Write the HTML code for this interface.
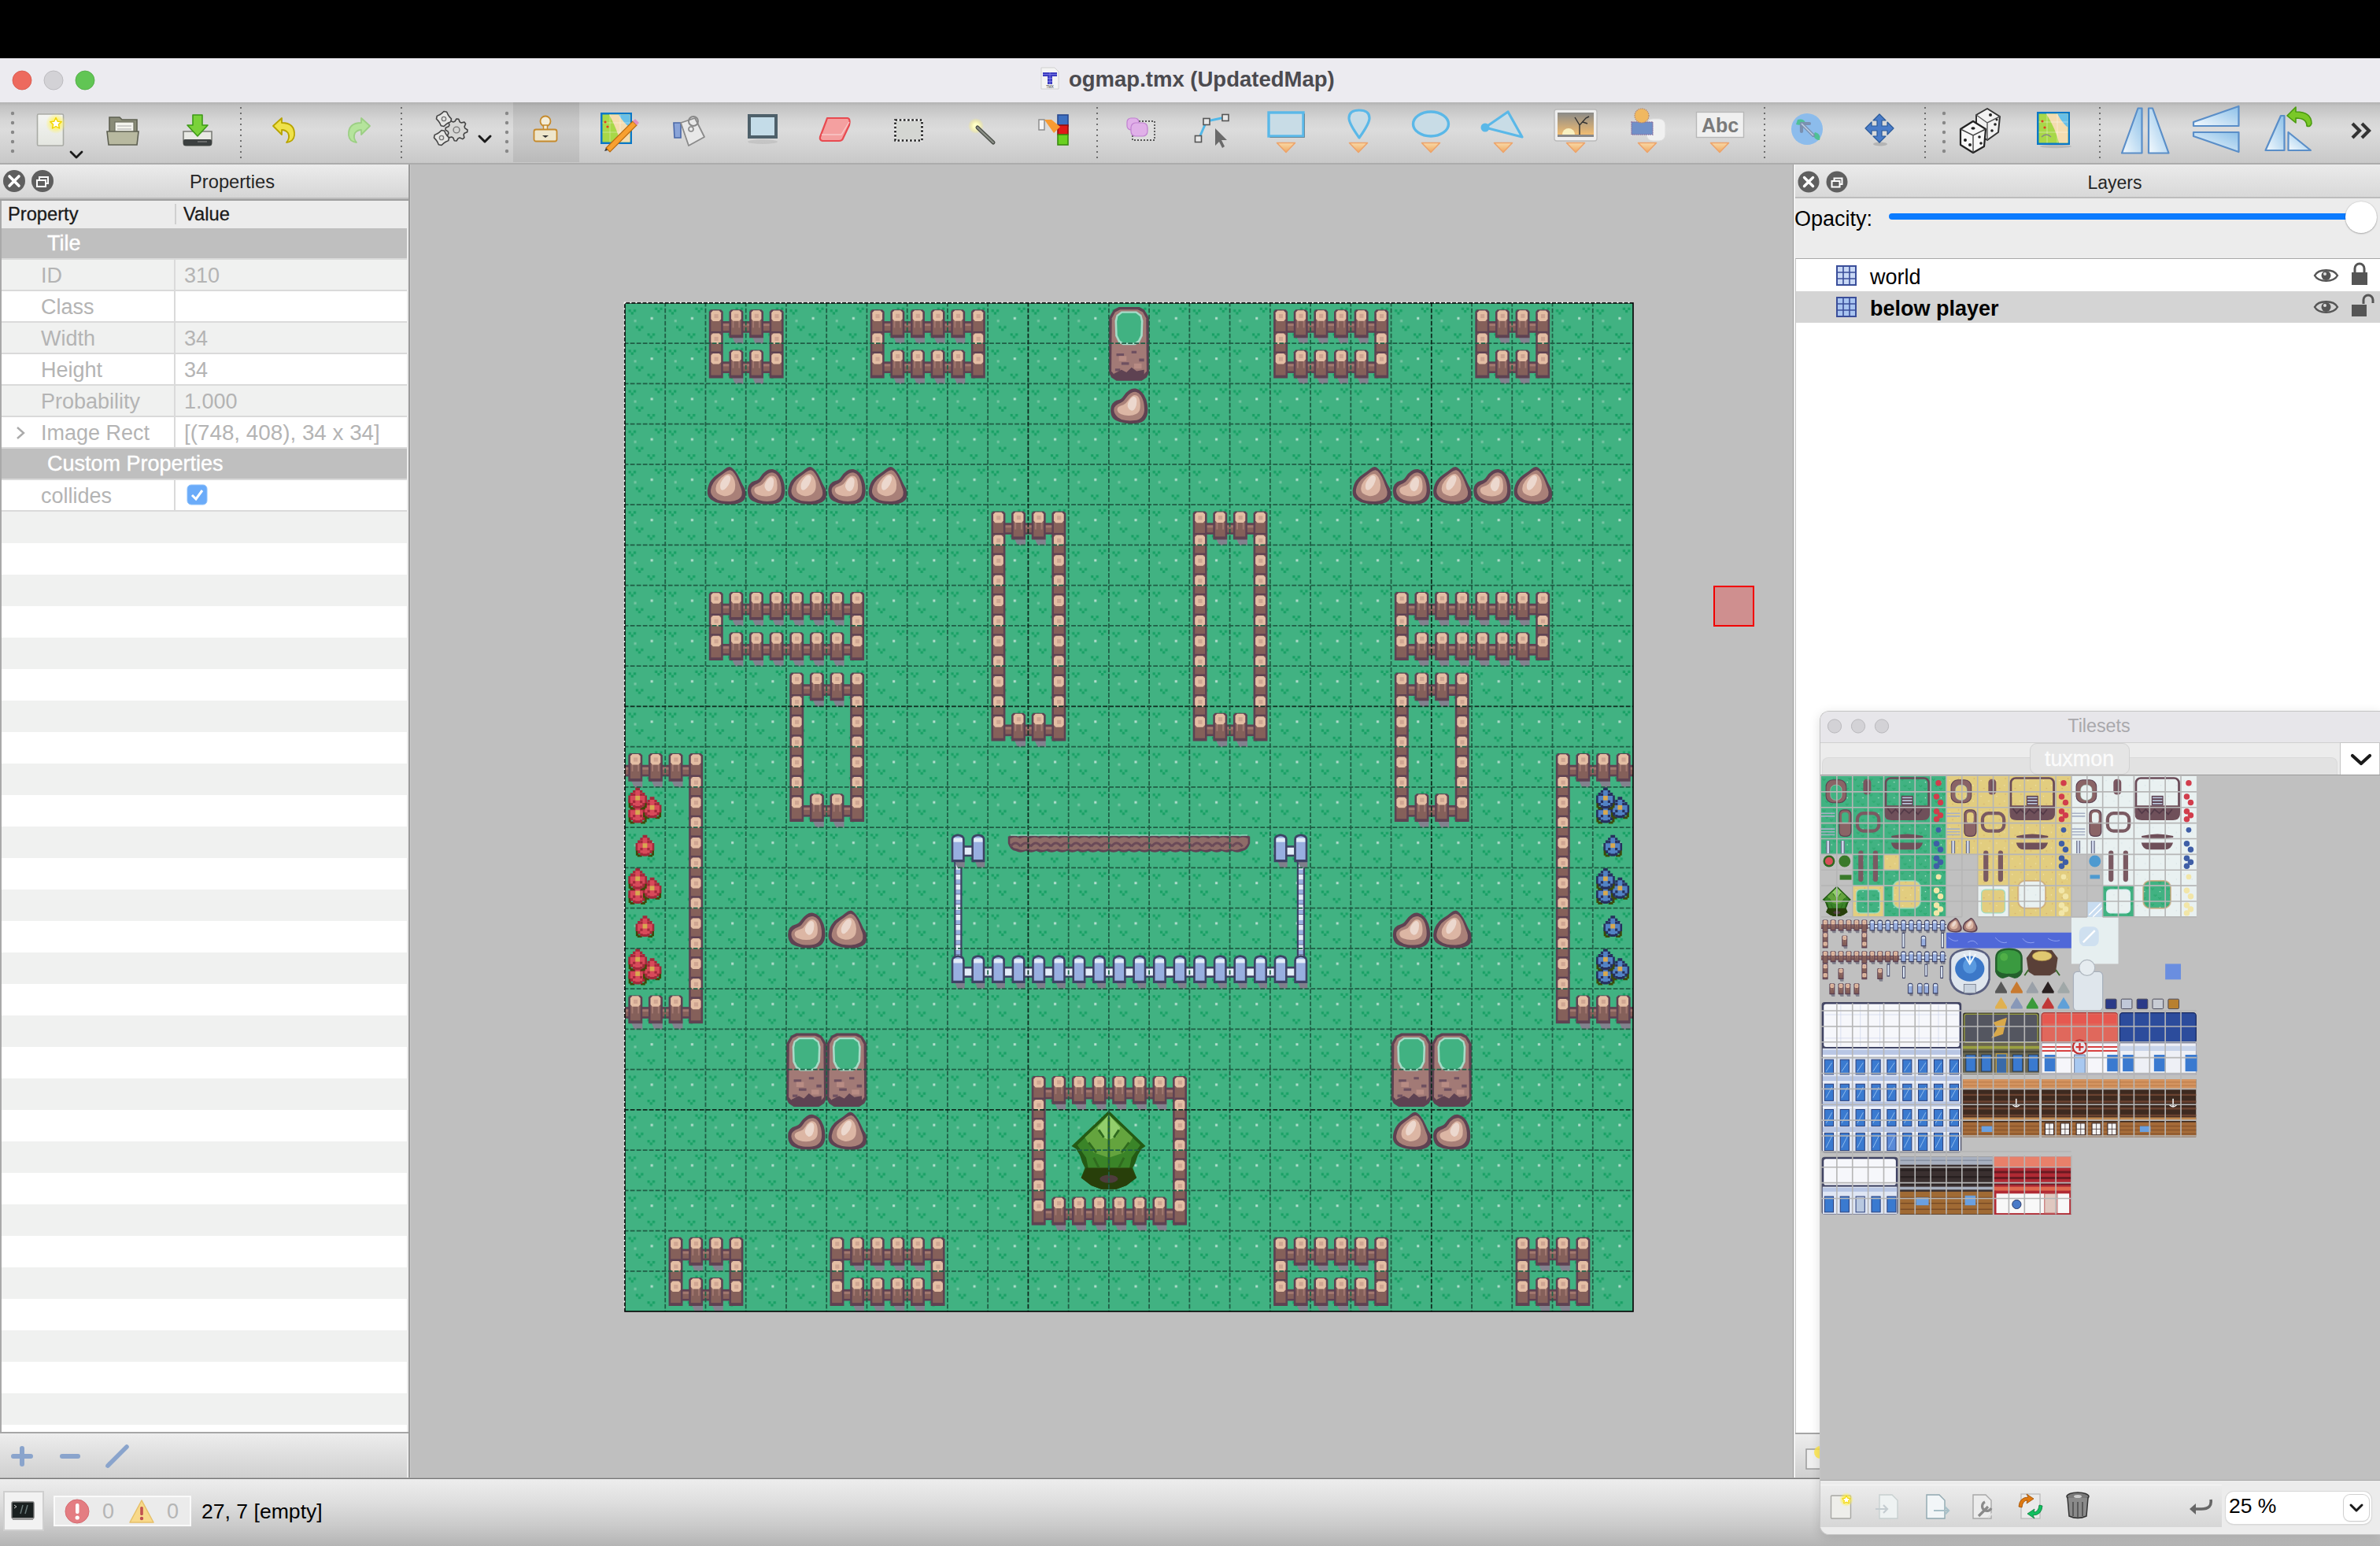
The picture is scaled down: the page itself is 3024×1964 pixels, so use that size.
<!DOCTYPE html>
<html><head><meta charset="utf-8"><title>ogmap.tmx</title>
<style>
*{margin:0;padding:0;box-sizing:border-box}
html,body{width:3024px;height:1964px;overflow:hidden;background:#000;font-family:"Liberation Sans", sans-serif}
.a{position:absolute}
svg.a{overflow:visible}
.t{position:absolute;white-space:nowrap;line-height:1}
</style></head><body>
<div class="a" style="left:0px;top:0px;width:3024px;height:74px;background:#000"></div><div class="a" style="left:0px;top:74px;width:3024px;height:56px;background:#ecebf0"></div><svg class="a" style="left:0px;top:74px;" width="140" height="56" viewBox="0 0 140 56"><circle cx="28" cy="28" r="12" fill="#ed6a5e" stroke="#d55549" stroke-width="0.8"/><circle cx="68" cy="28" r="12" fill="#d3d2d6" stroke="#bdbcc0" stroke-width="1"/><circle cx="108" cy="28" r="12" fill="#61c554" stroke="#4ea843" stroke-width="0.8"/></svg><svg class="a" style="left:1322px;top:85px;" width="24" height="29" viewBox="0 0 24 29"><path d="M1 1 H18 L23 6 V28 H1 Z" fill="#f4f4f4" stroke="#d0d0d0" stroke-width="1"/><rect x="3" y="7" width="18" height="5" fill="#3c3cc0"/><rect x="9" y="7" width="6" height="15" fill="#3c3cc0"/><path d="M3 9.5H21M12 7V22M9 14.5H15M9 18.5H15" stroke="#8a8af0" stroke-width="0.7"/><text x="12" y="26.5" font-size="4.5" text-anchor="middle" fill="#333" font-family="Liberation Sans">TMX</text></svg><div class="t" style="left:1358px;top:86.6px;font-size:27.5px;color:#4b4a4f;font-weight:bold;">ogmap.tmx (UpdatedMap)</div><div class="a" style="left:0px;top:130px;width:3024px;height:79px;background:linear-gradient(#b2b2b2 0,#c2c2c2 6%,#d6d6d6 30%,#dcdcdc 45%,#d2d2d2 75%,#c8c8c8 100%);border-bottom:2px solid #acacac"></div><div class="a" style="left:652px;top:130px;width:84px;height:76px;background:rgba(0,0,0,0.07)"></div><div class="a" style="left:305px;top:136px;width:2px;height:66px;background:repeating-linear-gradient(#555 0 2px,transparent 2px 7px);opacity:.8"></div><div class="a" style="left:509px;top:136px;width:2px;height:66px;background:repeating-linear-gradient(#555 0 2px,transparent 2px 7px);opacity:.8"></div><div class="a" style="left:1393px;top:136px;width:2px;height:66px;background:repeating-linear-gradient(#555 0 2px,transparent 2px 7px);opacity:.8"></div><div class="a" style="left:2241px;top:136px;width:2px;height:66px;background:repeating-linear-gradient(#555 0 2px,transparent 2px 7px);opacity:.8"></div><div class="a" style="left:2445px;top:136px;width:2px;height:66px;background:repeating-linear-gradient(#555 0 2px,transparent 2px 7px);opacity:.8"></div><div class="a" style="left:2667px;top:136px;width:2px;height:66px;background:repeating-linear-gradient(#555 0 2px,transparent 2px 7px);opacity:.8"></div><svg class="a" style="left:12px;top:138px;" width="8" height="60" viewBox="0 0 8 60"><circle cx="4" cy="6" r="2.2" fill="#888"/><circle cx="4" cy="18" r="2.2" fill="#888"/><circle cx="4" cy="30" r="2.2" fill="#888"/><circle cx="4" cy="42" r="2.2" fill="#888"/><circle cx="4" cy="54" r="2.2" fill="#888"/></svg><svg class="a" style="left:640px;top:138px;" width="8" height="60" viewBox="0 0 8 60"><circle cx="4" cy="6" r="2.2" fill="#888"/><circle cx="4" cy="18" r="2.2" fill="#888"/><circle cx="4" cy="30" r="2.2" fill="#888"/><circle cx="4" cy="42" r="2.2" fill="#888"/><circle cx="4" cy="54" r="2.2" fill="#888"/></svg><svg class="a" style="left:2466px;top:138px;" width="8" height="60" viewBox="0 0 8 60"><circle cx="4" cy="6" r="2.2" fill="#888"/><circle cx="4" cy="18" r="2.2" fill="#888"/><circle cx="4" cy="30" r="2.2" fill="#888"/><circle cx="4" cy="42" r="2.2" fill="#888"/><circle cx="4" cy="54" r="2.2" fill="#888"/></svg><svg class="a" style="left:44px;top:142px;" width="46" height="46" viewBox="0 0 46 46"><defs><radialGradient id="glow"><stop offset="0.35" stop-color="#fff36a"/><stop offset="1" stop-color="#fff36a" stop-opacity="0"/></radialGradient><linearGradient id="docg" x1="0" y1="0" x2="0" y2="1"><stop offset="0" stop-color="#f4f5f2"/><stop offset="1" stop-color="#e4e6e0"/></linearGradient></defs><rect x="3.5" y="3" width="33" height="40" rx="1.5" fill="url(#docg)" stroke="#a9aba5" stroke-width="1.6"/><circle cx="27" cy="15" r="13" fill="url(#glow)"/><path d="M27 7.5L29.2 12.3L34.2 12.8L30.4 16.1L31.5 21L27 18.5L22.5 21L23.6 16.1L19.8 12.8L24.8 12.3Z" fill="#fff" stroke="#f2d400" stroke-width="1.4" stroke-linejoin="round"/></svg><svg class="a" style="left:88px;top:191px;" width="18" height="12" viewBox="0 0 18 12"><path d="M2 2L9 9L16 2" fill="none" stroke="#1a1a1a" stroke-width="2.8" stroke-linecap="round" stroke-linejoin="round"/></svg><svg class="a" style="left:134px;top:144px;" width="46" height="44" viewBox="0 0 46 44"><path d="M5 5H18L21 8H40V38H5Z" fill="#8a8c78" stroke="#5e6052" stroke-width="1.6"/><rect x="12" y="11" width="24" height="17" fill="#f4f4ee" stroke="#6e7060" stroke-width="1.2"/><path d="M15 16H33M15 20H33M15 24H33" stroke="#aaa" stroke-width="1.2"/><path d="M2 23H42L40 40H4Z" fill="#b8b9a0" stroke="#5e6052" stroke-width="1.6"/></svg><svg class="a" style="left:229px;top:143px;" width="44" height="46" viewBox="0 0 44 46"><path d="M4 24H40V38Q40 42 36 42H8Q4 42 4 38Z" fill="#e8e9e4" stroke="#7c7e78" stroke-width="1.6"/><rect x="4" y="34" width="36" height="8" rx="2" fill="#3c4040"/><path d="M22 37H34" stroke="#888" stroke-width="1.2"/><path d="M16 3H28V16H35L22 30L9 16H16Z" fill="#7ad23a" stroke="#3e9a18" stroke-width="1.6" stroke-linejoin="round"/></svg><svg class="a" style="left:344px;top:148px;" width="34" height="36" viewBox="0 0 34 36"><path d="M3 12L14 2V8Q31 8 30 24Q29 32 20 33Q25 27 22 21Q19 17 14 17V23Z" fill="#efe24a" stroke="#b8a400" stroke-width="1.8" stroke-linejoin="round"/></svg><svg class="a" style="left:439px;top:148px;" width="34" height="36" viewBox="0 0 34 36"><path d="M31 12L20 2V8Q3 8 4 24Q5 32 14 33Q9 27 12 21Q15 17 20 17V23Z" fill="#b5e49c" stroke="#9ccf84" stroke-width="1.8" stroke-linejoin="round"/></svg><svg class="a" style="left:551px;top:141px;" width="48" height="46" viewBox="0 0 48 46"><polygon points="43.00,24.00 42.73,26.73 39.09,28.18 38.08,30.07 38.90,33.90 36.78,35.64 33.18,34.09 31.13,34.71 29.00,38.00 26.27,37.73 24.82,34.09 22.93,33.08 19.10,33.90 17.36,31.78 18.91,28.18 18.29,26.13 15.00,24.00 15.27,21.27 18.91,19.82 19.92,17.93 19.10,14.10 21.22,12.36 24.82,13.91 26.87,13.29 29.00,10.00 31.73,10.27 33.18,13.91 35.07,14.92 38.90,14.10 40.64,16.22 39.09,19.82 39.71,21.87" fill="#d6d6d4" stroke="#444" stroke-width="1.6" stroke-linejoin="round"/><circle cx="29" cy="24" r="3.9200000000000004" fill="none" stroke="#777" stroke-width="1.4"/><polygon points="22.50,10.00 21.78,13.64 18.24,15.24 15.84,16.85 13.00,19.50 9.36,18.78 7.76,15.24 6.15,12.84 3.50,10.00 4.22,6.36 7.76,4.76 10.16,3.15 13.00,0.50 16.64,1.22 18.24,4.76 19.85,7.16" fill="#e6e6e4" stroke="#444" stroke-width="1.6" stroke-linejoin="round"/><circle cx="13" cy="10" r="2.66" fill="none" stroke="#777" stroke-width="1.4"/><polygon points="19.50,34.00 18.78,37.64 15.24,39.24 12.84,40.85 10.00,43.50 6.36,42.78 4.76,39.24 3.15,36.84 0.50,34.00 1.22,30.36 4.76,28.76 7.16,27.15 10.00,24.50 13.64,25.22 15.24,28.76 16.85,31.16" fill="#e6e6e4" stroke="#444" stroke-width="1.6" stroke-linejoin="round"/><circle cx="10" cy="34" r="2.66" fill="none" stroke="#777" stroke-width="1.4"/></svg><svg class="a" style="left:606px;top:170px;" width="20" height="15" viewBox="0 0 20 15"><path d="M3 3L10 10L17 3" fill="none" stroke="#1a1a1a" stroke-width="3" stroke-linecap="round" stroke-linejoin="round"/></svg><svg class="a" style="left:676px;top:146px;" width="34" height="36" viewBox="0 0 34 36"><circle cx="17" cy="8" r="6.5" fill="#f3ecd8" stroke="#c68a2c" stroke-width="1.8"/><rect x="14.5" y="13" width="5" height="6" fill="#f3ecd8" stroke="#c68a2c" stroke-width="1.5"/><rect x="2.5" y="18.5" width="29" height="15" rx="2.5" fill="#eee6cc" stroke="#c68a2c" stroke-width="1.8"/><path d="M13 26H21L17 29Z" fill="#333"/></svg><svg class="a" style="left:760px;top:140px;" width="52" height="52" viewBox="0 0 52 52"><rect x="3" y="3" width="40" height="40" fill="#0a78c8"/><rect x="5.5" y="5.5" width="35" height="35" fill="#a8d848"/><path d="M14 5.5H40.5V40.5H28Q24 24 14 5.5Z" fill="#f4dcb0"/><path d="M26 5.5H40.5V22Q32 16 26 5.5Z" fill="#68c0e8"/><path d="M15 5.5V40.5M28 5.5V40.5M5.5 16H40.5M5.5 28H40.5" stroke="#ffffff" stroke-opacity=".35" stroke-width="1"/><circle cx="9" cy="15" r="1.6" fill="#e04020"/><circle cx="12" cy="21" r="1.6" fill="#e04020"/><path d="M10 48L44 14L49 19L15 53Z" fill="#f8a030" stroke="#b86a10" stroke-width="1.2"/><path d="M44 14L47 11L52 16L49 19Z" fill="#e090c0"/><path d="M10 48L8 52L12 51Z" fill="#333"/></svg><svg class="a" style="left:853px;top:142px;" width="48" height="48" viewBox="0 0 48 48"><path d="M3 14H12V33H4Z" fill="#8aa4d8" stroke="#4a68a8" stroke-width="1.6"/><path d="M12 14L30 8L42 32L22 43Z" fill="#e8e8e8" stroke="#8a8a8a" stroke-width="1.8" stroke-linejoin="round"/><circle cx="28" cy="12" r="6" fill="none" stroke="#888" stroke-width="2"/><circle cx="25" cy="22" r="3" fill="none" stroke="#888" stroke-width="1.6"/></svg><svg class="a" style="left:948px;top:143px;" width="44" height="42" viewBox="0 0 44 42"><ellipse cx="21" cy="37" rx="19" ry="3" fill="#000" opacity=".08"/><rect x="4" y="4" width="34" height="27" fill="#c4dce8" stroke="#4e606a" stroke-width="4"/></svg><svg class="a" style="left:1039px;top:147px;" width="44" height="36" viewBox="0 0 44 36"><path d="M12 3H38Q42 4 40 12L32 29Q31 32 27 32H6Q2 31 3 27L11 6Q12 3 12 3Z" fill="#f4a0a0" stroke="#e84a50" stroke-width="2.2" stroke-linejoin="round"/><path d="M5 24H30L40 8" fill="none" stroke="#f8c8c8" stroke-width="1.4"/></svg><svg class="a" style="left:1135px;top:150px;" width="40" height="32" viewBox="0 0 40 32"><rect x="2.5" y="2.5" width="34" height="26" fill="#d4d6d2" stroke="#fff" stroke-width="2"/><rect x="2.5" y="2.5" width="34" height="26" fill="none" stroke="#222" stroke-width="2.6" stroke-dasharray="2.6 2.6"/></svg><svg class="a" style="left:1226px;top:150px;" width="42" height="36" viewBox="0 0 42 36"><defs><radialGradient id="wg"><stop offset="0.3" stop-color="#ffffc8"/><stop offset="1" stop-color="#fff060" stop-opacity="0"/></radialGradient></defs><circle cx="14" cy="10" r="10" fill="url(#wg)"/><path d="M16 12L36 31" stroke="#4a4e48" stroke-width="5" stroke-linecap="round"/><path d="M16 12L36 31" stroke="#8c9088" stroke-width="2.4" stroke-linecap="round"/></svg><svg class="a" style="left:1316px;top:143px;" width="46" height="44" viewBox="0 0 46 44"><rect x="28" y="3" width="13" height="14" fill="#3e70c0" stroke="#2a4a90" stroke-width="1.6"/><rect x="28" y="16" width="13" height="12" fill="#e01818" stroke="#901010" stroke-width="1.6"/><rect x="28" y="28" width="13" height="13" fill="#6ad020" stroke="#3a8a10" stroke-width="1.6"/><rect x="4" y="9" width="7" height="13" fill="#f4f4f4" stroke="#888" stroke-width="1.4"/><path d="M11 9H20L31 18L23 26Z" fill="#f89a30"/></svg><svg class="a" style="left:1430px;top:148px;" width="42" height="33" viewBox="0 0 42 33"><rect x="9" y="6" width="28" height="24" fill="#ddd" stroke="#555" stroke-width="1.8" stroke-dasharray="2 2"/><rect x="2" y="2" width="15" height="15" rx="5" fill="#e0b0e8" stroke="#c080d0" stroke-width="1.2"/><rect x="7" y="8" width="21" height="17" rx="6" fill="#e0b0e8" stroke="#c080d0" stroke-width="1.2"/></svg><svg class="a" style="left:1515px;top:143px;" width="50" height="48" viewBox="0 0 50 48"><path d="M8 34L18 11L42 6" fill="none" stroke="#52b8e8" stroke-width="3"/><rect x="3.5" y="29.5" width="8" height="8" fill="#e8e8e8" stroke="#555" stroke-width="1.6"/><rect x="14" y="7.5" width="8" height="8" fill="#e8e8e8" stroke="#555" stroke-width="1.6"/><rect x="38" y="2.5" width="8" height="8" fill="#e8e8e8" stroke="#555" stroke-width="1.6"/><path d="M29 20V42L34 37L38 45L41 43L37 35H44Z" fill="#6a6a6a"/></svg><svg class="a" style="left:1608px;top:139px;" width="52" height="38" viewBox="0 0 52 38"><rect x="4" y="4" width="44" height="30" fill="#c8dce6" stroke="#5ab8e8" stroke-width="3.4"/><path d="M5.5 35.5H49.5V5.5" fill="none" stroke="#555" stroke-width="1" opacity=".5"/></svg><svg class="a" style="left:1621px;top:180px;" width="26" height="16" viewBox="0 0 26 16"><defs><linearGradient id="tg1634" x1="0" y1="0" x2="0" y2="1"><stop offset="0" stop-color="#f8d9a8"/><stop offset="1" stop-color="#f0a860"/></linearGradient></defs><path d="M1.5 1.5H24.5L13 13.5Z" fill="url(#tg1634)" stroke="#eda36a" stroke-width="1.6" stroke-linejoin="round"/></svg><svg class="a" style="left:1710px;top:137px;" width="34" height="42" viewBox="0 0 34 42"><path d="M17 38Q4 20 4 13Q4 3 17 3Q30 3 30 13Q30 20 17 38Z" fill="#c8dce6" stroke="#5ab8e8" stroke-width="3.2" stroke-linejoin="round"/></svg><svg class="a" style="left:1713px;top:180px;" width="26" height="16" viewBox="0 0 26 16"><defs><linearGradient id="tg1726" x1="0" y1="0" x2="0" y2="1"><stop offset="0" stop-color="#f8d9a8"/><stop offset="1" stop-color="#f0a860"/></linearGradient></defs><path d="M1.5 1.5H24.5L13 13.5Z" fill="url(#tg1726)" stroke="#eda36a" stroke-width="1.6" stroke-linejoin="round"/></svg><svg class="a" style="left:1792px;top:139px;" width="52" height="38" viewBox="0 0 52 38"><ellipse cx="26" cy="18.5" rx="22.5" ry="15.5" fill="#c8dce6" stroke="#5ab8e8" stroke-width="3.4"/></svg><svg class="a" style="left:1805px;top:180px;" width="26" height="16" viewBox="0 0 26 16"><defs><linearGradient id="tg1818" x1="0" y1="0" x2="0" y2="1"><stop offset="0" stop-color="#f8d9a8"/><stop offset="1" stop-color="#f0a860"/></linearGradient></defs><path d="M1.5 1.5H24.5L13 13.5Z" fill="url(#tg1818)" stroke="#eda36a" stroke-width="1.6" stroke-linejoin="round"/></svg><svg class="a" style="left:1879px;top:138px;" width="60" height="40" viewBox="0 0 60 40"><path d="M8 24L37 4L55 36Z" fill="#c8dce6" stroke="#5ab8e8" stroke-width="3.2" stroke-linejoin="round"/><circle cx="8" cy="24" r="5.5" fill="#5ab8e8"/></svg><svg class="a" style="left:1897px;top:180px;" width="26" height="16" viewBox="0 0 26 16"><defs><linearGradient id="tg1910" x1="0" y1="0" x2="0" y2="1"><stop offset="0" stop-color="#f8d9a8"/><stop offset="1" stop-color="#f0a860"/></linearGradient></defs><path d="M1.5 1.5H24.5L13 13.5Z" fill="url(#tg1910)" stroke="#eda36a" stroke-width="1.6" stroke-linejoin="round"/></svg><svg class="a" style="left:1973px;top:137px;" width="58" height="44" viewBox="0 0 58 44"><defs><linearGradient id="sky" x1="0" y1="0" x2="0" y2="1"><stop offset="0" stop-color="#8a8a88"/><stop offset="1" stop-color="#f8c070"/></linearGradient></defs><rect x="2" y="2" width="54" height="40" rx="3" fill="#eee" stroke="#bbb" stroke-width="1.4"/><rect x="6" y="6" width="46" height="30" fill="url(#sky)"/><path d="M12 34A8 8 0 0 1 28 34Z" fill="#f8f0c0"/><rect x="6" y="34" width="46" height="3" fill="#888"/><path d="M34 34V22L28 12M34 22L42 13L46 11M38 18L44 20" stroke="#333" stroke-width="1.4" fill="none"/></svg><svg class="a" style="left:1989px;top:180px;" width="26" height="16" viewBox="0 0 26 16"><defs><linearGradient id="tg2002" x1="0" y1="0" x2="0" y2="1"><stop offset="0" stop-color="#f8d9a8"/><stop offset="1" stop-color="#f0a860"/></linearGradient></defs><path d="M1.5 1.5H24.5L13 13.5Z" fill="url(#tg2002)" stroke="#eda36a" stroke-width="1.6" stroke-linejoin="round"/></svg><svg class="a" style="left:2070px;top:137px;" width="50" height="45" viewBox="0 0 50 45"><rect x="22" y="14" width="24" height="28" rx="8" fill="#f0f0f0" stroke="#ddd" stroke-width="1"/><rect x="3" y="18" width="27" height="16" fill="#7090c8" stroke="#8a70a0" stroke-width="1.4" stroke-dasharray="1.5 1"/><circle cx="16" cy="10" r="9" fill="#f0b860" stroke="#b88a6a" stroke-width="1.2" stroke-dasharray="1.5 1"/></svg><svg class="a" style="left:2080px;top:180px;" width="26" height="16" viewBox="0 0 26 16"><defs><linearGradient id="tg2093" x1="0" y1="0" x2="0" y2="1"><stop offset="0" stop-color="#f8d9a8"/><stop offset="1" stop-color="#f0a860"/></linearGradient></defs><path d="M1.5 1.5H24.5L13 13.5Z" fill="url(#tg2093)" stroke="#eda36a" stroke-width="1.6" stroke-linejoin="round"/></svg><svg class="a" style="left:2154px;top:141px;" width="64" height="36" viewBox="0 0 64 36"><rect x="1.5" y="1.5" width="60" height="32" fill="#f0f0f0" stroke="#b8b8b8" stroke-width="1.4"/><text x="31.5" y="27" text-anchor="middle" font-family="Liberation Sans" font-weight="bold" font-size="25" fill="#7a7a7a">Abc</text></svg><svg class="a" style="left:2172px;top:180px;" width="26" height="16" viewBox="0 0 26 16"><defs><linearGradient id="tg2185" x1="0" y1="0" x2="0" y2="1"><stop offset="0" stop-color="#f8d9a8"/><stop offset="1" stop-color="#f0a860"/></linearGradient></defs><path d="M1.5 1.5H24.5L13 13.5Z" fill="url(#tg2185)" stroke="#eda36a" stroke-width="1.6" stroke-linejoin="round"/></svg><svg class="a" style="left:2274px;top:142px;" width="46" height="44" viewBox="0 0 46 44"><circle cx="22" cy="22" r="20" fill="#8cbcec"/><path d="M10 10Q18 8 20 14Q14 18 8 16ZM32 26Q40 28 38 36Q32 36 30 30Z" fill="#40c080" opacity=".8"/><path d="M15 15L30 30M15 15V25M15 15H25" stroke="#7a90b0" stroke-width="4.2" stroke-linecap="round" fill="none"/><path d="M15 15L30 30" stroke="#c0d0e4" stroke-width="1.5"/></svg><svg class="a" style="left:2368px;top:143px;" width="44" height="44" viewBox="0 0 44 44"><path d="M20 2L29 11H23V17H29V11L29 11ZM20 2L11 11H17V17H11V23H17H11L2 20L11 11Z" fill="none"/><path d="M20 2L28 10H23V17H30V12L38 20L30 28V23H23V30H28L20 38L12 30H17V23H10V28L2 20L10 12V17H17V10H12Z" fill="#4a7cc8" stroke="#2a5a9a" stroke-width="1.2" stroke-linejoin="round"/><ellipse cx="21" cy="40" rx="9" ry="2.5" fill="#000" opacity=".15"/></svg><svg class="a" style="left:2487px;top:134px;" width="62" height="62" viewBox="0 0 62 62"><path d="M24 12L38 4L54 14L52 34L38 44L24 34Z" fill="#f2f2f2" stroke="#333" stroke-width="2" stroke-linejoin="round"/><path d="M24 12L38 22L54 14M38 22V44" fill="none" stroke="#555" stroke-width="1.4"/><circle cx="42" cy="12" r="2" fill="#222"/><circle cx="48" cy="24" r="1.8" fill="#222"/><circle cx="44" cy="32" r="1.8" fill="#222"/><circle cx="50" cy="18" r="1.5" fill="#222"/><path d="M4 30L20 20L36 30L34 52L20 60L4 50Z" fill="#f8f8f8" stroke="#222" stroke-width="2.2" stroke-linejoin="round"/><path d="M4 30L20 38L36 30M20 38V60" fill="none" stroke="#444" stroke-width="1.4"/><ellipse cx="20" cy="29" rx="2.6" ry="1.8" fill="#222"/><circle cx="10" cy="44" r="2" fill="#222"/><circle cx="16" cy="50" r="2" fill="#222"/><circle cx="28" cy="40" r="1.8" fill="#222"/><circle cx="30" cy="48" r="1.8" fill="#222"/></svg><svg class="a" style="left:2586px;top:140px;" width="50" height="50" viewBox="0 0 50 50"><ellipse cx="26" cy="46" rx="20" ry="2.2" fill="#000" opacity=".12"/><rect x="2" y="2" width="42" height="42" fill="#0a78c8"/><rect x="4.5" y="4.5" width="37" height="37" fill="#a8d848"/><path d="M14 4.5H41.5V41.5H30Q26 24 14 4.5Z" fill="#f4dcb0"/><path d="M28 4.5H41.5V22Q34 16 28 4.5Z" fill="#68c0e8"/><path d="M15 4.5V41.5M28 4.5V41.5M4.5 15H41.5M4.5 28H41.5" stroke="#fff" stroke-opacity=".4" stroke-width="1"/><circle cx="9" cy="14" r="1.6" fill="#e04020"/><circle cx="12" cy="22" r="1.6" fill="#e04020"/><path d="M8 34Q14 28 20 34" stroke="#888" stroke-width="1.5" fill="none"/></svg><svg class="a" style="left:2692px;top:133px;" width="68" height="66" viewBox="0 0 68 66"><defs><linearGradient id="fl" x1="0" y1="1" x2="1" y2="0"><stop offset="0" stop-color="#f4fafe"/><stop offset="1" stop-color="#8cc0e8"/></linearGradient></defs><path d="M29.5 4.5H24.5L4 61.5H29.5Z" fill="url(#fl)" stroke="#5a8ec8" stroke-width="2.2" stroke-linejoin="round"/><path d="M38 4.5H43L63.5 61.5H38Z" fill="url(#fl)" stroke="#5a8ec8" stroke-width="2.2" stroke-linejoin="round"/></svg><svg class="a" style="left:2783px;top:132px;" width="66" height="66" viewBox="0 0 66 66"><path d="M61.5 3V28H4V23Z" fill="url(#fl)" stroke="#5a8ec8" stroke-width="2.2" stroke-linejoin="round"/><path d="M61.5 61V36H4V41Z" fill="url(#fl)" stroke="#5a8ec8" stroke-width="2.2" stroke-linejoin="round"/></svg><svg class="a" style="left:2875px;top:133px;" width="66" height="62" viewBox="0 0 66 62"><path d="M27.5 14H23L3.5 58H27.5Z" fill="url(#fl)" stroke="#5a8ec8" stroke-width="2.2" stroke-linejoin="round"/><path d="M32.5 35V58H61Z" fill="url(#fl)" stroke="#5a8ec8" stroke-width="2.2" stroke-linejoin="round"/><path d="M31 14L42 3V9Q62 9 62 24Q60 29 56 27Q56 17 42 17V23Z" fill="#7ac828" stroke="#4a9a10" stroke-width="1.6" stroke-linejoin="round"/></svg><svg class="a" style="left:2986px;top:154px;" width="32" height="24" viewBox="0 0 32 24"><path d="M3 3L12 12L3 21M15 3L24 12L15 21" fill="none" stroke="#333" stroke-width="4.2" stroke-linejoin="miter"/></svg><div class="a" style="left:0px;top:209px;width:520px;height:1669px;background:#ececec"></div><div class="a" style="left:0px;top:209px;width:519px;height:43px;background:linear-gradient(#ececec,#d5d5d5)"></div><div class="a" style="left:0px;top:251px;width:519px;height:2px;background:#bcbcbc"></div><div class="a" style="left:0px;top:253px;width:519px;height:2px;background:#9e9e9e"></div><svg class="a" style="left:2px;top:214px;" width="72" height="34" viewBox="0 0 72 34"><circle cx="16" cy="16" r="14" fill="#5f5f5f"/><path d="M10 10L22 22M22 10L10 22" stroke="#fff" stroke-width="3.6" stroke-linecap="round"/><circle cx="52" cy="16" r="14" fill="#5f5f5f"/><rect x="45" y="15" width="11" height="8" fill="none" stroke="#fff" stroke-width="2"/><path d="M48 15V11H59V19H56" fill="none" stroke="#fff" stroke-width="2"/></svg><div class="t" style="left:-205px;width:1000px;text-align:center;top:219.9px;font-size:23.7px;color:#262626;font-weight:normal;">Properties</div><div class="a" style="left:2px;top:255px;width:515px;height:35px;background:#ececec"></div><div class="a" style="left:222px;top:259px;width:2px;height:26px;background:#d0d0d0"></div><div class="t" style="left:10px;top:260.9px;font-size:23.7px;color:#1a1a1a;font-weight:normal;-webkit-text-stroke:0.3px #1a1a1a">Property</div><div class="t" style="left:233px;top:260.9px;font-size:23.7px;color:#1a1a1a;font-weight:normal;-webkit-text-stroke:0.3px #1a1a1a">Value</div><div class="a" style="left:0px;top:255px;width:2px;height:1565px;background:#a9a9a9"></div><div class="a" style="left:2px;top:290px;width:515px;height:40px;background:#ffffff"></div><div class="a" style="left:2px;top:330px;width:515px;height:40px;background:#f0f1f0"></div><div class="a" style="left:2px;top:370px;width:515px;height:40px;background:#ffffff"></div><div class="a" style="left:2px;top:410px;width:515px;height:40px;background:#f0f1f0"></div><div class="a" style="left:2px;top:450px;width:515px;height:40px;background:#ffffff"></div><div class="a" style="left:2px;top:490px;width:515px;height:40px;background:#f0f1f0"></div><div class="a" style="left:2px;top:530px;width:515px;height:40px;background:#ffffff"></div><div class="a" style="left:2px;top:570px;width:515px;height:40px;background:#f0f1f0"></div><div class="a" style="left:2px;top:610px;width:515px;height:40px;background:#ffffff"></div><div class="a" style="left:2px;top:650px;width:515px;height:40px;background:#f0f1f0"></div><div class="a" style="left:2px;top:690px;width:515px;height:40px;background:#ffffff"></div><div class="a" style="left:2px;top:730px;width:515px;height:40px;background:#f0f1f0"></div><div class="a" style="left:2px;top:770px;width:515px;height:40px;background:#ffffff"></div><div class="a" style="left:2px;top:810px;width:515px;height:40px;background:#f0f1f0"></div><div class="a" style="left:2px;top:850px;width:515px;height:40px;background:#ffffff"></div><div class="a" style="left:2px;top:890px;width:515px;height:40px;background:#f0f1f0"></div><div class="a" style="left:2px;top:930px;width:515px;height:40px;background:#ffffff"></div><div class="a" style="left:2px;top:970px;width:515px;height:40px;background:#f0f1f0"></div><div class="a" style="left:2px;top:1010px;width:515px;height:40px;background:#ffffff"></div><div class="a" style="left:2px;top:1050px;width:515px;height:40px;background:#f0f1f0"></div><div class="a" style="left:2px;top:1090px;width:515px;height:40px;background:#ffffff"></div><div class="a" style="left:2px;top:1130px;width:515px;height:40px;background:#f0f1f0"></div><div class="a" style="left:2px;top:1170px;width:515px;height:40px;background:#ffffff"></div><div class="a" style="left:2px;top:1210px;width:515px;height:40px;background:#f0f1f0"></div><div class="a" style="left:2px;top:1250px;width:515px;height:40px;background:#ffffff"></div><div class="a" style="left:2px;top:1290px;width:515px;height:40px;background:#f0f1f0"></div><div class="a" style="left:2px;top:1330px;width:515px;height:40px;background:#ffffff"></div><div class="a" style="left:2px;top:1370px;width:515px;height:40px;background:#f0f1f0"></div><div class="a" style="left:2px;top:1410px;width:515px;height:40px;background:#ffffff"></div><div class="a" style="left:2px;top:1450px;width:515px;height:40px;background:#f0f1f0"></div><div class="a" style="left:2px;top:1490px;width:515px;height:40px;background:#ffffff"></div><div class="a" style="left:2px;top:1530px;width:515px;height:40px;background:#f0f1f0"></div><div class="a" style="left:2px;top:1570px;width:515px;height:40px;background:#ffffff"></div><div class="a" style="left:2px;top:1610px;width:515px;height:40px;background:#f0f1f0"></div><div class="a" style="left:2px;top:1650px;width:515px;height:40px;background:#ffffff"></div><div class="a" style="left:2px;top:1690px;width:515px;height:40px;background:#f0f1f0"></div><div class="a" style="left:2px;top:1730px;width:515px;height:40px;background:#ffffff"></div><div class="a" style="left:2px;top:1770px;width:515px;height:40px;background:#f0f1f0"></div><div class="a" style="left:2px;top:1810px;width:515px;height:10px;background:#ffffff"></div><div class="a" style="left:2px;top:290px;width:515px;height:38px;background:#bfbfbf"></div><div class="a" style="left:2px;top:570px;width:515px;height:38px;background:#bfbfbf"></div><div class="t" style="left:60px;top:296.1px;font-size:27px;color:#ffffff;font-weight:normal;-webkit-text-stroke:0.4px #fff">Tile</div><div class="t" style="left:60px;top:576.0px;font-size:27px;color:#ffffff;font-weight:normal;-webkit-text-stroke:0.4px #fff">Custom Properties</div><div class="a" style="left:2px;top:328px;width:515px;height:2px;background:#dadada"></div><div class="a" style="left:2px;top:368px;width:515px;height:2px;background:#dadada"></div><div class="a" style="left:2px;top:408px;width:515px;height:2px;background:#dadada"></div><div class="a" style="left:2px;top:448px;width:515px;height:2px;background:#dadada"></div><div class="a" style="left:2px;top:488px;width:515px;height:2px;background:#dadada"></div><div class="a" style="left:2px;top:528px;width:515px;height:2px;background:#dadada"></div><div class="a" style="left:2px;top:568px;width:515px;height:2px;background:#dadada"></div><div class="a" style="left:2px;top:608px;width:515px;height:2px;background:#dadada"></div><div class="a" style="left:2px;top:648px;width:515px;height:2px;background:#dadada"></div><div class="a" style="left:221px;top:330px;width:2px;height:40px;background:#dadada"></div><div class="a" style="left:221px;top:370px;width:2px;height:40px;background:#dadada"></div><div class="a" style="left:221px;top:410px;width:2px;height:40px;background:#dadada"></div><div class="a" style="left:221px;top:450px;width:2px;height:40px;background:#dadada"></div><div class="a" style="left:221px;top:490px;width:2px;height:40px;background:#dadada"></div><div class="a" style="left:221px;top:530px;width:2px;height:40px;background:#dadada"></div><div class="a" style="left:221px;top:610px;width:2px;height:40px;background:#dadada"></div><div class="t" style="left:52px;top:337.1px;font-size:27px;color:#b4b4b4;font-weight:normal;">ID</div><div class="t" style="left:234px;top:337.1px;font-size:27px;color:#b4b4b4;font-weight:normal;">310</div><div class="t" style="left:52px;top:377.1px;font-size:27px;color:#b4b4b4;font-weight:normal;">Class</div><div class="t" style="left:52px;top:417.1px;font-size:27px;color:#b4b4b4;font-weight:normal;">Width</div><div class="t" style="left:234px;top:417.1px;font-size:27px;color:#b4b4b4;font-weight:normal;">34</div><div class="t" style="left:52px;top:457.1px;font-size:27px;color:#b4b4b4;font-weight:normal;">Height</div><div class="t" style="left:234px;top:457.1px;font-size:27px;color:#b4b4b4;font-weight:normal;">34</div><div class="t" style="left:52px;top:497.1px;font-size:27px;color:#b4b4b4;font-weight:normal;">Probability</div><div class="t" style="left:234px;top:497.1px;font-size:27px;color:#b4b4b4;font-weight:normal;">1.000</div><div class="t" style="left:52px;top:537.0px;font-size:27px;color:#b4b4b4;font-weight:normal;">Image Rect</div><div class="t" style="left:234px;top:536.4px;font-size:27.8px;color:#b4b4b4;font-weight:normal;">[(748, 408), 34 x 34]</div><svg class="a" style="left:18px;top:540px;" width="16" height="20" viewBox="0 0 16 20"><path d="M4 3L12 10L4 17" fill="none" stroke="#aaa" stroke-width="2.4"/></svg><div class="t" style="left:52px;top:617.0px;font-size:27px;color:#b4b4b4;font-weight:normal;">collides</div><svg class="a" style="left:237px;top:615px;" width="28" height="28" viewBox="0 0 28 28"><rect x="1" y="1" width="25" height="25" rx="5" fill="#6aabf9" stroke="#8cc0fb"/><path d="M7 14L12 19L20 8" fill="none" stroke="#fff" stroke-width="3"/></svg><div class="a" style="left:519px;top:209px;width:2px;height:1669px;background:#9a9a9a"></div><div class="a" style="left:521px;top:209px;width:1px;height:1669px;background:#cccccc"></div><div class="a" style="left:0px;top:1819px;width:519px;height:2px;background:#a6a6a6"></div><div class="a" style="left:0px;top:1821px;width:517px;height:56px;background:linear-gradient(#ededed,#d0d0d0)"></div><svg class="a" style="left:10px;top:1830px;" width="160" height="40" viewBox="0 0 160 40"><path d="M18 10V30M7 20H29" stroke="#8aa4cc" stroke-width="6" stroke-linecap="round"/><path d="M69 20H89" stroke="#8aa4cc" stroke-width="6" stroke-linecap="round"/><path d="M127 32L151 8" stroke="#8aa4cc" stroke-width="5.5" stroke-linecap="round"/><path d="M124 34L128 27L131 31Z" fill="#8aa4cc"/></svg><div class="a" style="left:522px;top:209px;width:1757px;height:1669px;background:#bfbfbf"></div><div class="a" style="left:2177px;top:744px;width:52px;height:52px;background:#cf8f8f;border:2px solid #f20000"></div><div class="a" style="left:2279px;top:209px;width:745px;height:1669px;background:#ececec"></div><div class="a" style="left:2278px;top:209px;width:1px;height:1669px;background:#9c9c9c"></div><div class="a" style="left:2279px;top:209px;width:2px;height:1669px;background:#f2f2f2"></div><div class="a" style="left:2281px;top:210px;width:743px;height:41px;background:linear-gradient(#eaeaea,#d8d8d8)"></div><div class="a" style="left:2281px;top:250px;width:743px;height:2px;background:#bdbdbd"></div><svg class="a" style="left:2283px;top:216px;" width="70" height="30" viewBox="0 0 70 30"><circle cx="15" cy="15" r="13.5" fill="#5f5f5f"/><path d="M9.5 9.5L20.5 20.5M20.5 9.5L9.5 20.5" stroke="#fff" stroke-width="3.4" stroke-linecap="round"/><circle cx="51" cy="15" r="13.5" fill="#5f5f5f"/><rect x="44.5" y="14" width="10" height="7.5" fill="none" stroke="#fff" stroke-width="2"/><path d="M47.5 14V10.5H57.5V18H54.5" fill="none" stroke="#fff" stroke-width="2"/></svg><div class="t" style="left:2187px;width:1000px;text-align:center;top:221.4px;font-size:23px;color:#262626;font-weight:normal;">Layers</div><div class="t" style="left:2280px;top:265.1px;font-size:27px;color:#000;font-weight:normal;">Opacity:</div><div class="a" style="left:2400px;top:271px;width:600px;height:8px;background:#0b7bff;border-radius:4px"></div><div class="a" style="left:2980px;top:256px;width:40px;height:40px;background:#fff;border-radius:50%;box-shadow:0 0.5px 2px rgba(0,0,0,.45)"></div><div class="a" style="left:2281px;top:328px;width:743px;height:1492px;background:#fff;border-top:1px solid #a8a8a8;border-left:1px solid #c8c8c8"></div><div class="a" style="left:2282px;top:370px;width:742px;height:40px;background:#d4d4d4"></div><svg class="a" style="left:2333px;top:337px;" width="26" height="26" viewBox="0 0 26 26"><rect x="1" y="1" width="24" height="24" fill="#c8d8f5" stroke="#3a4e9a" stroke-width="2"/><path d="M9 1V25M17 1V25M1 9H25M1 17H25" stroke="#3a4e9a" stroke-width="1.6"/></svg><svg class="a" style="left:2333px;top:377px;" width="26" height="26" viewBox="0 0 26 26"><rect x="1" y="1" width="24" height="24" fill="#a8c4f0" stroke="#3a4e9a" stroke-width="2"/><path d="M9 1V25M17 1V25M1 9H25M1 17H25" stroke="#3a4e9a" stroke-width="1.6"/></svg><div class="t" style="left:2376px;top:339.1px;font-size:27px;color:#000;font-weight:normal;">world</div><div class="t" style="left:2376px;top:379.1px;font-size:27px;color:#000;font-weight:bold;">below player</div><svg class="a" style="left:2940px;top:338px;" width="32" height="24" viewBox="0 0 32 24"><path d="M1 12C6 3 25 3 30 12C25 21 6 21 1 12Z" fill="none" stroke="#555" stroke-width="2.4"/><circle cx="15.5" cy="12" r="6" fill="#555"/><circle cx="14" cy="10" r="2" fill="#ddd"/></svg><svg class="a" style="left:2940px;top:378px;" width="32" height="24" viewBox="0 0 32 24"><path d="M1 12C6 3 25 3 30 12C25 21 6 21 1 12Z" fill="none" stroke="#555" stroke-width="2.4"/><circle cx="15.5" cy="12" r="6" fill="#555"/><circle cx="14" cy="10" r="2" fill="#ddd"/></svg><svg class="a" style="left:2986px;top:333px;" width="24" height="30" viewBox="0 0 24 30"><path d="M6 13V8A6 6 0 0 1 18 8V13" fill="none" stroke="#555" stroke-width="3"/><rect x="2" y="13" width="20" height="16" fill="#555"/></svg><svg class="a" style="left:2986px;top:373px;" width="30" height="30" viewBox="0 0 30 30"><path d="M17 13V8A6 6 0 0 1 29 8V12" fill="none" stroke="#555" stroke-width="3"/><rect x="2" y="14" width="19" height="15" fill="#555"/></svg><div class="a" style="left:2281px;top:1820px;width:743px;height:2px;background:#a6a6a6"></div><div class="a" style="left:2281px;top:1822px;width:743px;height:55px;background:linear-gradient(#ededed,#d0d0d0)"></div><svg class="a" style="left:2294px;top:1800px;" width="26" height="70" viewBox="0 0 26 70"><rect x="1" y="41" width="22" height="25" fill="#efefef" stroke="#9c9c9c" stroke-width="1.5"/><circle cx="19" cy="45" r="8" fill="#ffe84a" opacity=".85"/></svg><div class="a" style="left:0px;top:1877px;width:3024px;height:1px;background:#a8a8a8"></div><div class="a" style="left:0px;top:1878px;width:3024px;height:1px;background:#787878"></div><div class="a" style="left:0px;top:1879px;width:3024px;height:85px;background:linear-gradient(#ededed,#dedede 35%,#cacaca 70%,#b4b4b4)"></div><div class="a" style="left:4px;top:1894px;width:52px;height:51px;background:#f2f2f2;border:2px solid #cfcfcf"></div><svg class="a" style="left:14px;top:1907px;" width="30" height="25" viewBox="0 0 30 25"><rect x="1" y="1" width="28" height="21" rx="1.5" fill="#1a2020" stroke="#777" stroke-width="1.4"/><rect x="2" y="21" width="26" height="3" fill="#999"/><path d="M4 5L7 7L4 9" stroke="#ccc" fill="none" stroke-width="1"/><path d="M12 16L15 5M18 16L21 5" stroke="#6a7a7a" stroke-width="1.5"/></svg><div class="a" style="left:68px;top:1900px;width:175px;height:39px;background:#ebebeb;border:2px solid #fafafa"></div><svg class="a" style="left:82px;top:1904px;" width="115" height="32" viewBox="0 0 115 32"><circle cx="16" cy="16" r="15" fill="#e47d82" stroke="#d56a70" stroke-width="1"/><rect x="14" y="6" width="4.5" height="13" rx="2" fill="#fff"/><circle cx="16.2" cy="24" r="2.6" fill="#fff"/><path d="M98 2L113 30H83Z" fill="#f8d98a" stroke="#e6c06a" stroke-width="1.5" stroke-linejoin="round"/><rect x="96.2" y="10" width="3.6" height="11" rx="1.5" fill="#c05050"/><circle cx="98" cy="25" r="2.2" fill="#c05050"/></svg><div class="t" style="left:130px;top:1907.0px;font-size:27px;color:#b5b5b5;font-weight:normal;">0</div><div class="t" style="left:212px;top:1907.0px;font-size:27px;color:#b5b5b5;font-weight:normal;">0</div><div class="t" style="left:256px;top:1907.4px;font-size:26.6px;color:#000;font-weight:normal;">27, 7 [empty]</div><svg class="a" style="left:794px;top:385px;" width="1281" height="1281" viewBox="0 0 400 400"><defs><pattern id="grass" width="16" height="16" patternUnits="userSpaceOnUse"><rect width="16" height="16" fill="#41b282"/><path d="M1.4 2.5h1v1h-1zM3.4 2.5h1v1h-1zM2.4 3.5h1v1h-1zM11.9 1.8h1v1h-1zM13.9 1.8h1v1h-1zM12.9 2.8h1v1h-1zM4.3 9.1h1v1h-1zM6.3 9.1h1v1h-1zM5.3 10.1h1v1h-1zM8.9 12h1v1h-1zM10.9 12h1v1h-1zM9.9 13h1v1h-1z" fill="#17a064"/><rect x="10.2" y="5.6" width="0.95" height="0.95" fill="#b4dece"/><rect x="3.6" y="6.6" width="0.95" height="0.95" fill="#78c6a4"/></pattern></defs><rect width="400" height="400" fill="url(#grass)"/><rect x="33.5" y="7.199999999999999" width="28.5" height="4.6" fill="#5e4252"/><rect x="33.5" y="7.999999999999999" width="28.5" height="3" fill="#85605a"/><rect x="33.5" y="8.2" width="28.5" height="0.9" fill="#a27870"/><rect x="33.5" y="23.200000000000003" width="28.5" height="4.6" fill="#5e4252"/><rect x="33.5" y="24.000000000000004" width="28.5" height="3" fill="#85605a"/><rect x="33.5" y="24.200000000000003" width="28.5" height="0.9" fill="#a27870"/><path d="M42.15 12.6 H46.95 V16.099999999999998 H43.75 Z" fill="#82828e"/><path d="M42.15 2.6 H46.15 L46.95 3.4000000000000004 V13.799999999999999 H41.35 V3.4000000000000004 Z" fill="#5e4252"/><rect x="42.15" y="6.6" width="4" height="5.999999999999999" fill="#85605a"/><rect x="42.65" y="6.800000000000001" width="0.6" height="3" fill="#a27870"/><rect x="45.050000000000004" y="6.800000000000001" width="0.6" height="3" fill="#a27870"/><path d="M42.949999999999996 2.9 H45.35 L46.15 3.7 V6.3 L45.35 7.1 H42.949999999999996 L42.15 6.3 V3.7 Z" fill="#e4bea4"/><rect x="43.449999999999996" y="4.3" width="1.6" height="1.6" fill="#cfa592"/><path d="M42.15 28.6 H46.95 V32.1 H43.75 Z" fill="#82828e"/><path d="M42.15 18.6 H46.15 L46.95 19.400000000000002 V29.8 H41.35 V19.400000000000002 Z" fill="#5e4252"/><rect x="42.15" y="22.6" width="4" height="5.999999999999999" fill="#85605a"/><rect x="42.65" y="22.8" width="0.6" height="3" fill="#a27870"/><rect x="45.050000000000004" y="22.8" width="0.6" height="3" fill="#a27870"/><path d="M42.949999999999996 18.900000000000002 H45.35 L46.15 19.700000000000003 V22.3 L45.35 23.1 H42.949999999999996 L42.15 22.3 V19.700000000000003 Z" fill="#e4bea4"/><rect x="43.449999999999996" y="20.3" width="1.6" height="1.6" fill="#cfa592"/><path d="M50.15 12.6 H54.95 V16.099999999999998 H51.75 Z" fill="#82828e"/><path d="M50.15 2.6 H54.15 L54.95 3.4000000000000004 V13.799999999999999 H49.35 V3.4000000000000004 Z" fill="#5e4252"/><rect x="50.15" y="6.6" width="4" height="5.999999999999999" fill="#85605a"/><rect x="50.65" y="6.800000000000001" width="0.6" height="3" fill="#a27870"/><rect x="53.050000000000004" y="6.800000000000001" width="0.6" height="3" fill="#a27870"/><path d="M50.949999999999996 2.9 H53.35 L54.15 3.7 V6.3 L53.35 7.1 H50.949999999999996 L50.15 6.3 V3.7 Z" fill="#e4bea4"/><rect x="51.449999999999996" y="4.3" width="1.6" height="1.6" fill="#cfa592"/><path d="M50.15 28.6 H54.95 V32.1 H51.75 Z" fill="#82828e"/><path d="M50.15 18.6 H54.15 L54.95 19.400000000000002 V29.8 H49.35 V19.400000000000002 Z" fill="#5e4252"/><rect x="50.15" y="22.6" width="4" height="5.999999999999999" fill="#85605a"/><rect x="50.65" y="22.8" width="0.6" height="3" fill="#a27870"/><rect x="53.050000000000004" y="22.8" width="0.6" height="3" fill="#a27870"/><path d="M50.949999999999996 18.900000000000002 H53.35 L54.15 19.700000000000003 V22.3 L53.35 23.1 H50.949999999999996 L50.15 22.3 V19.700000000000003 Z" fill="#e4bea4"/><rect x="51.449999999999996" y="20.3" width="1.6" height="1.6" fill="#cfa592"/><path d="M34.15 2.6 H38.15 L38.95 3.4000000000000004 V29.8 H33.35 V3.4000000000000004 Z" fill="#5e4252"/><rect x="34.15" y="6.800000000000001" width="4" height="21.799999999999997" fill="#85605a"/><path d="M34.949999999999996 3.0 H37.35 L38.15 3.8 V6.4 L37.35 7.2 H34.949999999999996 L34.15 6.4 V3.8 Z" fill="#e4bea4"/><rect x="35.449999999999996" y="4.4" width="1.6" height="1.6" fill="#cfa592"/><rect x="34.15" y="11.2" width="4" height="0.8" fill="#5e4252"/><path d="M34.949999999999996 12.0 H37.35 L38.15 12.8 V15.4 L37.35 16.2 H34.949999999999996 L34.15 15.4 V12.8 Z" fill="#e4bea4"/><rect x="35.449999999999996" y="13.4" width="1.6" height="1.6" fill="#cfa592"/><rect x="34.15" y="19.2" width="4" height="0.8" fill="#5e4252"/><path d="M34.949999999999996 20.0 H37.35 L38.15 20.8 V23.4 L37.35 24.2 H34.949999999999996 L34.15 23.4 V20.8 Z" fill="#e4bea4"/><rect x="35.449999999999996" y="21.4" width="1.6" height="1.6" fill="#cfa592"/><path d="M58.15 2.6 H62.15 L62.95 3.4000000000000004 V29.8 H57.35 V3.4000000000000004 Z" fill="#5e4252"/><rect x="58.15" y="6.800000000000001" width="4" height="21.799999999999997" fill="#85605a"/><path d="M58.949999999999996 3.0 H61.35 L62.15 3.8 V6.4 L61.35 7.2 H58.949999999999996 L58.15 6.4 V3.8 Z" fill="#e4bea4"/><rect x="59.449999999999996" y="4.4" width="1.6" height="1.6" fill="#cfa592"/><rect x="58.15" y="11.2" width="4" height="0.8" fill="#5e4252"/><path d="M58.949999999999996 12.0 H61.35 L62.15 12.8 V15.4 L61.35 16.2 H58.949999999999996 L58.15 15.4 V12.8 Z" fill="#e4bea4"/><rect x="59.449999999999996" y="13.4" width="1.6" height="1.6" fill="#cfa592"/><rect x="58.15" y="19.2" width="4" height="0.8" fill="#5e4252"/><path d="M58.949999999999996 20.0 H61.35 L62.15 20.8 V23.4 L61.35 24.2 H58.949999999999996 L58.15 23.4 V20.8 Z" fill="#e4bea4"/><rect x="59.449999999999996" y="21.4" width="1.6" height="1.6" fill="#cfa592"/><rect x="97.5" y="7.199999999999999" width="44.5" height="4.6" fill="#5e4252"/><rect x="97.5" y="7.999999999999999" width="44.5" height="3" fill="#85605a"/><rect x="97.5" y="8.2" width="44.5" height="0.9" fill="#a27870"/><rect x="97.5" y="23.200000000000003" width="44.5" height="4.6" fill="#5e4252"/><rect x="97.5" y="24.000000000000004" width="44.5" height="3" fill="#85605a"/><rect x="97.5" y="24.200000000000003" width="44.5" height="0.9" fill="#a27870"/><path d="M106.14999999999999 12.6 H110.94999999999999 V16.099999999999998 H107.75 Z" fill="#82828e"/><path d="M106.14999999999999 2.6 H110.14999999999999 L110.94999999999999 3.4000000000000004 V13.799999999999999 H105.35 V3.4000000000000004 Z" fill="#5e4252"/><rect x="106.14999999999999" y="6.6" width="4" height="5.999999999999999" fill="#85605a"/><rect x="106.64999999999999" y="6.800000000000001" width="0.6" height="3" fill="#a27870"/><rect x="109.05" y="6.800000000000001" width="0.6" height="3" fill="#a27870"/><path d="M106.94999999999999 2.9 H109.35 L110.14999999999999 3.7 V6.3 L109.35 7.1 H106.94999999999999 L106.14999999999999 6.3 V3.7 Z" fill="#e4bea4"/><rect x="107.44999999999999" y="4.3" width="1.6" height="1.6" fill="#cfa592"/><path d="M106.14999999999999 28.6 H110.94999999999999 V32.1 H107.75 Z" fill="#82828e"/><path d="M106.14999999999999 18.6 H110.14999999999999 L110.94999999999999 19.400000000000002 V29.8 H105.35 V19.400000000000002 Z" fill="#5e4252"/><rect x="106.14999999999999" y="22.6" width="4" height="5.999999999999999" fill="#85605a"/><rect x="106.64999999999999" y="22.8" width="0.6" height="3" fill="#a27870"/><rect x="109.05" y="22.8" width="0.6" height="3" fill="#a27870"/><path d="M106.94999999999999 18.900000000000002 H109.35 L110.14999999999999 19.700000000000003 V22.3 L109.35 23.1 H106.94999999999999 L106.14999999999999 22.3 V19.700000000000003 Z" fill="#e4bea4"/><rect x="107.44999999999999" y="20.3" width="1.6" height="1.6" fill="#cfa592"/><path d="M114.14999999999999 12.6 H118.94999999999999 V16.099999999999998 H115.75 Z" fill="#82828e"/><path d="M114.14999999999999 2.6 H118.14999999999999 L118.94999999999999 3.4000000000000004 V13.799999999999999 H113.35 V3.4000000000000004 Z" fill="#5e4252"/><rect x="114.14999999999999" y="6.6" width="4" height="5.999999999999999" fill="#85605a"/><rect x="114.64999999999999" y="6.800000000000001" width="0.6" height="3" fill="#a27870"/><rect x="117.05" y="6.800000000000001" width="0.6" height="3" fill="#a27870"/><path d="M114.94999999999999 2.9 H117.35 L118.14999999999999 3.7 V6.3 L117.35 7.1 H114.94999999999999 L114.14999999999999 6.3 V3.7 Z" fill="#e4bea4"/><rect x="115.44999999999999" y="4.3" width="1.6" height="1.6" fill="#cfa592"/><path d="M114.14999999999999 28.6 H118.94999999999999 V32.1 H115.75 Z" fill="#82828e"/><path d="M114.14999999999999 18.6 H118.14999999999999 L118.94999999999999 19.400000000000002 V29.8 H113.35 V19.400000000000002 Z" fill="#5e4252"/><rect x="114.14999999999999" y="22.6" width="4" height="5.999999999999999" fill="#85605a"/><rect x="114.64999999999999" y="22.8" width="0.6" height="3" fill="#a27870"/><rect x="117.05" y="22.8" width="0.6" height="3" fill="#a27870"/><path d="M114.94999999999999 18.900000000000002 H117.35 L118.14999999999999 19.700000000000003 V22.3 L117.35 23.1 H114.94999999999999 L114.14999999999999 22.3 V19.700000000000003 Z" fill="#e4bea4"/><rect x="115.44999999999999" y="20.3" width="1.6" height="1.6" fill="#cfa592"/><path d="M122.14999999999999 12.6 H126.94999999999999 V16.099999999999998 H123.75 Z" fill="#82828e"/><path d="M122.14999999999999 2.6 H126.14999999999999 L126.94999999999999 3.4000000000000004 V13.799999999999999 H121.35 V3.4000000000000004 Z" fill="#5e4252"/><rect x="122.14999999999999" y="6.6" width="4" height="5.999999999999999" fill="#85605a"/><rect x="122.64999999999999" y="6.800000000000001" width="0.6" height="3" fill="#a27870"/><rect x="125.05" y="6.800000000000001" width="0.6" height="3" fill="#a27870"/><path d="M122.94999999999999 2.9 H125.35 L126.14999999999999 3.7 V6.3 L125.35 7.1 H122.94999999999999 L122.14999999999999 6.3 V3.7 Z" fill="#e4bea4"/><rect x="123.44999999999999" y="4.3" width="1.6" height="1.6" fill="#cfa592"/><path d="M122.14999999999999 28.6 H126.94999999999999 V32.1 H123.75 Z" fill="#82828e"/><path d="M122.14999999999999 18.6 H126.14999999999999 L126.94999999999999 19.400000000000002 V29.8 H121.35 V19.400000000000002 Z" fill="#5e4252"/><rect x="122.14999999999999" y="22.6" width="4" height="5.999999999999999" fill="#85605a"/><rect x="122.64999999999999" y="22.8" width="0.6" height="3" fill="#a27870"/><rect x="125.05" y="22.8" width="0.6" height="3" fill="#a27870"/><path d="M122.94999999999999 18.900000000000002 H125.35 L126.14999999999999 19.700000000000003 V22.3 L125.35 23.1 H122.94999999999999 L122.14999999999999 22.3 V19.700000000000003 Z" fill="#e4bea4"/><rect x="123.44999999999999" y="20.3" width="1.6" height="1.6" fill="#cfa592"/><path d="M130.15 12.6 H134.95 V16.099999999999998 H131.75 Z" fill="#82828e"/><path d="M130.15 2.6 H134.15 L134.95 3.4000000000000004 V13.799999999999999 H129.35 V3.4000000000000004 Z" fill="#5e4252"/><rect x="130.15" y="6.6" width="4" height="5.999999999999999" fill="#85605a"/><rect x="130.65" y="6.800000000000001" width="0.6" height="3" fill="#a27870"/><rect x="133.04999999999998" y="6.800000000000001" width="0.6" height="3" fill="#a27870"/><path d="M130.95000000000002 2.9 H133.35 L134.15 3.7 V6.3 L133.35 7.1 H130.95000000000002 L130.15 6.3 V3.7 Z" fill="#e4bea4"/><rect x="131.45000000000002" y="4.3" width="1.6" height="1.6" fill="#cfa592"/><path d="M130.15 28.6 H134.95 V32.1 H131.75 Z" fill="#82828e"/><path d="M130.15 18.6 H134.15 L134.95 19.400000000000002 V29.8 H129.35 V19.400000000000002 Z" fill="#5e4252"/><rect x="130.15" y="22.6" width="4" height="5.999999999999999" fill="#85605a"/><rect x="130.65" y="22.8" width="0.6" height="3" fill="#a27870"/><rect x="133.04999999999998" y="22.8" width="0.6" height="3" fill="#a27870"/><path d="M130.95000000000002 18.900000000000002 H133.35 L134.15 19.700000000000003 V22.3 L133.35 23.1 H130.95000000000002 L130.15 22.3 V19.700000000000003 Z" fill="#e4bea4"/><rect x="131.45000000000002" y="20.3" width="1.6" height="1.6" fill="#cfa592"/><path d="M98.14999999999999 2.6 H102.14999999999999 L102.94999999999999 3.4000000000000004 V29.8 H97.35 V3.4000000000000004 Z" fill="#5e4252"/><rect x="98.14999999999999" y="6.800000000000001" width="4" height="21.799999999999997" fill="#85605a"/><path d="M98.94999999999999 3.0 H101.35 L102.14999999999999 3.8 V6.4 L101.35 7.2 H98.94999999999999 L98.14999999999999 6.4 V3.8 Z" fill="#e4bea4"/><rect x="99.44999999999999" y="4.4" width="1.6" height="1.6" fill="#cfa592"/><rect x="98.14999999999999" y="11.2" width="4" height="0.8" fill="#5e4252"/><path d="M98.94999999999999 12.0 H101.35 L102.14999999999999 12.8 V15.4 L101.35 16.2 H98.94999999999999 L98.14999999999999 15.4 V12.8 Z" fill="#e4bea4"/><rect x="99.44999999999999" y="13.4" width="1.6" height="1.6" fill="#cfa592"/><rect x="98.14999999999999" y="19.2" width="4" height="0.8" fill="#5e4252"/><path d="M98.94999999999999 20.0 H101.35 L102.14999999999999 20.8 V23.4 L101.35 24.2 H98.94999999999999 L98.14999999999999 23.4 V20.8 Z" fill="#e4bea4"/><rect x="99.44999999999999" y="21.4" width="1.6" height="1.6" fill="#cfa592"/><path d="M138.15 2.6 H142.15 L142.95 3.4000000000000004 V29.8 H137.35 V3.4000000000000004 Z" fill="#5e4252"/><rect x="138.15" y="6.800000000000001" width="4" height="21.799999999999997" fill="#85605a"/><path d="M138.95000000000002 3.0 H141.35 L142.15 3.8 V6.4 L141.35 7.2 H138.95000000000002 L138.15 6.4 V3.8 Z" fill="#e4bea4"/><rect x="139.45000000000002" y="4.4" width="1.6" height="1.6" fill="#cfa592"/><rect x="138.15" y="11.2" width="4" height="0.8" fill="#5e4252"/><path d="M138.95000000000002 12.0 H141.35 L142.15 12.8 V15.4 L141.35 16.2 H138.95000000000002 L138.15 15.4 V12.8 Z" fill="#e4bea4"/><rect x="139.45000000000002" y="13.4" width="1.6" height="1.6" fill="#cfa592"/><rect x="138.15" y="19.2" width="4" height="0.8" fill="#5e4252"/><path d="M138.95000000000002 20.0 H141.35 L142.15 20.8 V23.4 L141.35 24.2 H138.95000000000002 L138.15 23.4 V20.8 Z" fill="#e4bea4"/><rect x="139.45000000000002" y="21.4" width="1.6" height="1.6" fill="#cfa592"/><rect x="257.5" y="7.199999999999999" width="44.5" height="4.6" fill="#5e4252"/><rect x="257.5" y="7.999999999999999" width="44.5" height="3" fill="#85605a"/><rect x="257.5" y="8.2" width="44.5" height="0.9" fill="#a27870"/><rect x="257.5" y="23.200000000000003" width="44.5" height="4.6" fill="#5e4252"/><rect x="257.5" y="24.000000000000004" width="44.5" height="3" fill="#85605a"/><rect x="257.5" y="24.200000000000003" width="44.5" height="0.9" fill="#a27870"/><path d="M266.15000000000003 12.6 H270.95000000000005 V16.099999999999998 H267.75 Z" fill="#82828e"/><path d="M266.15000000000003 2.6 H270.15000000000003 L270.95000000000005 3.4000000000000004 V13.799999999999999 H265.35 V3.4000000000000004 Z" fill="#5e4252"/><rect x="266.15000000000003" y="6.6" width="4" height="5.999999999999999" fill="#85605a"/><rect x="266.65000000000003" y="6.800000000000001" width="0.6" height="3" fill="#a27870"/><rect x="269.05" y="6.800000000000001" width="0.6" height="3" fill="#a27870"/><path d="M266.95000000000005 2.9 H269.35 L270.15000000000003 3.7 V6.3 L269.35 7.1 H266.95000000000005 L266.15000000000003 6.3 V3.7 Z" fill="#e4bea4"/><rect x="267.45000000000005" y="4.3" width="1.6" height="1.6" fill="#cfa592"/><path d="M266.15000000000003 28.6 H270.95000000000005 V32.1 H267.75 Z" fill="#82828e"/><path d="M266.15000000000003 18.6 H270.15000000000003 L270.95000000000005 19.400000000000002 V29.8 H265.35 V19.400000000000002 Z" fill="#5e4252"/><rect x="266.15000000000003" y="22.6" width="4" height="5.999999999999999" fill="#85605a"/><rect x="266.65000000000003" y="22.8" width="0.6" height="3" fill="#a27870"/><rect x="269.05" y="22.8" width="0.6" height="3" fill="#a27870"/><path d="M266.95000000000005 18.900000000000002 H269.35 L270.15000000000003 19.700000000000003 V22.3 L269.35 23.1 H266.95000000000005 L266.15000000000003 22.3 V19.700000000000003 Z" fill="#e4bea4"/><rect x="267.45000000000005" y="20.3" width="1.6" height="1.6" fill="#cfa592"/><path d="M274.15000000000003 12.6 H278.95000000000005 V16.099999999999998 H275.75 Z" fill="#82828e"/><path d="M274.15000000000003 2.6 H278.15000000000003 L278.95000000000005 3.4000000000000004 V13.799999999999999 H273.35 V3.4000000000000004 Z" fill="#5e4252"/><rect x="274.15000000000003" y="6.6" width="4" height="5.999999999999999" fill="#85605a"/><rect x="274.65000000000003" y="6.800000000000001" width="0.6" height="3" fill="#a27870"/><rect x="277.05" y="6.800000000000001" width="0.6" height="3" fill="#a27870"/><path d="M274.95000000000005 2.9 H277.35 L278.15000000000003 3.7 V6.3 L277.35 7.1 H274.95000000000005 L274.15000000000003 6.3 V3.7 Z" fill="#e4bea4"/><rect x="275.45000000000005" y="4.3" width="1.6" height="1.6" fill="#cfa592"/><path d="M274.15000000000003 28.6 H278.95000000000005 V32.1 H275.75 Z" fill="#82828e"/><path d="M274.15000000000003 18.6 H278.15000000000003 L278.95000000000005 19.400000000000002 V29.8 H273.35 V19.400000000000002 Z" fill="#5e4252"/><rect x="274.15000000000003" y="22.6" width="4" height="5.999999999999999" fill="#85605a"/><rect x="274.65000000000003" y="22.8" width="0.6" height="3" fill="#a27870"/><rect x="277.05" y="22.8" width="0.6" height="3" fill="#a27870"/><path d="M274.95000000000005 18.900000000000002 H277.35 L278.15000000000003 19.700000000000003 V22.3 L277.35 23.1 H274.95000000000005 L274.15000000000003 22.3 V19.700000000000003 Z" fill="#e4bea4"/><rect x="275.45000000000005" y="20.3" width="1.6" height="1.6" fill="#cfa592"/><path d="M282.15000000000003 12.6 H286.95000000000005 V16.099999999999998 H283.75 Z" fill="#82828e"/><path d="M282.15000000000003 2.6 H286.15000000000003 L286.95000000000005 3.4000000000000004 V13.799999999999999 H281.35 V3.4000000000000004 Z" fill="#5e4252"/><rect x="282.15000000000003" y="6.6" width="4" height="5.999999999999999" fill="#85605a"/><rect x="282.65000000000003" y="6.800000000000001" width="0.6" height="3" fill="#a27870"/><rect x="285.05" y="6.800000000000001" width="0.6" height="3" fill="#a27870"/><path d="M282.95000000000005 2.9 H285.35 L286.15000000000003 3.7 V6.3 L285.35 7.1 H282.95000000000005 L282.15000000000003 6.3 V3.7 Z" fill="#e4bea4"/><rect x="283.45000000000005" y="4.3" width="1.6" height="1.6" fill="#cfa592"/><path d="M282.15000000000003 28.6 H286.95000000000005 V32.1 H283.75 Z" fill="#82828e"/><path d="M282.15000000000003 18.6 H286.15000000000003 L286.95000000000005 19.400000000000002 V29.8 H281.35 V19.400000000000002 Z" fill="#5e4252"/><rect x="282.15000000000003" y="22.6" width="4" height="5.999999999999999" fill="#85605a"/><rect x="282.65000000000003" y="22.8" width="0.6" height="3" fill="#a27870"/><rect x="285.05" y="22.8" width="0.6" height="3" fill="#a27870"/><path d="M282.95000000000005 18.900000000000002 H285.35 L286.15000000000003 19.700000000000003 V22.3 L285.35 23.1 H282.95000000000005 L282.15000000000003 22.3 V19.700000000000003 Z" fill="#e4bea4"/><rect x="283.45000000000005" y="20.3" width="1.6" height="1.6" fill="#cfa592"/><path d="M290.15000000000003 12.6 H294.95000000000005 V16.099999999999998 H291.75 Z" fill="#82828e"/><path d="M290.15000000000003 2.6 H294.15000000000003 L294.95000000000005 3.4000000000000004 V13.799999999999999 H289.35 V3.4000000000000004 Z" fill="#5e4252"/><rect x="290.15000000000003" y="6.6" width="4" height="5.999999999999999" fill="#85605a"/><rect x="290.65000000000003" y="6.800000000000001" width="0.6" height="3" fill="#a27870"/><rect x="293.05" y="6.800000000000001" width="0.6" height="3" fill="#a27870"/><path d="M290.95000000000005 2.9 H293.35 L294.15000000000003 3.7 V6.3 L293.35 7.1 H290.95000000000005 L290.15000000000003 6.3 V3.7 Z" fill="#e4bea4"/><rect x="291.45000000000005" y="4.3" width="1.6" height="1.6" fill="#cfa592"/><path d="M290.15000000000003 28.6 H294.95000000000005 V32.1 H291.75 Z" fill="#82828e"/><path d="M290.15000000000003 18.6 H294.15000000000003 L294.95000000000005 19.400000000000002 V29.8 H289.35 V19.400000000000002 Z" fill="#5e4252"/><rect x="290.15000000000003" y="22.6" width="4" height="5.999999999999999" fill="#85605a"/><rect x="290.65000000000003" y="22.8" width="0.6" height="3" fill="#a27870"/><rect x="293.05" y="22.8" width="0.6" height="3" fill="#a27870"/><path d="M290.95000000000005 18.900000000000002 H293.35 L294.15000000000003 19.700000000000003 V22.3 L293.35 23.1 H290.95000000000005 L290.15000000000003 22.3 V19.700000000000003 Z" fill="#e4bea4"/><rect x="291.45000000000005" y="20.3" width="1.6" height="1.6" fill="#cfa592"/><path d="M258.15000000000003 2.6 H262.15000000000003 L262.95000000000005 3.4000000000000004 V29.8 H257.35 V3.4000000000000004 Z" fill="#5e4252"/><rect x="258.15000000000003" y="6.800000000000001" width="4" height="21.799999999999997" fill="#85605a"/><path d="M258.95000000000005 3.0 H261.35 L262.15000000000003 3.8 V6.4 L261.35 7.2 H258.95000000000005 L258.15000000000003 6.4 V3.8 Z" fill="#e4bea4"/><rect x="259.45000000000005" y="4.4" width="1.6" height="1.6" fill="#cfa592"/><rect x="258.15000000000003" y="11.2" width="4" height="0.8" fill="#5e4252"/><path d="M258.95000000000005 12.0 H261.35 L262.15000000000003 12.8 V15.4 L261.35 16.2 H258.95000000000005 L258.15000000000003 15.4 V12.8 Z" fill="#e4bea4"/><rect x="259.45000000000005" y="13.4" width="1.6" height="1.6" fill="#cfa592"/><rect x="258.15000000000003" y="19.2" width="4" height="0.8" fill="#5e4252"/><path d="M258.95000000000005 20.0 H261.35 L262.15000000000003 20.8 V23.4 L261.35 24.2 H258.95000000000005 L258.15000000000003 23.4 V20.8 Z" fill="#e4bea4"/><rect x="259.45000000000005" y="21.4" width="1.6" height="1.6" fill="#cfa592"/><path d="M298.15000000000003 2.6 H302.15000000000003 L302.95000000000005 3.4000000000000004 V29.8 H297.35 V3.4000000000000004 Z" fill="#5e4252"/><rect x="298.15000000000003" y="6.800000000000001" width="4" height="21.799999999999997" fill="#85605a"/><path d="M298.95000000000005 3.0 H301.35 L302.15000000000003 3.8 V6.4 L301.35 7.2 H298.95000000000005 L298.15000000000003 6.4 V3.8 Z" fill="#e4bea4"/><rect x="299.45000000000005" y="4.4" width="1.6" height="1.6" fill="#cfa592"/><rect x="298.15000000000003" y="11.2" width="4" height="0.8" fill="#5e4252"/><path d="M298.95000000000005 12.0 H301.35 L302.15000000000003 12.8 V15.4 L301.35 16.2 H298.95000000000005 L298.15000000000003 15.4 V12.8 Z" fill="#e4bea4"/><rect x="299.45000000000005" y="13.4" width="1.6" height="1.6" fill="#cfa592"/><rect x="298.15000000000003" y="19.2" width="4" height="0.8" fill="#5e4252"/><path d="M298.95000000000005 20.0 H301.35 L302.15000000000003 20.8 V23.4 L301.35 24.2 H298.95000000000005 L298.15000000000003 23.4 V20.8 Z" fill="#e4bea4"/><rect x="299.45000000000005" y="21.4" width="1.6" height="1.6" fill="#cfa592"/><rect x="337.5" y="7.199999999999999" width="28.5" height="4.6" fill="#5e4252"/><rect x="337.5" y="7.999999999999999" width="28.5" height="3" fill="#85605a"/><rect x="337.5" y="8.2" width="28.5" height="0.9" fill="#a27870"/><rect x="337.5" y="23.200000000000003" width="28.5" height="4.6" fill="#5e4252"/><rect x="337.5" y="24.000000000000004" width="28.5" height="3" fill="#85605a"/><rect x="337.5" y="24.200000000000003" width="28.5" height="0.9" fill="#a27870"/><path d="M346.15000000000003 12.6 H350.95000000000005 V16.099999999999998 H347.75 Z" fill="#82828e"/><path d="M346.15000000000003 2.6 H350.15000000000003 L350.95000000000005 3.4000000000000004 V13.799999999999999 H345.35 V3.4000000000000004 Z" fill="#5e4252"/><rect x="346.15000000000003" y="6.6" width="4" height="5.999999999999999" fill="#85605a"/><rect x="346.65000000000003" y="6.800000000000001" width="0.6" height="3" fill="#a27870"/><rect x="349.05" y="6.800000000000001" width="0.6" height="3" fill="#a27870"/><path d="M346.95000000000005 2.9 H349.35 L350.15000000000003 3.7 V6.3 L349.35 7.1 H346.95000000000005 L346.15000000000003 6.3 V3.7 Z" fill="#e4bea4"/><rect x="347.45000000000005" y="4.3" width="1.6" height="1.6" fill="#cfa592"/><path d="M346.15000000000003 28.6 H350.95000000000005 V32.1 H347.75 Z" fill="#82828e"/><path d="M346.15000000000003 18.6 H350.15000000000003 L350.95000000000005 19.400000000000002 V29.8 H345.35 V19.400000000000002 Z" fill="#5e4252"/><rect x="346.15000000000003" y="22.6" width="4" height="5.999999999999999" fill="#85605a"/><rect x="346.65000000000003" y="22.8" width="0.6" height="3" fill="#a27870"/><rect x="349.05" y="22.8" width="0.6" height="3" fill="#a27870"/><path d="M346.95000000000005 18.900000000000002 H349.35 L350.15000000000003 19.700000000000003 V22.3 L349.35 23.1 H346.95000000000005 L346.15000000000003 22.3 V19.700000000000003 Z" fill="#e4bea4"/><rect x="347.45000000000005" y="20.3" width="1.6" height="1.6" fill="#cfa592"/><path d="M354.15000000000003 12.6 H358.95000000000005 V16.099999999999998 H355.75 Z" fill="#82828e"/><path d="M354.15000000000003 2.6 H358.15000000000003 L358.95000000000005 3.4000000000000004 V13.799999999999999 H353.35 V3.4000000000000004 Z" fill="#5e4252"/><rect x="354.15000000000003" y="6.6" width="4" height="5.999999999999999" fill="#85605a"/><rect x="354.65000000000003" y="6.800000000000001" width="0.6" height="3" fill="#a27870"/><rect x="357.05" y="6.800000000000001" width="0.6" height="3" fill="#a27870"/><path d="M354.95000000000005 2.9 H357.35 L358.15000000000003 3.7 V6.3 L357.35 7.1 H354.95000000000005 L354.15000000000003 6.3 V3.7 Z" fill="#e4bea4"/><rect x="355.45000000000005" y="4.3" width="1.6" height="1.6" fill="#cfa592"/><path d="M354.15000000000003 28.6 H358.95000000000005 V32.1 H355.75 Z" fill="#82828e"/><path d="M354.15000000000003 18.6 H358.15000000000003 L358.95000000000005 19.400000000000002 V29.8 H353.35 V19.400000000000002 Z" fill="#5e4252"/><rect x="354.15000000000003" y="22.6" width="4" height="5.999999999999999" fill="#85605a"/><rect x="354.65000000000003" y="22.8" width="0.6" height="3" fill="#a27870"/><rect x="357.05" y="22.8" width="0.6" height="3" fill="#a27870"/><path d="M354.95000000000005 18.900000000000002 H357.35 L358.15000000000003 19.700000000000003 V22.3 L357.35 23.1 H354.95000000000005 L354.15000000000003 22.3 V19.700000000000003 Z" fill="#e4bea4"/><rect x="355.45000000000005" y="20.3" width="1.6" height="1.6" fill="#cfa592"/><path d="M338.15000000000003 2.6 H342.15000000000003 L342.95000000000005 3.4000000000000004 V29.8 H337.35 V3.4000000000000004 Z" fill="#5e4252"/><rect x="338.15000000000003" y="6.800000000000001" width="4" height="21.799999999999997" fill="#85605a"/><path d="M338.95000000000005 3.0 H341.35 L342.15000000000003 3.8 V6.4 L341.35 7.2 H338.95000000000005 L338.15000000000003 6.4 V3.8 Z" fill="#e4bea4"/><rect x="339.45000000000005" y="4.4" width="1.6" height="1.6" fill="#cfa592"/><rect x="338.15000000000003" y="11.2" width="4" height="0.8" fill="#5e4252"/><path d="M338.95000000000005 12.0 H341.35 L342.15000000000003 12.8 V15.4 L341.35 16.2 H338.95000000000005 L338.15000000000003 15.4 V12.8 Z" fill="#e4bea4"/><rect x="339.45000000000005" y="13.4" width="1.6" height="1.6" fill="#cfa592"/><rect x="338.15000000000003" y="19.2" width="4" height="0.8" fill="#5e4252"/><path d="M338.95000000000005 20.0 H341.35 L342.15000000000003 20.8 V23.4 L341.35 24.2 H338.95000000000005 L338.15000000000003 23.4 V20.8 Z" fill="#e4bea4"/><rect x="339.45000000000005" y="21.4" width="1.6" height="1.6" fill="#cfa592"/><path d="M362.15000000000003 2.6 H366.15000000000003 L366.95000000000005 3.4000000000000004 V29.8 H361.35 V3.4000000000000004 Z" fill="#5e4252"/><rect x="362.15000000000003" y="6.800000000000001" width="4" height="21.799999999999997" fill="#85605a"/><path d="M362.95000000000005 3.0 H365.35 L366.15000000000003 3.8 V6.4 L365.35 7.2 H362.95000000000005 L362.15000000000003 6.4 V3.8 Z" fill="#e4bea4"/><rect x="363.45000000000005" y="4.4" width="1.6" height="1.6" fill="#cfa592"/><rect x="362.15000000000003" y="11.2" width="4" height="0.8" fill="#5e4252"/><path d="M362.95000000000005 12.0 H365.35 L366.15000000000003 12.8 V15.4 L365.35 16.2 H362.95000000000005 L362.15000000000003 15.4 V12.8 Z" fill="#e4bea4"/><rect x="363.45000000000005" y="13.4" width="1.6" height="1.6" fill="#cfa592"/><rect x="362.15000000000003" y="19.2" width="4" height="0.8" fill="#5e4252"/><path d="M362.95000000000005 20.0 H365.35 L366.15000000000003 20.8 V23.4 L365.35 24.2 H362.95000000000005 L362.15000000000003 23.4 V20.8 Z" fill="#e4bea4"/><rect x="363.45000000000005" y="21.4" width="1.6" height="1.6" fill="#cfa592"/><polygon points="196.00,1.60 204.00,1.60 206.00,2.60 207.20,4.50 208.00,6.00 208.00,27.50 207.00,29.50 205.00,30.80 195.00,30.80 193.00,29.50 192.00,27.50 192.00,6.00 192.80,4.50 194.00,2.60" fill="#5e4252"/><polygon points="196.50,2.60 203.50,2.60 205.50,3.60 206.80,6.00 207.00,27.00 205.00,29.40 195.00,29.40 193.00,27.00 193.20,6.00 194.50,3.60" fill="#a27a76"/><polygon points="197.00,3.30 203.00,3.30 205.00,4.80 205.60,7.00 205.40,13.00 204.20,15.50 202.50,16.60 197.50,16.60 195.80,15.50 194.60,13.00 194.40,7.00 195.00,4.80" fill="#a6dcc8"/><polygon points="197.30,4.00 202.70,4.00 204.40,5.30 204.80,7.30 204.60,12.80 203.60,14.80 202.20,15.80 197.80,15.80 196.40,14.80 195.40,12.80 195.20,7.30 195.60,5.30" fill="#41b282"/><path d="M195 20h3v1h-3zM201 19h2v1h-2zM204 22h2v1.2h-2zM197 23.5h3v1h-3zM194.5 26h2v1h-2z" fill="#6e5060"/><path d="M196 21h3v2h-3zM202 24h3v2h-3z" fill="#b88c84"/><path d="M194 28 L197 26.5 L199 27.5 L201 25.5 L203 27 L206 26.5 L206 29.5 L204 30.4 H196 L194 29.5Z" fill="#5e4252"/><path d="M192.74 43.34 Q192.52 41.04 193.40 39.89 Q194.28 38.74 195.60 38.51 Q196.92 38.28 197.80 36.90 Q198.68 35.52 200.00 34.60 Q201.32 33.68 202.64 33.91 Q203.96 34.14 205.06 35.29 Q206.16 36.44 206.82 38.28 Q207.48 40.12 207.48 42.42 Q207.48 44.72 206.38 46.10 Q205.28 47.48 203.08 47.71 Q200.88 47.94 198.68 47.71 Q196.48 47.48 194.72 46.56 Q192.96 45.64 192.74 43.34Z" fill="#5f4252"/><path d="M194.06 42.88 Q193.84 41.50 194.72 40.72 Q195.60 39.94 196.70 39.57 Q197.80 39.20 198.68 37.82 Q199.56 36.44 200.66 35.75 Q201.76 35.06 202.86 35.29 Q203.96 35.52 204.71 36.67 Q205.46 37.82 205.81 39.43 Q206.16 41.04 206.07 42.65 Q205.98 44.26 204.97 45.32 Q203.96 46.38 202.20 46.56 Q200.44 46.74 198.68 46.56 Q196.92 46.38 195.60 45.32 Q194.28 44.26 194.06 42.88Z" fill="#a98078"/><path d="M195.38 42.56 Q195.16 41.50 196.04 41.04 Q196.92 40.58 197.80 40.35 Q198.68 40.12 199.56 38.74 Q200.44 37.36 201.32 36.81 Q202.20 36.26 203.08 36.72 Q203.96 37.18 204.27 38.65 Q204.58 40.12 204.40 41.73 Q204.22 43.34 202.77 44.03 Q201.32 44.72 199.78 44.63 Q198.24 44.54 196.92 44.08 Q195.60 43.62 195.38 42.56Z" fill="#dcb6a4"/><path d="M199.56 41.27 Q199.12 40.12 200.22 38.51 Q201.32 36.90 202.20 37.13 Q203.08 37.36 203.08 38.97 Q203.08 40.58 202.42 41.73 Q201.76 42.88 200.88 42.65 Q200.00 42.42 199.56 41.27Z" fill="#ecd8ce"/><path d="M32.74 74.42 Q32.96 72.12 34.06 70.51 Q35.16 68.90 36.70 67.98 Q38.24 67.06 39.56 65.91 Q40.88 64.76 41.76 64.99 Q42.64 65.22 43.74 66.60 Q44.84 67.98 45.72 70.05 Q46.60 72.12 47.26 73.04 Q47.92 73.96 47.92 76.03 Q47.92 78.10 46.16 79.02 Q44.40 79.94 42.20 79.94 Q40.00 79.94 37.80 79.48 Q35.60 79.02 34.06 77.87 Q32.52 76.72 32.74 74.42Z" fill="#5f4252"/><path d="M34.06 74.19 Q34.28 72.58 35.16 71.20 Q36.04 69.82 37.36 68.90 Q38.68 67.98 39.87 67.06 Q41.06 66.14 41.85 66.28 Q42.64 66.42 43.52 67.66 Q44.40 68.90 45.06 70.74 Q45.72 72.58 46.16 73.73 Q46.60 74.88 46.38 76.03 Q46.16 77.18 44.84 77.87 Q43.52 78.56 41.76 78.65 Q40.00 78.74 38.24 78.42 Q36.48 78.10 35.16 76.95 Q33.84 75.80 34.06 74.19Z" fill="#a98078"/><path d="M36.04 73.50 Q36.04 72.12 37.14 70.65 Q38.24 69.18 39.69 68.26 Q41.14 67.34 42.16 68.12 Q43.17 68.90 43.56 70.51 Q43.96 72.12 43.65 73.73 Q43.34 75.34 41.89 76.03 Q40.44 76.72 39.12 76.49 Q37.80 76.26 36.92 75.57 Q36.04 74.88 36.04 73.50Z" fill="#dcb6a4"/><path d="M37.80 72.58 Q37.80 71.20 39.12 69.59 Q40.44 67.98 41.32 68.44 Q42.20 68.90 41.76 70.51 Q41.32 72.12 40.22 73.27 Q39.12 74.42 38.46 74.19 Q37.80 73.96 37.80 72.58Z" fill="#ecd8ce"/><path d="M48.74 75.34 Q48.52 73.04 49.40 71.89 Q50.28 70.74 51.60 70.51 Q52.92 70.28 53.80 68.90 Q54.68 67.52 56.00 66.60 Q57.32 65.68 58.64 65.91 Q59.96 66.14 61.06 67.29 Q62.16 68.44 62.82 70.28 Q63.48 72.12 63.48 74.42 Q63.48 76.72 62.38 78.10 Q61.28 79.48 59.08 79.71 Q56.88 79.94 54.68 79.71 Q52.48 79.48 50.72 78.56 Q48.96 77.64 48.74 75.34Z" fill="#5f4252"/><path d="M50.06 74.88 Q49.84 73.50 50.72 72.72 Q51.60 71.94 52.70 71.57 Q53.80 71.20 54.68 69.82 Q55.56 68.44 56.66 67.75 Q57.76 67.06 58.86 67.29 Q59.96 67.52 60.71 68.67 Q61.46 69.82 61.81 71.43 Q62.16 73.04 62.07 74.65 Q61.98 76.26 60.97 77.32 Q59.96 78.38 58.20 78.56 Q56.44 78.74 54.68 78.56 Q52.92 78.38 51.60 77.32 Q50.28 76.26 50.06 74.88Z" fill="#a98078"/><path d="M51.38 74.56 Q51.16 73.50 52.04 73.04 Q52.92 72.58 53.80 72.35 Q54.68 72.12 55.56 70.74 Q56.44 69.36 57.32 68.81 Q58.20 68.26 59.08 68.72 Q59.96 69.18 60.27 70.65 Q60.58 72.12 60.40 73.73 Q60.22 75.34 58.77 76.03 Q57.32 76.72 55.78 76.63 Q54.24 76.54 52.92 76.08 Q51.60 75.62 51.38 74.56Z" fill="#dcb6a4"/><path d="M55.56 73.27 Q55.12 72.12 56.22 70.51 Q57.32 68.90 58.20 69.13 Q59.08 69.36 59.08 70.97 Q59.08 72.58 58.42 73.73 Q57.76 74.88 56.88 74.65 Q56.00 74.42 55.56 73.27Z" fill="#ecd8ce"/><path d="M64.74 74.42 Q64.96 72.12 66.06 70.51 Q67.16 68.90 68.70 67.98 Q70.24 67.06 71.56 65.91 Q72.88 64.76 73.76 64.99 Q74.64 65.22 75.74 66.60 Q76.84 67.98 77.72 70.05 Q78.60 72.12 79.26 73.04 Q79.92 73.96 79.92 76.03 Q79.92 78.10 78.16 79.02 Q76.40 79.94 74.20 79.94 Q72.00 79.94 69.80 79.48 Q67.60 79.02 66.06 77.87 Q64.52 76.72 64.74 74.42Z" fill="#5f4252"/><path d="M66.06 74.19 Q66.28 72.58 67.16 71.20 Q68.04 69.82 69.36 68.90 Q70.68 67.98 71.87 67.06 Q73.06 66.14 73.85 66.28 Q74.64 66.42 75.52 67.66 Q76.40 68.90 77.06 70.74 Q77.72 72.58 78.16 73.73 Q78.60 74.88 78.38 76.03 Q78.16 77.18 76.84 77.87 Q75.52 78.56 73.76 78.65 Q72.00 78.74 70.24 78.42 Q68.48 78.10 67.16 76.95 Q65.84 75.80 66.06 74.19Z" fill="#a98078"/><path d="M68.04 73.50 Q68.04 72.12 69.14 70.65 Q70.24 69.18 71.69 68.26 Q73.14 67.34 74.16 68.12 Q75.17 68.90 75.56 70.51 Q75.96 72.12 75.65 73.73 Q75.34 75.34 73.89 76.03 Q72.44 76.72 71.12 76.49 Q69.80 76.26 68.92 75.57 Q68.04 74.88 68.04 73.50Z" fill="#dcb6a4"/><path d="M69.80 72.58 Q69.80 71.20 71.12 69.59 Q72.44 67.98 73.32 68.44 Q74.20 68.90 73.76 70.51 Q73.32 72.12 72.22 73.27 Q71.12 74.42 70.46 74.19 Q69.80 73.96 69.80 72.58Z" fill="#ecd8ce"/><path d="M80.74 75.34 Q80.52 73.04 81.40 71.89 Q82.28 70.74 83.60 70.51 Q84.92 70.28 85.80 68.90 Q86.68 67.52 88.00 66.60 Q89.32 65.68 90.64 65.91 Q91.96 66.14 93.06 67.29 Q94.16 68.44 94.82 70.28 Q95.48 72.12 95.48 74.42 Q95.48 76.72 94.38 78.10 Q93.28 79.48 91.08 79.71 Q88.88 79.94 86.68 79.71 Q84.48 79.48 82.72 78.56 Q80.96 77.64 80.74 75.34Z" fill="#5f4252"/><path d="M82.06 74.88 Q81.84 73.50 82.72 72.72 Q83.60 71.94 84.70 71.57 Q85.80 71.20 86.68 69.82 Q87.56 68.44 88.66 67.75 Q89.76 67.06 90.86 67.29 Q91.96 67.52 92.71 68.67 Q93.46 69.82 93.81 71.43 Q94.16 73.04 94.07 74.65 Q93.98 76.26 92.97 77.32 Q91.96 78.38 90.20 78.56 Q88.44 78.74 86.68 78.56 Q84.92 78.38 83.60 77.32 Q82.28 76.26 82.06 74.88Z" fill="#a98078"/><path d="M83.38 74.56 Q83.16 73.50 84.04 73.04 Q84.92 72.58 85.80 72.35 Q86.68 72.12 87.56 70.74 Q88.44 69.36 89.32 68.81 Q90.20 68.26 91.08 68.72 Q91.96 69.18 92.27 70.65 Q92.58 72.12 92.40 73.73 Q92.22 75.34 90.77 76.03 Q89.32 76.72 87.78 76.63 Q86.24 76.54 84.92 76.08 Q83.60 75.62 83.38 74.56Z" fill="#dcb6a4"/><path d="M87.56 73.27 Q87.12 72.12 88.22 70.51 Q89.32 68.90 90.20 69.13 Q91.08 69.36 91.08 70.97 Q91.08 72.58 90.42 73.73 Q89.76 74.88 88.88 74.65 Q88.00 74.42 87.56 73.27Z" fill="#ecd8ce"/><path d="M96.74 74.42 Q96.96 72.12 98.06 70.51 Q99.16 68.90 100.70 67.98 Q102.24 67.06 103.56 65.91 Q104.88 64.76 105.76 64.99 Q106.64 65.22 107.74 66.60 Q108.84 67.98 109.72 70.05 Q110.60 72.12 111.26 73.04 Q111.92 73.96 111.92 76.03 Q111.92 78.10 110.16 79.02 Q108.40 79.94 106.20 79.94 Q104.00 79.94 101.80 79.48 Q99.60 79.02 98.06 77.87 Q96.52 76.72 96.74 74.42Z" fill="#5f4252"/><path d="M98.06 74.19 Q98.28 72.58 99.16 71.20 Q100.04 69.82 101.36 68.90 Q102.68 67.98 103.87 67.06 Q105.06 66.14 105.85 66.28 Q106.64 66.42 107.52 67.66 Q108.40 68.90 109.06 70.74 Q109.72 72.58 110.16 73.73 Q110.60 74.88 110.38 76.03 Q110.16 77.18 108.84 77.87 Q107.52 78.56 105.76 78.65 Q104.00 78.74 102.24 78.42 Q100.48 78.10 99.16 76.95 Q97.84 75.80 98.06 74.19Z" fill="#a98078"/><path d="M100.04 73.50 Q100.04 72.12 101.14 70.65 Q102.24 69.18 103.69 68.26 Q105.14 67.34 106.16 68.12 Q107.17 68.90 107.56 70.51 Q107.96 72.12 107.65 73.73 Q107.34 75.34 105.89 76.03 Q104.44 76.72 103.12 76.49 Q101.80 76.26 100.92 75.57 Q100.04 74.88 100.04 73.50Z" fill="#dcb6a4"/><path d="M101.80 72.58 Q101.80 71.20 103.12 69.59 Q104.44 67.98 105.32 68.44 Q106.20 68.90 105.76 70.51 Q105.32 72.12 104.22 73.27 Q103.12 74.42 102.46 74.19 Q101.80 73.96 101.80 72.58Z" fill="#ecd8ce"/><path d="M288.74 74.42 Q288.96 72.12 290.06 70.51 Q291.16 68.90 292.70 67.98 Q294.24 67.06 295.56 65.91 Q296.88 64.76 297.76 64.99 Q298.64 65.22 299.74 66.60 Q300.84 67.98 301.72 70.05 Q302.60 72.12 303.26 73.04 Q303.92 73.96 303.92 76.03 Q303.92 78.10 302.16 79.02 Q300.40 79.94 298.20 79.94 Q296.00 79.94 293.80 79.48 Q291.60 79.02 290.06 77.87 Q288.52 76.72 288.74 74.42Z" fill="#5f4252"/><path d="M290.06 74.19 Q290.28 72.58 291.16 71.20 Q292.04 69.82 293.36 68.90 Q294.68 67.98 295.87 67.06 Q297.06 66.14 297.85 66.28 Q298.64 66.42 299.52 67.66 Q300.40 68.90 301.06 70.74 Q301.72 72.58 302.16 73.73 Q302.60 74.88 302.38 76.03 Q302.16 77.18 300.84 77.87 Q299.52 78.56 297.76 78.65 Q296.00 78.74 294.24 78.42 Q292.48 78.10 291.16 76.95 Q289.84 75.80 290.06 74.19Z" fill="#a98078"/><path d="M292.04 73.50 Q292.04 72.12 293.14 70.65 Q294.24 69.18 295.69 68.26 Q297.14 67.34 298.16 68.12 Q299.17 68.90 299.56 70.51 Q299.96 72.12 299.65 73.73 Q299.34 75.34 297.89 76.03 Q296.44 76.72 295.12 76.49 Q293.80 76.26 292.92 75.57 Q292.04 74.88 292.04 73.50Z" fill="#dcb6a4"/><path d="M293.80 72.58 Q293.80 71.20 295.12 69.59 Q296.44 67.98 297.32 68.44 Q298.20 68.90 297.76 70.51 Q297.32 72.12 296.22 73.27 Q295.12 74.42 294.46 74.19 Q293.80 73.96 293.80 72.58Z" fill="#ecd8ce"/><path d="M304.74 75.34 Q304.52 73.04 305.40 71.89 Q306.28 70.74 307.60 70.51 Q308.92 70.28 309.80 68.90 Q310.68 67.52 312.00 66.60 Q313.32 65.68 314.64 65.91 Q315.96 66.14 317.06 67.29 Q318.16 68.44 318.82 70.28 Q319.48 72.12 319.48 74.42 Q319.48 76.72 318.38 78.10 Q317.28 79.48 315.08 79.71 Q312.88 79.94 310.68 79.71 Q308.48 79.48 306.72 78.56 Q304.96 77.64 304.74 75.34Z" fill="#5f4252"/><path d="M306.06 74.88 Q305.84 73.50 306.72 72.72 Q307.60 71.94 308.70 71.57 Q309.80 71.20 310.68 69.82 Q311.56 68.44 312.66 67.75 Q313.76 67.06 314.86 67.29 Q315.96 67.52 316.71 68.67 Q317.46 69.82 317.81 71.43 Q318.16 73.04 318.07 74.65 Q317.98 76.26 316.97 77.32 Q315.96 78.38 314.20 78.56 Q312.44 78.74 310.68 78.56 Q308.92 78.38 307.60 77.32 Q306.28 76.26 306.06 74.88Z" fill="#a98078"/><path d="M307.38 74.56 Q307.16 73.50 308.04 73.04 Q308.92 72.58 309.80 72.35 Q310.68 72.12 311.56 70.74 Q312.44 69.36 313.32 68.81 Q314.20 68.26 315.08 68.72 Q315.96 69.18 316.27 70.65 Q316.58 72.12 316.40 73.73 Q316.22 75.34 314.77 76.03 Q313.32 76.72 311.78 76.63 Q310.24 76.54 308.92 76.08 Q307.60 75.62 307.38 74.56Z" fill="#dcb6a4"/><path d="M311.56 73.27 Q311.12 72.12 312.22 70.51 Q313.32 68.90 314.20 69.13 Q315.08 69.36 315.08 70.97 Q315.08 72.58 314.42 73.73 Q313.76 74.88 312.88 74.65 Q312.00 74.42 311.56 73.27Z" fill="#ecd8ce"/><path d="M320.74 74.42 Q320.96 72.12 322.06 70.51 Q323.16 68.90 324.70 67.98 Q326.24 67.06 327.56 65.91 Q328.88 64.76 329.76 64.99 Q330.64 65.22 331.74 66.60 Q332.84 67.98 333.72 70.05 Q334.60 72.12 335.26 73.04 Q335.92 73.96 335.92 76.03 Q335.92 78.10 334.16 79.02 Q332.40 79.94 330.20 79.94 Q328.00 79.94 325.80 79.48 Q323.60 79.02 322.06 77.87 Q320.52 76.72 320.74 74.42Z" fill="#5f4252"/><path d="M322.06 74.19 Q322.28 72.58 323.16 71.20 Q324.04 69.82 325.36 68.90 Q326.68 67.98 327.87 67.06 Q329.06 66.14 329.85 66.28 Q330.64 66.42 331.52 67.66 Q332.40 68.90 333.06 70.74 Q333.72 72.58 334.16 73.73 Q334.60 74.88 334.38 76.03 Q334.16 77.18 332.84 77.87 Q331.52 78.56 329.76 78.65 Q328.00 78.74 326.24 78.42 Q324.48 78.10 323.16 76.95 Q321.84 75.80 322.06 74.19Z" fill="#a98078"/><path d="M324.04 73.50 Q324.04 72.12 325.14 70.65 Q326.24 69.18 327.69 68.26 Q329.14 67.34 330.16 68.12 Q331.17 68.90 331.56 70.51 Q331.96 72.12 331.65 73.73 Q331.34 75.34 329.89 76.03 Q328.44 76.72 327.12 76.49 Q325.80 76.26 324.92 75.57 Q324.04 74.88 324.04 73.50Z" fill="#dcb6a4"/><path d="M325.80 72.58 Q325.80 71.20 327.12 69.59 Q328.44 67.98 329.32 68.44 Q330.20 68.90 329.76 70.51 Q329.32 72.12 328.22 73.27 Q327.12 74.42 326.46 74.19 Q325.80 73.96 325.80 72.58Z" fill="#ecd8ce"/><path d="M336.74 75.34 Q336.52 73.04 337.40 71.89 Q338.28 70.74 339.60 70.51 Q340.92 70.28 341.80 68.90 Q342.68 67.52 344.00 66.60 Q345.32 65.68 346.64 65.91 Q347.96 66.14 349.06 67.29 Q350.16 68.44 350.82 70.28 Q351.48 72.12 351.48 74.42 Q351.48 76.72 350.38 78.10 Q349.28 79.48 347.08 79.71 Q344.88 79.94 342.68 79.71 Q340.48 79.48 338.72 78.56 Q336.96 77.64 336.74 75.34Z" fill="#5f4252"/><path d="M338.06 74.88 Q337.84 73.50 338.72 72.72 Q339.60 71.94 340.70 71.57 Q341.80 71.20 342.68 69.82 Q343.56 68.44 344.66 67.75 Q345.76 67.06 346.86 67.29 Q347.96 67.52 348.71 68.67 Q349.46 69.82 349.81 71.43 Q350.16 73.04 350.07 74.65 Q349.98 76.26 348.97 77.32 Q347.96 78.38 346.20 78.56 Q344.44 78.74 342.68 78.56 Q340.92 78.38 339.60 77.32 Q338.28 76.26 338.06 74.88Z" fill="#a98078"/><path d="M339.38 74.56 Q339.16 73.50 340.04 73.04 Q340.92 72.58 341.80 72.35 Q342.68 72.12 343.56 70.74 Q344.44 69.36 345.32 68.81 Q346.20 68.26 347.08 68.72 Q347.96 69.18 348.27 70.65 Q348.58 72.12 348.40 73.73 Q348.22 75.34 346.77 76.03 Q345.32 76.72 343.78 76.63 Q342.24 76.54 340.92 76.08 Q339.60 75.62 339.38 74.56Z" fill="#dcb6a4"/><path d="M343.56 73.27 Q343.12 72.12 344.22 70.51 Q345.32 68.90 346.20 69.13 Q347.08 69.36 347.08 70.97 Q347.08 72.58 346.42 73.73 Q345.76 74.88 344.88 74.65 Q344.00 74.42 343.56 73.27Z" fill="#ecd8ce"/><path d="M352.74 74.42 Q352.96 72.12 354.06 70.51 Q355.16 68.90 356.70 67.98 Q358.24 67.06 359.56 65.91 Q360.88 64.76 361.76 64.99 Q362.64 65.22 363.74 66.60 Q364.84 67.98 365.72 70.05 Q366.60 72.12 367.26 73.04 Q367.92 73.96 367.92 76.03 Q367.92 78.10 366.16 79.02 Q364.40 79.94 362.20 79.94 Q360.00 79.94 357.80 79.48 Q355.60 79.02 354.06 77.87 Q352.52 76.72 352.74 74.42Z" fill="#5f4252"/><path d="M354.06 74.19 Q354.28 72.58 355.16 71.20 Q356.04 69.82 357.36 68.90 Q358.68 67.98 359.87 67.06 Q361.06 66.14 361.85 66.28 Q362.64 66.42 363.52 67.66 Q364.40 68.90 365.06 70.74 Q365.72 72.58 366.16 73.73 Q366.60 74.88 366.38 76.03 Q366.16 77.18 364.84 77.87 Q363.52 78.56 361.76 78.65 Q360.00 78.74 358.24 78.42 Q356.48 78.10 355.16 76.95 Q353.84 75.80 354.06 74.19Z" fill="#a98078"/><path d="M356.04 73.50 Q356.04 72.12 357.14 70.65 Q358.24 69.18 359.69 68.26 Q361.14 67.34 362.16 68.12 Q363.17 68.90 363.56 70.51 Q363.96 72.12 363.65 73.73 Q363.34 75.34 361.89 76.03 Q360.44 76.72 359.12 76.49 Q357.80 76.26 356.92 75.57 Q356.04 74.88 356.04 73.50Z" fill="#dcb6a4"/><path d="M357.80 72.58 Q357.80 71.20 359.12 69.59 Q360.44 67.98 361.32 68.44 Q362.20 68.90 361.76 70.51 Q361.32 72.12 360.22 73.27 Q359.12 74.42 358.46 74.19 Q357.80 73.96 357.80 72.58Z" fill="#ecd8ce"/><rect x="145.5" y="87.19999999999999" width="28.5" height="4.6" fill="#5e4252"/><rect x="145.5" y="87.99999999999999" width="28.5" height="3" fill="#85605a"/><rect x="145.5" y="88.19999999999999" width="28.5" height="0.9" fill="#a27870"/><rect x="145.5" y="167.2" width="28.5" height="4.6" fill="#5e4252"/><rect x="145.5" y="168.0" width="28.5" height="3" fill="#85605a"/><rect x="145.5" y="168.2" width="28.5" height="0.9" fill="#a27870"/><path d="M154.15 92.6 H158.95 V96.1 H155.75 Z" fill="#82828e"/><path d="M154.15 82.6 H158.15 L158.95 83.39999999999999 V93.8 H153.35 V83.39999999999999 Z" fill="#5e4252"/><rect x="154.15" y="86.6" width="4" height="5.999999999999999" fill="#85605a"/><rect x="154.65" y="86.8" width="0.6" height="3" fill="#a27870"/><rect x="157.04999999999998" y="86.8" width="0.6" height="3" fill="#a27870"/><path d="M154.95000000000002 82.89999999999999 H157.35 L158.15 83.69999999999999 V86.3 L157.35 87.1 H154.95000000000002 L154.15 86.3 V83.69999999999999 Z" fill="#e4bea4"/><rect x="155.45000000000002" y="84.3" width="1.6" height="1.6" fill="#cfa592"/><path d="M154.15 172.6 H158.95 V176.1 H155.75 Z" fill="#82828e"/><path d="M154.15 162.6 H158.15 L158.95 163.4 V173.79999999999998 H153.35 V163.4 Z" fill="#5e4252"/><rect x="154.15" y="166.6" width="4" height="5.999999999999999" fill="#85605a"/><rect x="154.65" y="166.79999999999998" width="0.6" height="3" fill="#a27870"/><rect x="157.04999999999998" y="166.79999999999998" width="0.6" height="3" fill="#a27870"/><path d="M154.95000000000002 162.9 H157.35 L158.15 163.70000000000002 V166.3 L157.35 167.1 H154.95000000000002 L154.15 166.3 V163.70000000000002 Z" fill="#e4bea4"/><rect x="155.45000000000002" y="164.3" width="1.6" height="1.6" fill="#cfa592"/><path d="M162.15 92.6 H166.95 V96.1 H163.75 Z" fill="#82828e"/><path d="M162.15 82.6 H166.15 L166.95 83.39999999999999 V93.8 H161.35 V83.39999999999999 Z" fill="#5e4252"/><rect x="162.15" y="86.6" width="4" height="5.999999999999999" fill="#85605a"/><rect x="162.65" y="86.8" width="0.6" height="3" fill="#a27870"/><rect x="165.04999999999998" y="86.8" width="0.6" height="3" fill="#a27870"/><path d="M162.95000000000002 82.89999999999999 H165.35 L166.15 83.69999999999999 V86.3 L165.35 87.1 H162.95000000000002 L162.15 86.3 V83.69999999999999 Z" fill="#e4bea4"/><rect x="163.45000000000002" y="84.3" width="1.6" height="1.6" fill="#cfa592"/><path d="M162.15 172.6 H166.95 V176.1 H163.75 Z" fill="#82828e"/><path d="M162.15 162.6 H166.15 L166.95 163.4 V173.79999999999998 H161.35 V163.4 Z" fill="#5e4252"/><rect x="162.15" y="166.6" width="4" height="5.999999999999999" fill="#85605a"/><rect x="162.65" y="166.79999999999998" width="0.6" height="3" fill="#a27870"/><rect x="165.04999999999998" y="166.79999999999998" width="0.6" height="3" fill="#a27870"/><path d="M162.95000000000002 162.9 H165.35 L166.15 163.70000000000002 V166.3 L165.35 167.1 H162.95000000000002 L162.15 166.3 V163.70000000000002 Z" fill="#e4bea4"/><rect x="163.45000000000002" y="164.3" width="1.6" height="1.6" fill="#cfa592"/><path d="M146.15 82.6 H150.15 L150.95 83.39999999999999 V173.79999999999998 H145.35 V83.39999999999999 Z" fill="#5e4252"/><rect x="146.15" y="86.8" width="4" height="85.79999999999998" fill="#85605a"/><path d="M146.95000000000002 83.0 H149.35 L150.15 83.8 V86.4 L149.35 87.2 H146.95000000000002 L146.15 86.4 V83.8 Z" fill="#e4bea4"/><rect x="147.45000000000002" y="84.4" width="1.6" height="1.6" fill="#cfa592"/><rect x="146.15" y="91.2" width="4" height="0.8" fill="#5e4252"/><path d="M146.95000000000002 92.0 H149.35 L150.15 92.8 V95.4 L149.35 96.2 H146.95000000000002 L146.15 95.4 V92.8 Z" fill="#e4bea4"/><rect x="147.45000000000002" y="93.4" width="1.6" height="1.6" fill="#cfa592"/><rect x="146.15" y="99.2" width="4" height="0.8" fill="#5e4252"/><path d="M146.95000000000002 100.0 H149.35 L150.15 100.8 V103.4 L149.35 104.2 H146.95000000000002 L146.15 103.4 V100.8 Z" fill="#e4bea4"/><rect x="147.45000000000002" y="101.4" width="1.6" height="1.6" fill="#cfa592"/><rect x="146.15" y="107.2" width="4" height="0.8" fill="#5e4252"/><path d="M146.95000000000002 108.0 H149.35 L150.15 108.8 V111.4 L149.35 112.2 H146.95000000000002 L146.15 111.4 V108.8 Z" fill="#e4bea4"/><rect x="147.45000000000002" y="109.4" width="1.6" height="1.6" fill="#cfa592"/><rect x="146.15" y="115.2" width="4" height="0.8" fill="#5e4252"/><path d="M146.95000000000002 116.0 H149.35 L150.15 116.8 V119.4 L149.35 120.2 H146.95000000000002 L146.15 119.4 V116.8 Z" fill="#e4bea4"/><rect x="147.45000000000002" y="117.4" width="1.6" height="1.6" fill="#cfa592"/><rect x="146.15" y="123.2" width="4" height="0.8" fill="#5e4252"/><path d="M146.95000000000002 124.0 H149.35 L150.15 124.8 V127.4 L149.35 128.2 H146.95000000000002 L146.15 127.4 V124.8 Z" fill="#e4bea4"/><rect x="147.45000000000002" y="125.4" width="1.6" height="1.6" fill="#cfa592"/><rect x="146.15" y="131.2" width="4" height="0.8" fill="#5e4252"/><path d="M146.95000000000002 132.0 H149.35 L150.15 132.8 V135.4 L149.35 136.2 H146.95000000000002 L146.15 135.4 V132.8 Z" fill="#e4bea4"/><rect x="147.45000000000002" y="133.4" width="1.6" height="1.6" fill="#cfa592"/><rect x="146.15" y="139.2" width="4" height="0.8" fill="#5e4252"/><path d="M146.95000000000002 140.0 H149.35 L150.15 140.8 V143.4 L149.35 144.2 H146.95000000000002 L146.15 143.4 V140.8 Z" fill="#e4bea4"/><rect x="147.45000000000002" y="141.4" width="1.6" height="1.6" fill="#cfa592"/><rect x="146.15" y="147.2" width="4" height="0.8" fill="#5e4252"/><path d="M146.95000000000002 148.0 H149.35 L150.15 148.8 V151.4 L149.35 152.2 H146.95000000000002 L146.15 151.4 V148.8 Z" fill="#e4bea4"/><rect x="147.45000000000002" y="149.4" width="1.6" height="1.6" fill="#cfa592"/><rect x="146.15" y="155.2" width="4" height="0.8" fill="#5e4252"/><path d="M146.95000000000002 156.0 H149.35 L150.15 156.8 V159.4 L149.35 160.2 H146.95000000000002 L146.15 159.4 V156.8 Z" fill="#e4bea4"/><rect x="147.45000000000002" y="157.4" width="1.6" height="1.6" fill="#cfa592"/><rect x="146.15" y="163.2" width="4" height="0.8" fill="#5e4252"/><path d="M146.95000000000002 164.0 H149.35 L150.15 164.8 V167.4 L149.35 168.2 H146.95000000000002 L146.15 167.4 V164.8 Z" fill="#e4bea4"/><rect x="147.45000000000002" y="165.4" width="1.6" height="1.6" fill="#cfa592"/><path d="M170.15 82.6 H174.15 L174.95 83.39999999999999 V173.79999999999998 H169.35 V83.39999999999999 Z" fill="#5e4252"/><rect x="170.15" y="86.8" width="4" height="85.79999999999998" fill="#85605a"/><path d="M170.95000000000002 83.0 H173.35 L174.15 83.8 V86.4 L173.35 87.2 H170.95000000000002 L170.15 86.4 V83.8 Z" fill="#e4bea4"/><rect x="171.45000000000002" y="84.4" width="1.6" height="1.6" fill="#cfa592"/><rect x="170.15" y="91.2" width="4" height="0.8" fill="#5e4252"/><path d="M170.95000000000002 92.0 H173.35 L174.15 92.8 V95.4 L173.35 96.2 H170.95000000000002 L170.15 95.4 V92.8 Z" fill="#e4bea4"/><rect x="171.45000000000002" y="93.4" width="1.6" height="1.6" fill="#cfa592"/><rect x="170.15" y="99.2" width="4" height="0.8" fill="#5e4252"/><path d="M170.95000000000002 100.0 H173.35 L174.15 100.8 V103.4 L173.35 104.2 H170.95000000000002 L170.15 103.4 V100.8 Z" fill="#e4bea4"/><rect x="171.45000000000002" y="101.4" width="1.6" height="1.6" fill="#cfa592"/><rect x="170.15" y="107.2" width="4" height="0.8" fill="#5e4252"/><path d="M170.95000000000002 108.0 H173.35 L174.15 108.8 V111.4 L173.35 112.2 H170.95000000000002 L170.15 111.4 V108.8 Z" fill="#e4bea4"/><rect x="171.45000000000002" y="109.4" width="1.6" height="1.6" fill="#cfa592"/><rect x="170.15" y="115.2" width="4" height="0.8" fill="#5e4252"/><path d="M170.95000000000002 116.0 H173.35 L174.15 116.8 V119.4 L173.35 120.2 H170.95000000000002 L170.15 119.4 V116.8 Z" fill="#e4bea4"/><rect x="171.45000000000002" y="117.4" width="1.6" height="1.6" fill="#cfa592"/><rect x="170.15" y="123.2" width="4" height="0.8" fill="#5e4252"/><path d="M170.95000000000002 124.0 H173.35 L174.15 124.8 V127.4 L173.35 128.2 H170.95000000000002 L170.15 127.4 V124.8 Z" fill="#e4bea4"/><rect x="171.45000000000002" y="125.4" width="1.6" height="1.6" fill="#cfa592"/><rect x="170.15" y="131.2" width="4" height="0.8" fill="#5e4252"/><path d="M170.95000000000002 132.0 H173.35 L174.15 132.8 V135.4 L173.35 136.2 H170.95000000000002 L170.15 135.4 V132.8 Z" fill="#e4bea4"/><rect x="171.45000000000002" y="133.4" width="1.6" height="1.6" fill="#cfa592"/><rect x="170.15" y="139.2" width="4" height="0.8" fill="#5e4252"/><path d="M170.95000000000002 140.0 H173.35 L174.15 140.8 V143.4 L173.35 144.2 H170.95000000000002 L170.15 143.4 V140.8 Z" fill="#e4bea4"/><rect x="171.45000000000002" y="141.4" width="1.6" height="1.6" fill="#cfa592"/><rect x="170.15" y="147.2" width="4" height="0.8" fill="#5e4252"/><path d="M170.95000000000002 148.0 H173.35 L174.15 148.8 V151.4 L173.35 152.2 H170.95000000000002 L170.15 151.4 V148.8 Z" fill="#e4bea4"/><rect x="171.45000000000002" y="149.4" width="1.6" height="1.6" fill="#cfa592"/><rect x="170.15" y="155.2" width="4" height="0.8" fill="#5e4252"/><path d="M170.95000000000002 156.0 H173.35 L174.15 156.8 V159.4 L173.35 160.2 H170.95000000000002 L170.15 159.4 V156.8 Z" fill="#e4bea4"/><rect x="171.45000000000002" y="157.4" width="1.6" height="1.6" fill="#cfa592"/><rect x="170.15" y="163.2" width="4" height="0.8" fill="#5e4252"/><path d="M170.95000000000002 164.0 H173.35 L174.15 164.8 V167.4 L173.35 168.2 H170.95000000000002 L170.15 167.4 V164.8 Z" fill="#e4bea4"/><rect x="171.45000000000002" y="165.4" width="1.6" height="1.6" fill="#cfa592"/><rect x="225.5" y="87.19999999999999" width="28.5" height="4.6" fill="#5e4252"/><rect x="225.5" y="87.99999999999999" width="28.5" height="3" fill="#85605a"/><rect x="225.5" y="88.19999999999999" width="28.5" height="0.9" fill="#a27870"/><rect x="225.5" y="167.2" width="28.5" height="4.6" fill="#5e4252"/><rect x="225.5" y="168.0" width="28.5" height="3" fill="#85605a"/><rect x="225.5" y="168.2" width="28.5" height="0.9" fill="#a27870"/><path d="M234.15 92.6 H238.95 V96.1 H235.75 Z" fill="#82828e"/><path d="M234.15 82.6 H238.15 L238.95 83.39999999999999 V93.8 H233.35 V83.39999999999999 Z" fill="#5e4252"/><rect x="234.15" y="86.6" width="4" height="5.999999999999999" fill="#85605a"/><rect x="234.65" y="86.8" width="0.6" height="3" fill="#a27870"/><rect x="237.04999999999998" y="86.8" width="0.6" height="3" fill="#a27870"/><path d="M234.95000000000002 82.89999999999999 H237.35 L238.15 83.69999999999999 V86.3 L237.35 87.1 H234.95000000000002 L234.15 86.3 V83.69999999999999 Z" fill="#e4bea4"/><rect x="235.45000000000002" y="84.3" width="1.6" height="1.6" fill="#cfa592"/><path d="M234.15 172.6 H238.95 V176.1 H235.75 Z" fill="#82828e"/><path d="M234.15 162.6 H238.15 L238.95 163.4 V173.79999999999998 H233.35 V163.4 Z" fill="#5e4252"/><rect x="234.15" y="166.6" width="4" height="5.999999999999999" fill="#85605a"/><rect x="234.65" y="166.79999999999998" width="0.6" height="3" fill="#a27870"/><rect x="237.04999999999998" y="166.79999999999998" width="0.6" height="3" fill="#a27870"/><path d="M234.95000000000002 162.9 H237.35 L238.15 163.70000000000002 V166.3 L237.35 167.1 H234.95000000000002 L234.15 166.3 V163.70000000000002 Z" fill="#e4bea4"/><rect x="235.45000000000002" y="164.3" width="1.6" height="1.6" fill="#cfa592"/><path d="M242.15 92.6 H246.95 V96.1 H243.75 Z" fill="#82828e"/><path d="M242.15 82.6 H246.15 L246.95 83.39999999999999 V93.8 H241.35 V83.39999999999999 Z" fill="#5e4252"/><rect x="242.15" y="86.6" width="4" height="5.999999999999999" fill="#85605a"/><rect x="242.65" y="86.8" width="0.6" height="3" fill="#a27870"/><rect x="245.04999999999998" y="86.8" width="0.6" height="3" fill="#a27870"/><path d="M242.95000000000002 82.89999999999999 H245.35 L246.15 83.69999999999999 V86.3 L245.35 87.1 H242.95000000000002 L242.15 86.3 V83.69999999999999 Z" fill="#e4bea4"/><rect x="243.45000000000002" y="84.3" width="1.6" height="1.6" fill="#cfa592"/><path d="M242.15 172.6 H246.95 V176.1 H243.75 Z" fill="#82828e"/><path d="M242.15 162.6 H246.15 L246.95 163.4 V173.79999999999998 H241.35 V163.4 Z" fill="#5e4252"/><rect x="242.15" y="166.6" width="4" height="5.999999999999999" fill="#85605a"/><rect x="242.65" y="166.79999999999998" width="0.6" height="3" fill="#a27870"/><rect x="245.04999999999998" y="166.79999999999998" width="0.6" height="3" fill="#a27870"/><path d="M242.95000000000002 162.9 H245.35 L246.15 163.70000000000002 V166.3 L245.35 167.1 H242.95000000000002 L242.15 166.3 V163.70000000000002 Z" fill="#e4bea4"/><rect x="243.45000000000002" y="164.3" width="1.6" height="1.6" fill="#cfa592"/><path d="M226.15 82.6 H230.15 L230.95 83.39999999999999 V173.79999999999998 H225.35 V83.39999999999999 Z" fill="#5e4252"/><rect x="226.15" y="86.8" width="4" height="85.79999999999998" fill="#85605a"/><path d="M226.95000000000002 83.0 H229.35 L230.15 83.8 V86.4 L229.35 87.2 H226.95000000000002 L226.15 86.4 V83.8 Z" fill="#e4bea4"/><rect x="227.45000000000002" y="84.4" width="1.6" height="1.6" fill="#cfa592"/><rect x="226.15" y="91.2" width="4" height="0.8" fill="#5e4252"/><path d="M226.95000000000002 92.0 H229.35 L230.15 92.8 V95.4 L229.35 96.2 H226.95000000000002 L226.15 95.4 V92.8 Z" fill="#e4bea4"/><rect x="227.45000000000002" y="93.4" width="1.6" height="1.6" fill="#cfa592"/><rect x="226.15" y="99.2" width="4" height="0.8" fill="#5e4252"/><path d="M226.95000000000002 100.0 H229.35 L230.15 100.8 V103.4 L229.35 104.2 H226.95000000000002 L226.15 103.4 V100.8 Z" fill="#e4bea4"/><rect x="227.45000000000002" y="101.4" width="1.6" height="1.6" fill="#cfa592"/><rect x="226.15" y="107.2" width="4" height="0.8" fill="#5e4252"/><path d="M226.95000000000002 108.0 H229.35 L230.15 108.8 V111.4 L229.35 112.2 H226.95000000000002 L226.15 111.4 V108.8 Z" fill="#e4bea4"/><rect x="227.45000000000002" y="109.4" width="1.6" height="1.6" fill="#cfa592"/><rect x="226.15" y="115.2" width="4" height="0.8" fill="#5e4252"/><path d="M226.95000000000002 116.0 H229.35 L230.15 116.8 V119.4 L229.35 120.2 H226.95000000000002 L226.15 119.4 V116.8 Z" fill="#e4bea4"/><rect x="227.45000000000002" y="117.4" width="1.6" height="1.6" fill="#cfa592"/><rect x="226.15" y="123.2" width="4" height="0.8" fill="#5e4252"/><path d="M226.95000000000002 124.0 H229.35 L230.15 124.8 V127.4 L229.35 128.2 H226.95000000000002 L226.15 127.4 V124.8 Z" fill="#e4bea4"/><rect x="227.45000000000002" y="125.4" width="1.6" height="1.6" fill="#cfa592"/><rect x="226.15" y="131.2" width="4" height="0.8" fill="#5e4252"/><path d="M226.95000000000002 132.0 H229.35 L230.15 132.8 V135.4 L229.35 136.2 H226.95000000000002 L226.15 135.4 V132.8 Z" fill="#e4bea4"/><rect x="227.45000000000002" y="133.4" width="1.6" height="1.6" fill="#cfa592"/><rect x="226.15" y="139.2" width="4" height="0.8" fill="#5e4252"/><path d="M226.95000000000002 140.0 H229.35 L230.15 140.8 V143.4 L229.35 144.2 H226.95000000000002 L226.15 143.4 V140.8 Z" fill="#e4bea4"/><rect x="227.45000000000002" y="141.4" width="1.6" height="1.6" fill="#cfa592"/><rect x="226.15" y="147.2" width="4" height="0.8" fill="#5e4252"/><path d="M226.95000000000002 148.0 H229.35 L230.15 148.8 V151.4 L229.35 152.2 H226.95000000000002 L226.15 151.4 V148.8 Z" fill="#e4bea4"/><rect x="227.45000000000002" y="149.4" width="1.6" height="1.6" fill="#cfa592"/><rect x="226.15" y="155.2" width="4" height="0.8" fill="#5e4252"/><path d="M226.95000000000002 156.0 H229.35 L230.15 156.8 V159.4 L229.35 160.2 H226.95000000000002 L226.15 159.4 V156.8 Z" fill="#e4bea4"/><rect x="227.45000000000002" y="157.4" width="1.6" height="1.6" fill="#cfa592"/><rect x="226.15" y="163.2" width="4" height="0.8" fill="#5e4252"/><path d="M226.95000000000002 164.0 H229.35 L230.15 164.8 V167.4 L229.35 168.2 H226.95000000000002 L226.15 167.4 V164.8 Z" fill="#e4bea4"/><rect x="227.45000000000002" y="165.4" width="1.6" height="1.6" fill="#cfa592"/><path d="M250.15 82.6 H254.15 L254.95 83.39999999999999 V173.79999999999998 H249.35 V83.39999999999999 Z" fill="#5e4252"/><rect x="250.15" y="86.8" width="4" height="85.79999999999998" fill="#85605a"/><path d="M250.95000000000002 83.0 H253.35 L254.15 83.8 V86.4 L253.35 87.2 H250.95000000000002 L250.15 86.4 V83.8 Z" fill="#e4bea4"/><rect x="251.45000000000002" y="84.4" width="1.6" height="1.6" fill="#cfa592"/><rect x="250.15" y="91.2" width="4" height="0.8" fill="#5e4252"/><path d="M250.95000000000002 92.0 H253.35 L254.15 92.8 V95.4 L253.35 96.2 H250.95000000000002 L250.15 95.4 V92.8 Z" fill="#e4bea4"/><rect x="251.45000000000002" y="93.4" width="1.6" height="1.6" fill="#cfa592"/><rect x="250.15" y="99.2" width="4" height="0.8" fill="#5e4252"/><path d="M250.95000000000002 100.0 H253.35 L254.15 100.8 V103.4 L253.35 104.2 H250.95000000000002 L250.15 103.4 V100.8 Z" fill="#e4bea4"/><rect x="251.45000000000002" y="101.4" width="1.6" height="1.6" fill="#cfa592"/><rect x="250.15" y="107.2" width="4" height="0.8" fill="#5e4252"/><path d="M250.95000000000002 108.0 H253.35 L254.15 108.8 V111.4 L253.35 112.2 H250.95000000000002 L250.15 111.4 V108.8 Z" fill="#e4bea4"/><rect x="251.45000000000002" y="109.4" width="1.6" height="1.6" fill="#cfa592"/><rect x="250.15" y="115.2" width="4" height="0.8" fill="#5e4252"/><path d="M250.95000000000002 116.0 H253.35 L254.15 116.8 V119.4 L253.35 120.2 H250.95000000000002 L250.15 119.4 V116.8 Z" fill="#e4bea4"/><rect x="251.45000000000002" y="117.4" width="1.6" height="1.6" fill="#cfa592"/><rect x="250.15" y="123.2" width="4" height="0.8" fill="#5e4252"/><path d="M250.95000000000002 124.0 H253.35 L254.15 124.8 V127.4 L253.35 128.2 H250.95000000000002 L250.15 127.4 V124.8 Z" fill="#e4bea4"/><rect x="251.45000000000002" y="125.4" width="1.6" height="1.6" fill="#cfa592"/><rect x="250.15" y="131.2" width="4" height="0.8" fill="#5e4252"/><path d="M250.95000000000002 132.0 H253.35 L254.15 132.8 V135.4 L253.35 136.2 H250.95000000000002 L250.15 135.4 V132.8 Z" fill="#e4bea4"/><rect x="251.45000000000002" y="133.4" width="1.6" height="1.6" fill="#cfa592"/><rect x="250.15" y="139.2" width="4" height="0.8" fill="#5e4252"/><path d="M250.95000000000002 140.0 H253.35 L254.15 140.8 V143.4 L253.35 144.2 H250.95000000000002 L250.15 143.4 V140.8 Z" fill="#e4bea4"/><rect x="251.45000000000002" y="141.4" width="1.6" height="1.6" fill="#cfa592"/><rect x="250.15" y="147.2" width="4" height="0.8" fill="#5e4252"/><path d="M250.95000000000002 148.0 H253.35 L254.15 148.8 V151.4 L253.35 152.2 H250.95000000000002 L250.15 151.4 V148.8 Z" fill="#e4bea4"/><rect x="251.45000000000002" y="149.4" width="1.6" height="1.6" fill="#cfa592"/><rect x="250.15" y="155.2" width="4" height="0.8" fill="#5e4252"/><path d="M250.95000000000002 156.0 H253.35 L254.15 156.8 V159.4 L253.35 160.2 H250.95000000000002 L250.15 159.4 V156.8 Z" fill="#e4bea4"/><rect x="251.45000000000002" y="157.4" width="1.6" height="1.6" fill="#cfa592"/><rect x="250.15" y="163.2" width="4" height="0.8" fill="#5e4252"/><path d="M250.95000000000002 164.0 H253.35 L254.15 164.8 V167.4 L253.35 168.2 H250.95000000000002 L250.15 167.4 V164.8 Z" fill="#e4bea4"/><rect x="251.45000000000002" y="165.4" width="1.6" height="1.6" fill="#cfa592"/><rect x="33.5" y="119.19999999999999" width="60.5" height="4.6" fill="#5e4252"/><rect x="33.5" y="119.99999999999999" width="60.5" height="3" fill="#85605a"/><rect x="33.5" y="120.19999999999999" width="60.5" height="0.9" fill="#a27870"/><rect x="33.5" y="135.2" width="60.5" height="4.6" fill="#5e4252"/><rect x="33.5" y="136.0" width="60.5" height="3" fill="#85605a"/><rect x="33.5" y="136.2" width="60.5" height="0.9" fill="#a27870"/><path d="M42.15 124.6 H46.95 V128.1 H43.75 Z" fill="#82828e"/><path d="M42.15 114.6 H46.15 L46.95 115.39999999999999 V125.8 H41.35 V115.39999999999999 Z" fill="#5e4252"/><rect x="42.15" y="118.6" width="4" height="5.999999999999999" fill="#85605a"/><rect x="42.65" y="118.8" width="0.6" height="3" fill="#a27870"/><rect x="45.050000000000004" y="118.8" width="0.6" height="3" fill="#a27870"/><path d="M42.949999999999996 114.89999999999999 H45.35 L46.15 115.69999999999999 V118.3 L45.35 119.1 H42.949999999999996 L42.15 118.3 V115.69999999999999 Z" fill="#e4bea4"/><rect x="43.449999999999996" y="116.3" width="1.6" height="1.6" fill="#cfa592"/><path d="M42.15 140.6 H46.95 V144.1 H43.75 Z" fill="#82828e"/><path d="M42.15 130.6 H46.15 L46.95 131.4 V141.79999999999998 H41.35 V131.4 Z" fill="#5e4252"/><rect x="42.15" y="134.6" width="4" height="5.999999999999999" fill="#85605a"/><rect x="42.65" y="134.79999999999998" width="0.6" height="3" fill="#a27870"/><rect x="45.050000000000004" y="134.79999999999998" width="0.6" height="3" fill="#a27870"/><path d="M42.949999999999996 130.9 H45.35 L46.15 131.70000000000002 V134.3 L45.35 135.1 H42.949999999999996 L42.15 134.3 V131.70000000000002 Z" fill="#e4bea4"/><rect x="43.449999999999996" y="132.3" width="1.6" height="1.6" fill="#cfa592"/><path d="M50.15 124.6 H54.95 V128.1 H51.75 Z" fill="#82828e"/><path d="M50.15 114.6 H54.15 L54.95 115.39999999999999 V125.8 H49.35 V115.39999999999999 Z" fill="#5e4252"/><rect x="50.15" y="118.6" width="4" height="5.999999999999999" fill="#85605a"/><rect x="50.65" y="118.8" width="0.6" height="3" fill="#a27870"/><rect x="53.050000000000004" y="118.8" width="0.6" height="3" fill="#a27870"/><path d="M50.949999999999996 114.89999999999999 H53.35 L54.15 115.69999999999999 V118.3 L53.35 119.1 H50.949999999999996 L50.15 118.3 V115.69999999999999 Z" fill="#e4bea4"/><rect x="51.449999999999996" y="116.3" width="1.6" height="1.6" fill="#cfa592"/><path d="M50.15 140.6 H54.95 V144.1 H51.75 Z" fill="#82828e"/><path d="M50.15 130.6 H54.15 L54.95 131.4 V141.79999999999998 H49.35 V131.4 Z" fill="#5e4252"/><rect x="50.15" y="134.6" width="4" height="5.999999999999999" fill="#85605a"/><rect x="50.65" y="134.79999999999998" width="0.6" height="3" fill="#a27870"/><rect x="53.050000000000004" y="134.79999999999998" width="0.6" height="3" fill="#a27870"/><path d="M50.949999999999996 130.9 H53.35 L54.15 131.70000000000002 V134.3 L53.35 135.1 H50.949999999999996 L50.15 134.3 V131.70000000000002 Z" fill="#e4bea4"/><rect x="51.449999999999996" y="132.3" width="1.6" height="1.6" fill="#cfa592"/><path d="M58.15 124.6 H62.95 V128.1 H59.75 Z" fill="#82828e"/><path d="M58.15 114.6 H62.15 L62.95 115.39999999999999 V125.8 H57.35 V115.39999999999999 Z" fill="#5e4252"/><rect x="58.15" y="118.6" width="4" height="5.999999999999999" fill="#85605a"/><rect x="58.65" y="118.8" width="0.6" height="3" fill="#a27870"/><rect x="61.050000000000004" y="118.8" width="0.6" height="3" fill="#a27870"/><path d="M58.949999999999996 114.89999999999999 H61.35 L62.15 115.69999999999999 V118.3 L61.35 119.1 H58.949999999999996 L58.15 118.3 V115.69999999999999 Z" fill="#e4bea4"/><rect x="59.449999999999996" y="116.3" width="1.6" height="1.6" fill="#cfa592"/><path d="M58.15 140.6 H62.95 V144.1 H59.75 Z" fill="#82828e"/><path d="M58.15 130.6 H62.15 L62.95 131.4 V141.79999999999998 H57.35 V131.4 Z" fill="#5e4252"/><rect x="58.15" y="134.6" width="4" height="5.999999999999999" fill="#85605a"/><rect x="58.65" y="134.79999999999998" width="0.6" height="3" fill="#a27870"/><rect x="61.050000000000004" y="134.79999999999998" width="0.6" height="3" fill="#a27870"/><path d="M58.949999999999996 130.9 H61.35 L62.15 131.70000000000002 V134.3 L61.35 135.1 H58.949999999999996 L58.15 134.3 V131.70000000000002 Z" fill="#e4bea4"/><rect x="59.449999999999996" y="132.3" width="1.6" height="1.6" fill="#cfa592"/><path d="M66.14999999999999 124.6 H70.94999999999999 V128.1 H67.75 Z" fill="#82828e"/><path d="M66.14999999999999 114.6 H70.14999999999999 L70.94999999999999 115.39999999999999 V125.8 H65.35 V115.39999999999999 Z" fill="#5e4252"/><rect x="66.14999999999999" y="118.6" width="4" height="5.999999999999999" fill="#85605a"/><rect x="66.64999999999999" y="118.8" width="0.6" height="3" fill="#a27870"/><rect x="69.05" y="118.8" width="0.6" height="3" fill="#a27870"/><path d="M66.94999999999999 114.89999999999999 H69.35 L70.14999999999999 115.69999999999999 V118.3 L69.35 119.1 H66.94999999999999 L66.14999999999999 118.3 V115.69999999999999 Z" fill="#e4bea4"/><rect x="67.44999999999999" y="116.3" width="1.6" height="1.6" fill="#cfa592"/><path d="M66.14999999999999 140.6 H70.94999999999999 V144.1 H67.75 Z" fill="#82828e"/><path d="M66.14999999999999 130.6 H70.14999999999999 L70.94999999999999 131.4 V141.79999999999998 H65.35 V131.4 Z" fill="#5e4252"/><rect x="66.14999999999999" y="134.6" width="4" height="5.999999999999999" fill="#85605a"/><rect x="66.64999999999999" y="134.79999999999998" width="0.6" height="3" fill="#a27870"/><rect x="69.05" y="134.79999999999998" width="0.6" height="3" fill="#a27870"/><path d="M66.94999999999999 130.9 H69.35 L70.14999999999999 131.70000000000002 V134.3 L69.35 135.1 H66.94999999999999 L66.14999999999999 134.3 V131.70000000000002 Z" fill="#e4bea4"/><rect x="67.44999999999999" y="132.3" width="1.6" height="1.6" fill="#cfa592"/><path d="M74.14999999999999 124.6 H78.94999999999999 V128.1 H75.75 Z" fill="#82828e"/><path d="M74.14999999999999 114.6 H78.14999999999999 L78.94999999999999 115.39999999999999 V125.8 H73.35 V115.39999999999999 Z" fill="#5e4252"/><rect x="74.14999999999999" y="118.6" width="4" height="5.999999999999999" fill="#85605a"/><rect x="74.64999999999999" y="118.8" width="0.6" height="3" fill="#a27870"/><rect x="77.05" y="118.8" width="0.6" height="3" fill="#a27870"/><path d="M74.94999999999999 114.89999999999999 H77.35 L78.14999999999999 115.69999999999999 V118.3 L77.35 119.1 H74.94999999999999 L74.14999999999999 118.3 V115.69999999999999 Z" fill="#e4bea4"/><rect x="75.44999999999999" y="116.3" width="1.6" height="1.6" fill="#cfa592"/><path d="M74.14999999999999 140.6 H78.94999999999999 V144.1 H75.75 Z" fill="#82828e"/><path d="M74.14999999999999 130.6 H78.14999999999999 L78.94999999999999 131.4 V141.79999999999998 H73.35 V131.4 Z" fill="#5e4252"/><rect x="74.14999999999999" y="134.6" width="4" height="5.999999999999999" fill="#85605a"/><rect x="74.64999999999999" y="134.79999999999998" width="0.6" height="3" fill="#a27870"/><rect x="77.05" y="134.79999999999998" width="0.6" height="3" fill="#a27870"/><path d="M74.94999999999999 130.9 H77.35 L78.14999999999999 131.70000000000002 V134.3 L77.35 135.1 H74.94999999999999 L74.14999999999999 134.3 V131.70000000000002 Z" fill="#e4bea4"/><rect x="75.44999999999999" y="132.3" width="1.6" height="1.6" fill="#cfa592"/><path d="M82.14999999999999 124.6 H86.94999999999999 V128.1 H83.75 Z" fill="#82828e"/><path d="M82.14999999999999 114.6 H86.14999999999999 L86.94999999999999 115.39999999999999 V125.8 H81.35 V115.39999999999999 Z" fill="#5e4252"/><rect x="82.14999999999999" y="118.6" width="4" height="5.999999999999999" fill="#85605a"/><rect x="82.64999999999999" y="118.8" width="0.6" height="3" fill="#a27870"/><rect x="85.05" y="118.8" width="0.6" height="3" fill="#a27870"/><path d="M82.94999999999999 114.89999999999999 H85.35 L86.14999999999999 115.69999999999999 V118.3 L85.35 119.1 H82.94999999999999 L82.14999999999999 118.3 V115.69999999999999 Z" fill="#e4bea4"/><rect x="83.44999999999999" y="116.3" width="1.6" height="1.6" fill="#cfa592"/><path d="M82.14999999999999 140.6 H86.94999999999999 V144.1 H83.75 Z" fill="#82828e"/><path d="M82.14999999999999 130.6 H86.14999999999999 L86.94999999999999 131.4 V141.79999999999998 H81.35 V131.4 Z" fill="#5e4252"/><rect x="82.14999999999999" y="134.6" width="4" height="5.999999999999999" fill="#85605a"/><rect x="82.64999999999999" y="134.79999999999998" width="0.6" height="3" fill="#a27870"/><rect x="85.05" y="134.79999999999998" width="0.6" height="3" fill="#a27870"/><path d="M82.94999999999999 130.9 H85.35 L86.14999999999999 131.70000000000002 V134.3 L85.35 135.1 H82.94999999999999 L82.14999999999999 134.3 V131.70000000000002 Z" fill="#e4bea4"/><rect x="83.44999999999999" y="132.3" width="1.6" height="1.6" fill="#cfa592"/><path d="M34.15 114.6 H38.15 L38.95 115.39999999999999 V141.79999999999998 H33.35 V115.39999999999999 Z" fill="#5e4252"/><rect x="34.15" y="118.8" width="4" height="21.79999999999999" fill="#85605a"/><path d="M34.949999999999996 115.0 H37.35 L38.15 115.8 V118.4 L37.35 119.2 H34.949999999999996 L34.15 118.4 V115.8 Z" fill="#e4bea4"/><rect x="35.449999999999996" y="116.4" width="1.6" height="1.6" fill="#cfa592"/><rect x="34.15" y="123.2" width="4" height="0.8" fill="#5e4252"/><path d="M34.949999999999996 124.0 H37.35 L38.15 124.8 V127.4 L37.35 128.2 H34.949999999999996 L34.15 127.4 V124.8 Z" fill="#e4bea4"/><rect x="35.449999999999996" y="125.4" width="1.6" height="1.6" fill="#cfa592"/><rect x="34.15" y="131.2" width="4" height="0.8" fill="#5e4252"/><path d="M34.949999999999996 132.0 H37.35 L38.15 132.8 V135.4 L37.35 136.2 H34.949999999999996 L34.15 135.4 V132.8 Z" fill="#e4bea4"/><rect x="35.449999999999996" y="133.4" width="1.6" height="1.6" fill="#cfa592"/><path d="M90.14999999999999 114.6 H94.14999999999999 L94.94999999999999 115.39999999999999 V141.79999999999998 H89.35 V115.39999999999999 Z" fill="#5e4252"/><rect x="90.14999999999999" y="118.8" width="4" height="21.79999999999999" fill="#85605a"/><path d="M90.94999999999999 115.0 H93.35 L94.14999999999999 115.8 V118.4 L93.35 119.2 H90.94999999999999 L90.14999999999999 118.4 V115.8 Z" fill="#e4bea4"/><rect x="91.44999999999999" y="116.4" width="1.6" height="1.6" fill="#cfa592"/><rect x="90.14999999999999" y="123.2" width="4" height="0.8" fill="#5e4252"/><path d="M90.94999999999999 124.0 H93.35 L94.14999999999999 124.8 V127.4 L93.35 128.2 H90.94999999999999 L90.14999999999999 127.4 V124.8 Z" fill="#e4bea4"/><rect x="91.44999999999999" y="125.4" width="1.6" height="1.6" fill="#cfa592"/><rect x="90.14999999999999" y="131.2" width="4" height="0.8" fill="#5e4252"/><path d="M90.94999999999999 132.0 H93.35 L94.14999999999999 132.8 V135.4 L93.35 136.2 H90.94999999999999 L90.14999999999999 135.4 V132.8 Z" fill="#e4bea4"/><rect x="91.44999999999999" y="133.4" width="1.6" height="1.6" fill="#cfa592"/><rect x="305.5" y="119.19999999999999" width="60.5" height="4.6" fill="#5e4252"/><rect x="305.5" y="119.99999999999999" width="60.5" height="3" fill="#85605a"/><rect x="305.5" y="120.19999999999999" width="60.5" height="0.9" fill="#a27870"/><rect x="305.5" y="135.2" width="60.5" height="4.6" fill="#5e4252"/><rect x="305.5" y="136.0" width="60.5" height="3" fill="#85605a"/><rect x="305.5" y="136.2" width="60.5" height="0.9" fill="#a27870"/><path d="M314.15000000000003 124.6 H318.95000000000005 V128.1 H315.75 Z" fill="#82828e"/><path d="M314.15000000000003 114.6 H318.15000000000003 L318.95000000000005 115.39999999999999 V125.8 H313.35 V115.39999999999999 Z" fill="#5e4252"/><rect x="314.15000000000003" y="118.6" width="4" height="5.999999999999999" fill="#85605a"/><rect x="314.65000000000003" y="118.8" width="0.6" height="3" fill="#a27870"/><rect x="317.05" y="118.8" width="0.6" height="3" fill="#a27870"/><path d="M314.95000000000005 114.89999999999999 H317.35 L318.15000000000003 115.69999999999999 V118.3 L317.35 119.1 H314.95000000000005 L314.15000000000003 118.3 V115.69999999999999 Z" fill="#e4bea4"/><rect x="315.45000000000005" y="116.3" width="1.6" height="1.6" fill="#cfa592"/><path d="M314.15000000000003 140.6 H318.95000000000005 V144.1 H315.75 Z" fill="#82828e"/><path d="M314.15000000000003 130.6 H318.15000000000003 L318.95000000000005 131.4 V141.79999999999998 H313.35 V131.4 Z" fill="#5e4252"/><rect x="314.15000000000003" y="134.6" width="4" height="5.999999999999999" fill="#85605a"/><rect x="314.65000000000003" y="134.79999999999998" width="0.6" height="3" fill="#a27870"/><rect x="317.05" y="134.79999999999998" width="0.6" height="3" fill="#a27870"/><path d="M314.95000000000005 130.9 H317.35 L318.15000000000003 131.70000000000002 V134.3 L317.35 135.1 H314.95000000000005 L314.15000000000003 134.3 V131.70000000000002 Z" fill="#e4bea4"/><rect x="315.45000000000005" y="132.3" width="1.6" height="1.6" fill="#cfa592"/><path d="M322.15000000000003 124.6 H326.95000000000005 V128.1 H323.75 Z" fill="#82828e"/><path d="M322.15000000000003 114.6 H326.15000000000003 L326.95000000000005 115.39999999999999 V125.8 H321.35 V115.39999999999999 Z" fill="#5e4252"/><rect x="322.15000000000003" y="118.6" width="4" height="5.999999999999999" fill="#85605a"/><rect x="322.65000000000003" y="118.8" width="0.6" height="3" fill="#a27870"/><rect x="325.05" y="118.8" width="0.6" height="3" fill="#a27870"/><path d="M322.95000000000005 114.89999999999999 H325.35 L326.15000000000003 115.69999999999999 V118.3 L325.35 119.1 H322.95000000000005 L322.15000000000003 118.3 V115.69999999999999 Z" fill="#e4bea4"/><rect x="323.45000000000005" y="116.3" width="1.6" height="1.6" fill="#cfa592"/><path d="M322.15000000000003 140.6 H326.95000000000005 V144.1 H323.75 Z" fill="#82828e"/><path d="M322.15000000000003 130.6 H326.15000000000003 L326.95000000000005 131.4 V141.79999999999998 H321.35 V131.4 Z" fill="#5e4252"/><rect x="322.15000000000003" y="134.6" width="4" height="5.999999999999999" fill="#85605a"/><rect x="322.65000000000003" y="134.79999999999998" width="0.6" height="3" fill="#a27870"/><rect x="325.05" y="134.79999999999998" width="0.6" height="3" fill="#a27870"/><path d="M322.95000000000005 130.9 H325.35 L326.15000000000003 131.70000000000002 V134.3 L325.35 135.1 H322.95000000000005 L322.15000000000003 134.3 V131.70000000000002 Z" fill="#e4bea4"/><rect x="323.45000000000005" y="132.3" width="1.6" height="1.6" fill="#cfa592"/><path d="M330.15000000000003 124.6 H334.95000000000005 V128.1 H331.75 Z" fill="#82828e"/><path d="M330.15000000000003 114.6 H334.15000000000003 L334.95000000000005 115.39999999999999 V125.8 H329.35 V115.39999999999999 Z" fill="#5e4252"/><rect x="330.15000000000003" y="118.6" width="4" height="5.999999999999999" fill="#85605a"/><rect x="330.65000000000003" y="118.8" width="0.6" height="3" fill="#a27870"/><rect x="333.05" y="118.8" width="0.6" height="3" fill="#a27870"/><path d="M330.95000000000005 114.89999999999999 H333.35 L334.15000000000003 115.69999999999999 V118.3 L333.35 119.1 H330.95000000000005 L330.15000000000003 118.3 V115.69999999999999 Z" fill="#e4bea4"/><rect x="331.45000000000005" y="116.3" width="1.6" height="1.6" fill="#cfa592"/><path d="M330.15000000000003 140.6 H334.95000000000005 V144.1 H331.75 Z" fill="#82828e"/><path d="M330.15000000000003 130.6 H334.15000000000003 L334.95000000000005 131.4 V141.79999999999998 H329.35 V131.4 Z" fill="#5e4252"/><rect x="330.15000000000003" y="134.6" width="4" height="5.999999999999999" fill="#85605a"/><rect x="330.65000000000003" y="134.79999999999998" width="0.6" height="3" fill="#a27870"/><rect x="333.05" y="134.79999999999998" width="0.6" height="3" fill="#a27870"/><path d="M330.95000000000005 130.9 H333.35 L334.15000000000003 131.70000000000002 V134.3 L333.35 135.1 H330.95000000000005 L330.15000000000003 134.3 V131.70000000000002 Z" fill="#e4bea4"/><rect x="331.45000000000005" y="132.3" width="1.6" height="1.6" fill="#cfa592"/><path d="M338.15000000000003 124.6 H342.95000000000005 V128.1 H339.75 Z" fill="#82828e"/><path d="M338.15000000000003 114.6 H342.15000000000003 L342.95000000000005 115.39999999999999 V125.8 H337.35 V115.39999999999999 Z" fill="#5e4252"/><rect x="338.15000000000003" y="118.6" width="4" height="5.999999999999999" fill="#85605a"/><rect x="338.65000000000003" y="118.8" width="0.6" height="3" fill="#a27870"/><rect x="341.05" y="118.8" width="0.6" height="3" fill="#a27870"/><path d="M338.95000000000005 114.89999999999999 H341.35 L342.15000000000003 115.69999999999999 V118.3 L341.35 119.1 H338.95000000000005 L338.15000000000003 118.3 V115.69999999999999 Z" fill="#e4bea4"/><rect x="339.45000000000005" y="116.3" width="1.6" height="1.6" fill="#cfa592"/><path d="M338.15000000000003 140.6 H342.95000000000005 V144.1 H339.75 Z" fill="#82828e"/><path d="M338.15000000000003 130.6 H342.15000000000003 L342.95000000000005 131.4 V141.79999999999998 H337.35 V131.4 Z" fill="#5e4252"/><rect x="338.15000000000003" y="134.6" width="4" height="5.999999999999999" fill="#85605a"/><rect x="338.65000000000003" y="134.79999999999998" width="0.6" height="3" fill="#a27870"/><rect x="341.05" y="134.79999999999998" width="0.6" height="3" fill="#a27870"/><path d="M338.95000000000005 130.9 H341.35 L342.15000000000003 131.70000000000002 V134.3 L341.35 135.1 H338.95000000000005 L338.15000000000003 134.3 V131.70000000000002 Z" fill="#e4bea4"/><rect x="339.45000000000005" y="132.3" width="1.6" height="1.6" fill="#cfa592"/><path d="M346.15000000000003 124.6 H350.95000000000005 V128.1 H347.75 Z" fill="#82828e"/><path d="M346.15000000000003 114.6 H350.15000000000003 L350.95000000000005 115.39999999999999 V125.8 H345.35 V115.39999999999999 Z" fill="#5e4252"/><rect x="346.15000000000003" y="118.6" width="4" height="5.999999999999999" fill="#85605a"/><rect x="346.65000000000003" y="118.8" width="0.6" height="3" fill="#a27870"/><rect x="349.05" y="118.8" width="0.6" height="3" fill="#a27870"/><path d="M346.95000000000005 114.89999999999999 H349.35 L350.15000000000003 115.69999999999999 V118.3 L349.35 119.1 H346.95000000000005 L346.15000000000003 118.3 V115.69999999999999 Z" fill="#e4bea4"/><rect x="347.45000000000005" y="116.3" width="1.6" height="1.6" fill="#cfa592"/><path d="M346.15000000000003 140.6 H350.95000000000005 V144.1 H347.75 Z" fill="#82828e"/><path d="M346.15000000000003 130.6 H350.15000000000003 L350.95000000000005 131.4 V141.79999999999998 H345.35 V131.4 Z" fill="#5e4252"/><rect x="346.15000000000003" y="134.6" width="4" height="5.999999999999999" fill="#85605a"/><rect x="346.65000000000003" y="134.79999999999998" width="0.6" height="3" fill="#a27870"/><rect x="349.05" y="134.79999999999998" width="0.6" height="3" fill="#a27870"/><path d="M346.95000000000005 130.9 H349.35 L350.15000000000003 131.70000000000002 V134.3 L349.35 135.1 H346.95000000000005 L346.15000000000003 134.3 V131.70000000000002 Z" fill="#e4bea4"/><rect x="347.45000000000005" y="132.3" width="1.6" height="1.6" fill="#cfa592"/><path d="M354.15000000000003 124.6 H358.95000000000005 V128.1 H355.75 Z" fill="#82828e"/><path d="M354.15000000000003 114.6 H358.15000000000003 L358.95000000000005 115.39999999999999 V125.8 H353.35 V115.39999999999999 Z" fill="#5e4252"/><rect x="354.15000000000003" y="118.6" width="4" height="5.999999999999999" fill="#85605a"/><rect x="354.65000000000003" y="118.8" width="0.6" height="3" fill="#a27870"/><rect x="357.05" y="118.8" width="0.6" height="3" fill="#a27870"/><path d="M354.95000000000005 114.89999999999999 H357.35 L358.15000000000003 115.69999999999999 V118.3 L357.35 119.1 H354.95000000000005 L354.15000000000003 118.3 V115.69999999999999 Z" fill="#e4bea4"/><rect x="355.45000000000005" y="116.3" width="1.6" height="1.6" fill="#cfa592"/><path d="M354.15000000000003 140.6 H358.95000000000005 V144.1 H355.75 Z" fill="#82828e"/><path d="M354.15000000000003 130.6 H358.15000000000003 L358.95000000000005 131.4 V141.79999999999998 H353.35 V131.4 Z" fill="#5e4252"/><rect x="354.15000000000003" y="134.6" width="4" height="5.999999999999999" fill="#85605a"/><rect x="354.65000000000003" y="134.79999999999998" width="0.6" height="3" fill="#a27870"/><rect x="357.05" y="134.79999999999998" width="0.6" height="3" fill="#a27870"/><path d="M354.95000000000005 130.9 H357.35 L358.15000000000003 131.70000000000002 V134.3 L357.35 135.1 H354.95000000000005 L354.15000000000003 134.3 V131.70000000000002 Z" fill="#e4bea4"/><rect x="355.45000000000005" y="132.3" width="1.6" height="1.6" fill="#cfa592"/><path d="M306.15000000000003 114.6 H310.15000000000003 L310.95000000000005 115.39999999999999 V141.79999999999998 H305.35 V115.39999999999999 Z" fill="#5e4252"/><rect x="306.15000000000003" y="118.8" width="4" height="21.79999999999999" fill="#85605a"/><path d="M306.95000000000005 115.0 H309.35 L310.15000000000003 115.8 V118.4 L309.35 119.2 H306.95000000000005 L306.15000000000003 118.4 V115.8 Z" fill="#e4bea4"/><rect x="307.45000000000005" y="116.4" width="1.6" height="1.6" fill="#cfa592"/><rect x="306.15000000000003" y="123.2" width="4" height="0.8" fill="#5e4252"/><path d="M306.95000000000005 124.0 H309.35 L310.15000000000003 124.8 V127.4 L309.35 128.2 H306.95000000000005 L306.15000000000003 127.4 V124.8 Z" fill="#e4bea4"/><rect x="307.45000000000005" y="125.4" width="1.6" height="1.6" fill="#cfa592"/><rect x="306.15000000000003" y="131.2" width="4" height="0.8" fill="#5e4252"/><path d="M306.95000000000005 132.0 H309.35 L310.15000000000003 132.8 V135.4 L309.35 136.2 H306.95000000000005 L306.15000000000003 135.4 V132.8 Z" fill="#e4bea4"/><rect x="307.45000000000005" y="133.4" width="1.6" height="1.6" fill="#cfa592"/><path d="M362.15000000000003 114.6 H366.15000000000003 L366.95000000000005 115.39999999999999 V141.79999999999998 H361.35 V115.39999999999999 Z" fill="#5e4252"/><rect x="362.15000000000003" y="118.8" width="4" height="21.79999999999999" fill="#85605a"/><path d="M362.95000000000005 115.0 H365.35 L366.15000000000003 115.8 V118.4 L365.35 119.2 H362.95000000000005 L362.15000000000003 118.4 V115.8 Z" fill="#e4bea4"/><rect x="363.45000000000005" y="116.4" width="1.6" height="1.6" fill="#cfa592"/><rect x="362.15000000000003" y="123.2" width="4" height="0.8" fill="#5e4252"/><path d="M362.95000000000005 124.0 H365.35 L366.15000000000003 124.8 V127.4 L365.35 128.2 H362.95000000000005 L362.15000000000003 127.4 V124.8 Z" fill="#e4bea4"/><rect x="363.45000000000005" y="125.4" width="1.6" height="1.6" fill="#cfa592"/><rect x="362.15000000000003" y="131.2" width="4" height="0.8" fill="#5e4252"/><path d="M362.95000000000005 132.0 H365.35 L366.15000000000003 132.8 V135.4 L365.35 136.2 H362.95000000000005 L362.15000000000003 135.4 V132.8 Z" fill="#e4bea4"/><rect x="363.45000000000005" y="133.4" width="1.6" height="1.6" fill="#cfa592"/><rect x="65.5" y="151.2" width="28.5" height="4.6" fill="#5e4252"/><rect x="65.5" y="152.0" width="28.5" height="3" fill="#85605a"/><rect x="65.5" y="152.2" width="28.5" height="0.9" fill="#a27870"/><rect x="65.5" y="199.2" width="28.5" height="4.6" fill="#5e4252"/><rect x="65.5" y="200.0" width="28.5" height="3" fill="#85605a"/><rect x="65.5" y="200.2" width="28.5" height="0.9" fill="#a27870"/><path d="M74.14999999999999 156.6 H78.94999999999999 V160.1 H75.75 Z" fill="#82828e"/><path d="M74.14999999999999 146.6 H78.14999999999999 L78.94999999999999 147.4 V157.79999999999998 H73.35 V147.4 Z" fill="#5e4252"/><rect x="74.14999999999999" y="150.6" width="4" height="5.999999999999999" fill="#85605a"/><rect x="74.64999999999999" y="150.79999999999998" width="0.6" height="3" fill="#a27870"/><rect x="77.05" y="150.79999999999998" width="0.6" height="3" fill="#a27870"/><path d="M74.94999999999999 146.9 H77.35 L78.14999999999999 147.70000000000002 V150.3 L77.35 151.1 H74.94999999999999 L74.14999999999999 150.3 V147.70000000000002 Z" fill="#e4bea4"/><rect x="75.44999999999999" y="148.3" width="1.6" height="1.6" fill="#cfa592"/><path d="M74.14999999999999 204.6 H78.94999999999999 V208.1 H75.75 Z" fill="#82828e"/><path d="M74.14999999999999 194.6 H78.14999999999999 L78.94999999999999 195.4 V205.79999999999998 H73.35 V195.4 Z" fill="#5e4252"/><rect x="74.14999999999999" y="198.6" width="4" height="5.999999999999999" fill="#85605a"/><rect x="74.64999999999999" y="198.79999999999998" width="0.6" height="3" fill="#a27870"/><rect x="77.05" y="198.79999999999998" width="0.6" height="3" fill="#a27870"/><path d="M74.94999999999999 194.9 H77.35 L78.14999999999999 195.70000000000002 V198.3 L77.35 199.1 H74.94999999999999 L74.14999999999999 198.3 V195.70000000000002 Z" fill="#e4bea4"/><rect x="75.44999999999999" y="196.3" width="1.6" height="1.6" fill="#cfa592"/><path d="M82.14999999999999 156.6 H86.94999999999999 V160.1 H83.75 Z" fill="#82828e"/><path d="M82.14999999999999 146.6 H86.14999999999999 L86.94999999999999 147.4 V157.79999999999998 H81.35 V147.4 Z" fill="#5e4252"/><rect x="82.14999999999999" y="150.6" width="4" height="5.999999999999999" fill="#85605a"/><rect x="82.64999999999999" y="150.79999999999998" width="0.6" height="3" fill="#a27870"/><rect x="85.05" y="150.79999999999998" width="0.6" height="3" fill="#a27870"/><path d="M82.94999999999999 146.9 H85.35 L86.14999999999999 147.70000000000002 V150.3 L85.35 151.1 H82.94999999999999 L82.14999999999999 150.3 V147.70000000000002 Z" fill="#e4bea4"/><rect x="83.44999999999999" y="148.3" width="1.6" height="1.6" fill="#cfa592"/><path d="M82.14999999999999 204.6 H86.94999999999999 V208.1 H83.75 Z" fill="#82828e"/><path d="M82.14999999999999 194.6 H86.14999999999999 L86.94999999999999 195.4 V205.79999999999998 H81.35 V195.4 Z" fill="#5e4252"/><rect x="82.14999999999999" y="198.6" width="4" height="5.999999999999999" fill="#85605a"/><rect x="82.64999999999999" y="198.79999999999998" width="0.6" height="3" fill="#a27870"/><rect x="85.05" y="198.79999999999998" width="0.6" height="3" fill="#a27870"/><path d="M82.94999999999999 194.9 H85.35 L86.14999999999999 195.70000000000002 V198.3 L85.35 199.1 H82.94999999999999 L82.14999999999999 198.3 V195.70000000000002 Z" fill="#e4bea4"/><rect x="83.44999999999999" y="196.3" width="1.6" height="1.6" fill="#cfa592"/><path d="M66.14999999999999 146.6 H70.14999999999999 L70.94999999999999 147.4 V205.79999999999998 H65.35 V147.4 Z" fill="#5e4252"/><rect x="66.14999999999999" y="150.79999999999998" width="4" height="53.79999999999999" fill="#85605a"/><path d="M66.94999999999999 147.0 H69.35 L70.14999999999999 147.8 V150.4 L69.35 151.2 H66.94999999999999 L66.14999999999999 150.4 V147.8 Z" fill="#e4bea4"/><rect x="67.44999999999999" y="148.4" width="1.6" height="1.6" fill="#cfa592"/><rect x="66.14999999999999" y="155.2" width="4" height="0.8" fill="#5e4252"/><path d="M66.94999999999999 156.0 H69.35 L70.14999999999999 156.8 V159.4 L69.35 160.2 H66.94999999999999 L66.14999999999999 159.4 V156.8 Z" fill="#e4bea4"/><rect x="67.44999999999999" y="157.4" width="1.6" height="1.6" fill="#cfa592"/><rect x="66.14999999999999" y="163.2" width="4" height="0.8" fill="#5e4252"/><path d="M66.94999999999999 164.0 H69.35 L70.14999999999999 164.8 V167.4 L69.35 168.2 H66.94999999999999 L66.14999999999999 167.4 V164.8 Z" fill="#e4bea4"/><rect x="67.44999999999999" y="165.4" width="1.6" height="1.6" fill="#cfa592"/><rect x="66.14999999999999" y="171.2" width="4" height="0.8" fill="#5e4252"/><path d="M66.94999999999999 172.0 H69.35 L70.14999999999999 172.8 V175.4 L69.35 176.2 H66.94999999999999 L66.14999999999999 175.4 V172.8 Z" fill="#e4bea4"/><rect x="67.44999999999999" y="173.4" width="1.6" height="1.6" fill="#cfa592"/><rect x="66.14999999999999" y="179.2" width="4" height="0.8" fill="#5e4252"/><path d="M66.94999999999999 180.0 H69.35 L70.14999999999999 180.8 V183.4 L69.35 184.2 H66.94999999999999 L66.14999999999999 183.4 V180.8 Z" fill="#e4bea4"/><rect x="67.44999999999999" y="181.4" width="1.6" height="1.6" fill="#cfa592"/><rect x="66.14999999999999" y="187.2" width="4" height="0.8" fill="#5e4252"/><path d="M66.94999999999999 188.0 H69.35 L70.14999999999999 188.8 V191.4 L69.35 192.2 H66.94999999999999 L66.14999999999999 191.4 V188.8 Z" fill="#e4bea4"/><rect x="67.44999999999999" y="189.4" width="1.6" height="1.6" fill="#cfa592"/><rect x="66.14999999999999" y="195.2" width="4" height="0.8" fill="#5e4252"/><path d="M66.94999999999999 196.0 H69.35 L70.14999999999999 196.8 V199.4 L69.35 200.2 H66.94999999999999 L66.14999999999999 199.4 V196.8 Z" fill="#e4bea4"/><rect x="67.44999999999999" y="197.4" width="1.6" height="1.6" fill="#cfa592"/><path d="M90.14999999999999 146.6 H94.14999999999999 L94.94999999999999 147.4 V205.79999999999998 H89.35 V147.4 Z" fill="#5e4252"/><rect x="90.14999999999999" y="150.79999999999998" width="4" height="53.79999999999999" fill="#85605a"/><path d="M90.94999999999999 147.0 H93.35 L94.14999999999999 147.8 V150.4 L93.35 151.2 H90.94999999999999 L90.14999999999999 150.4 V147.8 Z" fill="#e4bea4"/><rect x="91.44999999999999" y="148.4" width="1.6" height="1.6" fill="#cfa592"/><rect x="90.14999999999999" y="155.2" width="4" height="0.8" fill="#5e4252"/><path d="M90.94999999999999 156.0 H93.35 L94.14999999999999 156.8 V159.4 L93.35 160.2 H90.94999999999999 L90.14999999999999 159.4 V156.8 Z" fill="#e4bea4"/><rect x="91.44999999999999" y="157.4" width="1.6" height="1.6" fill="#cfa592"/><rect x="90.14999999999999" y="163.2" width="4" height="0.8" fill="#5e4252"/><path d="M90.94999999999999 164.0 H93.35 L94.14999999999999 164.8 V167.4 L93.35 168.2 H90.94999999999999 L90.14999999999999 167.4 V164.8 Z" fill="#e4bea4"/><rect x="91.44999999999999" y="165.4" width="1.6" height="1.6" fill="#cfa592"/><rect x="90.14999999999999" y="171.2" width="4" height="0.8" fill="#5e4252"/><path d="M90.94999999999999 172.0 H93.35 L94.14999999999999 172.8 V175.4 L93.35 176.2 H90.94999999999999 L90.14999999999999 175.4 V172.8 Z" fill="#e4bea4"/><rect x="91.44999999999999" y="173.4" width="1.6" height="1.6" fill="#cfa592"/><rect x="90.14999999999999" y="179.2" width="4" height="0.8" fill="#5e4252"/><path d="M90.94999999999999 180.0 H93.35 L94.14999999999999 180.8 V183.4 L93.35 184.2 H90.94999999999999 L90.14999999999999 183.4 V180.8 Z" fill="#e4bea4"/><rect x="91.44999999999999" y="181.4" width="1.6" height="1.6" fill="#cfa592"/><rect x="90.14999999999999" y="187.2" width="4" height="0.8" fill="#5e4252"/><path d="M90.94999999999999 188.0 H93.35 L94.14999999999999 188.8 V191.4 L93.35 192.2 H90.94999999999999 L90.14999999999999 191.4 V188.8 Z" fill="#e4bea4"/><rect x="91.44999999999999" y="189.4" width="1.6" height="1.6" fill="#cfa592"/><rect x="90.14999999999999" y="195.2" width="4" height="0.8" fill="#5e4252"/><path d="M90.94999999999999 196.0 H93.35 L94.14999999999999 196.8 V199.4 L93.35 200.2 H90.94999999999999 L90.14999999999999 199.4 V196.8 Z" fill="#e4bea4"/><rect x="91.44999999999999" y="197.4" width="1.6" height="1.6" fill="#cfa592"/><rect x="305.5" y="151.2" width="28.5" height="4.6" fill="#5e4252"/><rect x="305.5" y="152.0" width="28.5" height="3" fill="#85605a"/><rect x="305.5" y="152.2" width="28.5" height="0.9" fill="#a27870"/><rect x="305.5" y="199.2" width="28.5" height="4.6" fill="#5e4252"/><rect x="305.5" y="200.0" width="28.5" height="3" fill="#85605a"/><rect x="305.5" y="200.2" width="28.5" height="0.9" fill="#a27870"/><path d="M314.15000000000003 156.6 H318.95000000000005 V160.1 H315.75 Z" fill="#82828e"/><path d="M314.15000000000003 146.6 H318.15000000000003 L318.95000000000005 147.4 V157.79999999999998 H313.35 V147.4 Z" fill="#5e4252"/><rect x="314.15000000000003" y="150.6" width="4" height="5.999999999999999" fill="#85605a"/><rect x="314.65000000000003" y="150.79999999999998" width="0.6" height="3" fill="#a27870"/><rect x="317.05" y="150.79999999999998" width="0.6" height="3" fill="#a27870"/><path d="M314.95000000000005 146.9 H317.35 L318.15000000000003 147.70000000000002 V150.3 L317.35 151.1 H314.95000000000005 L314.15000000000003 150.3 V147.70000000000002 Z" fill="#e4bea4"/><rect x="315.45000000000005" y="148.3" width="1.6" height="1.6" fill="#cfa592"/><path d="M314.15000000000003 204.6 H318.95000000000005 V208.1 H315.75 Z" fill="#82828e"/><path d="M314.15000000000003 194.6 H318.15000000000003 L318.95000000000005 195.4 V205.79999999999998 H313.35 V195.4 Z" fill="#5e4252"/><rect x="314.15000000000003" y="198.6" width="4" height="5.999999999999999" fill="#85605a"/><rect x="314.65000000000003" y="198.79999999999998" width="0.6" height="3" fill="#a27870"/><rect x="317.05" y="198.79999999999998" width="0.6" height="3" fill="#a27870"/><path d="M314.95000000000005 194.9 H317.35 L318.15000000000003 195.70000000000002 V198.3 L317.35 199.1 H314.95000000000005 L314.15000000000003 198.3 V195.70000000000002 Z" fill="#e4bea4"/><rect x="315.45000000000005" y="196.3" width="1.6" height="1.6" fill="#cfa592"/><path d="M322.15000000000003 156.6 H326.95000000000005 V160.1 H323.75 Z" fill="#82828e"/><path d="M322.15000000000003 146.6 H326.15000000000003 L326.95000000000005 147.4 V157.79999999999998 H321.35 V147.4 Z" fill="#5e4252"/><rect x="322.15000000000003" y="150.6" width="4" height="5.999999999999999" fill="#85605a"/><rect x="322.65000000000003" y="150.79999999999998" width="0.6" height="3" fill="#a27870"/><rect x="325.05" y="150.79999999999998" width="0.6" height="3" fill="#a27870"/><path d="M322.95000000000005 146.9 H325.35 L326.15000000000003 147.70000000000002 V150.3 L325.35 151.1 H322.95000000000005 L322.15000000000003 150.3 V147.70000000000002 Z" fill="#e4bea4"/><rect x="323.45000000000005" y="148.3" width="1.6" height="1.6" fill="#cfa592"/><path d="M322.15000000000003 204.6 H326.95000000000005 V208.1 H323.75 Z" fill="#82828e"/><path d="M322.15000000000003 194.6 H326.15000000000003 L326.95000000000005 195.4 V205.79999999999998 H321.35 V195.4 Z" fill="#5e4252"/><rect x="322.15000000000003" y="198.6" width="4" height="5.999999999999999" fill="#85605a"/><rect x="322.65000000000003" y="198.79999999999998" width="0.6" height="3" fill="#a27870"/><rect x="325.05" y="198.79999999999998" width="0.6" height="3" fill="#a27870"/><path d="M322.95000000000005 194.9 H325.35 L326.15000000000003 195.70000000000002 V198.3 L325.35 199.1 H322.95000000000005 L322.15000000000003 198.3 V195.70000000000002 Z" fill="#e4bea4"/><rect x="323.45000000000005" y="196.3" width="1.6" height="1.6" fill="#cfa592"/><path d="M306.15000000000003 146.6 H310.15000000000003 L310.95000000000005 147.4 V205.79999999999998 H305.35 V147.4 Z" fill="#5e4252"/><rect x="306.15000000000003" y="150.79999999999998" width="4" height="53.79999999999999" fill="#85605a"/><path d="M306.95000000000005 147.0 H309.35 L310.15000000000003 147.8 V150.4 L309.35 151.2 H306.95000000000005 L306.15000000000003 150.4 V147.8 Z" fill="#e4bea4"/><rect x="307.45000000000005" y="148.4" width="1.6" height="1.6" fill="#cfa592"/><rect x="306.15000000000003" y="155.2" width="4" height="0.8" fill="#5e4252"/><path d="M306.95000000000005 156.0 H309.35 L310.15000000000003 156.8 V159.4 L309.35 160.2 H306.95000000000005 L306.15000000000003 159.4 V156.8 Z" fill="#e4bea4"/><rect x="307.45000000000005" y="157.4" width="1.6" height="1.6" fill="#cfa592"/><rect x="306.15000000000003" y="163.2" width="4" height="0.8" fill="#5e4252"/><path d="M306.95000000000005 164.0 H309.35 L310.15000000000003 164.8 V167.4 L309.35 168.2 H306.95000000000005 L306.15000000000003 167.4 V164.8 Z" fill="#e4bea4"/><rect x="307.45000000000005" y="165.4" width="1.6" height="1.6" fill="#cfa592"/><rect x="306.15000000000003" y="171.2" width="4" height="0.8" fill="#5e4252"/><path d="M306.95000000000005 172.0 H309.35 L310.15000000000003 172.8 V175.4 L309.35 176.2 H306.95000000000005 L306.15000000000003 175.4 V172.8 Z" fill="#e4bea4"/><rect x="307.45000000000005" y="173.4" width="1.6" height="1.6" fill="#cfa592"/><rect x="306.15000000000003" y="179.2" width="4" height="0.8" fill="#5e4252"/><path d="M306.95000000000005 180.0 H309.35 L310.15000000000003 180.8 V183.4 L309.35 184.2 H306.95000000000005 L306.15000000000003 183.4 V180.8 Z" fill="#e4bea4"/><rect x="307.45000000000005" y="181.4" width="1.6" height="1.6" fill="#cfa592"/><rect x="306.15000000000003" y="187.2" width="4" height="0.8" fill="#5e4252"/><path d="M306.95000000000005 188.0 H309.35 L310.15000000000003 188.8 V191.4 L309.35 192.2 H306.95000000000005 L306.15000000000003 191.4 V188.8 Z" fill="#e4bea4"/><rect x="307.45000000000005" y="189.4" width="1.6" height="1.6" fill="#cfa592"/><rect x="306.15000000000003" y="195.2" width="4" height="0.8" fill="#5e4252"/><path d="M306.95000000000005 196.0 H309.35 L310.15000000000003 196.8 V199.4 L309.35 200.2 H306.95000000000005 L306.15000000000003 199.4 V196.8 Z" fill="#e4bea4"/><rect x="307.45000000000005" y="197.4" width="1.6" height="1.6" fill="#cfa592"/><path d="M330.15000000000003 146.6 H334.15000000000003 L334.95000000000005 147.4 V205.79999999999998 H329.35 V147.4 Z" fill="#5e4252"/><rect x="330.15000000000003" y="150.79999999999998" width="4" height="53.79999999999999" fill="#85605a"/><path d="M330.95000000000005 147.0 H333.35 L334.15000000000003 147.8 V150.4 L333.35 151.2 H330.95000000000005 L330.15000000000003 150.4 V147.8 Z" fill="#e4bea4"/><rect x="331.45000000000005" y="148.4" width="1.6" height="1.6" fill="#cfa592"/><rect x="330.15000000000003" y="155.2" width="4" height="0.8" fill="#5e4252"/><path d="M330.95000000000005 156.0 H333.35 L334.15000000000003 156.8 V159.4 L333.35 160.2 H330.95000000000005 L330.15000000000003 159.4 V156.8 Z" fill="#e4bea4"/><rect x="331.45000000000005" y="157.4" width="1.6" height="1.6" fill="#cfa592"/><rect x="330.15000000000003" y="163.2" width="4" height="0.8" fill="#5e4252"/><path d="M330.95000000000005 164.0 H333.35 L334.15000000000003 164.8 V167.4 L333.35 168.2 H330.95000000000005 L330.15000000000003 167.4 V164.8 Z" fill="#e4bea4"/><rect x="331.45000000000005" y="165.4" width="1.6" height="1.6" fill="#cfa592"/><rect x="330.15000000000003" y="171.2" width="4" height="0.8" fill="#5e4252"/><path d="M330.95000000000005 172.0 H333.35 L334.15000000000003 172.8 V175.4 L333.35 176.2 H330.95000000000005 L330.15000000000003 175.4 V172.8 Z" fill="#e4bea4"/><rect x="331.45000000000005" y="173.4" width="1.6" height="1.6" fill="#cfa592"/><rect x="330.15000000000003" y="179.2" width="4" height="0.8" fill="#5e4252"/><path d="M330.95000000000005 180.0 H333.35 L334.15000000000003 180.8 V183.4 L333.35 184.2 H330.95000000000005 L330.15000000000003 183.4 V180.8 Z" fill="#e4bea4"/><rect x="331.45000000000005" y="181.4" width="1.6" height="1.6" fill="#cfa592"/><rect x="330.15000000000003" y="187.2" width="4" height="0.8" fill="#5e4252"/><path d="M330.95000000000005 188.0 H333.35 L334.15000000000003 188.8 V191.4 L333.35 192.2 H330.95000000000005 L330.15000000000003 191.4 V188.8 Z" fill="#e4bea4"/><rect x="331.45000000000005" y="189.4" width="1.6" height="1.6" fill="#cfa592"/><rect x="330.15000000000003" y="195.2" width="4" height="0.8" fill="#5e4252"/><path d="M330.95000000000005 196.0 H333.35 L334.15000000000003 196.8 V199.4 L333.35 200.2 H330.95000000000005 L330.15000000000003 199.4 V196.8 Z" fill="#e4bea4"/><rect x="331.45000000000005" y="197.4" width="1.6" height="1.6" fill="#cfa592"/><rect x="0" y="183.2" width="30" height="4.6" fill="#5e4252"/><rect x="0" y="184.0" width="30" height="3" fill="#85605a"/><rect x="0" y="184.2" width="30" height="0.9" fill="#a27870"/><rect x="0" y="279.20000000000005" width="30" height="4.6" fill="#5e4252"/><rect x="0" y="280.00000000000006" width="30" height="3" fill="#85605a"/><rect x="0" y="280.20000000000005" width="30" height="0.9" fill="#a27870"/><path d="M2.1500000000000004 188.6 H6.949999999999999 V192.1 H3.75 Z" fill="#82828e"/><path d="M2.1500000000000004 178.6 H6.15 L6.949999999999999 179.4 V189.79999999999998 H1.35 V179.4 Z" fill="#5e4252"/><rect x="2.1500000000000004" y="182.6" width="4" height="5.999999999999999" fill="#85605a"/><rect x="2.6500000000000004" y="182.79999999999998" width="0.6" height="3" fill="#a27870"/><rect x="5.050000000000001" y="182.79999999999998" width="0.6" height="3" fill="#a27870"/><path d="M2.95 178.9 H5.3500000000000005 L6.15 179.70000000000002 V182.3 L5.3500000000000005 183.1 H2.95 L2.1500000000000004 182.3 V179.70000000000002 Z" fill="#e4bea4"/><rect x="3.45" y="180.3" width="1.6" height="1.6" fill="#cfa592"/><path d="M2.1500000000000004 284.6 H6.949999999999999 V288.1 H3.75 Z" fill="#82828e"/><path d="M2.1500000000000004 274.6 H6.15 L6.949999999999999 275.40000000000003 V285.8 H1.35 V275.40000000000003 Z" fill="#5e4252"/><rect x="2.1500000000000004" y="278.6" width="4" height="5.999999999999999" fill="#85605a"/><rect x="2.6500000000000004" y="278.8" width="0.6" height="3" fill="#a27870"/><rect x="5.050000000000001" y="278.8" width="0.6" height="3" fill="#a27870"/><path d="M2.95 274.90000000000003 H5.3500000000000005 L6.15 275.70000000000005 V278.3 L5.3500000000000005 279.1 H2.95 L2.1500000000000004 278.3 V275.70000000000005 Z" fill="#e4bea4"/><rect x="3.45" y="276.3" width="1.6" height="1.6" fill="#cfa592"/><path d="M10.15 188.6 H14.95 V192.1 H11.75 Z" fill="#82828e"/><path d="M10.15 178.6 H14.149999999999999 L14.95 179.4 V189.79999999999998 H9.35 V179.4 Z" fill="#5e4252"/><rect x="10.15" y="182.6" width="4" height="5.999999999999999" fill="#85605a"/><rect x="10.65" y="182.79999999999998" width="0.6" height="3" fill="#a27870"/><rect x="13.05" y="182.79999999999998" width="0.6" height="3" fill="#a27870"/><path d="M10.950000000000001 178.9 H13.350000000000001 L14.15 179.70000000000002 V182.3 L13.350000000000001 183.1 H10.950000000000001 L10.15 182.3 V179.70000000000002 Z" fill="#e4bea4"/><rect x="11.450000000000001" y="180.3" width="1.6" height="1.6" fill="#cfa592"/><path d="M10.15 284.6 H14.95 V288.1 H11.75 Z" fill="#82828e"/><path d="M10.15 274.6 H14.149999999999999 L14.95 275.40000000000003 V285.8 H9.35 V275.40000000000003 Z" fill="#5e4252"/><rect x="10.15" y="278.6" width="4" height="5.999999999999999" fill="#85605a"/><rect x="10.65" y="278.8" width="0.6" height="3" fill="#a27870"/><rect x="13.05" y="278.8" width="0.6" height="3" fill="#a27870"/><path d="M10.950000000000001 274.90000000000003 H13.350000000000001 L14.15 275.70000000000005 V278.3 L13.350000000000001 279.1 H10.950000000000001 L10.15 278.3 V275.70000000000005 Z" fill="#e4bea4"/><rect x="11.450000000000001" y="276.3" width="1.6" height="1.6" fill="#cfa592"/><path d="M18.150000000000002 188.6 H22.950000000000003 V192.1 H19.75 Z" fill="#82828e"/><path d="M18.150000000000002 178.6 H22.150000000000002 L22.950000000000003 179.4 V189.79999999999998 H17.35 V179.4 Z" fill="#5e4252"/><rect x="18.150000000000002" y="182.6" width="4" height="5.999999999999999" fill="#85605a"/><rect x="18.650000000000002" y="182.79999999999998" width="0.6" height="3" fill="#a27870"/><rect x="21.05" y="182.79999999999998" width="0.6" height="3" fill="#a27870"/><path d="M18.950000000000003 178.9 H21.35 L22.150000000000002 179.70000000000002 V182.3 L21.35 183.1 H18.950000000000003 L18.150000000000002 182.3 V179.70000000000002 Z" fill="#e4bea4"/><rect x="19.450000000000003" y="180.3" width="1.6" height="1.6" fill="#cfa592"/><path d="M18.150000000000002 284.6 H22.950000000000003 V288.1 H19.75 Z" fill="#82828e"/><path d="M18.150000000000002 274.6 H22.150000000000002 L22.950000000000003 275.40000000000003 V285.8 H17.35 V275.40000000000003 Z" fill="#5e4252"/><rect x="18.150000000000002" y="278.6" width="4" height="5.999999999999999" fill="#85605a"/><rect x="18.650000000000002" y="278.8" width="0.6" height="3" fill="#a27870"/><rect x="21.05" y="278.8" width="0.6" height="3" fill="#a27870"/><path d="M18.950000000000003 274.90000000000003 H21.35 L22.150000000000002 275.70000000000005 V278.3 L21.35 279.1 H18.950000000000003 L18.150000000000002 278.3 V275.70000000000005 Z" fill="#e4bea4"/><rect x="19.450000000000003" y="276.3" width="1.6" height="1.6" fill="#cfa592"/><path d="M26.150000000000002 178.6 H30.150000000000002 L30.950000000000003 179.4 V285.8 H25.35 V179.4 Z" fill="#5e4252"/><rect x="26.150000000000002" y="182.79999999999998" width="4" height="101.80000000000001" fill="#85605a"/><path d="M26.950000000000003 179.0 H29.35 L30.150000000000002 179.8 V182.4 L29.35 183.2 H26.950000000000003 L26.150000000000002 182.4 V179.8 Z" fill="#e4bea4"/><rect x="27.450000000000003" y="180.4" width="1.6" height="1.6" fill="#cfa592"/><rect x="26.150000000000002" y="187.2" width="4" height="0.8" fill="#5e4252"/><path d="M26.950000000000003 188.0 H29.35 L30.150000000000002 188.8 V191.4 L29.35 192.2 H26.950000000000003 L26.150000000000002 191.4 V188.8 Z" fill="#e4bea4"/><rect x="27.450000000000003" y="189.4" width="1.6" height="1.6" fill="#cfa592"/><rect x="26.150000000000002" y="195.2" width="4" height="0.8" fill="#5e4252"/><path d="M26.950000000000003 196.0 H29.35 L30.150000000000002 196.8 V199.4 L29.35 200.2 H26.950000000000003 L26.150000000000002 199.4 V196.8 Z" fill="#e4bea4"/><rect x="27.450000000000003" y="197.4" width="1.6" height="1.6" fill="#cfa592"/><rect x="26.150000000000002" y="203.2" width="4" height="0.8" fill="#5e4252"/><path d="M26.950000000000003 204.0 H29.35 L30.150000000000002 204.8 V207.4 L29.35 208.2 H26.950000000000003 L26.150000000000002 207.4 V204.8 Z" fill="#e4bea4"/><rect x="27.450000000000003" y="205.4" width="1.6" height="1.6" fill="#cfa592"/><rect x="26.150000000000002" y="211.2" width="4" height="0.8" fill="#5e4252"/><path d="M26.950000000000003 212.0 H29.35 L30.150000000000002 212.8 V215.4 L29.35 216.2 H26.950000000000003 L26.150000000000002 215.4 V212.8 Z" fill="#e4bea4"/><rect x="27.450000000000003" y="213.4" width="1.6" height="1.6" fill="#cfa592"/><rect x="26.150000000000002" y="219.2" width="4" height="0.8" fill="#5e4252"/><path d="M26.950000000000003 220.0 H29.35 L30.150000000000002 220.8 V223.4 L29.35 224.2 H26.950000000000003 L26.150000000000002 223.4 V220.8 Z" fill="#e4bea4"/><rect x="27.450000000000003" y="221.4" width="1.6" height="1.6" fill="#cfa592"/><rect x="26.150000000000002" y="227.2" width="4" height="0.8" fill="#5e4252"/><path d="M26.950000000000003 228.0 H29.35 L30.150000000000002 228.8 V231.4 L29.35 232.2 H26.950000000000003 L26.150000000000002 231.4 V228.8 Z" fill="#e4bea4"/><rect x="27.450000000000003" y="229.4" width="1.6" height="1.6" fill="#cfa592"/><rect x="26.150000000000002" y="235.2" width="4" height="0.8" fill="#5e4252"/><path d="M26.950000000000003 236.0 H29.35 L30.150000000000002 236.8 V239.4 L29.35 240.2 H26.950000000000003 L26.150000000000002 239.4 V236.8 Z" fill="#e4bea4"/><rect x="27.450000000000003" y="237.4" width="1.6" height="1.6" fill="#cfa592"/><rect x="26.150000000000002" y="243.2" width="4" height="0.8" fill="#5e4252"/><path d="M26.950000000000003 244.0 H29.35 L30.150000000000002 244.8 V247.4 L29.35 248.2 H26.950000000000003 L26.150000000000002 247.4 V244.8 Z" fill="#e4bea4"/><rect x="27.450000000000003" y="245.4" width="1.6" height="1.6" fill="#cfa592"/><rect x="26.150000000000002" y="251.2" width="4" height="0.8" fill="#5e4252"/><path d="M26.950000000000003 252.0 H29.35 L30.150000000000002 252.8 V255.4 L29.35 256.2 H26.950000000000003 L26.150000000000002 255.4 V252.8 Z" fill="#e4bea4"/><rect x="27.450000000000003" y="253.4" width="1.6" height="1.6" fill="#cfa592"/><rect x="26.150000000000002" y="259.2" width="4" height="0.8" fill="#5e4252"/><path d="M26.950000000000003 260.0 H29.35 L30.150000000000002 260.8 V263.4 L29.35 264.2 H26.950000000000003 L26.150000000000002 263.4 V260.8 Z" fill="#e4bea4"/><rect x="27.450000000000003" y="261.4" width="1.6" height="1.6" fill="#cfa592"/><rect x="26.150000000000002" y="267.2" width="4" height="0.8" fill="#5e4252"/><path d="M26.950000000000003 268.0 H29.35 L30.150000000000002 268.8 V271.4 L29.35 272.2 H26.950000000000003 L26.150000000000002 271.4 V268.8 Z" fill="#e4bea4"/><rect x="27.450000000000003" y="269.4" width="1.6" height="1.6" fill="#cfa592"/><rect x="26.150000000000002" y="275.2" width="4" height="0.8" fill="#5e4252"/><path d="M26.950000000000003 276.0 H29.35 L30.150000000000002 276.8 V279.4 L29.35 280.2 H26.950000000000003 L26.150000000000002 279.4 V276.8 Z" fill="#e4bea4"/><rect x="27.450000000000003" y="277.4" width="1.6" height="1.6" fill="#cfa592"/><rect x="369.5" y="183.2" width="30.5" height="4.6" fill="#5e4252"/><rect x="369.5" y="184.0" width="30.5" height="3" fill="#85605a"/><rect x="369.5" y="184.2" width="30.5" height="0.9" fill="#a27870"/><rect x="369.5" y="279.20000000000005" width="30.5" height="4.6" fill="#5e4252"/><rect x="369.5" y="280.00000000000006" width="30.5" height="3" fill="#85605a"/><rect x="369.5" y="280.20000000000005" width="30.5" height="0.9" fill="#a27870"/><path d="M378.15000000000003 188.6 H382.95000000000005 V192.1 H379.75 Z" fill="#82828e"/><path d="M378.15000000000003 178.6 H382.15000000000003 L382.95000000000005 179.4 V189.79999999999998 H377.35 V179.4 Z" fill="#5e4252"/><rect x="378.15000000000003" y="182.6" width="4" height="5.999999999999999" fill="#85605a"/><rect x="378.65000000000003" y="182.79999999999998" width="0.6" height="3" fill="#a27870"/><rect x="381.05" y="182.79999999999998" width="0.6" height="3" fill="#a27870"/><path d="M378.95000000000005 178.9 H381.35 L382.15000000000003 179.70000000000002 V182.3 L381.35 183.1 H378.95000000000005 L378.15000000000003 182.3 V179.70000000000002 Z" fill="#e4bea4"/><rect x="379.45000000000005" y="180.3" width="1.6" height="1.6" fill="#cfa592"/><path d="M378.15000000000003 284.6 H382.95000000000005 V288.1 H379.75 Z" fill="#82828e"/><path d="M378.15000000000003 274.6 H382.15000000000003 L382.95000000000005 275.40000000000003 V285.8 H377.35 V275.40000000000003 Z" fill="#5e4252"/><rect x="378.15000000000003" y="278.6" width="4" height="5.999999999999999" fill="#85605a"/><rect x="378.65000000000003" y="278.8" width="0.6" height="3" fill="#a27870"/><rect x="381.05" y="278.8" width="0.6" height="3" fill="#a27870"/><path d="M378.95000000000005 274.90000000000003 H381.35 L382.15000000000003 275.70000000000005 V278.3 L381.35 279.1 H378.95000000000005 L378.15000000000003 278.3 V275.70000000000005 Z" fill="#e4bea4"/><rect x="379.45000000000005" y="276.3" width="1.6" height="1.6" fill="#cfa592"/><path d="M386.15000000000003 188.6 H390.95000000000005 V192.1 H387.75 Z" fill="#82828e"/><path d="M386.15000000000003 178.6 H390.15000000000003 L390.95000000000005 179.4 V189.79999999999998 H385.35 V179.4 Z" fill="#5e4252"/><rect x="386.15000000000003" y="182.6" width="4" height="5.999999999999999" fill="#85605a"/><rect x="386.65000000000003" y="182.79999999999998" width="0.6" height="3" fill="#a27870"/><rect x="389.05" y="182.79999999999998" width="0.6" height="3" fill="#a27870"/><path d="M386.95000000000005 178.9 H389.35 L390.15000000000003 179.70000000000002 V182.3 L389.35 183.1 H386.95000000000005 L386.15000000000003 182.3 V179.70000000000002 Z" fill="#e4bea4"/><rect x="387.45000000000005" y="180.3" width="1.6" height="1.6" fill="#cfa592"/><path d="M386.15000000000003 284.6 H390.95000000000005 V288.1 H387.75 Z" fill="#82828e"/><path d="M386.15000000000003 274.6 H390.15000000000003 L390.95000000000005 275.40000000000003 V285.8 H385.35 V275.40000000000003 Z" fill="#5e4252"/><rect x="386.15000000000003" y="278.6" width="4" height="5.999999999999999" fill="#85605a"/><rect x="386.65000000000003" y="278.8" width="0.6" height="3" fill="#a27870"/><rect x="389.05" y="278.8" width="0.6" height="3" fill="#a27870"/><path d="M386.95000000000005 274.90000000000003 H389.35 L390.15000000000003 275.70000000000005 V278.3 L389.35 279.1 H386.95000000000005 L386.15000000000003 278.3 V275.70000000000005 Z" fill="#e4bea4"/><rect x="387.45000000000005" y="276.3" width="1.6" height="1.6" fill="#cfa592"/><path d="M394.15000000000003 188.6 H398.95000000000005 V192.1 H395.75 Z" fill="#82828e"/><path d="M394.15000000000003 178.6 H398.15000000000003 L398.95000000000005 179.4 V189.79999999999998 H393.35 V179.4 Z" fill="#5e4252"/><rect x="394.15000000000003" y="182.6" width="4" height="5.999999999999999" fill="#85605a"/><rect x="394.65000000000003" y="182.79999999999998" width="0.6" height="3" fill="#a27870"/><rect x="397.05" y="182.79999999999998" width="0.6" height="3" fill="#a27870"/><path d="M394.95000000000005 178.9 H397.35 L398.15000000000003 179.70000000000002 V182.3 L397.35 183.1 H394.95000000000005 L394.15000000000003 182.3 V179.70000000000002 Z" fill="#e4bea4"/><rect x="395.45000000000005" y="180.3" width="1.6" height="1.6" fill="#cfa592"/><path d="M394.15000000000003 284.6 H398.95000000000005 V288.1 H395.75 Z" fill="#82828e"/><path d="M394.15000000000003 274.6 H398.15000000000003 L398.95000000000005 275.40000000000003 V285.8 H393.35 V275.40000000000003 Z" fill="#5e4252"/><rect x="394.15000000000003" y="278.6" width="4" height="5.999999999999999" fill="#85605a"/><rect x="394.65000000000003" y="278.8" width="0.6" height="3" fill="#a27870"/><rect x="397.05" y="278.8" width="0.6" height="3" fill="#a27870"/><path d="M394.95000000000005 274.90000000000003 H397.35 L398.15000000000003 275.70000000000005 V278.3 L397.35 279.1 H394.95000000000005 L394.15000000000003 278.3 V275.70000000000005 Z" fill="#e4bea4"/><rect x="395.45000000000005" y="276.3" width="1.6" height="1.6" fill="#cfa592"/><path d="M370.15000000000003 178.6 H374.15000000000003 L374.95000000000005 179.4 V285.8 H369.35 V179.4 Z" fill="#5e4252"/><rect x="370.15000000000003" y="182.79999999999998" width="4" height="101.80000000000001" fill="#85605a"/><path d="M370.95000000000005 179.0 H373.35 L374.15000000000003 179.8 V182.4 L373.35 183.2 H370.95000000000005 L370.15000000000003 182.4 V179.8 Z" fill="#e4bea4"/><rect x="371.45000000000005" y="180.4" width="1.6" height="1.6" fill="#cfa592"/><rect x="370.15000000000003" y="187.2" width="4" height="0.8" fill="#5e4252"/><path d="M370.95000000000005 188.0 H373.35 L374.15000000000003 188.8 V191.4 L373.35 192.2 H370.95000000000005 L370.15000000000003 191.4 V188.8 Z" fill="#e4bea4"/><rect x="371.45000000000005" y="189.4" width="1.6" height="1.6" fill="#cfa592"/><rect x="370.15000000000003" y="195.2" width="4" height="0.8" fill="#5e4252"/><path d="M370.95000000000005 196.0 H373.35 L374.15000000000003 196.8 V199.4 L373.35 200.2 H370.95000000000005 L370.15000000000003 199.4 V196.8 Z" fill="#e4bea4"/><rect x="371.45000000000005" y="197.4" width="1.6" height="1.6" fill="#cfa592"/><rect x="370.15000000000003" y="203.2" width="4" height="0.8" fill="#5e4252"/><path d="M370.95000000000005 204.0 H373.35 L374.15000000000003 204.8 V207.4 L373.35 208.2 H370.95000000000005 L370.15000000000003 207.4 V204.8 Z" fill="#e4bea4"/><rect x="371.45000000000005" y="205.4" width="1.6" height="1.6" fill="#cfa592"/><rect x="370.15000000000003" y="211.2" width="4" height="0.8" fill="#5e4252"/><path d="M370.95000000000005 212.0 H373.35 L374.15000000000003 212.8 V215.4 L373.35 216.2 H370.95000000000005 L370.15000000000003 215.4 V212.8 Z" fill="#e4bea4"/><rect x="371.45000000000005" y="213.4" width="1.6" height="1.6" fill="#cfa592"/><rect x="370.15000000000003" y="219.2" width="4" height="0.8" fill="#5e4252"/><path d="M370.95000000000005 220.0 H373.35 L374.15000000000003 220.8 V223.4 L373.35 224.2 H370.95000000000005 L370.15000000000003 223.4 V220.8 Z" fill="#e4bea4"/><rect x="371.45000000000005" y="221.4" width="1.6" height="1.6" fill="#cfa592"/><rect x="370.15000000000003" y="227.2" width="4" height="0.8" fill="#5e4252"/><path d="M370.95000000000005 228.0 H373.35 L374.15000000000003 228.8 V231.4 L373.35 232.2 H370.95000000000005 L370.15000000000003 231.4 V228.8 Z" fill="#e4bea4"/><rect x="371.45000000000005" y="229.4" width="1.6" height="1.6" fill="#cfa592"/><rect x="370.15000000000003" y="235.2" width="4" height="0.8" fill="#5e4252"/><path d="M370.95000000000005 236.0 H373.35 L374.15000000000003 236.8 V239.4 L373.35 240.2 H370.95000000000005 L370.15000000000003 239.4 V236.8 Z" fill="#e4bea4"/><rect x="371.45000000000005" y="237.4" width="1.6" height="1.6" fill="#cfa592"/><rect x="370.15000000000003" y="243.2" width="4" height="0.8" fill="#5e4252"/><path d="M370.95000000000005 244.0 H373.35 L374.15000000000003 244.8 V247.4 L373.35 248.2 H370.95000000000005 L370.15000000000003 247.4 V244.8 Z" fill="#e4bea4"/><rect x="371.45000000000005" y="245.4" width="1.6" height="1.6" fill="#cfa592"/><rect x="370.15000000000003" y="251.2" width="4" height="0.8" fill="#5e4252"/><path d="M370.95000000000005 252.0 H373.35 L374.15000000000003 252.8 V255.4 L373.35 256.2 H370.95000000000005 L370.15000000000003 255.4 V252.8 Z" fill="#e4bea4"/><rect x="371.45000000000005" y="253.4" width="1.6" height="1.6" fill="#cfa592"/><rect x="370.15000000000003" y="259.2" width="4" height="0.8" fill="#5e4252"/><path d="M370.95000000000005 260.0 H373.35 L374.15000000000003 260.8 V263.4 L373.35 264.2 H370.95000000000005 L370.15000000000003 263.4 V260.8 Z" fill="#e4bea4"/><rect x="371.45000000000005" y="261.4" width="1.6" height="1.6" fill="#cfa592"/><rect x="370.15000000000003" y="267.2" width="4" height="0.8" fill="#5e4252"/><path d="M370.95000000000005 268.0 H373.35 L374.15000000000003 268.8 V271.4 L373.35 272.2 H370.95000000000005 L370.15000000000003 271.4 V268.8 Z" fill="#e4bea4"/><rect x="371.45000000000005" y="269.4" width="1.6" height="1.6" fill="#cfa592"/><rect x="370.15000000000003" y="275.2" width="4" height="0.8" fill="#5e4252"/><path d="M370.95000000000005 276.0 H373.35 L374.15000000000003 276.8 V279.4 L373.35 280.2 H370.95000000000005 L370.15000000000003 279.4 V276.8 Z" fill="#e4bea4"/><rect x="371.45000000000005" y="277.4" width="1.6" height="1.6" fill="#cfa592"/><path d="M1.4499999999999997 202.65 h1 v3.3 h-1z M7.65 202.65 h1 v3.3 h-1z M2.05 205.65 h1.8 v0.9 h-1.8z M6.25 205.65 h1.8 v0.9 h-1.8z" fill="#3d4a08"/><polygon points="4.15,197.85 5.95,197.85 5.95,198.95 6.95,198.95 6.95,199.95 7.95,199.95 7.95,201.05 8.75,201.05 8.75,204.05 7.95,204.05 7.95,205.15 6.95,205.15 6.95,206.05 5.95,206.05 5.95,206.25 4.15,206.25 4.15,206.05 3.15,206.05 3.15,205.15 2.15,205.15 2.15,204.05 1.35,204.05 1.35,201.05 2.15,201.05 2.15,199.95 3.15,199.95 3.15,198.95 4.15,198.95" fill="#a2283a"/><polygon points="4.15,198.95 5.95,198.95 5.95,199.95 6.95,199.95 6.95,201.15 7.95,201.15 7.95,203.95 6.95,203.95 6.95,204.95 5.95,204.95 5.95,205.25 4.15,205.25 4.15,204.95 3.15,204.95 3.15,203.95 2.15,203.95 2.15,201.15 3.15,201.15 3.15,199.95 4.15,199.95" fill="#d84a5a"/><path d="M3.15 200.15h1v1h-1zM5.95 200.15h1v1h-1zM3.15 202.95000000000002h1v1h-1zM5.95 202.95000000000002h1v1h-1z" fill="#a2283a"/><rect x="4.1499999999999995" y="201.15" width="1.8" height="1.8" fill="#d8a850"/><path d="M7.200000000000001 200.7 h1 v3.3 h-1z M13.4 200.7 h1 v3.3 h-1z M7.800000000000001 203.7 h1.8 v0.9 h-1.8z M12.0 203.7 h1.8 v0.9 h-1.8z" fill="#3d4a08"/><polygon points="9.90,195.90 11.70,195.90 11.70,197.00 12.70,197.00 12.70,198.00 13.70,198.00 13.70,199.10 14.50,199.10 14.50,202.10 13.70,202.10 13.70,203.20 12.70,203.20 12.70,204.10 11.70,204.10 11.70,204.30 9.90,204.30 9.90,204.10 8.90,204.10 8.90,203.20 7.90,203.20 7.90,202.10 7.10,202.10 7.10,199.10 7.90,199.10 7.90,198.00 8.90,198.00 8.90,197.00 9.90,197.00" fill="#a2283a"/><polygon points="9.90,197.00 11.70,197.00 11.70,198.00 12.70,198.00 12.70,199.20 13.70,199.20 13.70,202.00 12.70,202.00 12.70,203.00 11.70,203.00 11.70,203.30 9.90,203.30 9.90,203.00 8.90,203.00 8.90,202.00 7.90,202.00 7.90,199.20 8.90,199.20 8.90,198.00 9.90,198.00" fill="#d84a5a"/><path d="M8.9 198.2h1v1h-1zM11.700000000000001 198.2h1v1h-1zM8.9 201.0h1v1h-1zM11.700000000000001 201.0h1v1h-1z" fill="#a2283a"/><rect x="9.9" y="199.2" width="1.8" height="1.8" fill="#d8a850"/><path d="M1.4499999999999997 196.95 h1 v3.3 h-1z M7.65 196.95 h1 v3.3 h-1z M2.05 199.95 h1.8 v0.9 h-1.8z M6.25 199.95 h1.8 v0.9 h-1.8z" fill="#3d4a08"/><polygon points="4.15,192.15 5.95,192.15 5.95,193.25 6.95,193.25 6.95,194.25 7.95,194.25 7.95,195.35 8.75,195.35 8.75,198.35 7.95,198.35 7.95,199.45 6.95,199.45 6.95,200.35 5.95,200.35 5.95,200.55 4.15,200.55 4.15,200.35 3.15,200.35 3.15,199.45 2.15,199.45 2.15,198.35 1.35,198.35 1.35,195.35 2.15,195.35 2.15,194.25 3.15,194.25 3.15,193.25 4.15,193.25" fill="#a2283a"/><polygon points="4.15,193.25 5.95,193.25 5.95,194.25 6.95,194.25 6.95,195.45 7.95,195.45 7.95,198.25 6.95,198.25 6.95,199.25 5.95,199.25 5.95,199.55 4.15,199.55 4.15,199.25 3.15,199.25 3.15,198.25 2.15,198.25 2.15,195.45 3.15,195.45 3.15,194.25 4.15,194.25" fill="#d84a5a"/><path d="M3.15 194.45h1v1h-1zM5.95 194.45h1v1h-1zM3.15 197.25h1v1h-1zM5.95 197.25h1v1h-1z" fill="#a2283a"/><rect x="4.1499999999999995" y="195.45" width="1.8" height="1.8" fill="#d8a850"/><path d="M385.45 202.65 h1 v3.3 h-1z M391.65000000000003 202.65 h1 v3.3 h-1z M386.05 205.65 h1.8 v0.9 h-1.8z M390.25 205.65 h1.8 v0.9 h-1.8z" fill="#3d4a08"/><polygon points="388.15,197.85 389.95,197.85 389.95,198.95 390.95,198.95 390.95,199.95 391.95,199.95 391.95,201.05 392.75,201.05 392.75,204.05 391.95,204.05 391.95,205.15 390.95,205.15 390.95,206.05 389.95,206.05 389.95,206.25 388.15,206.25 388.15,206.05 387.15,206.05 387.15,205.15 386.15,205.15 386.15,204.05 385.35,204.05 385.35,201.05 386.15,201.05 386.15,199.95 387.15,199.95 387.15,198.95 388.15,198.95" fill="#262f5c"/><polygon points="388.15,198.95 389.95,198.95 389.95,199.95 390.95,199.95 390.95,201.15 391.95,201.15 391.95,203.95 390.95,203.95 390.95,204.95 389.95,204.95 389.95,205.25 388.15,205.25 388.15,204.95 387.15,204.95 387.15,203.95 386.15,203.95 386.15,201.15 387.15,201.15 387.15,199.95 388.15,199.95" fill="#5282c4"/><path d="M387.15000000000003 200.15h1v1h-1zM389.95 200.15h1v1h-1zM387.15000000000003 202.95000000000002h1v1h-1zM389.95 202.95000000000002h1v1h-1z" fill="#262f5c"/><rect x="388.15000000000003" y="201.15" width="1.8" height="1.8" fill="#d8a850"/><path d="M391.2 200.7 h1 v3.3 h-1z M397.40000000000003 200.7 h1 v3.3 h-1z M391.8 203.7 h1.8 v0.9 h-1.8z M396.0 203.7 h1.8 v0.9 h-1.8z" fill="#3d4a08"/><polygon points="393.90,195.90 395.70,195.90 395.70,197.00 396.70,197.00 396.70,198.00 397.70,198.00 397.70,199.10 398.50,199.10 398.50,202.10 397.70,202.10 397.70,203.20 396.70,203.20 396.70,204.10 395.70,204.10 395.70,204.30 393.90,204.30 393.90,204.10 392.90,204.10 392.90,203.20 391.90,203.20 391.90,202.10 391.10,202.10 391.10,199.10 391.90,199.10 391.90,198.00 392.90,198.00 392.90,197.00 393.90,197.00" fill="#262f5c"/><polygon points="393.90,197.00 395.70,197.00 395.70,198.00 396.70,198.00 396.70,199.20 397.70,199.20 397.70,202.00 396.70,202.00 396.70,203.00 395.70,203.00 395.70,203.30 393.90,203.30 393.90,203.00 392.90,203.00 392.90,202.00 391.90,202.00 391.90,199.20 392.90,199.20 392.90,198.00 393.90,198.00" fill="#5282c4"/><path d="M392.90000000000003 198.2h1v1h-1zM395.7 198.2h1v1h-1zM392.90000000000003 201.0h1v1h-1zM395.7 201.0h1v1h-1z" fill="#262f5c"/><rect x="393.90000000000003" y="199.2" width="1.8" height="1.8" fill="#d8a850"/><path d="M385.45 196.95 h1 v3.3 h-1z M391.65000000000003 196.95 h1 v3.3 h-1z M386.05 199.95 h1.8 v0.9 h-1.8z M390.25 199.95 h1.8 v0.9 h-1.8z" fill="#3d4a08"/><polygon points="388.15,192.15 389.95,192.15 389.95,193.25 390.95,193.25 390.95,194.25 391.95,194.25 391.95,195.35 392.75,195.35 392.75,198.35 391.95,198.35 391.95,199.45 390.95,199.45 390.95,200.35 389.95,200.35 389.95,200.55 388.15,200.55 388.15,200.35 387.15,200.35 387.15,199.45 386.15,199.45 386.15,198.35 385.35,198.35 385.35,195.35 386.15,195.35 386.15,194.25 387.15,194.25 387.15,193.25 388.15,193.25" fill="#262f5c"/><polygon points="388.15,193.25 389.95,193.25 389.95,194.25 390.95,194.25 390.95,195.45 391.95,195.45 391.95,198.25 390.95,198.25 390.95,199.25 389.95,199.25 389.95,199.55 388.15,199.55 388.15,199.25 387.15,199.25 387.15,198.25 386.15,198.25 386.15,195.45 387.15,195.45 387.15,194.25 388.15,194.25" fill="#5282c4"/><path d="M387.15000000000003 194.45h1v1h-1zM389.95 194.45h1v1h-1zM387.15000000000003 197.25h1v1h-1zM389.95 197.25h1v1h-1z" fill="#262f5c"/><rect x="388.15000000000003" y="195.45" width="1.8" height="1.8" fill="#d8a850"/><path d="M4.35 215.79999999999998 h1 v3.3 h-1z M10.55 215.79999999999998 h1 v3.3 h-1z M4.95 218.79999999999998 h1.8 v0.9 h-1.8z M9.15 218.79999999999998 h1.8 v0.9 h-1.8z" fill="#3d4a08"/><polygon points="7.05,211.00 8.85,211.00 8.85,212.10 9.85,212.10 9.85,213.10 10.85,213.10 10.85,214.20 11.65,214.20 11.65,217.20 10.85,217.20 10.85,218.30 9.85,218.30 9.85,219.20 8.85,219.20 8.85,219.40 7.05,219.40 7.05,219.20 6.05,219.20 6.05,218.30 5.05,218.30 5.05,217.20 4.25,217.20 4.25,214.20 5.05,214.20 5.05,213.10 6.05,213.10 6.05,212.10 7.05,212.10" fill="#a2283a"/><polygon points="7.05,212.10 8.85,212.10 8.85,213.10 9.85,213.10 9.85,214.30 10.85,214.30 10.85,217.10 9.85,217.10 9.85,218.10 8.85,218.10 8.85,218.40 7.05,218.40 7.05,218.10 6.05,218.10 6.05,217.10 5.05,217.10 5.05,214.30 6.05,214.30 6.05,213.10 7.05,213.10" fill="#d84a5a"/><path d="M6.050000000000001 213.29999999999998h1v1h-1zM8.85 213.29999999999998h1v1h-1zM6.050000000000001 216.1h1v1h-1zM8.85 216.1h1v1h-1z" fill="#a2283a"/><rect x="7.05" y="214.29999999999998" width="1.8" height="1.8" fill="#d8a850"/><path d="M388.34999999999997 215.79999999999998 h1 v3.3 h-1z M394.55 215.79999999999998 h1 v3.3 h-1z M388.95 218.79999999999998 h1.8 v0.9 h-1.8z M393.15 218.79999999999998 h1.8 v0.9 h-1.8z" fill="#3d4a08"/><polygon points="391.05,211.00 392.85,211.00 392.85,212.10 393.85,212.10 393.85,213.10 394.85,213.10 394.85,214.20 395.65,214.20 395.65,217.20 394.85,217.20 394.85,218.30 393.85,218.30 393.85,219.20 392.85,219.20 392.85,219.40 391.05,219.40 391.05,219.20 390.05,219.20 390.05,218.30 389.05,218.30 389.05,217.20 388.25,217.20 388.25,214.20 389.05,214.20 389.05,213.10 390.05,213.10 390.05,212.10 391.05,212.10" fill="#262f5c"/><polygon points="391.05,212.10 392.85,212.10 392.85,213.10 393.85,213.10 393.85,214.30 394.85,214.30 394.85,217.10 393.85,217.10 393.85,218.10 392.85,218.10 392.85,218.40 391.05,218.40 391.05,218.10 390.05,218.10 390.05,217.10 389.05,217.10 389.05,214.30 390.05,214.30 390.05,213.10 391.05,213.10" fill="#5282c4"/><path d="M390.05 213.29999999999998h1v1h-1zM392.84999999999997 213.29999999999998h1v1h-1zM390.05 216.1h1v1h-1zM392.84999999999997 216.1h1v1h-1z" fill="#262f5c"/><rect x="391.05" y="214.29999999999998" width="1.8" height="1.8" fill="#d8a850"/><path d="M1.4499999999999997 234.65 h1 v3.3 h-1z M7.65 234.65 h1 v3.3 h-1z M2.05 237.65 h1.8 v0.9 h-1.8z M6.25 237.65 h1.8 v0.9 h-1.8z" fill="#3d4a08"/><polygon points="4.15,229.85 5.95,229.85 5.95,230.95 6.95,230.95 6.95,231.95 7.95,231.95 7.95,233.05 8.75,233.05 8.75,236.05 7.95,236.05 7.95,237.15 6.95,237.15 6.95,238.05 5.95,238.05 5.95,238.25 4.15,238.25 4.15,238.05 3.15,238.05 3.15,237.15 2.15,237.15 2.15,236.05 1.35,236.05 1.35,233.05 2.15,233.05 2.15,231.95 3.15,231.95 3.15,230.95 4.15,230.95" fill="#a2283a"/><polygon points="4.15,230.95 5.95,230.95 5.95,231.95 6.95,231.95 6.95,233.15 7.95,233.15 7.95,235.95 6.95,235.95 6.95,236.95 5.95,236.95 5.95,237.25 4.15,237.25 4.15,236.95 3.15,236.95 3.15,235.95 2.15,235.95 2.15,233.15 3.15,233.15 3.15,231.95 4.15,231.95" fill="#d84a5a"/><path d="M3.15 232.15h1v1h-1zM5.95 232.15h1v1h-1zM3.15 234.95000000000002h1v1h-1zM5.95 234.95000000000002h1v1h-1z" fill="#a2283a"/><rect x="4.1499999999999995" y="233.15" width="1.8" height="1.8" fill="#d8a850"/><path d="M7.200000000000001 232.7 h1 v3.3 h-1z M13.4 232.7 h1 v3.3 h-1z M7.800000000000001 235.7 h1.8 v0.9 h-1.8z M12.0 235.7 h1.8 v0.9 h-1.8z" fill="#3d4a08"/><polygon points="9.90,227.90 11.70,227.90 11.70,229.00 12.70,229.00 12.70,230.00 13.70,230.00 13.70,231.10 14.50,231.10 14.50,234.10 13.70,234.10 13.70,235.20 12.70,235.20 12.70,236.10 11.70,236.10 11.70,236.30 9.90,236.30 9.90,236.10 8.90,236.10 8.90,235.20 7.90,235.20 7.90,234.10 7.10,234.10 7.10,231.10 7.90,231.10 7.90,230.00 8.90,230.00 8.90,229.00 9.90,229.00" fill="#a2283a"/><polygon points="9.90,229.00 11.70,229.00 11.70,230.00 12.70,230.00 12.70,231.20 13.70,231.20 13.70,234.00 12.70,234.00 12.70,235.00 11.70,235.00 11.70,235.30 9.90,235.30 9.90,235.00 8.90,235.00 8.90,234.00 7.90,234.00 7.90,231.20 8.90,231.20 8.90,230.00 9.90,230.00" fill="#d84a5a"/><path d="M8.9 230.2h1v1h-1zM11.700000000000001 230.2h1v1h-1zM8.9 233.0h1v1h-1zM11.700000000000001 233.0h1v1h-1z" fill="#a2283a"/><rect x="9.9" y="231.2" width="1.8" height="1.8" fill="#d8a850"/><path d="M1.4499999999999997 228.95 h1 v3.3 h-1z M7.65 228.95 h1 v3.3 h-1z M2.05 231.95 h1.8 v0.9 h-1.8z M6.25 231.95 h1.8 v0.9 h-1.8z" fill="#3d4a08"/><polygon points="4.15,224.15 5.95,224.15 5.95,225.25 6.95,225.25 6.95,226.25 7.95,226.25 7.95,227.35 8.75,227.35 8.75,230.35 7.95,230.35 7.95,231.45 6.95,231.45 6.95,232.35 5.95,232.35 5.95,232.55 4.15,232.55 4.15,232.35 3.15,232.35 3.15,231.45 2.15,231.45 2.15,230.35 1.35,230.35 1.35,227.35 2.15,227.35 2.15,226.25 3.15,226.25 3.15,225.25 4.15,225.25" fill="#a2283a"/><polygon points="4.15,225.25 5.95,225.25 5.95,226.25 6.95,226.25 6.95,227.45 7.95,227.45 7.95,230.25 6.95,230.25 6.95,231.25 5.95,231.25 5.95,231.55 4.15,231.55 4.15,231.25 3.15,231.25 3.15,230.25 2.15,230.25 2.15,227.45 3.15,227.45 3.15,226.25 4.15,226.25" fill="#d84a5a"/><path d="M3.15 226.45h1v1h-1zM5.95 226.45h1v1h-1zM3.15 229.25h1v1h-1zM5.95 229.25h1v1h-1z" fill="#a2283a"/><rect x="4.1499999999999995" y="227.45" width="1.8" height="1.8" fill="#d8a850"/><path d="M385.45 234.65 h1 v3.3 h-1z M391.65000000000003 234.65 h1 v3.3 h-1z M386.05 237.65 h1.8 v0.9 h-1.8z M390.25 237.65 h1.8 v0.9 h-1.8z" fill="#3d4a08"/><polygon points="388.15,229.85 389.95,229.85 389.95,230.95 390.95,230.95 390.95,231.95 391.95,231.95 391.95,233.05 392.75,233.05 392.75,236.05 391.95,236.05 391.95,237.15 390.95,237.15 390.95,238.05 389.95,238.05 389.95,238.25 388.15,238.25 388.15,238.05 387.15,238.05 387.15,237.15 386.15,237.15 386.15,236.05 385.35,236.05 385.35,233.05 386.15,233.05 386.15,231.95 387.15,231.95 387.15,230.95 388.15,230.95" fill="#262f5c"/><polygon points="388.15,230.95 389.95,230.95 389.95,231.95 390.95,231.95 390.95,233.15 391.95,233.15 391.95,235.95 390.95,235.95 390.95,236.95 389.95,236.95 389.95,237.25 388.15,237.25 388.15,236.95 387.15,236.95 387.15,235.95 386.15,235.95 386.15,233.15 387.15,233.15 387.15,231.95 388.15,231.95" fill="#5282c4"/><path d="M387.15000000000003 232.15h1v1h-1zM389.95 232.15h1v1h-1zM387.15000000000003 234.95000000000002h1v1h-1zM389.95 234.95000000000002h1v1h-1z" fill="#262f5c"/><rect x="388.15000000000003" y="233.15" width="1.8" height="1.8" fill="#d8a850"/><path d="M391.2 232.7 h1 v3.3 h-1z M397.40000000000003 232.7 h1 v3.3 h-1z M391.8 235.7 h1.8 v0.9 h-1.8z M396.0 235.7 h1.8 v0.9 h-1.8z" fill="#3d4a08"/><polygon points="393.90,227.90 395.70,227.90 395.70,229.00 396.70,229.00 396.70,230.00 397.70,230.00 397.70,231.10 398.50,231.10 398.50,234.10 397.70,234.10 397.70,235.20 396.70,235.20 396.70,236.10 395.70,236.10 395.70,236.30 393.90,236.30 393.90,236.10 392.90,236.10 392.90,235.20 391.90,235.20 391.90,234.10 391.10,234.10 391.10,231.10 391.90,231.10 391.90,230.00 392.90,230.00 392.90,229.00 393.90,229.00" fill="#262f5c"/><polygon points="393.90,229.00 395.70,229.00 395.70,230.00 396.70,230.00 396.70,231.20 397.70,231.20 397.70,234.00 396.70,234.00 396.70,235.00 395.70,235.00 395.70,235.30 393.90,235.30 393.90,235.00 392.90,235.00 392.90,234.00 391.90,234.00 391.90,231.20 392.90,231.20 392.90,230.00 393.90,230.00" fill="#5282c4"/><path d="M392.90000000000003 230.2h1v1h-1zM395.7 230.2h1v1h-1zM392.90000000000003 233.0h1v1h-1zM395.7 233.0h1v1h-1z" fill="#262f5c"/><rect x="393.90000000000003" y="231.2" width="1.8" height="1.8" fill="#d8a850"/><path d="M385.45 228.95 h1 v3.3 h-1z M391.65000000000003 228.95 h1 v3.3 h-1z M386.05 231.95 h1.8 v0.9 h-1.8z M390.25 231.95 h1.8 v0.9 h-1.8z" fill="#3d4a08"/><polygon points="388.15,224.15 389.95,224.15 389.95,225.25 390.95,225.25 390.95,226.25 391.95,226.25 391.95,227.35 392.75,227.35 392.75,230.35 391.95,230.35 391.95,231.45 390.95,231.45 390.95,232.35 389.95,232.35 389.95,232.55 388.15,232.55 388.15,232.35 387.15,232.35 387.15,231.45 386.15,231.45 386.15,230.35 385.35,230.35 385.35,227.35 386.15,227.35 386.15,226.25 387.15,226.25 387.15,225.25 388.15,225.25" fill="#262f5c"/><polygon points="388.15,225.25 389.95,225.25 389.95,226.25 390.95,226.25 390.95,227.45 391.95,227.45 391.95,230.25 390.95,230.25 390.95,231.25 389.95,231.25 389.95,231.55 388.15,231.55 388.15,231.25 387.15,231.25 387.15,230.25 386.15,230.25 386.15,227.45 387.15,227.45 387.15,226.25 388.15,226.25" fill="#5282c4"/><path d="M387.15000000000003 226.45h1v1h-1zM389.95 226.45h1v1h-1zM387.15000000000003 229.25h1v1h-1zM389.95 229.25h1v1h-1z" fill="#262f5c"/><rect x="388.15000000000003" y="227.45" width="1.8" height="1.8" fill="#d8a850"/><path d="M4.35 247.79999999999998 h1 v3.3 h-1z M10.55 247.79999999999998 h1 v3.3 h-1z M4.95 250.79999999999998 h1.8 v0.9 h-1.8z M9.15 250.79999999999998 h1.8 v0.9 h-1.8z" fill="#3d4a08"/><polygon points="7.05,243.00 8.85,243.00 8.85,244.10 9.85,244.10 9.85,245.10 10.85,245.10 10.85,246.20 11.65,246.20 11.65,249.20 10.85,249.20 10.85,250.30 9.85,250.30 9.85,251.20 8.85,251.20 8.85,251.40 7.05,251.40 7.05,251.20 6.05,251.20 6.05,250.30 5.05,250.30 5.05,249.20 4.25,249.20 4.25,246.20 5.05,246.20 5.05,245.10 6.05,245.10 6.05,244.10 7.05,244.10" fill="#a2283a"/><polygon points="7.05,244.10 8.85,244.10 8.85,245.10 9.85,245.10 9.85,246.30 10.85,246.30 10.85,249.10 9.85,249.10 9.85,250.10 8.85,250.10 8.85,250.40 7.05,250.40 7.05,250.10 6.05,250.10 6.05,249.10 5.05,249.10 5.05,246.30 6.05,246.30 6.05,245.10 7.05,245.10" fill="#d84a5a"/><path d="M6.050000000000001 245.29999999999998h1v1h-1zM8.85 245.29999999999998h1v1h-1zM6.050000000000001 248.1h1v1h-1zM8.85 248.1h1v1h-1z" fill="#a2283a"/><rect x="7.05" y="246.29999999999998" width="1.8" height="1.8" fill="#d8a850"/><path d="M388.34999999999997 247.79999999999998 h1 v3.3 h-1z M394.55 247.79999999999998 h1 v3.3 h-1z M388.95 250.79999999999998 h1.8 v0.9 h-1.8z M393.15 250.79999999999998 h1.8 v0.9 h-1.8z" fill="#3d4a08"/><polygon points="391.05,243.00 392.85,243.00 392.85,244.10 393.85,244.10 393.85,245.10 394.85,245.10 394.85,246.20 395.65,246.20 395.65,249.20 394.85,249.20 394.85,250.30 393.85,250.30 393.85,251.20 392.85,251.20 392.85,251.40 391.05,251.40 391.05,251.20 390.05,251.20 390.05,250.30 389.05,250.30 389.05,249.20 388.25,249.20 388.25,246.20 389.05,246.20 389.05,245.10 390.05,245.10 390.05,244.10 391.05,244.10" fill="#262f5c"/><polygon points="391.05,244.10 392.85,244.10 392.85,245.10 393.85,245.10 393.85,246.30 394.85,246.30 394.85,249.10 393.85,249.10 393.85,250.10 392.85,250.10 392.85,250.40 391.05,250.40 391.05,250.10 390.05,250.10 390.05,249.10 389.05,249.10 389.05,246.30 390.05,246.30 390.05,245.10 391.05,245.10" fill="#5282c4"/><path d="M390.05 245.29999999999998h1v1h-1zM392.84999999999997 245.29999999999998h1v1h-1zM390.05 248.1h1v1h-1zM392.84999999999997 248.1h1v1h-1z" fill="#262f5c"/><rect x="391.05" y="246.29999999999998" width="1.8" height="1.8" fill="#d8a850"/><path d="M1.4499999999999997 266.65000000000003 h1 v3.3 h-1z M7.65 266.65000000000003 h1 v3.3 h-1z M2.05 269.65000000000003 h1.8 v0.9 h-1.8z M6.25 269.65000000000003 h1.8 v0.9 h-1.8z" fill="#3d4a08"/><polygon points="4.15,261.85 5.95,261.85 5.95,262.95 6.95,262.95 6.95,263.95 7.95,263.95 7.95,265.05 8.75,265.05 8.75,268.05 7.95,268.05 7.95,269.15 6.95,269.15 6.95,270.05 5.95,270.05 5.95,270.25 4.15,270.25 4.15,270.05 3.15,270.05 3.15,269.15 2.15,269.15 2.15,268.05 1.35,268.05 1.35,265.05 2.15,265.05 2.15,263.95 3.15,263.95 3.15,262.95 4.15,262.95" fill="#a2283a"/><polygon points="4.15,262.95 5.95,262.95 5.95,263.95 6.95,263.95 6.95,265.15 7.95,265.15 7.95,267.95 6.95,267.95 6.95,268.95 5.95,268.95 5.95,269.25 4.15,269.25 4.15,268.95 3.15,268.95 3.15,267.95 2.15,267.95 2.15,265.15 3.15,265.15 3.15,263.95 4.15,263.95" fill="#d84a5a"/><path d="M3.15 264.15000000000003h1v1h-1zM5.95 264.15000000000003h1v1h-1zM3.15 266.95h1v1h-1zM5.95 266.95h1v1h-1z" fill="#a2283a"/><rect x="4.1499999999999995" y="265.15000000000003" width="1.8" height="1.8" fill="#d8a850"/><path d="M7.200000000000001 264.70000000000005 h1 v3.3 h-1z M13.4 264.70000000000005 h1 v3.3 h-1z M7.800000000000001 267.70000000000005 h1.8 v0.9 h-1.8z M12.0 267.70000000000005 h1.8 v0.9 h-1.8z" fill="#3d4a08"/><polygon points="9.90,259.90 11.70,259.90 11.70,261.00 12.70,261.00 12.70,262.00 13.70,262.00 13.70,263.10 14.50,263.10 14.50,266.10 13.70,266.10 13.70,267.20 12.70,267.20 12.70,268.10 11.70,268.10 11.70,268.30 9.90,268.30 9.90,268.10 8.90,268.10 8.90,267.20 7.90,267.20 7.90,266.10 7.10,266.10 7.10,263.10 7.90,263.10 7.90,262.00 8.90,262.00 8.90,261.00 9.90,261.00" fill="#a2283a"/><polygon points="9.90,261.00 11.70,261.00 11.70,262.00 12.70,262.00 12.70,263.20 13.70,263.20 13.70,266.00 12.70,266.00 12.70,267.00 11.70,267.00 11.70,267.30 9.90,267.30 9.90,267.00 8.90,267.00 8.90,266.00 7.90,266.00 7.90,263.20 8.90,263.20 8.90,262.00 9.90,262.00" fill="#d84a5a"/><path d="M8.9 262.20000000000005h1v1h-1zM11.700000000000001 262.20000000000005h1v1h-1zM8.9 265.0h1v1h-1zM11.700000000000001 265.0h1v1h-1z" fill="#a2283a"/><rect x="9.9" y="263.20000000000005" width="1.8" height="1.8" fill="#d8a850"/><path d="M1.4499999999999997 260.95000000000005 h1 v3.3 h-1z M7.65 260.95000000000005 h1 v3.3 h-1z M2.05 263.95000000000005 h1.8 v0.9 h-1.8z M6.25 263.95000000000005 h1.8 v0.9 h-1.8z" fill="#3d4a08"/><polygon points="4.15,256.15 5.95,256.15 5.95,257.25 6.95,257.25 6.95,258.25 7.95,258.25 7.95,259.35 8.75,259.35 8.75,262.35 7.95,262.35 7.95,263.45 6.95,263.45 6.95,264.35 5.95,264.35 5.95,264.55 4.15,264.55 4.15,264.35 3.15,264.35 3.15,263.45 2.15,263.45 2.15,262.35 1.35,262.35 1.35,259.35 2.15,259.35 2.15,258.25 3.15,258.25 3.15,257.25 4.15,257.25" fill="#a2283a"/><polygon points="4.15,257.25 5.95,257.25 5.95,258.25 6.95,258.25 6.95,259.45 7.95,259.45 7.95,262.25 6.95,262.25 6.95,263.25 5.95,263.25 5.95,263.55 4.15,263.55 4.15,263.25 3.15,263.25 3.15,262.25 2.15,262.25 2.15,259.45 3.15,259.45 3.15,258.25 4.15,258.25" fill="#d84a5a"/><path d="M3.15 258.45000000000005h1v1h-1zM5.95 258.45000000000005h1v1h-1zM3.15 261.25h1v1h-1zM5.95 261.25h1v1h-1z" fill="#a2283a"/><rect x="4.1499999999999995" y="259.45000000000005" width="1.8" height="1.8" fill="#d8a850"/><path d="M385.45 266.65000000000003 h1 v3.3 h-1z M391.65000000000003 266.65000000000003 h1 v3.3 h-1z M386.05 269.65000000000003 h1.8 v0.9 h-1.8z M390.25 269.65000000000003 h1.8 v0.9 h-1.8z" fill="#3d4a08"/><polygon points="388.15,261.85 389.95,261.85 389.95,262.95 390.95,262.95 390.95,263.95 391.95,263.95 391.95,265.05 392.75,265.05 392.75,268.05 391.95,268.05 391.95,269.15 390.95,269.15 390.95,270.05 389.95,270.05 389.95,270.25 388.15,270.25 388.15,270.05 387.15,270.05 387.15,269.15 386.15,269.15 386.15,268.05 385.35,268.05 385.35,265.05 386.15,265.05 386.15,263.95 387.15,263.95 387.15,262.95 388.15,262.95" fill="#262f5c"/><polygon points="388.15,262.95 389.95,262.95 389.95,263.95 390.95,263.95 390.95,265.15 391.95,265.15 391.95,267.95 390.95,267.95 390.95,268.95 389.95,268.95 389.95,269.25 388.15,269.25 388.15,268.95 387.15,268.95 387.15,267.95 386.15,267.95 386.15,265.15 387.15,265.15 387.15,263.95 388.15,263.95" fill="#5282c4"/><path d="M387.15000000000003 264.15000000000003h1v1h-1zM389.95 264.15000000000003h1v1h-1zM387.15000000000003 266.95h1v1h-1zM389.95 266.95h1v1h-1z" fill="#262f5c"/><rect x="388.15000000000003" y="265.15000000000003" width="1.8" height="1.8" fill="#d8a850"/><path d="M391.2 264.70000000000005 h1 v3.3 h-1z M397.40000000000003 264.70000000000005 h1 v3.3 h-1z M391.8 267.70000000000005 h1.8 v0.9 h-1.8z M396.0 267.70000000000005 h1.8 v0.9 h-1.8z" fill="#3d4a08"/><polygon points="393.90,259.90 395.70,259.90 395.70,261.00 396.70,261.00 396.70,262.00 397.70,262.00 397.70,263.10 398.50,263.10 398.50,266.10 397.70,266.10 397.70,267.20 396.70,267.20 396.70,268.10 395.70,268.10 395.70,268.30 393.90,268.30 393.90,268.10 392.90,268.10 392.90,267.20 391.90,267.20 391.90,266.10 391.10,266.10 391.10,263.10 391.90,263.10 391.90,262.00 392.90,262.00 392.90,261.00 393.90,261.00" fill="#262f5c"/><polygon points="393.90,261.00 395.70,261.00 395.70,262.00 396.70,262.00 396.70,263.20 397.70,263.20 397.70,266.00 396.70,266.00 396.70,267.00 395.70,267.00 395.70,267.30 393.90,267.30 393.90,267.00 392.90,267.00 392.90,266.00 391.90,266.00 391.90,263.20 392.90,263.20 392.90,262.00 393.90,262.00" fill="#5282c4"/><path d="M392.90000000000003 262.20000000000005h1v1h-1zM395.7 262.20000000000005h1v1h-1zM392.90000000000003 265.0h1v1h-1zM395.7 265.0h1v1h-1z" fill="#262f5c"/><rect x="393.90000000000003" y="263.20000000000005" width="1.8" height="1.8" fill="#d8a850"/><path d="M385.45 260.95000000000005 h1 v3.3 h-1z M391.65000000000003 260.95000000000005 h1 v3.3 h-1z M386.05 263.95000000000005 h1.8 v0.9 h-1.8z M390.25 263.95000000000005 h1.8 v0.9 h-1.8z" fill="#3d4a08"/><polygon points="388.15,256.15 389.95,256.15 389.95,257.25 390.95,257.25 390.95,258.25 391.95,258.25 391.95,259.35 392.75,259.35 392.75,262.35 391.95,262.35 391.95,263.45 390.95,263.45 390.95,264.35 389.95,264.35 389.95,264.55 388.15,264.55 388.15,264.35 387.15,264.35 387.15,263.45 386.15,263.45 386.15,262.35 385.35,262.35 385.35,259.35 386.15,259.35 386.15,258.25 387.15,258.25 387.15,257.25 388.15,257.25" fill="#262f5c"/><polygon points="388.15,257.25 389.95,257.25 389.95,258.25 390.95,258.25 390.95,259.45 391.95,259.45 391.95,262.25 390.95,262.25 390.95,263.25 389.95,263.25 389.95,263.55 388.15,263.55 388.15,263.25 387.15,263.25 387.15,262.25 386.15,262.25 386.15,259.45 387.15,259.45 387.15,258.25 388.15,258.25" fill="#5282c4"/><path d="M387.15000000000003 258.45000000000005h1v1h-1zM389.95 258.45000000000005h1v1h-1zM387.15000000000003 261.25h1v1h-1zM389.95 261.25h1v1h-1z" fill="#262f5c"/><rect x="388.15000000000003" y="259.45000000000005" width="1.8" height="1.8" fill="#d8a850"/><path d="M152.00 211.60 Q154.00 210.60 156.00 211.60 Q158.00 210.60 160.00 211.60 Q162.00 210.60 164.00 211.60 Q166.00 210.60 168.00 211.60 Q170.00 210.60 172.00 211.60 Q174.00 210.60 176.00 211.60 Q178.00 210.60 180.00 211.60 Q182.00 210.60 184.00 211.60 Q186.00 210.60 188.00 211.60 Q190.00 210.60 192.00 211.60 Q194.00 210.60 196.00 211.60 Q198.00 210.60 200.00 211.60 Q202.00 210.60 204.00 211.60 Q206.00 210.60 208.00 211.60 Q210.00 210.60 212.00 211.60 Q214.00 210.60 216.00 211.60 Q218.00 210.60 220.00 211.60 Q222.00 210.60 224.00 211.60 Q226.00 210.60 228.00 211.60 Q230.00 210.60 232.00 211.60 Q234.00 210.60 236.00 211.60 Q238.00 210.60 240.00 211.60 Q242.00 210.60 244.00 211.60 Q246.00 210.60 248.00 211.60 V214.30 Q247.00 217.30 245.00 217.30 Q242.95 218.40 240.91 217.30 Q238.86 218.40 236.82 217.30 Q234.77 218.40 232.73 217.30 Q230.68 218.40 228.64 217.30 Q226.59 218.40 224.55 217.30 Q222.50 218.40 220.45 217.30 Q218.41 218.40 216.36 217.30 Q214.32 218.40 212.27 217.30 Q210.23 218.40 208.18 217.30 Q206.14 218.40 204.09 217.30 Q202.05 218.40 200.00 217.30 Q197.95 218.40 195.91 217.30 Q193.86 218.40 191.82 217.30 Q189.77 218.40 187.73 217.30 Q185.68 218.40 183.64 217.30 Q181.59 218.40 179.55 217.30 Q177.50 218.40 175.45 217.30 Q173.41 218.40 171.36 217.30 Q169.32 218.40 167.27 217.30 Q165.23 218.40 163.18 217.30 Q161.14 218.40 159.09 217.30 Q157.05 218.40 155.00 217.30 Q153.00 217.30 152.00 214.30 Z" fill="#5e4354"/><path d="M152.80 212.40 Q154.77 211.40 156.73 212.40 Q158.70 211.40 160.67 212.40 Q162.63 211.40 164.60 212.40 Q166.57 211.40 168.53 212.40 Q170.50 211.40 172.47 212.40 Q174.43 211.40 176.40 212.40 Q178.37 211.40 180.33 212.40 Q182.30 211.40 184.27 212.40 Q186.23 211.40 188.20 212.40 Q190.17 211.40 192.13 212.40 Q194.10 211.40 196.07 212.40 Q198.03 211.40 200.00 212.40 Q201.97 211.40 203.93 212.40 Q205.90 211.40 207.87 212.40 Q209.83 211.40 211.80 212.40 Q213.77 211.40 215.73 212.40 Q217.70 211.40 219.67 212.40 Q221.63 211.40 223.60 212.40 Q225.57 211.40 227.53 212.40 Q229.50 211.40 231.47 212.40 Q233.43 211.40 235.40 212.40 Q237.37 211.40 239.33 212.40 Q241.30 211.40 243.27 212.40 Q245.23 211.40 247.20 212.40 V214.30 Q246.20 216.50 244.20 216.50 Q242.19 217.60 240.18 216.50 Q238.17 217.60 236.16 216.50 Q234.15 217.60 232.15 216.50 Q230.14 217.60 228.13 216.50 Q226.12 217.60 224.11 216.50 Q222.10 217.60 220.09 216.50 Q218.08 217.60 216.07 216.50 Q214.06 217.60 212.05 216.50 Q210.05 217.60 208.04 216.50 Q206.03 217.60 204.02 216.50 Q202.01 217.60 200.00 216.50 Q197.99 217.60 195.98 216.50 Q193.97 217.60 191.96 216.50 Q189.95 217.60 187.95 216.50 Q185.94 217.60 183.93 216.50 Q181.92 217.60 179.91 216.50 Q177.90 217.60 175.89 216.50 Q173.88 217.60 171.87 216.50 Q169.86 217.60 167.85 216.50 Q165.85 217.60 163.84 216.50 Q161.83 217.60 159.82 216.50 Q157.81 217.60 155.80 216.50 Q153.80 216.50 152.80 214.30 Z" fill="#8e6c68"/><path d="M153 215.60000000000002 Q155 212.8 157 215.60000000000002" stroke="#6a4a58" stroke-width="0.9" fill="none"/><path d="M157 215.60000000000002 Q159 212.8 161 215.60000000000002" stroke="#6a4a58" stroke-width="0.9" fill="none"/><path d="M161 215.60000000000002 Q163 212.8 165 215.60000000000002" stroke="#6a4a58" stroke-width="0.9" fill="none"/><path d="M165 215.60000000000002 Q167 212.8 169 215.60000000000002" stroke="#6a4a58" stroke-width="0.9" fill="none"/><path d="M169 215.60000000000002 Q171 212.8 173 215.60000000000002" stroke="#6a4a58" stroke-width="0.9" fill="none"/><path d="M173 215.60000000000002 Q175 212.8 177 215.60000000000002" stroke="#6a4a58" stroke-width="0.9" fill="none"/><path d="M177 215.60000000000002 Q179 212.8 181 215.60000000000002" stroke="#6a4a58" stroke-width="0.9" fill="none"/><path d="M181 215.60000000000002 Q183 212.8 185 215.60000000000002" stroke="#6a4a58" stroke-width="0.9" fill="none"/><path d="M185 215.60000000000002 Q187 212.8 189 215.60000000000002" stroke="#6a4a58" stroke-width="0.9" fill="none"/><path d="M189 215.60000000000002 Q191 212.8 193 215.60000000000002" stroke="#6a4a58" stroke-width="0.9" fill="none"/><path d="M193 215.60000000000002 Q195 212.8 197 215.60000000000002" stroke="#6a4a58" stroke-width="0.9" fill="none"/><path d="M197 215.60000000000002 Q199 212.8 201 215.60000000000002" stroke="#6a4a58" stroke-width="0.9" fill="none"/><path d="M201 215.60000000000002 Q203 212.8 205 215.60000000000002" stroke="#6a4a58" stroke-width="0.9" fill="none"/><path d="M205 215.60000000000002 Q207 212.8 209 215.60000000000002" stroke="#6a4a58" stroke-width="0.9" fill="none"/><path d="M209 215.60000000000002 Q211 212.8 213 215.60000000000002" stroke="#6a4a58" stroke-width="0.9" fill="none"/><path d="M213 215.60000000000002 Q215 212.8 217 215.60000000000002" stroke="#6a4a58" stroke-width="0.9" fill="none"/><path d="M217 215.60000000000002 Q219 212.8 221 215.60000000000002" stroke="#6a4a58" stroke-width="0.9" fill="none"/><path d="M221 215.60000000000002 Q223 212.8 225 215.60000000000002" stroke="#6a4a58" stroke-width="0.9" fill="none"/><path d="M225 215.60000000000002 Q227 212.8 229 215.60000000000002" stroke="#6a4a58" stroke-width="0.9" fill="none"/><path d="M229 215.60000000000002 Q231 212.8 233 215.60000000000002" stroke="#6a4a58" stroke-width="0.9" fill="none"/><path d="M233 215.60000000000002 Q235 212.8 237 215.60000000000002" stroke="#6a4a58" stroke-width="0.9" fill="none"/><path d="M237 215.60000000000002 Q239 212.8 241 215.60000000000002" stroke="#6a4a58" stroke-width="0.9" fill="none"/><path d="M241 215.60000000000002 Q243 212.8 245 215.60000000000002" stroke="#6a4a58" stroke-width="0.9" fill="none"/><path d="M153 211.10000000000002 H247" stroke="#8fd4b8" stroke-width="0.6" opacity=".8"/><rect x="130" y="263.20000000000005" width="140" height="4.4" fill="#3d4264"/><rect x="130" y="264.0" width="140" height="2.8" fill="#e2ecf8"/><rect x="131.5" y="215.2" width="8" height="4.4" fill="#3d4264"/><rect x="131.5" y="216.0" width="8" height="2.8" fill="#e2ecf8"/><rect x="257.5" y="215.2" width="8" height="4.4" fill="#3d4264"/><rect x="257.5" y="216.0" width="8" height="2.8" fill="#e2ecf8"/><rect x="130.6" y="216.6" width="3.2" height="48.00000000000003" fill="#3d4264"/><rect x="131.3" y="218.6" width="1.8" height="2.2" fill="#e2ecf8"/><rect x="131.3" y="220.79999999999998" width="1.8" height="1.6" fill="#98afe0"/><rect x="131.3" y="222.6" width="1.8" height="2.2" fill="#e2ecf8"/><rect x="131.3" y="224.79999999999998" width="1.8" height="1.6" fill="#98afe0"/><rect x="131.3" y="226.6" width="1.8" height="2.2" fill="#e2ecf8"/><rect x="131.3" y="228.79999999999998" width="1.8" height="1.6" fill="#98afe0"/><rect x="131.3" y="230.6" width="1.8" height="2.2" fill="#e2ecf8"/><rect x="131.3" y="232.79999999999998" width="1.8" height="1.6" fill="#98afe0"/><rect x="131.3" y="234.6" width="1.8" height="2.2" fill="#e2ecf8"/><rect x="131.3" y="236.79999999999998" width="1.8" height="1.6" fill="#98afe0"/><rect x="131.3" y="238.6" width="1.8" height="2.2" fill="#e2ecf8"/><rect x="131.3" y="240.79999999999998" width="1.8" height="1.6" fill="#98afe0"/><rect x="131.3" y="242.6" width="1.8" height="2.2" fill="#e2ecf8"/><rect x="131.3" y="244.79999999999998" width="1.8" height="1.6" fill="#98afe0"/><rect x="131.3" y="246.6" width="1.8" height="2.2" fill="#e2ecf8"/><rect x="131.3" y="248.79999999999998" width="1.8" height="1.6" fill="#98afe0"/><rect x="131.3" y="250.6" width="1.8" height="2.2" fill="#e2ecf8"/><rect x="131.3" y="252.79999999999998" width="1.8" height="1.6" fill="#98afe0"/><rect x="131.3" y="254.6" width="1.8" height="2.2" fill="#e2ecf8"/><rect x="131.3" y="256.8" width="1.8" height="1.6" fill="#98afe0"/><rect x="131.3" y="258.6" width="1.8" height="2.2" fill="#e2ecf8"/><rect x="131.3" y="260.8" width="1.8" height="1.6" fill="#98afe0"/><rect x="266.6" y="216.6" width="3.2" height="48.00000000000003" fill="#3d4264"/><rect x="267.3" y="218.6" width="1.8" height="2.2" fill="#e2ecf8"/><rect x="267.3" y="220.79999999999998" width="1.8" height="1.6" fill="#98afe0"/><rect x="267.3" y="222.6" width="1.8" height="2.2" fill="#e2ecf8"/><rect x="267.3" y="224.79999999999998" width="1.8" height="1.6" fill="#98afe0"/><rect x="267.3" y="226.6" width="1.8" height="2.2" fill="#e2ecf8"/><rect x="267.3" y="228.79999999999998" width="1.8" height="1.6" fill="#98afe0"/><rect x="267.3" y="230.6" width="1.8" height="2.2" fill="#e2ecf8"/><rect x="267.3" y="232.79999999999998" width="1.8" height="1.6" fill="#98afe0"/><rect x="267.3" y="234.6" width="1.8" height="2.2" fill="#e2ecf8"/><rect x="267.3" y="236.79999999999998" width="1.8" height="1.6" fill="#98afe0"/><rect x="267.3" y="238.6" width="1.8" height="2.2" fill="#e2ecf8"/><rect x="267.3" y="240.79999999999998" width="1.8" height="1.6" fill="#98afe0"/><rect x="267.3" y="242.6" width="1.8" height="2.2" fill="#e2ecf8"/><rect x="267.3" y="244.79999999999998" width="1.8" height="1.6" fill="#98afe0"/><rect x="267.3" y="246.6" width="1.8" height="2.2" fill="#e2ecf8"/><rect x="267.3" y="248.79999999999998" width="1.8" height="1.6" fill="#98afe0"/><rect x="267.3" y="250.6" width="1.8" height="2.2" fill="#e2ecf8"/><rect x="267.3" y="252.79999999999998" width="1.8" height="1.6" fill="#98afe0"/><rect x="267.3" y="254.6" width="1.8" height="2.2" fill="#e2ecf8"/><rect x="267.3" y="256.8" width="1.8" height="1.6" fill="#98afe0"/><rect x="267.3" y="258.6" width="1.8" height="2.2" fill="#e2ecf8"/><rect x="267.3" y="260.8" width="1.8" height="1.6" fill="#98afe0"/><path d="M130.7 220.79999999999998 H134.8 V223.99999999999997 H131.9 Z" fill="#7f7f8b"/><path d="M129.5 221.79999999999998 V212.79999999999998 Q129.5 210.79999999999998 132.15 210.6 Q134.8 210.79999999999998 134.8 212.79999999999998 V221.79999999999998 Z" fill="#3d4264"/><path d="M130.3 220.79999999999998 V213.2 Q130.3 211.6 132.15 211.5 Q134.0 211.6 134.0 213.2 V220.79999999999998 Z" fill="#98afe0"/><rect x="130.4" y="212.2" width="3.5" height="1.6" fill="#e2ecf8"/><path d="M138.7 220.79999999999998 H142.8 V223.99999999999997 H139.9 Z" fill="#7f7f8b"/><path d="M137.5 221.79999999999998 V212.79999999999998 Q137.5 210.79999999999998 140.15 210.6 Q142.8 210.79999999999998 142.8 212.79999999999998 V221.79999999999998 Z" fill="#3d4264"/><path d="M138.3 220.79999999999998 V213.2 Q138.3 211.6 140.15 211.5 Q142.0 211.6 142.0 213.2 V220.79999999999998 Z" fill="#98afe0"/><rect x="138.4" y="212.2" width="3.5" height="1.6" fill="#e2ecf8"/><path d="M258.7 220.79999999999998 H262.8 V223.99999999999997 H259.9 Z" fill="#7f7f8b"/><path d="M257.5 221.79999999999998 V212.79999999999998 Q257.5 210.79999999999998 260.15 210.6 Q262.8 210.79999999999998 262.8 212.79999999999998 V221.79999999999998 Z" fill="#3d4264"/><path d="M258.3 220.79999999999998 V213.2 Q258.3 211.6 260.15 211.5 Q262.0 211.6 262.0 213.2 V220.79999999999998 Z" fill="#98afe0"/><rect x="258.4" y="212.2" width="3.5" height="1.6" fill="#e2ecf8"/><path d="M266.7 220.79999999999998 H270.8 V223.99999999999997 H267.9 Z" fill="#7f7f8b"/><path d="M265.5 221.79999999999998 V212.79999999999998 Q265.5 210.79999999999998 268.15 210.6 Q270.8 210.79999999999998 270.8 212.79999999999998 V221.79999999999998 Z" fill="#3d4264"/><path d="M266.3 220.79999999999998 V213.2 Q266.3 211.6 268.15 211.5 Q270.0 211.6 270.0 213.2 V220.79999999999998 Z" fill="#98afe0"/><rect x="266.4" y="212.2" width="3.5" height="1.6" fill="#e2ecf8"/><path d="M130.7 268.8 H134.8 V272.0 H131.9 Z" fill="#7f7f8b"/><path d="M129.5 269.8 V260.8 Q129.5 258.8 132.15 258.6 Q134.8 258.8 134.8 260.8 V269.8 Z" fill="#3d4264"/><path d="M130.3 268.8 V261.20000000000005 Q130.3 259.6 132.15 259.5 Q134.0 259.6 134.0 261.20000000000005 V268.8 Z" fill="#98afe0"/><rect x="130.4" y="260.20000000000005" width="3.5" height="1.6" fill="#e2ecf8"/><path d="M138.7 268.8 H142.8 V272.0 H139.9 Z" fill="#7f7f8b"/><path d="M137.5 269.8 V260.8 Q137.5 258.8 140.15 258.6 Q142.8 258.8 142.8 260.8 V269.8 Z" fill="#3d4264"/><path d="M138.3 268.8 V261.20000000000005 Q138.3 259.6 140.15 259.5 Q142.0 259.6 142.0 261.20000000000005 V268.8 Z" fill="#98afe0"/><rect x="138.4" y="260.20000000000005" width="3.5" height="1.6" fill="#e2ecf8"/><path d="M146.7 268.8 H150.8 V272.0 H147.9 Z" fill="#7f7f8b"/><path d="M145.5 269.8 V260.8 Q145.5 258.8 148.15 258.6 Q150.8 258.8 150.8 260.8 V269.8 Z" fill="#3d4264"/><path d="M146.3 268.8 V261.20000000000005 Q146.3 259.6 148.15 259.5 Q150.0 259.6 150.0 261.20000000000005 V268.8 Z" fill="#98afe0"/><rect x="146.4" y="260.20000000000005" width="3.5" height="1.6" fill="#e2ecf8"/><path d="M154.7 268.8 H158.8 V272.0 H155.9 Z" fill="#7f7f8b"/><path d="M153.5 269.8 V260.8 Q153.5 258.8 156.15 258.6 Q158.8 258.8 158.8 260.8 V269.8 Z" fill="#3d4264"/><path d="M154.3 268.8 V261.20000000000005 Q154.3 259.6 156.15 259.5 Q158.0 259.6 158.0 261.20000000000005 V268.8 Z" fill="#98afe0"/><rect x="154.4" y="260.20000000000005" width="3.5" height="1.6" fill="#e2ecf8"/><path d="M162.7 268.8 H166.8 V272.0 H163.9 Z" fill="#7f7f8b"/><path d="M161.5 269.8 V260.8 Q161.5 258.8 164.15 258.6 Q166.8 258.8 166.8 260.8 V269.8 Z" fill="#3d4264"/><path d="M162.3 268.8 V261.20000000000005 Q162.3 259.6 164.15 259.5 Q166.0 259.6 166.0 261.20000000000005 V268.8 Z" fill="#98afe0"/><rect x="162.4" y="260.20000000000005" width="3.5" height="1.6" fill="#e2ecf8"/><path d="M170.7 268.8 H174.8 V272.0 H171.9 Z" fill="#7f7f8b"/><path d="M169.5 269.8 V260.8 Q169.5 258.8 172.15 258.6 Q174.8 258.8 174.8 260.8 V269.8 Z" fill="#3d4264"/><path d="M170.3 268.8 V261.20000000000005 Q170.3 259.6 172.15 259.5 Q174.0 259.6 174.0 261.20000000000005 V268.8 Z" fill="#98afe0"/><rect x="170.4" y="260.20000000000005" width="3.5" height="1.6" fill="#e2ecf8"/><path d="M178.7 268.8 H182.8 V272.0 H179.9 Z" fill="#7f7f8b"/><path d="M177.5 269.8 V260.8 Q177.5 258.8 180.15 258.6 Q182.8 258.8 182.8 260.8 V269.8 Z" fill="#3d4264"/><path d="M178.3 268.8 V261.20000000000005 Q178.3 259.6 180.15 259.5 Q182.0 259.6 182.0 261.20000000000005 V268.8 Z" fill="#98afe0"/><rect x="178.4" y="260.20000000000005" width="3.5" height="1.6" fill="#e2ecf8"/><path d="M186.7 268.8 H190.8 V272.0 H187.9 Z" fill="#7f7f8b"/><path d="M185.5 269.8 V260.8 Q185.5 258.8 188.15 258.6 Q190.8 258.8 190.8 260.8 V269.8 Z" fill="#3d4264"/><path d="M186.3 268.8 V261.20000000000005 Q186.3 259.6 188.15 259.5 Q190.0 259.6 190.0 261.20000000000005 V268.8 Z" fill="#98afe0"/><rect x="186.4" y="260.20000000000005" width="3.5" height="1.6" fill="#e2ecf8"/><path d="M194.7 268.8 H198.8 V272.0 H195.9 Z" fill="#7f7f8b"/><path d="M193.5 269.8 V260.8 Q193.5 258.8 196.15 258.6 Q198.8 258.8 198.8 260.8 V269.8 Z" fill="#3d4264"/><path d="M194.3 268.8 V261.20000000000005 Q194.3 259.6 196.15 259.5 Q198.0 259.6 198.0 261.20000000000005 V268.8 Z" fill="#98afe0"/><rect x="194.4" y="260.20000000000005" width="3.5" height="1.6" fill="#e2ecf8"/><path d="M202.7 268.8 H206.8 V272.0 H203.9 Z" fill="#7f7f8b"/><path d="M201.5 269.8 V260.8 Q201.5 258.8 204.15 258.6 Q206.8 258.8 206.8 260.8 V269.8 Z" fill="#3d4264"/><path d="M202.3 268.8 V261.20000000000005 Q202.3 259.6 204.15 259.5 Q206.0 259.6 206.0 261.20000000000005 V268.8 Z" fill="#98afe0"/><rect x="202.4" y="260.20000000000005" width="3.5" height="1.6" fill="#e2ecf8"/><path d="M210.7 268.8 H214.8 V272.0 H211.9 Z" fill="#7f7f8b"/><path d="M209.5 269.8 V260.8 Q209.5 258.8 212.15 258.6 Q214.8 258.8 214.8 260.8 V269.8 Z" fill="#3d4264"/><path d="M210.3 268.8 V261.20000000000005 Q210.3 259.6 212.15 259.5 Q214.0 259.6 214.0 261.20000000000005 V268.8 Z" fill="#98afe0"/><rect x="210.4" y="260.20000000000005" width="3.5" height="1.6" fill="#e2ecf8"/><path d="M218.7 268.8 H222.8 V272.0 H219.9 Z" fill="#7f7f8b"/><path d="M217.5 269.8 V260.8 Q217.5 258.8 220.15 258.6 Q222.8 258.8 222.8 260.8 V269.8 Z" fill="#3d4264"/><path d="M218.3 268.8 V261.20000000000005 Q218.3 259.6 220.15 259.5 Q222.0 259.6 222.0 261.20000000000005 V268.8 Z" fill="#98afe0"/><rect x="218.4" y="260.20000000000005" width="3.5" height="1.6" fill="#e2ecf8"/><path d="M226.7 268.8 H230.8 V272.0 H227.9 Z" fill="#7f7f8b"/><path d="M225.5 269.8 V260.8 Q225.5 258.8 228.15 258.6 Q230.8 258.8 230.8 260.8 V269.8 Z" fill="#3d4264"/><path d="M226.3 268.8 V261.20000000000005 Q226.3 259.6 228.15 259.5 Q230.0 259.6 230.0 261.20000000000005 V268.8 Z" fill="#98afe0"/><rect x="226.4" y="260.20000000000005" width="3.5" height="1.6" fill="#e2ecf8"/><path d="M234.7 268.8 H238.8 V272.0 H235.9 Z" fill="#7f7f8b"/><path d="M233.5 269.8 V260.8 Q233.5 258.8 236.15 258.6 Q238.8 258.8 238.8 260.8 V269.8 Z" fill="#3d4264"/><path d="M234.3 268.8 V261.20000000000005 Q234.3 259.6 236.15 259.5 Q238.0 259.6 238.0 261.20000000000005 V268.8 Z" fill="#98afe0"/><rect x="234.4" y="260.20000000000005" width="3.5" height="1.6" fill="#e2ecf8"/><path d="M242.7 268.8 H246.8 V272.0 H243.9 Z" fill="#7f7f8b"/><path d="M241.5 269.8 V260.8 Q241.5 258.8 244.15 258.6 Q246.8 258.8 246.8 260.8 V269.8 Z" fill="#3d4264"/><path d="M242.3 268.8 V261.20000000000005 Q242.3 259.6 244.15 259.5 Q246.0 259.6 246.0 261.20000000000005 V268.8 Z" fill="#98afe0"/><rect x="242.4" y="260.20000000000005" width="3.5" height="1.6" fill="#e2ecf8"/><path d="M250.7 268.8 H254.8 V272.0 H251.9 Z" fill="#7f7f8b"/><path d="M249.5 269.8 V260.8 Q249.5 258.8 252.15 258.6 Q254.8 258.8 254.8 260.8 V269.8 Z" fill="#3d4264"/><path d="M250.3 268.8 V261.20000000000005 Q250.3 259.6 252.15 259.5 Q254.0 259.6 254.0 261.20000000000005 V268.8 Z" fill="#98afe0"/><rect x="250.4" y="260.20000000000005" width="3.5" height="1.6" fill="#e2ecf8"/><path d="M258.7 268.8 H262.8 V272.0 H259.9 Z" fill="#7f7f8b"/><path d="M257.5 269.8 V260.8 Q257.5 258.8 260.15 258.6 Q262.8 258.8 262.8 260.8 V269.8 Z" fill="#3d4264"/><path d="M258.3 268.8 V261.20000000000005 Q258.3 259.6 260.15 259.5 Q262.0 259.6 262.0 261.20000000000005 V268.8 Z" fill="#98afe0"/><rect x="258.4" y="260.20000000000005" width="3.5" height="1.6" fill="#e2ecf8"/><path d="M266.7 268.8 H270.8 V272.0 H267.9 Z" fill="#7f7f8b"/><path d="M265.5 269.8 V260.8 Q265.5 258.8 268.15 258.6 Q270.8 258.8 270.8 260.8 V269.8 Z" fill="#3d4264"/><path d="M266.3 268.8 V261.20000000000005 Q266.3 259.6 268.15 259.5 Q270.0 259.6 270.0 261.20000000000005 V268.8 Z" fill="#98afe0"/><rect x="266.4" y="260.20000000000005" width="3.5" height="1.6" fill="#e2ecf8"/><path d="M64.74 251.34 Q64.52 249.04 65.40 247.89 Q66.28 246.74 67.60 246.51 Q68.92 246.28 69.80 244.90 Q70.68 243.52 72.00 242.60 Q73.32 241.68 74.64 241.91 Q75.96 242.14 77.06 243.29 Q78.16 244.44 78.82 246.28 Q79.48 248.12 79.48 250.42 Q79.48 252.72 78.38 254.10 Q77.28 255.48 75.08 255.71 Q72.88 255.94 70.68 255.71 Q68.48 255.48 66.72 254.56 Q64.96 253.64 64.74 251.34Z" fill="#5f4252"/><path d="M66.06 250.88 Q65.84 249.50 66.72 248.72 Q67.60 247.94 68.70 247.57 Q69.80 247.20 70.68 245.82 Q71.56 244.44 72.66 243.75 Q73.76 243.06 74.86 243.29 Q75.96 243.52 76.71 244.67 Q77.46 245.82 77.81 247.43 Q78.16 249.04 78.07 250.65 Q77.98 252.26 76.97 253.32 Q75.96 254.38 74.20 254.56 Q72.44 254.74 70.68 254.56 Q68.92 254.38 67.60 253.32 Q66.28 252.26 66.06 250.88Z" fill="#a98078"/><path d="M67.38 250.56 Q67.16 249.50 68.04 249.04 Q68.92 248.58 69.80 248.35 Q70.68 248.12 71.56 246.74 Q72.44 245.36 73.32 244.81 Q74.20 244.26 75.08 244.72 Q75.96 245.18 76.27 246.65 Q76.58 248.12 76.40 249.73 Q76.22 251.34 74.77 252.03 Q73.32 252.72 71.78 252.63 Q70.24 252.54 68.92 252.08 Q67.60 251.62 67.38 250.56Z" fill="#dcb6a4"/><path d="M71.56 249.27 Q71.12 248.12 72.22 246.51 Q73.32 244.90 74.20 245.13 Q75.08 245.36 75.08 246.97 Q75.08 248.58 74.42 249.73 Q73.76 250.88 72.88 250.65 Q72.00 250.42 71.56 249.27Z" fill="#ecd8ce"/><path d="M80.74 250.42 Q80.96 248.12 82.06 246.51 Q83.16 244.90 84.70 243.98 Q86.24 243.06 87.56 241.91 Q88.88 240.76 89.76 240.99 Q90.64 241.22 91.74 242.60 Q92.84 243.98 93.72 246.05 Q94.60 248.12 95.26 249.04 Q95.92 249.96 95.92 252.03 Q95.92 254.10 94.16 255.02 Q92.40 255.94 90.20 255.94 Q88.00 255.94 85.80 255.48 Q83.60 255.02 82.06 253.87 Q80.52 252.72 80.74 250.42Z" fill="#5f4252"/><path d="M82.06 250.19 Q82.28 248.58 83.16 247.20 Q84.04 245.82 85.36 244.90 Q86.68 243.98 87.87 243.06 Q89.06 242.14 89.85 242.28 Q90.64 242.42 91.52 243.66 Q92.40 244.90 93.06 246.74 Q93.72 248.58 94.16 249.73 Q94.60 250.88 94.38 252.03 Q94.16 253.18 92.84 253.87 Q91.52 254.56 89.76 254.65 Q88.00 254.74 86.24 254.42 Q84.48 254.10 83.16 252.95 Q81.84 251.80 82.06 250.19Z" fill="#a98078"/><path d="M84.04 249.50 Q84.04 248.12 85.14 246.65 Q86.24 245.18 87.69 244.26 Q89.14 243.34 90.16 244.12 Q91.17 244.90 91.56 246.51 Q91.96 248.12 91.65 249.73 Q91.34 251.34 89.89 252.03 Q88.44 252.72 87.12 252.49 Q85.80 252.26 84.92 251.57 Q84.04 250.88 84.04 249.50Z" fill="#dcb6a4"/><path d="M85.80 248.58 Q85.80 247.20 87.12 245.59 Q88.44 243.98 89.32 244.44 Q90.20 244.90 89.76 246.51 Q89.32 248.12 88.22 249.27 Q87.12 250.42 86.46 250.19 Q85.80 249.96 85.80 248.58Z" fill="#ecd8ce"/><path d="M304.74 251.34 Q304.52 249.04 305.40 247.89 Q306.28 246.74 307.60 246.51 Q308.92 246.28 309.80 244.90 Q310.68 243.52 312.00 242.60 Q313.32 241.68 314.64 241.91 Q315.96 242.14 317.06 243.29 Q318.16 244.44 318.82 246.28 Q319.48 248.12 319.48 250.42 Q319.48 252.72 318.38 254.10 Q317.28 255.48 315.08 255.71 Q312.88 255.94 310.68 255.71 Q308.48 255.48 306.72 254.56 Q304.96 253.64 304.74 251.34Z" fill="#5f4252"/><path d="M306.06 250.88 Q305.84 249.50 306.72 248.72 Q307.60 247.94 308.70 247.57 Q309.80 247.20 310.68 245.82 Q311.56 244.44 312.66 243.75 Q313.76 243.06 314.86 243.29 Q315.96 243.52 316.71 244.67 Q317.46 245.82 317.81 247.43 Q318.16 249.04 318.07 250.65 Q317.98 252.26 316.97 253.32 Q315.96 254.38 314.20 254.56 Q312.44 254.74 310.68 254.56 Q308.92 254.38 307.60 253.32 Q306.28 252.26 306.06 250.88Z" fill="#a98078"/><path d="M307.38 250.56 Q307.16 249.50 308.04 249.04 Q308.92 248.58 309.80 248.35 Q310.68 248.12 311.56 246.74 Q312.44 245.36 313.32 244.81 Q314.20 244.26 315.08 244.72 Q315.96 245.18 316.27 246.65 Q316.58 248.12 316.40 249.73 Q316.22 251.34 314.77 252.03 Q313.32 252.72 311.78 252.63 Q310.24 252.54 308.92 252.08 Q307.60 251.62 307.38 250.56Z" fill="#dcb6a4"/><path d="M311.56 249.27 Q311.12 248.12 312.22 246.51 Q313.32 244.90 314.20 245.13 Q315.08 245.36 315.08 246.97 Q315.08 248.58 314.42 249.73 Q313.76 250.88 312.88 250.65 Q312.00 250.42 311.56 249.27Z" fill="#ecd8ce"/><path d="M320.74 250.42 Q320.96 248.12 322.06 246.51 Q323.16 244.90 324.70 243.98 Q326.24 243.06 327.56 241.91 Q328.88 240.76 329.76 240.99 Q330.64 241.22 331.74 242.60 Q332.84 243.98 333.72 246.05 Q334.60 248.12 335.26 249.04 Q335.92 249.96 335.92 252.03 Q335.92 254.10 334.16 255.02 Q332.40 255.94 330.20 255.94 Q328.00 255.94 325.80 255.48 Q323.60 255.02 322.06 253.87 Q320.52 252.72 320.74 250.42Z" fill="#5f4252"/><path d="M322.06 250.19 Q322.28 248.58 323.16 247.20 Q324.04 245.82 325.36 244.90 Q326.68 243.98 327.87 243.06 Q329.06 242.14 329.85 242.28 Q330.64 242.42 331.52 243.66 Q332.40 244.90 333.06 246.74 Q333.72 248.58 334.16 249.73 Q334.60 250.88 334.38 252.03 Q334.16 253.18 332.84 253.87 Q331.52 254.56 329.76 254.65 Q328.00 254.74 326.24 254.42 Q324.48 254.10 323.16 252.95 Q321.84 251.80 322.06 250.19Z" fill="#a98078"/><path d="M324.04 249.50 Q324.04 248.12 325.14 246.65 Q326.24 245.18 327.69 244.26 Q329.14 243.34 330.16 244.12 Q331.17 244.90 331.56 246.51 Q331.96 248.12 331.65 249.73 Q331.34 251.34 329.89 252.03 Q328.44 252.72 327.12 252.49 Q325.80 252.26 324.92 251.57 Q324.04 250.88 324.04 249.50Z" fill="#dcb6a4"/><path d="M325.80 248.58 Q325.80 247.20 327.12 245.59 Q328.44 243.98 329.32 244.44 Q330.20 244.90 329.76 246.51 Q329.32 248.12 328.22 249.27 Q327.12 250.42 326.46 250.19 Q325.80 249.96 325.80 248.58Z" fill="#ecd8ce"/><polygon points="68.00,289.60 76.00,289.60 78.00,290.60 79.20,292.50 80.00,294.00 80.00,315.50 79.00,317.50 77.00,318.80 67.00,318.80 65.00,317.50 64.00,315.50 64.00,294.00 64.80,292.50 66.00,290.60" fill="#5e4252"/><polygon points="68.50,290.60 75.50,290.60 77.50,291.60 78.80,294.00 79.00,315.00 77.00,317.40 67.00,317.40 65.00,315.00 65.20,294.00 66.50,291.60" fill="#a27a76"/><polygon points="69.00,291.30 75.00,291.30 77.00,292.80 77.60,295.00 77.40,301.00 76.20,303.50 74.50,304.60 69.50,304.60 67.80,303.50 66.60,301.00 66.40,295.00 67.00,292.80" fill="#a6dcc8"/><polygon points="69.30,292.00 74.70,292.00 76.40,293.30 76.80,295.30 76.60,300.80 75.60,302.80 74.20,303.80 69.80,303.80 68.40,302.80 67.40,300.80 67.20,295.30 67.60,293.30" fill="#41b282"/><path d="M67 308h3v1h-3zM73 307h2v1h-2zM76 310h2v1.2h-2zM69 311.5h3v1h-3zM66.5 314h2v1h-2z" fill="#6e5060"/><path d="M68 309h3v2h-3zM74 312h3v2h-3z" fill="#b88c84"/><path d="M66 316 L69 314.5 L71 315.5 L73 313.5 L75 315 L78 314.5 L78 317.5 L76 318.4 H68 L66 317.5Z" fill="#5e4252"/><polygon points="84.00,289.60 92.00,289.60 94.00,290.60 95.20,292.50 96.00,294.00 96.00,315.50 95.00,317.50 93.00,318.80 83.00,318.80 81.00,317.50 80.00,315.50 80.00,294.00 80.80,292.50 82.00,290.60" fill="#5e4252"/><polygon points="84.50,290.60 91.50,290.60 93.50,291.60 94.80,294.00 95.00,315.00 93.00,317.40 83.00,317.40 81.00,315.00 81.20,294.00 82.50,291.60" fill="#a27a76"/><polygon points="85.00,291.30 91.00,291.30 93.00,292.80 93.60,295.00 93.40,301.00 92.20,303.50 90.50,304.60 85.50,304.60 83.80,303.50 82.60,301.00 82.40,295.00 83.00,292.80" fill="#a6dcc8"/><polygon points="85.30,292.00 90.70,292.00 92.40,293.30 92.80,295.30 92.60,300.80 91.60,302.80 90.20,303.80 85.80,303.80 84.40,302.80 83.40,300.80 83.20,295.30 83.60,293.30" fill="#41b282"/><path d="M83 308h3v1h-3zM89 307h2v1h-2zM92 310h2v1.2h-2zM85 311.5h3v1h-3zM82.5 314h2v1h-2z" fill="#6e5060"/><path d="M84 309h3v2h-3zM90 312h3v2h-3z" fill="#b88c84"/><path d="M82 316 L85 314.5 L87 315.5 L89 313.5 L91 315 L94 314.5 L94 317.5 L92 318.4 H84 L82 317.5Z" fill="#5e4252"/><polygon points="308.00,289.60 316.00,289.60 318.00,290.60 319.20,292.50 320.00,294.00 320.00,315.50 319.00,317.50 317.00,318.80 307.00,318.80 305.00,317.50 304.00,315.50 304.00,294.00 304.80,292.50 306.00,290.60" fill="#5e4252"/><polygon points="308.50,290.60 315.50,290.60 317.50,291.60 318.80,294.00 319.00,315.00 317.00,317.40 307.00,317.40 305.00,315.00 305.20,294.00 306.50,291.60" fill="#a27a76"/><polygon points="309.00,291.30 315.00,291.30 317.00,292.80 317.60,295.00 317.40,301.00 316.20,303.50 314.50,304.60 309.50,304.60 307.80,303.50 306.60,301.00 306.40,295.00 307.00,292.80" fill="#a6dcc8"/><polygon points="309.30,292.00 314.70,292.00 316.40,293.30 316.80,295.30 316.60,300.80 315.60,302.80 314.20,303.80 309.80,303.80 308.40,302.80 307.40,300.80 307.20,295.30 307.60,293.30" fill="#41b282"/><path d="M307 308h3v1h-3zM313 307h2v1h-2zM316 310h2v1.2h-2zM309 311.5h3v1h-3zM306.5 314h2v1h-2z" fill="#6e5060"/><path d="M308 309h3v2h-3zM314 312h3v2h-3z" fill="#b88c84"/><path d="M306 316 L309 314.5 L311 315.5 L313 313.5 L315 315 L318 314.5 L318 317.5 L316 318.4 H308 L306 317.5Z" fill="#5e4252"/><polygon points="324.00,289.60 332.00,289.60 334.00,290.60 335.20,292.50 336.00,294.00 336.00,315.50 335.00,317.50 333.00,318.80 323.00,318.80 321.00,317.50 320.00,315.50 320.00,294.00 320.80,292.50 322.00,290.60" fill="#5e4252"/><polygon points="324.50,290.60 331.50,290.60 333.50,291.60 334.80,294.00 335.00,315.00 333.00,317.40 323.00,317.40 321.00,315.00 321.20,294.00 322.50,291.60" fill="#a27a76"/><polygon points="325.00,291.30 331.00,291.30 333.00,292.80 333.60,295.00 333.40,301.00 332.20,303.50 330.50,304.60 325.50,304.60 323.80,303.50 322.60,301.00 322.40,295.00 323.00,292.80" fill="#a6dcc8"/><polygon points="325.30,292.00 330.70,292.00 332.40,293.30 332.80,295.30 332.60,300.80 331.60,302.80 330.20,303.80 325.80,303.80 324.40,302.80 323.40,300.80 323.20,295.30 323.60,293.30" fill="#41b282"/><path d="M323 308h3v1h-3zM329 307h2v1h-2zM332 310h2v1.2h-2zM325 311.5h3v1h-3zM322.5 314h2v1h-2z" fill="#6e5060"/><path d="M324 309h3v2h-3zM330 312h3v2h-3z" fill="#b88c84"/><path d="M322 316 L325 314.5 L327 315.5 L329 313.5 L331 315 L334 314.5 L334 317.5 L332 318.4 H324 L322 317.5Z" fill="#5e4252"/><path d="M64.74 331.34 Q64.52 329.04 65.40 327.89 Q66.28 326.74 67.60 326.51 Q68.92 326.28 69.80 324.90 Q70.68 323.52 72.00 322.60 Q73.32 321.68 74.64 321.91 Q75.96 322.14 77.06 323.29 Q78.16 324.44 78.82 326.28 Q79.48 328.12 79.48 330.42 Q79.48 332.72 78.38 334.10 Q77.28 335.48 75.08 335.71 Q72.88 335.94 70.68 335.71 Q68.48 335.48 66.72 334.56 Q64.96 333.64 64.74 331.34Z" fill="#5f4252"/><path d="M66.06 330.88 Q65.84 329.50 66.72 328.72 Q67.60 327.94 68.70 327.57 Q69.80 327.20 70.68 325.82 Q71.56 324.44 72.66 323.75 Q73.76 323.06 74.86 323.29 Q75.96 323.52 76.71 324.67 Q77.46 325.82 77.81 327.43 Q78.16 329.04 78.07 330.65 Q77.98 332.26 76.97 333.32 Q75.96 334.38 74.20 334.56 Q72.44 334.74 70.68 334.56 Q68.92 334.38 67.60 333.32 Q66.28 332.26 66.06 330.88Z" fill="#a98078"/><path d="M67.38 330.56 Q67.16 329.50 68.04 329.04 Q68.92 328.58 69.80 328.35 Q70.68 328.12 71.56 326.74 Q72.44 325.36 73.32 324.81 Q74.20 324.26 75.08 324.72 Q75.96 325.18 76.27 326.65 Q76.58 328.12 76.40 329.73 Q76.22 331.34 74.77 332.03 Q73.32 332.72 71.78 332.63 Q70.24 332.54 68.92 332.08 Q67.60 331.62 67.38 330.56Z" fill="#dcb6a4"/><path d="M71.56 329.27 Q71.12 328.12 72.22 326.51 Q73.32 324.90 74.20 325.13 Q75.08 325.36 75.08 326.97 Q75.08 328.58 74.42 329.73 Q73.76 330.88 72.88 330.65 Q72.00 330.42 71.56 329.27Z" fill="#ecd8ce"/><path d="M80.74 330.42 Q80.96 328.12 82.06 326.51 Q83.16 324.90 84.70 323.98 Q86.24 323.06 87.56 321.91 Q88.88 320.76 89.76 320.99 Q90.64 321.22 91.74 322.60 Q92.84 323.98 93.72 326.05 Q94.60 328.12 95.26 329.04 Q95.92 329.96 95.92 332.03 Q95.92 334.10 94.16 335.02 Q92.40 335.94 90.20 335.94 Q88.00 335.94 85.80 335.48 Q83.60 335.02 82.06 333.87 Q80.52 332.72 80.74 330.42Z" fill="#5f4252"/><path d="M82.06 330.19 Q82.28 328.58 83.16 327.20 Q84.04 325.82 85.36 324.90 Q86.68 323.98 87.87 323.06 Q89.06 322.14 89.85 322.28 Q90.64 322.42 91.52 323.66 Q92.40 324.90 93.06 326.74 Q93.72 328.58 94.16 329.73 Q94.60 330.88 94.38 332.03 Q94.16 333.18 92.84 333.87 Q91.52 334.56 89.76 334.65 Q88.00 334.74 86.24 334.42 Q84.48 334.10 83.16 332.95 Q81.84 331.80 82.06 330.19Z" fill="#a98078"/><path d="M84.04 329.50 Q84.04 328.12 85.14 326.65 Q86.24 325.18 87.69 324.26 Q89.14 323.34 90.16 324.12 Q91.17 324.90 91.56 326.51 Q91.96 328.12 91.65 329.73 Q91.34 331.34 89.89 332.03 Q88.44 332.72 87.12 332.49 Q85.80 332.26 84.92 331.57 Q84.04 330.88 84.04 329.50Z" fill="#dcb6a4"/><path d="M85.80 328.58 Q85.80 327.20 87.12 325.59 Q88.44 323.98 89.32 324.44 Q90.20 324.90 89.76 326.51 Q89.32 328.12 88.22 329.27 Q87.12 330.42 86.46 330.19 Q85.80 329.96 85.80 328.58Z" fill="#ecd8ce"/><path d="M304.74 330.42 Q304.96 328.12 306.06 326.51 Q307.16 324.90 308.70 323.98 Q310.24 323.06 311.56 321.91 Q312.88 320.76 313.76 320.99 Q314.64 321.22 315.74 322.60 Q316.84 323.98 317.72 326.05 Q318.60 328.12 319.26 329.04 Q319.92 329.96 319.92 332.03 Q319.92 334.10 318.16 335.02 Q316.40 335.94 314.20 335.94 Q312.00 335.94 309.80 335.48 Q307.60 335.02 306.06 333.87 Q304.52 332.72 304.74 330.42Z" fill="#5f4252"/><path d="M306.06 330.19 Q306.28 328.58 307.16 327.20 Q308.04 325.82 309.36 324.90 Q310.68 323.98 311.87 323.06 Q313.06 322.14 313.85 322.28 Q314.64 322.42 315.52 323.66 Q316.40 324.90 317.06 326.74 Q317.72 328.58 318.16 329.73 Q318.60 330.88 318.38 332.03 Q318.16 333.18 316.84 333.87 Q315.52 334.56 313.76 334.65 Q312.00 334.74 310.24 334.42 Q308.48 334.10 307.16 332.95 Q305.84 331.80 306.06 330.19Z" fill="#a98078"/><path d="M308.04 329.50 Q308.04 328.12 309.14 326.65 Q310.24 325.18 311.69 324.26 Q313.14 323.34 314.16 324.12 Q315.17 324.90 315.56 326.51 Q315.96 328.12 315.65 329.73 Q315.34 331.34 313.89 332.03 Q312.44 332.72 311.12 332.49 Q309.80 332.26 308.92 331.57 Q308.04 330.88 308.04 329.50Z" fill="#dcb6a4"/><path d="M309.80 328.58 Q309.80 327.20 311.12 325.59 Q312.44 323.98 313.32 324.44 Q314.20 324.90 313.76 326.51 Q313.32 328.12 312.22 329.27 Q311.12 330.42 310.46 330.19 Q309.80 329.96 309.80 328.58Z" fill="#ecd8ce"/><path d="M320.74 331.34 Q320.52 329.04 321.40 327.89 Q322.28 326.74 323.60 326.51 Q324.92 326.28 325.80 324.90 Q326.68 323.52 328.00 322.60 Q329.32 321.68 330.64 321.91 Q331.96 322.14 333.06 323.29 Q334.16 324.44 334.82 326.28 Q335.48 328.12 335.48 330.42 Q335.48 332.72 334.38 334.10 Q333.28 335.48 331.08 335.71 Q328.88 335.94 326.68 335.71 Q324.48 335.48 322.72 334.56 Q320.96 333.64 320.74 331.34Z" fill="#5f4252"/><path d="M322.06 330.88 Q321.84 329.50 322.72 328.72 Q323.60 327.94 324.70 327.57 Q325.80 327.20 326.68 325.82 Q327.56 324.44 328.66 323.75 Q329.76 323.06 330.86 323.29 Q331.96 323.52 332.71 324.67 Q333.46 325.82 333.81 327.43 Q334.16 329.04 334.07 330.65 Q333.98 332.26 332.97 333.32 Q331.96 334.38 330.20 334.56 Q328.44 334.74 326.68 334.56 Q324.92 334.38 323.60 333.32 Q322.28 332.26 322.06 330.88Z" fill="#a98078"/><path d="M323.38 330.56 Q323.16 329.50 324.04 329.04 Q324.92 328.58 325.80 328.35 Q326.68 328.12 327.56 326.74 Q328.44 325.36 329.32 324.81 Q330.20 324.26 331.08 324.72 Q331.96 325.18 332.27 326.65 Q332.58 328.12 332.40 329.73 Q332.22 331.34 330.77 332.03 Q329.32 332.72 327.78 332.63 Q326.24 332.54 324.92 332.08 Q323.60 331.62 323.38 330.56Z" fill="#dcb6a4"/><path d="M327.56 329.27 Q327.12 328.12 328.22 326.51 Q329.32 324.90 330.20 325.13 Q331.08 325.36 331.08 326.97 Q331.08 328.58 330.42 329.73 Q329.76 330.88 328.88 330.65 Q328.00 330.42 327.56 329.27Z" fill="#ecd8ce"/><rect x="161.5" y="311.20000000000005" width="60.5" height="4.6" fill="#5e4252"/><rect x="161.5" y="312.00000000000006" width="60.5" height="3" fill="#85605a"/><rect x="161.5" y="312.20000000000005" width="60.5" height="0.9" fill="#a27870"/><rect x="161.5" y="359.20000000000005" width="60.5" height="4.6" fill="#5e4252"/><rect x="161.5" y="360.00000000000006" width="60.5" height="3" fill="#85605a"/><rect x="161.5" y="360.20000000000005" width="60.5" height="0.9" fill="#a27870"/><path d="M170.15 316.6 H174.95 V320.1 H171.75 Z" fill="#82828e"/><path d="M170.15 306.6 H174.15 L174.95 307.40000000000003 V317.8 H169.35 V307.40000000000003 Z" fill="#5e4252"/><rect x="170.15" y="310.6" width="4" height="5.999999999999999" fill="#85605a"/><rect x="170.65" y="310.8" width="0.6" height="3" fill="#a27870"/><rect x="173.04999999999998" y="310.8" width="0.6" height="3" fill="#a27870"/><path d="M170.95000000000002 306.90000000000003 H173.35 L174.15 307.70000000000005 V310.3 L173.35 311.1 H170.95000000000002 L170.15 310.3 V307.70000000000005 Z" fill="#e4bea4"/><rect x="171.45000000000002" y="308.3" width="1.6" height="1.6" fill="#cfa592"/><path d="M170.15 364.6 H174.95 V368.1 H171.75 Z" fill="#82828e"/><path d="M170.15 354.6 H174.15 L174.95 355.40000000000003 V365.8 H169.35 V355.40000000000003 Z" fill="#5e4252"/><rect x="170.15" y="358.6" width="4" height="5.999999999999999" fill="#85605a"/><rect x="170.65" y="358.8" width="0.6" height="3" fill="#a27870"/><rect x="173.04999999999998" y="358.8" width="0.6" height="3" fill="#a27870"/><path d="M170.95000000000002 354.90000000000003 H173.35 L174.15 355.70000000000005 V358.3 L173.35 359.1 H170.95000000000002 L170.15 358.3 V355.70000000000005 Z" fill="#e4bea4"/><rect x="171.45000000000002" y="356.3" width="1.6" height="1.6" fill="#cfa592"/><path d="M178.15 316.6 H182.95 V320.1 H179.75 Z" fill="#82828e"/><path d="M178.15 306.6 H182.15 L182.95 307.40000000000003 V317.8 H177.35 V307.40000000000003 Z" fill="#5e4252"/><rect x="178.15" y="310.6" width="4" height="5.999999999999999" fill="#85605a"/><rect x="178.65" y="310.8" width="0.6" height="3" fill="#a27870"/><rect x="181.04999999999998" y="310.8" width="0.6" height="3" fill="#a27870"/><path d="M178.95000000000002 306.90000000000003 H181.35 L182.15 307.70000000000005 V310.3 L181.35 311.1 H178.95000000000002 L178.15 310.3 V307.70000000000005 Z" fill="#e4bea4"/><rect x="179.45000000000002" y="308.3" width="1.6" height="1.6" fill="#cfa592"/><path d="M178.15 364.6 H182.95 V368.1 H179.75 Z" fill="#82828e"/><path d="M178.15 354.6 H182.15 L182.95 355.40000000000003 V365.8 H177.35 V355.40000000000003 Z" fill="#5e4252"/><rect x="178.15" y="358.6" width="4" height="5.999999999999999" fill="#85605a"/><rect x="178.65" y="358.8" width="0.6" height="3" fill="#a27870"/><rect x="181.04999999999998" y="358.8" width="0.6" height="3" fill="#a27870"/><path d="M178.95000000000002 354.90000000000003 H181.35 L182.15 355.70000000000005 V358.3 L181.35 359.1 H178.95000000000002 L178.15 358.3 V355.70000000000005 Z" fill="#e4bea4"/><rect x="179.45000000000002" y="356.3" width="1.6" height="1.6" fill="#cfa592"/><path d="M186.15 316.6 H190.95 V320.1 H187.75 Z" fill="#82828e"/><path d="M186.15 306.6 H190.15 L190.95 307.40000000000003 V317.8 H185.35 V307.40000000000003 Z" fill="#5e4252"/><rect x="186.15" y="310.6" width="4" height="5.999999999999999" fill="#85605a"/><rect x="186.65" y="310.8" width="0.6" height="3" fill="#a27870"/><rect x="189.04999999999998" y="310.8" width="0.6" height="3" fill="#a27870"/><path d="M186.95000000000002 306.90000000000003 H189.35 L190.15 307.70000000000005 V310.3 L189.35 311.1 H186.95000000000002 L186.15 310.3 V307.70000000000005 Z" fill="#e4bea4"/><rect x="187.45000000000002" y="308.3" width="1.6" height="1.6" fill="#cfa592"/><path d="M186.15 364.6 H190.95 V368.1 H187.75 Z" fill="#82828e"/><path d="M186.15 354.6 H190.15 L190.95 355.40000000000003 V365.8 H185.35 V355.40000000000003 Z" fill="#5e4252"/><rect x="186.15" y="358.6" width="4" height="5.999999999999999" fill="#85605a"/><rect x="186.65" y="358.8" width="0.6" height="3" fill="#a27870"/><rect x="189.04999999999998" y="358.8" width="0.6" height="3" fill="#a27870"/><path d="M186.95000000000002 354.90000000000003 H189.35 L190.15 355.70000000000005 V358.3 L189.35 359.1 H186.95000000000002 L186.15 358.3 V355.70000000000005 Z" fill="#e4bea4"/><rect x="187.45000000000002" y="356.3" width="1.6" height="1.6" fill="#cfa592"/><path d="M194.15 316.6 H198.95 V320.1 H195.75 Z" fill="#82828e"/><path d="M194.15 306.6 H198.15 L198.95 307.40000000000003 V317.8 H193.35 V307.40000000000003 Z" fill="#5e4252"/><rect x="194.15" y="310.6" width="4" height="5.999999999999999" fill="#85605a"/><rect x="194.65" y="310.8" width="0.6" height="3" fill="#a27870"/><rect x="197.04999999999998" y="310.8" width="0.6" height="3" fill="#a27870"/><path d="M194.95000000000002 306.90000000000003 H197.35 L198.15 307.70000000000005 V310.3 L197.35 311.1 H194.95000000000002 L194.15 310.3 V307.70000000000005 Z" fill="#e4bea4"/><rect x="195.45000000000002" y="308.3" width="1.6" height="1.6" fill="#cfa592"/><path d="M194.15 364.6 H198.95 V368.1 H195.75 Z" fill="#82828e"/><path d="M194.15 354.6 H198.15 L198.95 355.40000000000003 V365.8 H193.35 V355.40000000000003 Z" fill="#5e4252"/><rect x="194.15" y="358.6" width="4" height="5.999999999999999" fill="#85605a"/><rect x="194.65" y="358.8" width="0.6" height="3" fill="#a27870"/><rect x="197.04999999999998" y="358.8" width="0.6" height="3" fill="#a27870"/><path d="M194.95000000000002 354.90000000000003 H197.35 L198.15 355.70000000000005 V358.3 L197.35 359.1 H194.95000000000002 L194.15 358.3 V355.70000000000005 Z" fill="#e4bea4"/><rect x="195.45000000000002" y="356.3" width="1.6" height="1.6" fill="#cfa592"/><path d="M202.15 316.6 H206.95 V320.1 H203.75 Z" fill="#82828e"/><path d="M202.15 306.6 H206.15 L206.95 307.40000000000003 V317.8 H201.35 V307.40000000000003 Z" fill="#5e4252"/><rect x="202.15" y="310.6" width="4" height="5.999999999999999" fill="#85605a"/><rect x="202.65" y="310.8" width="0.6" height="3" fill="#a27870"/><rect x="205.04999999999998" y="310.8" width="0.6" height="3" fill="#a27870"/><path d="M202.95000000000002 306.90000000000003 H205.35 L206.15 307.70000000000005 V310.3 L205.35 311.1 H202.95000000000002 L202.15 310.3 V307.70000000000005 Z" fill="#e4bea4"/><rect x="203.45000000000002" y="308.3" width="1.6" height="1.6" fill="#cfa592"/><path d="M202.15 364.6 H206.95 V368.1 H203.75 Z" fill="#82828e"/><path d="M202.15 354.6 H206.15 L206.95 355.40000000000003 V365.8 H201.35 V355.40000000000003 Z" fill="#5e4252"/><rect x="202.15" y="358.6" width="4" height="5.999999999999999" fill="#85605a"/><rect x="202.65" y="358.8" width="0.6" height="3" fill="#a27870"/><rect x="205.04999999999998" y="358.8" width="0.6" height="3" fill="#a27870"/><path d="M202.95000000000002 354.90000000000003 H205.35 L206.15 355.70000000000005 V358.3 L205.35 359.1 H202.95000000000002 L202.15 358.3 V355.70000000000005 Z" fill="#e4bea4"/><rect x="203.45000000000002" y="356.3" width="1.6" height="1.6" fill="#cfa592"/><path d="M210.15 316.6 H214.95 V320.1 H211.75 Z" fill="#82828e"/><path d="M210.15 306.6 H214.15 L214.95 307.40000000000003 V317.8 H209.35 V307.40000000000003 Z" fill="#5e4252"/><rect x="210.15" y="310.6" width="4" height="5.999999999999999" fill="#85605a"/><rect x="210.65" y="310.8" width="0.6" height="3" fill="#a27870"/><rect x="213.04999999999998" y="310.8" width="0.6" height="3" fill="#a27870"/><path d="M210.95000000000002 306.90000000000003 H213.35 L214.15 307.70000000000005 V310.3 L213.35 311.1 H210.95000000000002 L210.15 310.3 V307.70000000000005 Z" fill="#e4bea4"/><rect x="211.45000000000002" y="308.3" width="1.6" height="1.6" fill="#cfa592"/><path d="M210.15 364.6 H214.95 V368.1 H211.75 Z" fill="#82828e"/><path d="M210.15 354.6 H214.15 L214.95 355.40000000000003 V365.8 H209.35 V355.40000000000003 Z" fill="#5e4252"/><rect x="210.15" y="358.6" width="4" height="5.999999999999999" fill="#85605a"/><rect x="210.65" y="358.8" width="0.6" height="3" fill="#a27870"/><rect x="213.04999999999998" y="358.8" width="0.6" height="3" fill="#a27870"/><path d="M210.95000000000002 354.90000000000003 H213.35 L214.15 355.70000000000005 V358.3 L213.35 359.1 H210.95000000000002 L210.15 358.3 V355.70000000000005 Z" fill="#e4bea4"/><rect x="211.45000000000002" y="356.3" width="1.6" height="1.6" fill="#cfa592"/><path d="M162.15 306.6 H166.15 L166.95 307.40000000000003 V365.8 H161.35 V307.40000000000003 Z" fill="#5e4252"/><rect x="162.15" y="310.8" width="4" height="53.79999999999999" fill="#85605a"/><path d="M162.95000000000002 307.0 H165.35 L166.15 307.8 V310.4 L165.35 311.2 H162.95000000000002 L162.15 310.4 V307.8 Z" fill="#e4bea4"/><rect x="163.45000000000002" y="308.4" width="1.6" height="1.6" fill="#cfa592"/><rect x="162.15" y="315.2" width="4" height="0.8" fill="#5e4252"/><path d="M162.95000000000002 316.0 H165.35 L166.15 316.8 V319.4 L165.35 320.2 H162.95000000000002 L162.15 319.4 V316.8 Z" fill="#e4bea4"/><rect x="163.45000000000002" y="317.4" width="1.6" height="1.6" fill="#cfa592"/><rect x="162.15" y="323.2" width="4" height="0.8" fill="#5e4252"/><path d="M162.95000000000002 324.0 H165.35 L166.15 324.8 V327.4 L165.35 328.2 H162.95000000000002 L162.15 327.4 V324.8 Z" fill="#e4bea4"/><rect x="163.45000000000002" y="325.4" width="1.6" height="1.6" fill="#cfa592"/><rect x="162.15" y="331.2" width="4" height="0.8" fill="#5e4252"/><path d="M162.95000000000002 332.0 H165.35 L166.15 332.8 V335.4 L165.35 336.2 H162.95000000000002 L162.15 335.4 V332.8 Z" fill="#e4bea4"/><rect x="163.45000000000002" y="333.4" width="1.6" height="1.6" fill="#cfa592"/><rect x="162.15" y="339.2" width="4" height="0.8" fill="#5e4252"/><path d="M162.95000000000002 340.0 H165.35 L166.15 340.8 V343.4 L165.35 344.2 H162.95000000000002 L162.15 343.4 V340.8 Z" fill="#e4bea4"/><rect x="163.45000000000002" y="341.4" width="1.6" height="1.6" fill="#cfa592"/><rect x="162.15" y="347.2" width="4" height="0.8" fill="#5e4252"/><path d="M162.95000000000002 348.0 H165.35 L166.15 348.8 V351.4 L165.35 352.2 H162.95000000000002 L162.15 351.4 V348.8 Z" fill="#e4bea4"/><rect x="163.45000000000002" y="349.4" width="1.6" height="1.6" fill="#cfa592"/><rect x="162.15" y="355.2" width="4" height="0.8" fill="#5e4252"/><path d="M162.95000000000002 356.0 H165.35 L166.15 356.8 V359.4 L165.35 360.2 H162.95000000000002 L162.15 359.4 V356.8 Z" fill="#e4bea4"/><rect x="163.45000000000002" y="357.4" width="1.6" height="1.6" fill="#cfa592"/><path d="M218.15 306.6 H222.15 L222.95 307.40000000000003 V365.8 H217.35 V307.40000000000003 Z" fill="#5e4252"/><rect x="218.15" y="310.8" width="4" height="53.79999999999999" fill="#85605a"/><path d="M218.95000000000002 307.0 H221.35 L222.15 307.8 V310.4 L221.35 311.2 H218.95000000000002 L218.15 310.4 V307.8 Z" fill="#e4bea4"/><rect x="219.45000000000002" y="308.4" width="1.6" height="1.6" fill="#cfa592"/><rect x="218.15" y="315.2" width="4" height="0.8" fill="#5e4252"/><path d="M218.95000000000002 316.0 H221.35 L222.15 316.8 V319.4 L221.35 320.2 H218.95000000000002 L218.15 319.4 V316.8 Z" fill="#e4bea4"/><rect x="219.45000000000002" y="317.4" width="1.6" height="1.6" fill="#cfa592"/><rect x="218.15" y="323.2" width="4" height="0.8" fill="#5e4252"/><path d="M218.95000000000002 324.0 H221.35 L222.15 324.8 V327.4 L221.35 328.2 H218.95000000000002 L218.15 327.4 V324.8 Z" fill="#e4bea4"/><rect x="219.45000000000002" y="325.4" width="1.6" height="1.6" fill="#cfa592"/><rect x="218.15" y="331.2" width="4" height="0.8" fill="#5e4252"/><path d="M218.95000000000002 332.0 H221.35 L222.15 332.8 V335.4 L221.35 336.2 H218.95000000000002 L218.15 335.4 V332.8 Z" fill="#e4bea4"/><rect x="219.45000000000002" y="333.4" width="1.6" height="1.6" fill="#cfa592"/><rect x="218.15" y="339.2" width="4" height="0.8" fill="#5e4252"/><path d="M218.95000000000002 340.0 H221.35 L222.15 340.8 V343.4 L221.35 344.2 H218.95000000000002 L218.15 343.4 V340.8 Z" fill="#e4bea4"/><rect x="219.45000000000002" y="341.4" width="1.6" height="1.6" fill="#cfa592"/><rect x="218.15" y="347.2" width="4" height="0.8" fill="#5e4252"/><path d="M218.95000000000002 348.0 H221.35 L222.15 348.8 V351.4 L221.35 352.2 H218.95000000000002 L218.15 351.4 V348.8 Z" fill="#e4bea4"/><rect x="219.45000000000002" y="349.4" width="1.6" height="1.6" fill="#cfa592"/><rect x="218.15" y="355.2" width="4" height="0.8" fill="#5e4252"/><path d="M218.95000000000002 356.0 H221.35 L222.15 356.8 V359.4 L221.35 360.2 H218.95000000000002 L218.15 359.4 V356.8 Z" fill="#e4bea4"/><rect x="219.45000000000002" y="357.4" width="1.6" height="1.6" fill="#cfa592"/><polygon points="192.00,320.40 206.60,334.40 205.00,335.50 203.50,338.00 202.50,341.00 201.50,343.00 203.00,347.00 199.00,350.00 195.00,351.50 189.00,351.50 185.00,350.00 181.00,347.00 182.50,343.00 181.50,341.00 180.50,338.00 179.00,335.50 177.20,334.40" fill="#245a14"/><polygon points="192.00,322.00 204.50,334.00 201.00,339.00 200.00,344.00 184.00,344.00 183.00,339.00 179.50,334.00" fill="#3a8428"/><polygon points="192.00,322.00 201.50,331.00 198.00,337.00 192.00,339.00 186.00,337.00 182.50,331.00" fill="#64a43e"/><polygon points="192.00,322.00 196.50,327.00 195.00,330.50 192.00,332.00 189.00,330.50 187.50,327.00" fill="#92ce6c"/><polygon points="183.00,343.00 201.00,343.00 203.00,347.00 199.00,350.00 195.00,351.50 189.00,351.50 185.00,350.00 181.00,347.00" fill="#283f0a"/><ellipse cx="192" cy="347.4" rx="3.6" ry="1.6" fill="#4e3c3c"/><path d="M192 323V343M184 333L187 337M200 333L197 337M186 339L188 343M198 339L196 343M188 328L190 331M196 328L194 331" stroke="#2f6a1e" stroke-width="0.9"/><rect x="17.5" y="375.20000000000005" width="28.5" height="4.6" fill="#5e4252"/><rect x="17.5" y="376.00000000000006" width="28.5" height="3" fill="#85605a"/><rect x="17.5" y="376.20000000000005" width="28.5" height="0.9" fill="#a27870"/><rect x="17.5" y="391.20000000000005" width="28.5" height="4.6" fill="#5e4252"/><rect x="17.5" y="392.00000000000006" width="28.5" height="3" fill="#85605a"/><rect x="17.5" y="392.20000000000005" width="28.5" height="0.9" fill="#a27870"/><path d="M26.150000000000002 380.6 H30.950000000000003 V384.1 H27.75 Z" fill="#82828e"/><path d="M26.150000000000002 370.6 H30.150000000000002 L30.950000000000003 371.40000000000003 V381.8 H25.35 V371.40000000000003 Z" fill="#5e4252"/><rect x="26.150000000000002" y="374.6" width="4" height="5.999999999999999" fill="#85605a"/><rect x="26.650000000000002" y="374.8" width="0.6" height="3" fill="#a27870"/><rect x="29.05" y="374.8" width="0.6" height="3" fill="#a27870"/><path d="M26.950000000000003 370.90000000000003 H29.35 L30.150000000000002 371.70000000000005 V374.3 L29.35 375.1 H26.950000000000003 L26.150000000000002 374.3 V371.70000000000005 Z" fill="#e4bea4"/><rect x="27.450000000000003" y="372.3" width="1.6" height="1.6" fill="#cfa592"/><path d="M26.150000000000002 396.6 H30.950000000000003 V400.1 H27.75 Z" fill="#82828e"/><path d="M26.150000000000002 386.6 H30.150000000000002 L30.950000000000003 387.40000000000003 V397.8 H25.35 V387.40000000000003 Z" fill="#5e4252"/><rect x="26.150000000000002" y="390.6" width="4" height="5.999999999999999" fill="#85605a"/><rect x="26.650000000000002" y="390.8" width="0.6" height="3" fill="#a27870"/><rect x="29.05" y="390.8" width="0.6" height="3" fill="#a27870"/><path d="M26.950000000000003 386.90000000000003 H29.35 L30.150000000000002 387.70000000000005 V390.3 L29.35 391.1 H26.950000000000003 L26.150000000000002 390.3 V387.70000000000005 Z" fill="#e4bea4"/><rect x="27.450000000000003" y="388.3" width="1.6" height="1.6" fill="#cfa592"/><path d="M34.15 380.6 H38.95 V384.1 H35.75 Z" fill="#82828e"/><path d="M34.15 370.6 H38.15 L38.95 371.40000000000003 V381.8 H33.35 V371.40000000000003 Z" fill="#5e4252"/><rect x="34.15" y="374.6" width="4" height="5.999999999999999" fill="#85605a"/><rect x="34.65" y="374.8" width="0.6" height="3" fill="#a27870"/><rect x="37.050000000000004" y="374.8" width="0.6" height="3" fill="#a27870"/><path d="M34.949999999999996 370.90000000000003 H37.35 L38.15 371.70000000000005 V374.3 L37.35 375.1 H34.949999999999996 L34.15 374.3 V371.70000000000005 Z" fill="#e4bea4"/><rect x="35.449999999999996" y="372.3" width="1.6" height="1.6" fill="#cfa592"/><path d="M34.15 396.6 H38.95 V400.1 H35.75 Z" fill="#82828e"/><path d="M34.15 386.6 H38.15 L38.95 387.40000000000003 V397.8 H33.35 V387.40000000000003 Z" fill="#5e4252"/><rect x="34.15" y="390.6" width="4" height="5.999999999999999" fill="#85605a"/><rect x="34.65" y="390.8" width="0.6" height="3" fill="#a27870"/><rect x="37.050000000000004" y="390.8" width="0.6" height="3" fill="#a27870"/><path d="M34.949999999999996 386.90000000000003 H37.35 L38.15 387.70000000000005 V390.3 L37.35 391.1 H34.949999999999996 L34.15 390.3 V387.70000000000005 Z" fill="#e4bea4"/><rect x="35.449999999999996" y="388.3" width="1.6" height="1.6" fill="#cfa592"/><path d="M18.150000000000002 370.6 H22.150000000000002 L22.950000000000003 371.40000000000003 V397.8 H17.35 V371.40000000000003 Z" fill="#5e4252"/><rect x="18.150000000000002" y="374.8" width="4" height="21.79999999999999" fill="#85605a"/><path d="M18.950000000000003 371.0 H21.35 L22.150000000000002 371.8 V374.4 L21.35 375.2 H18.950000000000003 L18.150000000000002 374.4 V371.8 Z" fill="#e4bea4"/><rect x="19.450000000000003" y="372.4" width="1.6" height="1.6" fill="#cfa592"/><rect x="18.150000000000002" y="379.2" width="4" height="0.8" fill="#5e4252"/><path d="M18.950000000000003 380.0 H21.35 L22.150000000000002 380.8 V383.4 L21.35 384.2 H18.950000000000003 L18.150000000000002 383.4 V380.8 Z" fill="#e4bea4"/><rect x="19.450000000000003" y="381.4" width="1.6" height="1.6" fill="#cfa592"/><rect x="18.150000000000002" y="387.2" width="4" height="0.8" fill="#5e4252"/><path d="M18.950000000000003 388.0 H21.35 L22.150000000000002 388.8 V391.4 L21.35 392.2 H18.950000000000003 L18.150000000000002 391.4 V388.8 Z" fill="#e4bea4"/><rect x="19.450000000000003" y="389.4" width="1.6" height="1.6" fill="#cfa592"/><path d="M42.15 370.6 H46.15 L46.95 371.40000000000003 V397.8 H41.35 V371.40000000000003 Z" fill="#5e4252"/><rect x="42.15" y="374.8" width="4" height="21.79999999999999" fill="#85605a"/><path d="M42.949999999999996 371.0 H45.35 L46.15 371.8 V374.4 L45.35 375.2 H42.949999999999996 L42.15 374.4 V371.8 Z" fill="#e4bea4"/><rect x="43.449999999999996" y="372.4" width="1.6" height="1.6" fill="#cfa592"/><rect x="42.15" y="379.2" width="4" height="0.8" fill="#5e4252"/><path d="M42.949999999999996 380.0 H45.35 L46.15 380.8 V383.4 L45.35 384.2 H42.949999999999996 L42.15 383.4 V380.8 Z" fill="#e4bea4"/><rect x="43.449999999999996" y="381.4" width="1.6" height="1.6" fill="#cfa592"/><rect x="42.15" y="387.2" width="4" height="0.8" fill="#5e4252"/><path d="M42.949999999999996 388.0 H45.35 L46.15 388.8 V391.4 L45.35 392.2 H42.949999999999996 L42.15 391.4 V388.8 Z" fill="#e4bea4"/><rect x="43.449999999999996" y="389.4" width="1.6" height="1.6" fill="#cfa592"/><rect x="81.5" y="375.20000000000005" width="44.5" height="4.6" fill="#5e4252"/><rect x="81.5" y="376.00000000000006" width="44.5" height="3" fill="#85605a"/><rect x="81.5" y="376.20000000000005" width="44.5" height="0.9" fill="#a27870"/><rect x="81.5" y="391.20000000000005" width="44.5" height="4.6" fill="#5e4252"/><rect x="81.5" y="392.00000000000006" width="44.5" height="3" fill="#85605a"/><rect x="81.5" y="392.20000000000005" width="44.5" height="0.9" fill="#a27870"/><path d="M90.14999999999999 380.6 H94.94999999999999 V384.1 H91.75 Z" fill="#82828e"/><path d="M90.14999999999999 370.6 H94.14999999999999 L94.94999999999999 371.40000000000003 V381.8 H89.35 V371.40000000000003 Z" fill="#5e4252"/><rect x="90.14999999999999" y="374.6" width="4" height="5.999999999999999" fill="#85605a"/><rect x="90.64999999999999" y="374.8" width="0.6" height="3" fill="#a27870"/><rect x="93.05" y="374.8" width="0.6" height="3" fill="#a27870"/><path d="M90.94999999999999 370.90000000000003 H93.35 L94.14999999999999 371.70000000000005 V374.3 L93.35 375.1 H90.94999999999999 L90.14999999999999 374.3 V371.70000000000005 Z" fill="#e4bea4"/><rect x="91.44999999999999" y="372.3" width="1.6" height="1.6" fill="#cfa592"/><path d="M90.14999999999999 396.6 H94.94999999999999 V400.1 H91.75 Z" fill="#82828e"/><path d="M90.14999999999999 386.6 H94.14999999999999 L94.94999999999999 387.40000000000003 V397.8 H89.35 V387.40000000000003 Z" fill="#5e4252"/><rect x="90.14999999999999" y="390.6" width="4" height="5.999999999999999" fill="#85605a"/><rect x="90.64999999999999" y="390.8" width="0.6" height="3" fill="#a27870"/><rect x="93.05" y="390.8" width="0.6" height="3" fill="#a27870"/><path d="M90.94999999999999 386.90000000000003 H93.35 L94.14999999999999 387.70000000000005 V390.3 L93.35 391.1 H90.94999999999999 L90.14999999999999 390.3 V387.70000000000005 Z" fill="#e4bea4"/><rect x="91.44999999999999" y="388.3" width="1.6" height="1.6" fill="#cfa592"/><path d="M98.14999999999999 380.6 H102.94999999999999 V384.1 H99.75 Z" fill="#82828e"/><path d="M98.14999999999999 370.6 H102.14999999999999 L102.94999999999999 371.40000000000003 V381.8 H97.35 V371.40000000000003 Z" fill="#5e4252"/><rect x="98.14999999999999" y="374.6" width="4" height="5.999999999999999" fill="#85605a"/><rect x="98.64999999999999" y="374.8" width="0.6" height="3" fill="#a27870"/><rect x="101.05" y="374.8" width="0.6" height="3" fill="#a27870"/><path d="M98.94999999999999 370.90000000000003 H101.35 L102.14999999999999 371.70000000000005 V374.3 L101.35 375.1 H98.94999999999999 L98.14999999999999 374.3 V371.70000000000005 Z" fill="#e4bea4"/><rect x="99.44999999999999" y="372.3" width="1.6" height="1.6" fill="#cfa592"/><path d="M98.14999999999999 396.6 H102.94999999999999 V400.1 H99.75 Z" fill="#82828e"/><path d="M98.14999999999999 386.6 H102.14999999999999 L102.94999999999999 387.40000000000003 V397.8 H97.35 V387.40000000000003 Z" fill="#5e4252"/><rect x="98.14999999999999" y="390.6" width="4" height="5.999999999999999" fill="#85605a"/><rect x="98.64999999999999" y="390.8" width="0.6" height="3" fill="#a27870"/><rect x="101.05" y="390.8" width="0.6" height="3" fill="#a27870"/><path d="M98.94999999999999 386.90000000000003 H101.35 L102.14999999999999 387.70000000000005 V390.3 L101.35 391.1 H98.94999999999999 L98.14999999999999 390.3 V387.70000000000005 Z" fill="#e4bea4"/><rect x="99.44999999999999" y="388.3" width="1.6" height="1.6" fill="#cfa592"/><path d="M106.14999999999999 380.6 H110.94999999999999 V384.1 H107.75 Z" fill="#82828e"/><path d="M106.14999999999999 370.6 H110.14999999999999 L110.94999999999999 371.40000000000003 V381.8 H105.35 V371.40000000000003 Z" fill="#5e4252"/><rect x="106.14999999999999" y="374.6" width="4" height="5.999999999999999" fill="#85605a"/><rect x="106.64999999999999" y="374.8" width="0.6" height="3" fill="#a27870"/><rect x="109.05" y="374.8" width="0.6" height="3" fill="#a27870"/><path d="M106.94999999999999 370.90000000000003 H109.35 L110.14999999999999 371.70000000000005 V374.3 L109.35 375.1 H106.94999999999999 L106.14999999999999 374.3 V371.70000000000005 Z" fill="#e4bea4"/><rect x="107.44999999999999" y="372.3" width="1.6" height="1.6" fill="#cfa592"/><path d="M106.14999999999999 396.6 H110.94999999999999 V400.1 H107.75 Z" fill="#82828e"/><path d="M106.14999999999999 386.6 H110.14999999999999 L110.94999999999999 387.40000000000003 V397.8 H105.35 V387.40000000000003 Z" fill="#5e4252"/><rect x="106.14999999999999" y="390.6" width="4" height="5.999999999999999" fill="#85605a"/><rect x="106.64999999999999" y="390.8" width="0.6" height="3" fill="#a27870"/><rect x="109.05" y="390.8" width="0.6" height="3" fill="#a27870"/><path d="M106.94999999999999 386.90000000000003 H109.35 L110.14999999999999 387.70000000000005 V390.3 L109.35 391.1 H106.94999999999999 L106.14999999999999 390.3 V387.70000000000005 Z" fill="#e4bea4"/><rect x="107.44999999999999" y="388.3" width="1.6" height="1.6" fill="#cfa592"/><path d="M114.14999999999999 380.6 H118.94999999999999 V384.1 H115.75 Z" fill="#82828e"/><path d="M114.14999999999999 370.6 H118.14999999999999 L118.94999999999999 371.40000000000003 V381.8 H113.35 V371.40000000000003 Z" fill="#5e4252"/><rect x="114.14999999999999" y="374.6" width="4" height="5.999999999999999" fill="#85605a"/><rect x="114.64999999999999" y="374.8" width="0.6" height="3" fill="#a27870"/><rect x="117.05" y="374.8" width="0.6" height="3" fill="#a27870"/><path d="M114.94999999999999 370.90000000000003 H117.35 L118.14999999999999 371.70000000000005 V374.3 L117.35 375.1 H114.94999999999999 L114.14999999999999 374.3 V371.70000000000005 Z" fill="#e4bea4"/><rect x="115.44999999999999" y="372.3" width="1.6" height="1.6" fill="#cfa592"/><path d="M114.14999999999999 396.6 H118.94999999999999 V400.1 H115.75 Z" fill="#82828e"/><path d="M114.14999999999999 386.6 H118.14999999999999 L118.94999999999999 387.40000000000003 V397.8 H113.35 V387.40000000000003 Z" fill="#5e4252"/><rect x="114.14999999999999" y="390.6" width="4" height="5.999999999999999" fill="#85605a"/><rect x="114.64999999999999" y="390.8" width="0.6" height="3" fill="#a27870"/><rect x="117.05" y="390.8" width="0.6" height="3" fill="#a27870"/><path d="M114.94999999999999 386.90000000000003 H117.35 L118.14999999999999 387.70000000000005 V390.3 L117.35 391.1 H114.94999999999999 L114.14999999999999 390.3 V387.70000000000005 Z" fill="#e4bea4"/><rect x="115.44999999999999" y="388.3" width="1.6" height="1.6" fill="#cfa592"/><path d="M82.14999999999999 370.6 H86.14999999999999 L86.94999999999999 371.40000000000003 V397.8 H81.35 V371.40000000000003 Z" fill="#5e4252"/><rect x="82.14999999999999" y="374.8" width="4" height="21.79999999999999" fill="#85605a"/><path d="M82.94999999999999 371.0 H85.35 L86.14999999999999 371.8 V374.4 L85.35 375.2 H82.94999999999999 L82.14999999999999 374.4 V371.8 Z" fill="#e4bea4"/><rect x="83.44999999999999" y="372.4" width="1.6" height="1.6" fill="#cfa592"/><rect x="82.14999999999999" y="379.2" width="4" height="0.8" fill="#5e4252"/><path d="M82.94999999999999 380.0 H85.35 L86.14999999999999 380.8 V383.4 L85.35 384.2 H82.94999999999999 L82.14999999999999 383.4 V380.8 Z" fill="#e4bea4"/><rect x="83.44999999999999" y="381.4" width="1.6" height="1.6" fill="#cfa592"/><rect x="82.14999999999999" y="387.2" width="4" height="0.8" fill="#5e4252"/><path d="M82.94999999999999 388.0 H85.35 L86.14999999999999 388.8 V391.4 L85.35 392.2 H82.94999999999999 L82.14999999999999 391.4 V388.8 Z" fill="#e4bea4"/><rect x="83.44999999999999" y="389.4" width="1.6" height="1.6" fill="#cfa592"/><path d="M122.14999999999999 370.6 H126.14999999999999 L126.94999999999999 371.40000000000003 V397.8 H121.35 V371.40000000000003 Z" fill="#5e4252"/><rect x="122.14999999999999" y="374.8" width="4" height="21.79999999999999" fill="#85605a"/><path d="M122.94999999999999 371.0 H125.35 L126.14999999999999 371.8 V374.4 L125.35 375.2 H122.94999999999999 L122.14999999999999 374.4 V371.8 Z" fill="#e4bea4"/><rect x="123.44999999999999" y="372.4" width="1.6" height="1.6" fill="#cfa592"/><rect x="122.14999999999999" y="379.2" width="4" height="0.8" fill="#5e4252"/><path d="M122.94999999999999 380.0 H125.35 L126.14999999999999 380.8 V383.4 L125.35 384.2 H122.94999999999999 L122.14999999999999 383.4 V380.8 Z" fill="#e4bea4"/><rect x="123.44999999999999" y="381.4" width="1.6" height="1.6" fill="#cfa592"/><rect x="122.14999999999999" y="387.2" width="4" height="0.8" fill="#5e4252"/><path d="M122.94999999999999 388.0 H125.35 L126.14999999999999 388.8 V391.4 L125.35 392.2 H122.94999999999999 L122.14999999999999 391.4 V388.8 Z" fill="#e4bea4"/><rect x="123.44999999999999" y="389.4" width="1.6" height="1.6" fill="#cfa592"/><rect x="257.5" y="375.20000000000005" width="44.5" height="4.6" fill="#5e4252"/><rect x="257.5" y="376.00000000000006" width="44.5" height="3" fill="#85605a"/><rect x="257.5" y="376.20000000000005" width="44.5" height="0.9" fill="#a27870"/><rect x="257.5" y="391.20000000000005" width="44.5" height="4.6" fill="#5e4252"/><rect x="257.5" y="392.00000000000006" width="44.5" height="3" fill="#85605a"/><rect x="257.5" y="392.20000000000005" width="44.5" height="0.9" fill="#a27870"/><path d="M266.15000000000003 380.6 H270.95000000000005 V384.1 H267.75 Z" fill="#82828e"/><path d="M266.15000000000003 370.6 H270.15000000000003 L270.95000000000005 371.40000000000003 V381.8 H265.35 V371.40000000000003 Z" fill="#5e4252"/><rect x="266.15000000000003" y="374.6" width="4" height="5.999999999999999" fill="#85605a"/><rect x="266.65000000000003" y="374.8" width="0.6" height="3" fill="#a27870"/><rect x="269.05" y="374.8" width="0.6" height="3" fill="#a27870"/><path d="M266.95000000000005 370.90000000000003 H269.35 L270.15000000000003 371.70000000000005 V374.3 L269.35 375.1 H266.95000000000005 L266.15000000000003 374.3 V371.70000000000005 Z" fill="#e4bea4"/><rect x="267.45000000000005" y="372.3" width="1.6" height="1.6" fill="#cfa592"/><path d="M266.15000000000003 396.6 H270.95000000000005 V400.1 H267.75 Z" fill="#82828e"/><path d="M266.15000000000003 386.6 H270.15000000000003 L270.95000000000005 387.40000000000003 V397.8 H265.35 V387.40000000000003 Z" fill="#5e4252"/><rect x="266.15000000000003" y="390.6" width="4" height="5.999999999999999" fill="#85605a"/><rect x="266.65000000000003" y="390.8" width="0.6" height="3" fill="#a27870"/><rect x="269.05" y="390.8" width="0.6" height="3" fill="#a27870"/><path d="M266.95000000000005 386.90000000000003 H269.35 L270.15000000000003 387.70000000000005 V390.3 L269.35 391.1 H266.95000000000005 L266.15000000000003 390.3 V387.70000000000005 Z" fill="#e4bea4"/><rect x="267.45000000000005" y="388.3" width="1.6" height="1.6" fill="#cfa592"/><path d="M274.15000000000003 380.6 H278.95000000000005 V384.1 H275.75 Z" fill="#82828e"/><path d="M274.15000000000003 370.6 H278.15000000000003 L278.95000000000005 371.40000000000003 V381.8 H273.35 V371.40000000000003 Z" fill="#5e4252"/><rect x="274.15000000000003" y="374.6" width="4" height="5.999999999999999" fill="#85605a"/><rect x="274.65000000000003" y="374.8" width="0.6" height="3" fill="#a27870"/><rect x="277.05" y="374.8" width="0.6" height="3" fill="#a27870"/><path d="M274.95000000000005 370.90000000000003 H277.35 L278.15000000000003 371.70000000000005 V374.3 L277.35 375.1 H274.95000000000005 L274.15000000000003 374.3 V371.70000000000005 Z" fill="#e4bea4"/><rect x="275.45000000000005" y="372.3" width="1.6" height="1.6" fill="#cfa592"/><path d="M274.15000000000003 396.6 H278.95000000000005 V400.1 H275.75 Z" fill="#82828e"/><path d="M274.15000000000003 386.6 H278.15000000000003 L278.95000000000005 387.40000000000003 V397.8 H273.35 V387.40000000000003 Z" fill="#5e4252"/><rect x="274.15000000000003" y="390.6" width="4" height="5.999999999999999" fill="#85605a"/><rect x="274.65000000000003" y="390.8" width="0.6" height="3" fill="#a27870"/><rect x="277.05" y="390.8" width="0.6" height="3" fill="#a27870"/><path d="M274.95000000000005 386.90000000000003 H277.35 L278.15000000000003 387.70000000000005 V390.3 L277.35 391.1 H274.95000000000005 L274.15000000000003 390.3 V387.70000000000005 Z" fill="#e4bea4"/><rect x="275.45000000000005" y="388.3" width="1.6" height="1.6" fill="#cfa592"/><path d="M282.15000000000003 380.6 H286.95000000000005 V384.1 H283.75 Z" fill="#82828e"/><path d="M282.15000000000003 370.6 H286.15000000000003 L286.95000000000005 371.40000000000003 V381.8 H281.35 V371.40000000000003 Z" fill="#5e4252"/><rect x="282.15000000000003" y="374.6" width="4" height="5.999999999999999" fill="#85605a"/><rect x="282.65000000000003" y="374.8" width="0.6" height="3" fill="#a27870"/><rect x="285.05" y="374.8" width="0.6" height="3" fill="#a27870"/><path d="M282.95000000000005 370.90000000000003 H285.35 L286.15000000000003 371.70000000000005 V374.3 L285.35 375.1 H282.95000000000005 L282.15000000000003 374.3 V371.70000000000005 Z" fill="#e4bea4"/><rect x="283.45000000000005" y="372.3" width="1.6" height="1.6" fill="#cfa592"/><path d="M282.15000000000003 396.6 H286.95000000000005 V400.1 H283.75 Z" fill="#82828e"/><path d="M282.15000000000003 386.6 H286.15000000000003 L286.95000000000005 387.40000000000003 V397.8 H281.35 V387.40000000000003 Z" fill="#5e4252"/><rect x="282.15000000000003" y="390.6" width="4" height="5.999999999999999" fill="#85605a"/><rect x="282.65000000000003" y="390.8" width="0.6" height="3" fill="#a27870"/><rect x="285.05" y="390.8" width="0.6" height="3" fill="#a27870"/><path d="M282.95000000000005 386.90000000000003 H285.35 L286.15000000000003 387.70000000000005 V390.3 L285.35 391.1 H282.95000000000005 L282.15000000000003 390.3 V387.70000000000005 Z" fill="#e4bea4"/><rect x="283.45000000000005" y="388.3" width="1.6" height="1.6" fill="#cfa592"/><path d="M290.15000000000003 380.6 H294.95000000000005 V384.1 H291.75 Z" fill="#82828e"/><path d="M290.15000000000003 370.6 H294.15000000000003 L294.95000000000005 371.40000000000003 V381.8 H289.35 V371.40000000000003 Z" fill="#5e4252"/><rect x="290.15000000000003" y="374.6" width="4" height="5.999999999999999" fill="#85605a"/><rect x="290.65000000000003" y="374.8" width="0.6" height="3" fill="#a27870"/><rect x="293.05" y="374.8" width="0.6" height="3" fill="#a27870"/><path d="M290.95000000000005 370.90000000000003 H293.35 L294.15000000000003 371.70000000000005 V374.3 L293.35 375.1 H290.95000000000005 L290.15000000000003 374.3 V371.70000000000005 Z" fill="#e4bea4"/><rect x="291.45000000000005" y="372.3" width="1.6" height="1.6" fill="#cfa592"/><path d="M290.15000000000003 396.6 H294.95000000000005 V400.1 H291.75 Z" fill="#82828e"/><path d="M290.15000000000003 386.6 H294.15000000000003 L294.95000000000005 387.40000000000003 V397.8 H289.35 V387.40000000000003 Z" fill="#5e4252"/><rect x="290.15000000000003" y="390.6" width="4" height="5.999999999999999" fill="#85605a"/><rect x="290.65000000000003" y="390.8" width="0.6" height="3" fill="#a27870"/><rect x="293.05" y="390.8" width="0.6" height="3" fill="#a27870"/><path d="M290.95000000000005 386.90000000000003 H293.35 L294.15000000000003 387.70000000000005 V390.3 L293.35 391.1 H290.95000000000005 L290.15000000000003 390.3 V387.70000000000005 Z" fill="#e4bea4"/><rect x="291.45000000000005" y="388.3" width="1.6" height="1.6" fill="#cfa592"/><path d="M258.15000000000003 370.6 H262.15000000000003 L262.95000000000005 371.40000000000003 V397.8 H257.35 V371.40000000000003 Z" fill="#5e4252"/><rect x="258.15000000000003" y="374.8" width="4" height="21.79999999999999" fill="#85605a"/><path d="M258.95000000000005 371.0 H261.35 L262.15000000000003 371.8 V374.4 L261.35 375.2 H258.95000000000005 L258.15000000000003 374.4 V371.8 Z" fill="#e4bea4"/><rect x="259.45000000000005" y="372.4" width="1.6" height="1.6" fill="#cfa592"/><rect x="258.15000000000003" y="379.2" width="4" height="0.8" fill="#5e4252"/><path d="M258.95000000000005 380.0 H261.35 L262.15000000000003 380.8 V383.4 L261.35 384.2 H258.95000000000005 L258.15000000000003 383.4 V380.8 Z" fill="#e4bea4"/><rect x="259.45000000000005" y="381.4" width="1.6" height="1.6" fill="#cfa592"/><rect x="258.15000000000003" y="387.2" width="4" height="0.8" fill="#5e4252"/><path d="M258.95000000000005 388.0 H261.35 L262.15000000000003 388.8 V391.4 L261.35 392.2 H258.95000000000005 L258.15000000000003 391.4 V388.8 Z" fill="#e4bea4"/><rect x="259.45000000000005" y="389.4" width="1.6" height="1.6" fill="#cfa592"/><path d="M298.15000000000003 370.6 H302.15000000000003 L302.95000000000005 371.40000000000003 V397.8 H297.35 V371.40000000000003 Z" fill="#5e4252"/><rect x="298.15000000000003" y="374.8" width="4" height="21.79999999999999" fill="#85605a"/><path d="M298.95000000000005 371.0 H301.35 L302.15000000000003 371.8 V374.4 L301.35 375.2 H298.95000000000005 L298.15000000000003 374.4 V371.8 Z" fill="#e4bea4"/><rect x="299.45000000000005" y="372.4" width="1.6" height="1.6" fill="#cfa592"/><rect x="298.15000000000003" y="379.2" width="4" height="0.8" fill="#5e4252"/><path d="M298.95000000000005 380.0 H301.35 L302.15000000000003 380.8 V383.4 L301.35 384.2 H298.95000000000005 L298.15000000000003 383.4 V380.8 Z" fill="#e4bea4"/><rect x="299.45000000000005" y="381.4" width="1.6" height="1.6" fill="#cfa592"/><rect x="298.15000000000003" y="387.2" width="4" height="0.8" fill="#5e4252"/><path d="M298.95000000000005 388.0 H301.35 L302.15000000000003 388.8 V391.4 L301.35 392.2 H298.95000000000005 L298.15000000000003 391.4 V388.8 Z" fill="#e4bea4"/><rect x="299.45000000000005" y="389.4" width="1.6" height="1.6" fill="#cfa592"/><rect x="353.5" y="375.20000000000005" width="28.5" height="4.6" fill="#5e4252"/><rect x="353.5" y="376.00000000000006" width="28.5" height="3" fill="#85605a"/><rect x="353.5" y="376.20000000000005" width="28.5" height="0.9" fill="#a27870"/><rect x="353.5" y="391.20000000000005" width="28.5" height="4.6" fill="#5e4252"/><rect x="353.5" y="392.00000000000006" width="28.5" height="3" fill="#85605a"/><rect x="353.5" y="392.20000000000005" width="28.5" height="0.9" fill="#a27870"/><path d="M362.15000000000003 380.6 H366.95000000000005 V384.1 H363.75 Z" fill="#82828e"/><path d="M362.15000000000003 370.6 H366.15000000000003 L366.95000000000005 371.40000000000003 V381.8 H361.35 V371.40000000000003 Z" fill="#5e4252"/><rect x="362.15000000000003" y="374.6" width="4" height="5.999999999999999" fill="#85605a"/><rect x="362.65000000000003" y="374.8" width="0.6" height="3" fill="#a27870"/><rect x="365.05" y="374.8" width="0.6" height="3" fill="#a27870"/><path d="M362.95000000000005 370.90000000000003 H365.35 L366.15000000000003 371.70000000000005 V374.3 L365.35 375.1 H362.95000000000005 L362.15000000000003 374.3 V371.70000000000005 Z" fill="#e4bea4"/><rect x="363.45000000000005" y="372.3" width="1.6" height="1.6" fill="#cfa592"/><path d="M362.15000000000003 396.6 H366.95000000000005 V400.1 H363.75 Z" fill="#82828e"/><path d="M362.15000000000003 386.6 H366.15000000000003 L366.95000000000005 387.40000000000003 V397.8 H361.35 V387.40000000000003 Z" fill="#5e4252"/><rect x="362.15000000000003" y="390.6" width="4" height="5.999999999999999" fill="#85605a"/><rect x="362.65000000000003" y="390.8" width="0.6" height="3" fill="#a27870"/><rect x="365.05" y="390.8" width="0.6" height="3" fill="#a27870"/><path d="M362.95000000000005 386.90000000000003 H365.35 L366.15000000000003 387.70000000000005 V390.3 L365.35 391.1 H362.95000000000005 L362.15000000000003 390.3 V387.70000000000005 Z" fill="#e4bea4"/><rect x="363.45000000000005" y="388.3" width="1.6" height="1.6" fill="#cfa592"/><path d="M370.15000000000003 380.6 H374.95000000000005 V384.1 H371.75 Z" fill="#82828e"/><path d="M370.15000000000003 370.6 H374.15000000000003 L374.95000000000005 371.40000000000003 V381.8 H369.35 V371.40000000000003 Z" fill="#5e4252"/><rect x="370.15000000000003" y="374.6" width="4" height="5.999999999999999" fill="#85605a"/><rect x="370.65000000000003" y="374.8" width="0.6" height="3" fill="#a27870"/><rect x="373.05" y="374.8" width="0.6" height="3" fill="#a27870"/><path d="M370.95000000000005 370.90000000000003 H373.35 L374.15000000000003 371.70000000000005 V374.3 L373.35 375.1 H370.95000000000005 L370.15000000000003 374.3 V371.70000000000005 Z" fill="#e4bea4"/><rect x="371.45000000000005" y="372.3" width="1.6" height="1.6" fill="#cfa592"/><path d="M370.15000000000003 396.6 H374.95000000000005 V400.1 H371.75 Z" fill="#82828e"/><path d="M370.15000000000003 386.6 H374.15000000000003 L374.95000000000005 387.40000000000003 V397.8 H369.35 V387.40000000000003 Z" fill="#5e4252"/><rect x="370.15000000000003" y="390.6" width="4" height="5.999999999999999" fill="#85605a"/><rect x="370.65000000000003" y="390.8" width="0.6" height="3" fill="#a27870"/><rect x="373.05" y="390.8" width="0.6" height="3" fill="#a27870"/><path d="M370.95000000000005 386.90000000000003 H373.35 L374.15000000000003 387.70000000000005 V390.3 L373.35 391.1 H370.95000000000005 L370.15000000000003 390.3 V387.70000000000005 Z" fill="#e4bea4"/><rect x="371.45000000000005" y="388.3" width="1.6" height="1.6" fill="#cfa592"/><path d="M354.15000000000003 370.6 H358.15000000000003 L358.95000000000005 371.40000000000003 V397.8 H353.35 V371.40000000000003 Z" fill="#5e4252"/><rect x="354.15000000000003" y="374.8" width="4" height="21.79999999999999" fill="#85605a"/><path d="M354.95000000000005 371.0 H357.35 L358.15000000000003 371.8 V374.4 L357.35 375.2 H354.95000000000005 L354.15000000000003 374.4 V371.8 Z" fill="#e4bea4"/><rect x="355.45000000000005" y="372.4" width="1.6" height="1.6" fill="#cfa592"/><rect x="354.15000000000003" y="379.2" width="4" height="0.8" fill="#5e4252"/><path d="M354.95000000000005 380.0 H357.35 L358.15000000000003 380.8 V383.4 L357.35 384.2 H354.95000000000005 L354.15000000000003 383.4 V380.8 Z" fill="#e4bea4"/><rect x="355.45000000000005" y="381.4" width="1.6" height="1.6" fill="#cfa592"/><rect x="354.15000000000003" y="387.2" width="4" height="0.8" fill="#5e4252"/><path d="M354.95000000000005 388.0 H357.35 L358.15000000000003 388.8 V391.4 L357.35 392.2 H354.95000000000005 L354.15000000000003 391.4 V388.8 Z" fill="#e4bea4"/><rect x="355.45000000000005" y="389.4" width="1.6" height="1.6" fill="#cfa592"/><path d="M378.15000000000003 370.6 H382.15000000000003 L382.95000000000005 371.40000000000003 V397.8 H377.35 V371.40000000000003 Z" fill="#5e4252"/><rect x="378.15000000000003" y="374.8" width="4" height="21.79999999999999" fill="#85605a"/><path d="M378.95000000000005 371.0 H381.35 L382.15000000000003 371.8 V374.4 L381.35 375.2 H378.95000000000005 L378.15000000000003 374.4 V371.8 Z" fill="#e4bea4"/><rect x="379.45000000000005" y="372.4" width="1.6" height="1.6" fill="#cfa592"/><rect x="378.15000000000003" y="379.2" width="4" height="0.8" fill="#5e4252"/><path d="M378.95000000000005 380.0 H381.35 L382.15000000000003 380.8 V383.4 L381.35 384.2 H378.95000000000005 L378.15000000000003 383.4 V380.8 Z" fill="#e4bea4"/><rect x="379.45000000000005" y="381.4" width="1.6" height="1.6" fill="#cfa592"/><rect x="378.15000000000003" y="387.2" width="4" height="0.8" fill="#5e4252"/><path d="M378.95000000000005 388.0 H381.35 L382.15000000000003 388.8 V391.4 L381.35 392.2 H378.95000000000005 L378.15000000000003 391.4 V388.8 Z" fill="#e4bea4"/><rect x="379.45000000000005" y="389.4" width="1.6" height="1.6" fill="#cfa592"/><path d="M16 0V400M0 16H400" stroke="#1f5e45" stroke-width="0.55" stroke-dasharray="1.81 0.69" stroke-dashoffset="0.4"/><path d="M32 0V400M0 32H400" stroke="#1f5e45" stroke-width="0.55" stroke-dasharray="1.81 0.69" stroke-dashoffset="0.4"/><path d="M48 0V400M0 48H400" stroke="#1f5e45" stroke-width="0.55" stroke-dasharray="1.81 0.69" stroke-dashoffset="0.4"/><path d="M64 0V400M0 64H400" stroke="#1f5e45" stroke-width="0.55" stroke-dasharray="1.81 0.69" stroke-dashoffset="0.4"/><path d="M80 0V400M0 80H400" stroke="#1f5e45" stroke-width="0.55" stroke-dasharray="1.81 0.69" stroke-dashoffset="0.4"/><path d="M96 0V400M0 96H400" stroke="#1f5e45" stroke-width="0.55" stroke-dasharray="1.81 0.69" stroke-dashoffset="0.4"/><path d="M112 0V400M0 112H400" stroke="#1f5e45" stroke-width="0.55" stroke-dasharray="1.81 0.69" stroke-dashoffset="0.4"/><path d="M128 0V400M0 128H400" stroke="#1f5e45" stroke-width="0.55" stroke-dasharray="1.81 0.69" stroke-dashoffset="0.4"/><path d="M144 0V400M0 144H400" stroke="#1f5e45" stroke-width="0.55" stroke-dasharray="1.81 0.69" stroke-dashoffset="0.4"/><path d="M160 0V400M0 160H400" stroke="#0e2a1e" stroke-width="0.55" stroke-dasharray="1.81 0.69" stroke-dashoffset="0.4"/><path d="M176 0V400M0 176H400" stroke="#1f5e45" stroke-width="0.55" stroke-dasharray="1.81 0.69" stroke-dashoffset="0.4"/><path d="M192 0V400M0 192H400" stroke="#1f5e45" stroke-width="0.55" stroke-dasharray="1.81 0.69" stroke-dashoffset="0.4"/><path d="M208 0V400M0 208H400" stroke="#1f5e45" stroke-width="0.55" stroke-dasharray="1.81 0.69" stroke-dashoffset="0.4"/><path d="M224 0V400M0 224H400" stroke="#1f5e45" stroke-width="0.55" stroke-dasharray="1.81 0.69" stroke-dashoffset="0.4"/><path d="M240 0V400M0 240H400" stroke="#1f5e45" stroke-width="0.55" stroke-dasharray="1.81 0.69" stroke-dashoffset="0.4"/><path d="M256 0V400M0 256H400" stroke="#1f5e45" stroke-width="0.55" stroke-dasharray="1.81 0.69" stroke-dashoffset="0.4"/><path d="M272 0V400M0 272H400" stroke="#1f5e45" stroke-width="0.55" stroke-dasharray="1.81 0.69" stroke-dashoffset="0.4"/><path d="M288 0V400M0 288H400" stroke="#1f5e45" stroke-width="0.55" stroke-dasharray="1.81 0.69" stroke-dashoffset="0.4"/><path d="M304 0V400M0 304H400" stroke="#1f5e45" stroke-width="0.55" stroke-dasharray="1.81 0.69" stroke-dashoffset="0.4"/><path d="M320 0V400M0 320H400" stroke="#0e2a1e" stroke-width="0.55" stroke-dasharray="1.81 0.69" stroke-dashoffset="0.4"/><path d="M336 0V400M0 336H400" stroke="#1f5e45" stroke-width="0.55" stroke-dasharray="1.81 0.69" stroke-dashoffset="0.4"/><path d="M352 0V400M0 352H400" stroke="#1f5e45" stroke-width="0.55" stroke-dasharray="1.81 0.69" stroke-dashoffset="0.4"/><path d="M368 0V400M0 368H400" stroke="#1f5e45" stroke-width="0.55" stroke-dasharray="1.81 0.69" stroke-dashoffset="0.4"/><path d="M384 0V400M0 384H400" stroke="#1f5e45" stroke-width="0.55" stroke-dasharray="1.81 0.69" stroke-dashoffset="0.4"/><rect x="0" y="0" width="400" height="400" fill="none" stroke="#000" stroke-width="0.5"/><path d="M0 0H400M0 0V400" stroke="#fff" stroke-width="0.5" stroke-dasharray="0.6 1.6" transform="translate(-0.2 -0.2)"/></svg><div class="a" style="left:2312px;top:903px;width:712px;height:1047px;border-radius:12px 0 0 12px;box-shadow:0 3px 14px rgba(0,0,0,0.13)"></div><div class="a" style="left:2312px;top:903px;width:712px;height:1047px;background:#e9e9e9;border-radius:12px 0 0 12px;overflow:hidden;border:1px solid #c4c4c4;border-right:none"></div><div class="a" style="left:2313px;top:904px;width:711px;height:40px;background:#e7e6ea;border-radius:11px 0 0 0"></div><div class="a" style="left:2313px;top:943px;width:711px;height:1px;background:#d0d0d0"></div><svg class="a" style="left:2320px;top:911px;" width="80" height="30" viewBox="0 0 80 30"><circle cx="11" cy="11.5" r="8.6" fill="#d3d2d6" stroke="#b9b8bc" stroke-width="1"/><circle cx="41" cy="11.5" r="8.6" fill="#d3d2d6" stroke="#b9b8bc" stroke-width="1"/><circle cx="71" cy="11.5" r="8.6" fill="#d3d2d6" stroke="#b9b8bc" stroke-width="1"/></svg><div class="t" style="left:2167px;width:1000px;text-align:center;top:911.2px;font-size:23.3px;color:#a9a8ac;font-weight:normal;">Tilesets</div><div class="a" style="left:2313px;top:944px;width:711px;height:41px;background:#ececec"></div><div class="a" style="left:2315px;top:962px;width:655px;height:22px;background:#e2e2e2;border-radius:8px 8px 0 0;border:1px solid #dadada;border-bottom:none"></div><div class="a" style="left:2579px;top:944px;width:127px;height:40px;background:#e5e5e5;border:1px solid #d2d2d2;border-radius:9px"></div><div class="t" style="left:2142px;width:1000px;text-align:center;top:951.1px;font-size:26.9px;color:#fbfbfb;font-weight:normal;-webkit-text-stroke:0.3px #fff">tuxmon</div><div class="a" style="left:2973px;top:943px;width:51px;height:42px;background:#fff;border:1px solid #c6c6c6"></div><svg class="a" style="left:2986px;top:956px;" width="28" height="18" viewBox="0 0 28 18"><path d="M3 4L14 14L25 4" fill="none" stroke="#1a1a1a" stroke-width="4.2" stroke-linecap="round" stroke-linejoin="round"/></svg><div class="a" style="left:2313px;top:984px;width:711px;height:1px;background:#9a9a9a"></div><div class="a" style="left:2313px;top:985px;width:711px;height:895px;background:#c0c0c0"></div><svg class="a" style="left:2314px;top:986px;" width="476.9" height="556.4" viewBox="0 0 384 448"><defs><pattern id="tg" width="16" height="16" patternUnits="userSpaceOnUse"><rect width="16" height="16" fill="#41b282"/><path d="M1.4 2.5h1v1h-1zM3.4 2.5h1v1h-1zM2.4 3.5h1v1h-1zM11.9 1.8h1v1h-1zM13.9 1.8h1v1h-1zM12.9 2.8h1v1h-1zM4.3 9.1h1v1h-1zM6.3 9.1h1v1h-1zM5.3 10.1h1v1h-1zM8.9 12h1v1h-1zM10.9 12h1v1h-1zM9.9 13h1v1h-1z" fill="#23a466"/><rect x="10.2" y="5.6" width="1" height="1" fill="#cfeadb"/></pattern><pattern id="ty" width="16" height="16" patternUnits="userSpaceOnUse"><rect width="16" height="16" fill="#e2cd7f"/><rect x="3" y="4" width="1" height="1" fill="#f4e6b0"/><rect x="11" y="9" width="1" height="1" fill="#f4e6b0"/><rect x="6" y="12" width="1" height="1" fill="#d2a868"/><rect x="12" y="2" width="1" height="1" fill="#d2a868"/></pattern><pattern id="tw" width="16" height="16" patternUnits="userSpaceOnUse"><rect width="16" height="16" fill="#e9f1f1"/><rect x="3" y="4" width="1" height="1" fill="#d6e2e6"/><rect x="11" y="9" width="1" height="1" fill="#d6e2e6"/></pattern></defs><rect x="0" y="0" width="128" height="80" fill="url(#tg)"/><rect x="32" y="80" width="96" height="64" fill="url(#tg)"/><rect x="64" y="80" width="16" height="16" fill="url(#ty)"/><rect x="32" y="112" width="32" height="32" fill="url(#ty)"/><rect x="36" y="116" width="24" height="24" rx="4" fill="url(#tg)" stroke="#9fdcc4" stroke-width="1"/><rect x="73.5" y="107" width="28" height="28" rx="7" fill="url(#ty)" stroke="#9fdcc4" stroke-width="1.6" stroke-opacity=".7"/><rect x="4.5" y="3.5" width="21.5" height="24" rx="7" fill="#5d4152"/><rect x="5.3" y="4.3" width="19.9" height="22.4" rx="6.5" fill="#8a6466"/><rect x="9.5" y="9" width="11.5" height="15.5" rx="5" fill="#41b282" stroke="#a8dcc8" stroke-width="0.7" stroke-opacity=".6"/><rect x="43" y="3" width="8" height="16" rx="3.5" fill="#7a5660"/><rect x="46.5" y="5" width="1" height="12" fill="#5a4050"/><rect x="66" y="2" width="44" height="40" rx="5" fill="none" stroke="#6a4b58" stroke-width="2.2"/><path d="M65 30 H111 V40 Q110 45 104 45 H72 Q65 45 65 40Z" fill="#6f505a"/><path d="M68 33 l4 5 l4 -4 l5 5 l4 -5 l5 4 l4 -4 l5 5 l4 -5" stroke="#533a48" stroke-width="1.4" fill="none"/><rect x="82" y="20" width="12" height="10" fill="#5d4152"/><path d="M83 22H93M83 25H93M83 28H93" stroke="#b8c4d8" stroke-width="1.4"/><path d="M0 38H14M0 41H14M0 54H14M0 57H14M0 60H14" stroke="#a7b0c4" stroke-width="1.3"/><rect x="18" y="34" width="13" height="28" rx="5" fill="#5d4152"/><rect x="19" y="35" width="11" height="26" rx="4" fill="#8a6466"/><rect x="21" y="37" width="7" height="11" rx="3" fill="#41b282"/><rect x="37" y="38" width="22" height="18" rx="6" fill="none" stroke="#7a5a62" stroke-width="3.4"/><path d="M72 62 Q88 58 104 62 Q88 64 72 62Z" fill="#6f505a" stroke="#6f505a" stroke-width="1.5"/><path d="M71.5 68 H104 Q102 75 96 75 H79 Q73 75 71.5 68Z" fill="#6f505a"/><rect x="5" y="66" width="4" height="13" fill="#6b6f88"/><rect x="6" y="66" width="2" height="13" fill="#d0d8ec"/><rect x="20" y="66" width="4" height="13" fill="#6b6f88"/><rect x="21" y="66" width="2" height="13" fill="#d0d8ec"/><rect x="38" y="76" width="5" height="32" rx="2.5" fill="#7a5a62"/><rect x="53" y="76" width="5" height="32" rx="2.5" fill="#7a5a62"/><circle cx="120" cy="7" r="3" fill="#d13d4c"/><circle cx="118" cy="21" r="3" fill="#d13d4c"/><circle cx="122" cy="27" r="3" fill="#d13d4c"/><circle cx="118" cy="36" r="3" fill="#d13d4c"/><circle cx="122" cy="40" r="3" fill="#d13d4c"/><circle cx="118" cy="44" r="3" fill="#d13d4c"/><circle cx="120" cy="55" r="2.7" fill="#3f5ea6"/><circle cx="118" cy="69" r="3" fill="#3f5ea6"/><circle cx="122" cy="75" r="3" fill="#3f5ea6"/><circle cx="118" cy="84" r="3" fill="#3f5ea6"/><circle cx="122" cy="88" r="3" fill="#3f5ea6"/><circle cx="118" cy="92" r="3" fill="#3f5ea6"/><circle cx="120" cy="103" r="2.7" fill="#f2e6a8"/><circle cx="118" cy="117" r="3" fill="#f2e6a8"/><circle cx="122" cy="123" r="3" fill="#f2e6a8"/><circle cx="118" cy="132" r="3" fill="#f2e6a8"/><circle cx="122" cy="136" r="3" fill="#f2e6a8"/><circle cx="118" cy="140" r="3" fill="#f2e6a8"/><rect x="128" y="0" width="128" height="80" fill="url(#ty)"/><rect x="160" y="80" width="96" height="64" fill="url(#ty)"/><rect x="160" y="112" width="32" height="32" fill="url(#tw)"/><rect x="164" y="116" width="24" height="24" rx="4" fill="url(#ty)" stroke="#9fdcc4" stroke-width="1"/><rect x="201.5" y="107" width="28" height="28" rx="7" fill="url(#tw)" stroke="#c8a070" stroke-width="1.6" stroke-opacity=".7"/><rect x="132.5" y="3.5" width="21.5" height="24" rx="7" fill="#5d4152"/><rect x="133.3" y="4.3" width="19.9" height="22.4" rx="6.5" fill="#8a6466"/><rect x="137.5" y="9" width="11.5" height="15.5" rx="5" fill="url(#ty)" stroke="#a8dcc8" stroke-width="0.7" stroke-opacity=".6"/><rect x="171" y="3" width="8" height="16" rx="3.5" fill="#7a5660"/><rect x="174.5" y="5" width="1" height="12" fill="#5a4050"/><rect x="194" y="2" width="44" height="40" rx="5" fill="none" stroke="#6a4b58" stroke-width="2.2"/><path d="M193 30 H239 V40 Q238 45 232 45 H200 Q193 45 193 40Z" fill="#6f505a"/><path d="M196 33 l4 5 l4 -4 l5 5 l4 -5 l5 4 l4 -4 l5 5 l4 -5" stroke="#533a48" stroke-width="1.4" fill="none"/><rect x="210" y="20" width="12" height="10" fill="#5d4152"/><path d="M211 22H221M211 25H221M211 28H221" stroke="#b8c4d8" stroke-width="1.4"/><path d="M128 38H142M128 41H142M128 54H142M128 57H142M128 60H142" stroke="#a7b0c4" stroke-width="1.3"/><rect x="146" y="34" width="13" height="28" rx="5" fill="#5d4152"/><rect x="147" y="35" width="11" height="26" rx="4" fill="#8a6466"/><rect x="149" y="37" width="7" height="11" rx="3" fill="url(#ty)"/><rect x="165" y="38" width="22" height="18" rx="6" fill="none" stroke="#7a5a62" stroke-width="3.4"/><path d="M200 62 Q216 58 232 62 Q216 64 200 62Z" fill="#6f505a" stroke="#6f505a" stroke-width="1.5"/><path d="M199.5 68 H232 Q230 75 224 75 H207 Q201 75 199.5 68Z" fill="#6f505a"/><rect x="133" y="66" width="4" height="13" fill="#6b6f88"/><rect x="134" y="66" width="2" height="13" fill="#d0d8ec"/><rect x="148" y="66" width="4" height="13" fill="#6b6f88"/><rect x="149" y="66" width="2" height="13" fill="#d0d8ec"/><rect x="166" y="76" width="5" height="32" rx="2.5" fill="#7a5a62"/><rect x="181" y="76" width="5" height="32" rx="2.5" fill="#7a5a62"/><circle cx="248" cy="7" r="3" fill="#d13d4c"/><circle cx="246" cy="21" r="3" fill="#d13d4c"/><circle cx="250" cy="27" r="3" fill="#d13d4c"/><circle cx="246" cy="36" r="3" fill="#d13d4c"/><circle cx="250" cy="40" r="3" fill="#d13d4c"/><circle cx="246" cy="44" r="3" fill="#d13d4c"/><circle cx="248" cy="55" r="2.7" fill="#3f5ea6"/><circle cx="246" cy="69" r="3" fill="#3f5ea6"/><circle cx="250" cy="75" r="3" fill="#3f5ea6"/><circle cx="246" cy="84" r="3" fill="#3f5ea6"/><circle cx="250" cy="88" r="3" fill="#3f5ea6"/><circle cx="246" cy="92" r="3" fill="#3f5ea6"/><circle cx="248" cy="103" r="2.7" fill="#f2e6a8"/><circle cx="246" cy="117" r="3" fill="#f2e6a8"/><circle cx="250" cy="123" r="3" fill="#f2e6a8"/><circle cx="246" cy="132" r="3" fill="#f2e6a8"/><circle cx="250" cy="136" r="3" fill="#f2e6a8"/><circle cx="246" cy="140" r="3" fill="#f2e6a8"/><rect x="256" y="0" width="128" height="80" fill="url(#tw)"/><rect x="288" y="80" width="96" height="64" fill="url(#tw)"/><rect x="288" y="112" width="32" height="32" fill="url(#tg)"/><rect x="292" y="116" width="24" height="24" rx="4" fill="url(#tw)" stroke="#d8eef0" stroke-width="1"/><rect x="329.5" y="107" width="28" height="28" rx="7" fill="url(#tg)" stroke="#c8a070" stroke-width="1.6" stroke-opacity=".7"/><rect x="260.5" y="3.5" width="21.5" height="24" rx="7" fill="#5d4152"/><rect x="261.3" y="4.3" width="19.9" height="22.4" rx="6.5" fill="#8a6466"/><rect x="265.5" y="9" width="11.5" height="15.5" rx="5" fill="url(#tw)" stroke="#a8dcc8" stroke-width="0.7" stroke-opacity=".6"/><rect x="299" y="3" width="8" height="16" rx="3.5" fill="#7a5660"/><rect x="302.5" y="5" width="1" height="12" fill="#5a4050"/><rect x="322" y="2" width="44" height="40" rx="5" fill="none" stroke="#6a4b58" stroke-width="2.2"/><path d="M321 30 H367 V40 Q366 45 360 45 H328 Q321 45 321 40Z" fill="#6f505a"/><path d="M324 33 l4 5 l4 -4 l5 5 l4 -5 l5 4 l4 -4 l5 5 l4 -5" stroke="#533a48" stroke-width="1.4" fill="none"/><rect x="338" y="20" width="12" height="10" fill="#5d4152"/><path d="M339 22H349M339 25H349M339 28H349" stroke="#b8c4d8" stroke-width="1.4"/><path d="M256 38H270M256 41H270M256 54H270M256 57H270M256 60H270" stroke="#a7b0c4" stroke-width="1.3"/><rect x="274" y="34" width="13" height="28" rx="5" fill="#5d4152"/><rect x="275" y="35" width="11" height="26" rx="4" fill="#8a6466"/><rect x="277" y="37" width="7" height="11" rx="3" fill="url(#tw)"/><rect x="293" y="38" width="22" height="18" rx="6" fill="none" stroke="#7a5a62" stroke-width="3.4"/><path d="M328 62 Q344 58 360 62 Q344 64 328 62Z" fill="#6f505a" stroke="#6f505a" stroke-width="1.5"/><path d="M327.5 68 H360 Q358 75 352 75 H335 Q329 75 327.5 68Z" fill="#6f505a"/><rect x="261" y="66" width="4" height="13" fill="#6b6f88"/><rect x="262" y="66" width="2" height="13" fill="#d0d8ec"/><rect x="276" y="66" width="4" height="13" fill="#6b6f88"/><rect x="277" y="66" width="2" height="13" fill="#d0d8ec"/><rect x="294" y="76" width="5" height="32" rx="2.5" fill="#7a5a62"/><rect x="309" y="76" width="5" height="32" rx="2.5" fill="#7a5a62"/><circle cx="376" cy="7" r="3" fill="#d13d4c"/><circle cx="374" cy="21" r="3" fill="#d13d4c"/><circle cx="378" cy="27" r="3" fill="#d13d4c"/><circle cx="374" cy="36" r="3" fill="#d13d4c"/><circle cx="378" cy="40" r="3" fill="#d13d4c"/><circle cx="374" cy="44" r="3" fill="#d13d4c"/><circle cx="376" cy="55" r="2.7" fill="#3f5ea6"/><circle cx="374" cy="69" r="3" fill="#3f5ea6"/><circle cx="378" cy="75" r="3" fill="#3f5ea6"/><circle cx="374" cy="84" r="3" fill="#3f5ea6"/><circle cx="378" cy="88" r="3" fill="#3f5ea6"/><circle cx="374" cy="92" r="3" fill="#3f5ea6"/><circle cx="376" cy="103" r="2.7" fill="#f2e6a8"/><circle cx="374" cy="117" r="3" fill="#f2e6a8"/><circle cx="378" cy="123" r="3" fill="#f2e6a8"/><circle cx="374" cy="132" r="3" fill="#f2e6a8"/><circle cx="378" cy="136" r="3" fill="#f2e6a8"/><circle cx="374" cy="140" r="3" fill="#f2e6a8"/><circle cx="8" cy="87" r="6" fill="#2f6a22"/><circle cx="8" cy="87" r="4" fill="#d8505a"/><circle cx="24" cy="87" r="6" fill="#3a7a2a"/><rect x="19" y="101" width="12" height="5" fill="#3a7a2a"/><polygon points="16.00,112.40 30.60,126.40 29.00,127.50 27.50,130.00 26.50,133.00 25.50,135.00 27.00,139.00 23.00,142.00 19.00,143.50 13.00,143.50 9.00,142.00 5.00,139.00 6.50,135.00 5.50,133.00 4.50,130.00 3.00,127.50 1.20,126.40" fill="#245a14"/><polygon points="16.00,114.00 28.50,126.00 25.00,131.00 24.00,136.00 8.00,136.00 7.00,131.00 3.50,126.00" fill="#3a8428"/><polygon points="16.00,114.00 25.50,123.00 22.00,129.00 16.00,131.00 10.00,129.00 6.50,123.00" fill="#64a43e"/><polygon points="16.00,114.00 20.50,119.00 19.00,122.50 16.00,124.00 13.00,122.50 11.50,119.00" fill="#92ce6c"/><polygon points="7.00,135.00 25.00,135.00 27.00,139.00 23.00,142.00 19.00,143.50 13.00,143.50 9.00,142.00 5.00,139.00" fill="#283f0a"/><ellipse cx="16" cy="139.4" rx="3.6" ry="1.6" fill="#4e3c3c"/><path d="M16 115V135M8 125L11 129M24 125L21 129M10 131L12 135M22 131L20 135M12 120L14 123M20 120L18 123" stroke="#2f6a1e" stroke-width="0.9"/><circle cx="280" cy="87" r="6" fill="#4e9ad0"/><rect x="275" y="101" width="10" height="4" fill="#4e9ad0"/><rect x="272" y="128" width="16" height="16" fill="#c8dcf0"/><path d="M274 142L286 130M278 144L288 134" stroke="#fff" stroke-width="1.2"/><rect x="0" y="151.6" width="16" height="4.6" fill="#5e4252"/><rect x="0" y="152.4" width="16" height="3" fill="#85605a"/><rect x="0" y="152.6" width="16" height="0.9" fill="#a27870"/><path d="M2.1500000000000004 147 H6.15 L6.949999999999999 147.8 V160 H1.35 V147.8 Z" fill="#5e4252"/><rect x="2.1500000000000004" y="151.2" width="4" height="7.6" fill="#85605a"/><path d="M2.95 147.4 H5.3500000000000005 L6.15 148.20000000000002 V150.8 L5.3500000000000005 151.6 H2.95 L2.1500000000000004 150.8 V148.20000000000002 Z" fill="#e4bea4"/><rect x="3.45" y="148.8" width="1.6" height="1.6" fill="#cfa592"/><path d="M10.15 157.0 H14.95 V160.5 H11.75 Z" fill="#82828e"/><path d="M10.15 147 H14.149999999999999 L14.95 147.8 V158.2 H9.35 V147.8 Z" fill="#5e4252"/><rect x="10.15" y="151" width="4" height="5.999999999999999" fill="#85605a"/><rect x="10.65" y="151.2" width="0.6" height="3" fill="#a27870"/><rect x="13.05" y="151.2" width="0.6" height="3" fill="#a27870"/><path d="M10.950000000000001 147.3 H13.350000000000001 L14.15 148.10000000000002 V150.70000000000002 L13.350000000000001 151.5 H10.950000000000001 L10.15 150.70000000000002 V148.10000000000002 Z" fill="#e4bea4"/><rect x="11.450000000000001" y="148.70000000000002" width="1.6" height="1.6" fill="#cfa592"/><rect x="16" y="151.6" width="16" height="4.6" fill="#5e4252"/><rect x="16" y="152.4" width="16" height="3" fill="#85605a"/><rect x="16" y="152.6" width="16" height="0.9" fill="#a27870"/><path d="M18.150000000000002 157.0 H22.950000000000003 V160.5 H19.75 Z" fill="#82828e"/><path d="M18.150000000000002 147 H22.150000000000002 L22.950000000000003 147.8 V158.2 H17.35 V147.8 Z" fill="#5e4252"/><rect x="18.150000000000002" y="151" width="4" height="5.999999999999999" fill="#85605a"/><rect x="18.650000000000002" y="151.2" width="0.6" height="3" fill="#a27870"/><rect x="21.05" y="151.2" width="0.6" height="3" fill="#a27870"/><path d="M18.950000000000003 147.3 H21.35 L22.150000000000002 148.10000000000002 V150.70000000000002 L21.35 151.5 H18.950000000000003 L18.150000000000002 150.70000000000002 V148.10000000000002 Z" fill="#e4bea4"/><rect x="19.450000000000003" y="148.70000000000002" width="1.6" height="1.6" fill="#cfa592"/><path d="M26.150000000000002 157.0 H30.950000000000003 V160.5 H27.75 Z" fill="#82828e"/><path d="M26.150000000000002 147 H30.150000000000002 L30.950000000000003 147.8 V158.2 H25.35 V147.8 Z" fill="#5e4252"/><rect x="26.150000000000002" y="151" width="4" height="5.999999999999999" fill="#85605a"/><rect x="26.650000000000002" y="151.2" width="0.6" height="3" fill="#a27870"/><rect x="29.05" y="151.2" width="0.6" height="3" fill="#a27870"/><path d="M26.950000000000003 147.3 H29.35 L30.150000000000002 148.10000000000002 V150.70000000000002 L29.35 151.5 H26.950000000000003 L26.150000000000002 150.70000000000002 V148.10000000000002 Z" fill="#e4bea4"/><rect x="27.450000000000003" y="148.70000000000002" width="1.6" height="1.6" fill="#cfa592"/><rect x="32" y="151.6" width="16" height="4.6" fill="#5e4252"/><rect x="32" y="152.4" width="16" height="3" fill="#85605a"/><rect x="32" y="152.6" width="16" height="0.9" fill="#a27870"/><path d="M34.15 157.0 H38.95 V160.5 H35.75 Z" fill="#82828e"/><path d="M34.15 147 H38.15 L38.95 147.8 V158.2 H33.35 V147.8 Z" fill="#5e4252"/><rect x="34.15" y="151" width="4" height="5.999999999999999" fill="#85605a"/><rect x="34.65" y="151.2" width="0.6" height="3" fill="#a27870"/><rect x="37.050000000000004" y="151.2" width="0.6" height="3" fill="#a27870"/><path d="M34.949999999999996 147.3 H37.35 L38.15 148.10000000000002 V150.70000000000002 L37.35 151.5 H34.949999999999996 L34.15 150.70000000000002 V148.10000000000002 Z" fill="#e4bea4"/><rect x="35.449999999999996" y="148.70000000000002" width="1.6" height="1.6" fill="#cfa592"/><path d="M42.15 147 H46.15 L46.95 147.8 V160 H41.35 V147.8 Z" fill="#5e4252"/><rect x="42.15" y="151.2" width="4" height="7.6" fill="#85605a"/><path d="M42.949999999999996 147.4 H45.35 L46.15 148.20000000000002 V150.8 L45.35 151.6 H42.949999999999996 L42.15 150.8 V148.20000000000002 Z" fill="#e4bea4"/><rect x="43.449999999999996" y="148.8" width="1.6" height="1.6" fill="#cfa592"/><path d="M2.1500000000000004 160 H6.15 L6.949999999999999 160.8 V176 H1.35 V160.8 Z" fill="#5e4252"/><rect x="2.1500000000000004" y="164.2" width="4" height="10.6" fill="#85605a"/><path d="M2.95 160.4 H5.3500000000000005 L6.15 161.20000000000002 V163.8 L5.3500000000000005 164.6 H2.95 L2.1500000000000004 163.8 V161.20000000000002 Z" fill="#e4bea4"/><rect x="3.45" y="161.8" width="1.6" height="1.6" fill="#cfa592"/><rect x="2.1500000000000004" y="168.6" width="4" height="0.8" fill="#5e4252"/><path d="M2.95 169.4 H5.3500000000000005 L6.15 170.20000000000002 V172.8 L5.3500000000000005 173.6 H2.95 L2.1500000000000004 172.8 V170.20000000000002 Z" fill="#e4bea4"/><rect x="3.45" y="170.8" width="1.6" height="1.6" fill="#cfa592"/><path d="M21.950000000000003 173.0 H26.75 V176.5 H23.55 Z" fill="#82828e"/><path d="M21.950000000000003 163 H25.950000000000003 L26.75 163.8 V174.2 H21.150000000000002 V163.8 Z" fill="#5e4252"/><rect x="21.950000000000003" y="167" width="4" height="5.999999999999999" fill="#85605a"/><rect x="22.450000000000003" y="167.2" width="0.6" height="3" fill="#a27870"/><rect x="24.85" y="167.2" width="0.6" height="3" fill="#a27870"/><path d="M22.750000000000004 163.3 H25.150000000000002 L25.950000000000003 164.10000000000002 V166.70000000000002 L25.150000000000002 167.5 H22.750000000000004 L21.950000000000003 166.70000000000002 V164.10000000000002 Z" fill="#e4bea4"/><rect x="23.250000000000004" y="164.70000000000002" width="1.6" height="1.6" fill="#cfa592"/><path d="M42.15 160 H46.15 L46.95 160.8 V176 H41.35 V160.8 Z" fill="#5e4252"/><rect x="42.15" y="164.2" width="4" height="10.6" fill="#85605a"/><path d="M42.949999999999996 160.4 H45.35 L46.15 161.20000000000002 V163.8 L45.35 164.6 H42.949999999999996 L42.15 163.8 V161.20000000000002 Z" fill="#e4bea4"/><rect x="43.449999999999996" y="161.8" width="1.6" height="1.6" fill="#cfa592"/><rect x="42.15" y="168.6" width="4" height="0.8" fill="#5e4252"/><path d="M42.949999999999996 169.4 H45.35 L46.15 170.20000000000002 V172.8 L45.35 173.6 H42.949999999999996 L42.15 172.8 V170.20000000000002 Z" fill="#e4bea4"/><rect x="43.449999999999996" y="170.8" width="1.6" height="1.6" fill="#cfa592"/><rect x="0" y="183.6" width="16" height="4.6" fill="#5e4252"/><rect x="0" y="184.4" width="16" height="3" fill="#85605a"/><rect x="0" y="184.6" width="16" height="0.9" fill="#a27870"/><path d="M2.1500000000000004 179 H6.15 L6.949999999999999 179.8 V192 H1.35 V179.8 Z" fill="#5e4252"/><rect x="2.1500000000000004" y="183.2" width="4" height="7.6" fill="#85605a"/><path d="M2.95 179.4 H5.3500000000000005 L6.15 180.20000000000002 V182.8 L5.3500000000000005 183.6 H2.95 L2.1500000000000004 182.8 V180.20000000000002 Z" fill="#e4bea4"/><rect x="3.45" y="180.8" width="1.6" height="1.6" fill="#cfa592"/><path d="M10.15 189.0 H14.95 V192.5 H11.75 Z" fill="#82828e"/><path d="M10.15 179 H14.149999999999999 L14.95 179.8 V190.2 H9.35 V179.8 Z" fill="#5e4252"/><rect x="10.15" y="183" width="4" height="5.999999999999999" fill="#85605a"/><rect x="10.65" y="183.2" width="0.6" height="3" fill="#a27870"/><rect x="13.05" y="183.2" width="0.6" height="3" fill="#a27870"/><path d="M10.950000000000001 179.3 H13.350000000000001 L14.15 180.10000000000002 V182.70000000000002 L13.350000000000001 183.5 H10.950000000000001 L10.15 182.70000000000002 V180.10000000000002 Z" fill="#e4bea4"/><rect x="11.450000000000001" y="180.70000000000002" width="1.6" height="1.6" fill="#cfa592"/><rect x="16" y="183.6" width="16" height="4.6" fill="#5e4252"/><rect x="16" y="184.4" width="16" height="3" fill="#85605a"/><rect x="16" y="184.6" width="16" height="0.9" fill="#a27870"/><path d="M18.150000000000002 189.0 H22.950000000000003 V192.5 H19.75 Z" fill="#82828e"/><path d="M18.150000000000002 179 H22.150000000000002 L22.950000000000003 179.8 V190.2 H17.35 V179.8 Z" fill="#5e4252"/><rect x="18.150000000000002" y="183" width="4" height="5.999999999999999" fill="#85605a"/><rect x="18.650000000000002" y="183.2" width="0.6" height="3" fill="#a27870"/><rect x="21.05" y="183.2" width="0.6" height="3" fill="#a27870"/><path d="M18.950000000000003 179.3 H21.35 L22.150000000000002 180.10000000000002 V182.70000000000002 L21.35 183.5 H18.950000000000003 L18.150000000000002 182.70000000000002 V180.10000000000002 Z" fill="#e4bea4"/><rect x="19.450000000000003" y="180.70000000000002" width="1.6" height="1.6" fill="#cfa592"/><path d="M26.150000000000002 189.0 H30.950000000000003 V192.5 H27.75 Z" fill="#82828e"/><path d="M26.150000000000002 179 H30.150000000000002 L30.950000000000003 179.8 V190.2 H25.35 V179.8 Z" fill="#5e4252"/><rect x="26.150000000000002" y="183" width="4" height="5.999999999999999" fill="#85605a"/><rect x="26.650000000000002" y="183.2" width="0.6" height="3" fill="#a27870"/><rect x="29.05" y="183.2" width="0.6" height="3" fill="#a27870"/><path d="M26.950000000000003 179.3 H29.35 L30.150000000000002 180.10000000000002 V182.70000000000002 L29.35 183.5 H26.950000000000003 L26.150000000000002 182.70000000000002 V180.10000000000002 Z" fill="#e4bea4"/><rect x="27.450000000000003" y="180.70000000000002" width="1.6" height="1.6" fill="#cfa592"/><rect x="32" y="183.6" width="16" height="4.6" fill="#5e4252"/><rect x="32" y="184.4" width="16" height="3" fill="#85605a"/><rect x="32" y="184.6" width="16" height="0.9" fill="#a27870"/><path d="M34.15 189.0 H38.95 V192.5 H35.75 Z" fill="#82828e"/><path d="M34.15 179 H38.15 L38.95 179.8 V190.2 H33.35 V179.8 Z" fill="#5e4252"/><rect x="34.15" y="183" width="4" height="5.999999999999999" fill="#85605a"/><rect x="34.65" y="183.2" width="0.6" height="3" fill="#a27870"/><rect x="37.050000000000004" y="183.2" width="0.6" height="3" fill="#a27870"/><path d="M34.949999999999996 179.3 H37.35 L38.15 180.10000000000002 V182.70000000000002 L37.35 183.5 H34.949999999999996 L34.15 182.70000000000002 V180.10000000000002 Z" fill="#e4bea4"/><rect x="35.449999999999996" y="180.70000000000002" width="1.6" height="1.6" fill="#cfa592"/><path d="M42.15 179 H46.15 L46.95 179.8 V192 H41.35 V179.8 Z" fill="#5e4252"/><rect x="42.15" y="183.2" width="4" height="7.6" fill="#85605a"/><path d="M42.949999999999996 179.4 H45.35 L46.15 180.20000000000002 V182.8 L45.35 183.6 H42.949999999999996 L42.15 182.8 V180.20000000000002 Z" fill="#e4bea4"/><rect x="43.449999999999996" y="180.8" width="1.6" height="1.6" fill="#cfa592"/><rect x="48" y="183.6" width="16" height="4.6" fill="#5e4252"/><rect x="48" y="184.4" width="16" height="3" fill="#85605a"/><rect x="48" y="184.6" width="16" height="0.9" fill="#a27870"/><path d="M50.15 189.0 H54.95 V192.5 H51.75 Z" fill="#82828e"/><path d="M50.15 179 H54.15 L54.95 179.8 V190.2 H49.35 V179.8 Z" fill="#5e4252"/><rect x="50.15" y="183" width="4" height="5.999999999999999" fill="#85605a"/><rect x="50.65" y="183.2" width="0.6" height="3" fill="#a27870"/><rect x="53.050000000000004" y="183.2" width="0.6" height="3" fill="#a27870"/><path d="M50.949999999999996 179.3 H53.35 L54.15 180.10000000000002 V182.70000000000002 L53.35 183.5 H50.949999999999996 L50.15 182.70000000000002 V180.10000000000002 Z" fill="#e4bea4"/><rect x="51.449999999999996" y="180.70000000000002" width="1.6" height="1.6" fill="#cfa592"/><path d="M58.15 189.0 H62.95 V192.5 H59.75 Z" fill="#82828e"/><path d="M58.15 179 H62.15 L62.95 179.8 V190.2 H57.35 V179.8 Z" fill="#5e4252"/><rect x="58.15" y="183" width="4" height="5.999999999999999" fill="#85605a"/><rect x="58.65" y="183.2" width="0.6" height="3" fill="#a27870"/><rect x="61.050000000000004" y="183.2" width="0.6" height="3" fill="#a27870"/><path d="M58.949999999999996 179.3 H61.35 L62.15 180.10000000000002 V182.70000000000002 L61.35 183.5 H58.949999999999996 L58.15 182.70000000000002 V180.10000000000002 Z" fill="#e4bea4"/><rect x="59.449999999999996" y="180.70000000000002" width="1.6" height="1.6" fill="#cfa592"/><rect x="64" y="183.6" width="16" height="4.6" fill="#5e4252"/><rect x="64" y="184.4" width="16" height="3" fill="#85605a"/><rect x="64" y="184.6" width="16" height="0.9" fill="#a27870"/><path d="M66.14999999999999 189.0 H70.94999999999999 V192.5 H67.75 Z" fill="#82828e"/><path d="M66.14999999999999 179 H70.14999999999999 L70.94999999999999 179.8 V190.2 H65.35 V179.8 Z" fill="#5e4252"/><rect x="66.14999999999999" y="183" width="4" height="5.999999999999999" fill="#85605a"/><rect x="66.64999999999999" y="183.2" width="0.6" height="3" fill="#a27870"/><rect x="69.05" y="183.2" width="0.6" height="3" fill="#a27870"/><path d="M66.94999999999999 179.3 H69.35 L70.14999999999999 180.10000000000002 V182.70000000000002 L69.35 183.5 H66.94999999999999 L66.14999999999999 182.70000000000002 V180.10000000000002 Z" fill="#e4bea4"/><rect x="67.44999999999999" y="180.70000000000002" width="1.6" height="1.6" fill="#cfa592"/><path d="M74.14999999999999 189.0 H78.94999999999999 V192.5 H75.75 Z" fill="#82828e"/><path d="M74.14999999999999 179 H78.14999999999999 L78.94999999999999 179.8 V190.2 H73.35 V179.8 Z" fill="#5e4252"/><rect x="74.14999999999999" y="183" width="4" height="5.999999999999999" fill="#85605a"/><rect x="74.64999999999999" y="183.2" width="0.6" height="3" fill="#a27870"/><rect x="77.05" y="183.2" width="0.6" height="3" fill="#a27870"/><path d="M74.94999999999999 179.3 H77.35 L78.14999999999999 180.10000000000002 V182.70000000000002 L77.35 183.5 H74.94999999999999 L74.14999999999999 182.70000000000002 V180.10000000000002 Z" fill="#e4bea4"/><rect x="75.44999999999999" y="180.70000000000002" width="1.6" height="1.6" fill="#cfa592"/><path d="M2.1500000000000004 192 H6.15 L6.949999999999999 192.8 V208 H1.35 V192.8 Z" fill="#5e4252"/><rect x="2.1500000000000004" y="196.2" width="4" height="10.6" fill="#85605a"/><path d="M2.95 192.4 H5.3500000000000005 L6.15 193.20000000000002 V195.8 L5.3500000000000005 196.6 H2.95 L2.1500000000000004 195.8 V193.20000000000002 Z" fill="#e4bea4"/><rect x="3.45" y="193.8" width="1.6" height="1.6" fill="#cfa592"/><rect x="2.1500000000000004" y="200.6" width="4" height="0.8" fill="#5e4252"/><path d="M2.95 201.4 H5.3500000000000005 L6.15 202.20000000000002 V204.8 L5.3500000000000005 205.6 H2.95 L2.1500000000000004 204.8 V202.20000000000002 Z" fill="#e4bea4"/><rect x="3.45" y="202.8" width="1.6" height="1.6" fill="#cfa592"/><path d="M18.150000000000002 206.5 H22.950000000000003 V210.0 H19.75 Z" fill="#82828e"/><path d="M18.150000000000002 196.5 H22.150000000000002 L22.950000000000003 197.3 V207.7 H17.35 V197.3 Z" fill="#5e4252"/><rect x="18.150000000000002" y="200.5" width="4" height="5.999999999999999" fill="#85605a"/><rect x="18.650000000000002" y="200.7" width="0.6" height="3" fill="#a27870"/><rect x="21.05" y="200.7" width="0.6" height="3" fill="#a27870"/><path d="M18.950000000000003 196.8 H21.35 L22.150000000000002 197.60000000000002 V200.20000000000002 L21.35 201.0 H18.950000000000003 L18.150000000000002 200.20000000000002 V197.60000000000002 Z" fill="#e4bea4"/><rect x="19.450000000000003" y="198.20000000000002" width="1.6" height="1.6" fill="#cfa592"/><path d="M42.15 192 H46.15 L46.95 192.8 V208 H41.35 V192.8 Z" fill="#5e4252"/><rect x="42.15" y="196.2" width="4" height="10.6" fill="#85605a"/><path d="M42.949999999999996 192.4 H45.35 L46.15 193.20000000000002 V195.8 L45.35 196.6 H42.949999999999996 L42.15 195.8 V193.20000000000002 Z" fill="#e4bea4"/><rect x="43.449999999999996" y="193.8" width="1.6" height="1.6" fill="#cfa592"/><rect x="42.15" y="200.6" width="4" height="0.8" fill="#5e4252"/><path d="M42.949999999999996 201.4 H45.35 L46.15 202.20000000000002 V204.8 L45.35 205.6 H42.949999999999996 L42.15 204.8 V202.20000000000002 Z" fill="#e4bea4"/><rect x="43.449999999999996" y="202.8" width="1.6" height="1.6" fill="#cfa592"/><path d="M58.15 206.5 H62.95 V210.0 H59.75 Z" fill="#82828e"/><path d="M58.15 196.5 H62.15 L62.95 197.3 V207.7 H57.35 V197.3 Z" fill="#5e4252"/><rect x="58.15" y="200.5" width="4" height="5.999999999999999" fill="#85605a"/><rect x="58.65" y="200.7" width="0.6" height="3" fill="#a27870"/><rect x="61.050000000000004" y="200.7" width="0.6" height="3" fill="#a27870"/><path d="M58.949999999999996 196.8 H61.35 L62.15 197.60000000000002 V200.20000000000002 L61.35 201.0 H58.949999999999996 L58.15 200.20000000000002 V197.60000000000002 Z" fill="#e4bea4"/><rect x="59.449999999999996" y="198.20000000000002" width="1.6" height="1.6" fill="#cfa592"/><path d="M9.15 222.0 H13.95 V225.5 H10.75 Z" fill="#82828e"/><path d="M9.15 212 H13.149999999999999 L13.95 212.8 V223.2 H8.35 V212.8 Z" fill="#5e4252"/><rect x="9.15" y="216" width="4" height="5.999999999999999" fill="#85605a"/><rect x="9.65" y="216.2" width="0.6" height="3" fill="#a27870"/><rect x="12.05" y="216.2" width="0.6" height="3" fill="#a27870"/><path d="M9.950000000000001 212.3 H12.350000000000001 L13.15 213.10000000000002 V215.70000000000002 L12.350000000000001 216.5 H9.950000000000001 L9.15 215.70000000000002 V213.10000000000002 Z" fill="#e4bea4"/><rect x="10.450000000000001" y="213.70000000000002" width="1.6" height="1.6" fill="#cfa592"/><path d="M18.150000000000002 222.0 H22.950000000000003 V225.5 H19.75 Z" fill="#82828e"/><path d="M18.150000000000002 212 H22.150000000000002 L22.950000000000003 212.8 V223.2 H17.35 V212.8 Z" fill="#5e4252"/><rect x="18.150000000000002" y="216" width="4" height="5.999999999999999" fill="#85605a"/><rect x="18.650000000000002" y="216.2" width="0.6" height="3" fill="#a27870"/><rect x="21.05" y="216.2" width="0.6" height="3" fill="#a27870"/><path d="M18.950000000000003 212.3 H21.35 L22.150000000000002 213.10000000000002 V215.70000000000002 L21.35 216.5 H18.950000000000003 L18.150000000000002 215.70000000000002 V213.10000000000002 Z" fill="#e4bea4"/><rect x="19.450000000000003" y="213.70000000000002" width="1.6" height="1.6" fill="#cfa592"/><path d="M25.150000000000002 222.0 H29.950000000000003 V225.5 H26.75 Z" fill="#82828e"/><path d="M25.150000000000002 212 H29.150000000000002 L29.950000000000003 212.8 V223.2 H24.35 V212.8 Z" fill="#5e4252"/><rect x="25.150000000000002" y="216" width="4" height="5.999999999999999" fill="#85605a"/><rect x="25.650000000000002" y="216.2" width="0.6" height="3" fill="#a27870"/><rect x="28.05" y="216.2" width="0.6" height="3" fill="#a27870"/><path d="M25.950000000000003 212.3 H28.35 L29.150000000000002 213.10000000000002 V215.70000000000002 L28.35 216.5 H25.950000000000003 L25.150000000000002 215.70000000000002 V213.10000000000002 Z" fill="#e4bea4"/><rect x="26.450000000000003" y="213.70000000000002" width="1.6" height="1.6" fill="#cfa592"/><path d="M34.15 222.0 H38.95 V225.5 H35.75 Z" fill="#82828e"/><path d="M34.15 212 H38.15 L38.95 212.8 V223.2 H33.35 V212.8 Z" fill="#5e4252"/><rect x="34.15" y="216" width="4" height="5.999999999999999" fill="#85605a"/><rect x="34.65" y="216.2" width="0.6" height="3" fill="#a27870"/><rect x="37.050000000000004" y="216.2" width="0.6" height="3" fill="#a27870"/><path d="M34.949999999999996 212.3 H37.35 L38.15 213.10000000000002 V215.70000000000002 L37.35 216.5 H34.949999999999996 L34.15 215.70000000000002 V213.10000000000002 Z" fill="#e4bea4"/><rect x="35.449999999999996" y="213.70000000000002" width="1.6" height="1.6" fill="#cfa592"/><rect x="48" y="151.4" width="16" height="4.2" fill="#3d4264"/><rect x="48" y="152.2" width="16" height="2.6" fill="#e2ecf8"/><path d="M50.7 157.2 H54.8 V160.39999999999998 H51.9 Z" fill="#7f7f8b"/><path d="M49.5 158.2 V149.2 Q49.5 147.2 52.15 147 Q54.8 147.2 54.8 149.2 V158.2 Z" fill="#3d4264"/><path d="M50.3 157.2 V149.6 Q50.3 148 52.15 147.9 Q54.0 148 54.0 149.6 V157.2 Z" fill="#98afe0"/><rect x="50.4" y="148.6" width="3.5" height="1.6" fill="#e2ecf8"/><path d="M58.7 157.2 H62.8 V160.39999999999998 H59.9 Z" fill="#7f7f8b"/><path d="M57.5 158.2 V149.2 Q57.5 147.2 60.15 147 Q62.8 147.2 62.8 149.2 V158.2 Z" fill="#3d4264"/><path d="M58.3 157.2 V149.6 Q58.3 148 60.15 147.9 Q62.0 148 62.0 149.6 V157.2 Z" fill="#98afe0"/><rect x="58.4" y="148.6" width="3.5" height="1.6" fill="#e2ecf8"/><rect x="64" y="151.4" width="16" height="4.2" fill="#3d4264"/><rect x="64" y="152.2" width="16" height="2.6" fill="#e2ecf8"/><path d="M66.7 157.2 H70.8 V160.39999999999998 H67.9 Z" fill="#7f7f8b"/><path d="M65.5 158.2 V149.2 Q65.5 147.2 68.15 147 Q70.8 147.2 70.8 149.2 V158.2 Z" fill="#3d4264"/><path d="M66.3 157.2 V149.6 Q66.3 148 68.15 147.9 Q70.0 148 70.0 149.6 V157.2 Z" fill="#98afe0"/><rect x="66.4" y="148.6" width="3.5" height="1.6" fill="#e2ecf8"/><path d="M74.7 157.2 H78.8 V160.39999999999998 H75.9 Z" fill="#7f7f8b"/><path d="M73.5 158.2 V149.2 Q73.5 147.2 76.15 147 Q78.8 147.2 78.8 149.2 V158.2 Z" fill="#3d4264"/><path d="M74.3 157.2 V149.6 Q74.3 148 76.15 147.9 Q78.0 148 78.0 149.6 V157.2 Z" fill="#98afe0"/><rect x="74.4" y="148.6" width="3.5" height="1.6" fill="#e2ecf8"/><rect x="80" y="151.4" width="16" height="4.2" fill="#3d4264"/><rect x="80" y="152.2" width="16" height="2.6" fill="#e2ecf8"/><rect x="82.6" y="152" width="3" height="8" fill="#3d4264"/><rect x="83.3" y="153" width="1.6" height="7" fill="#e2ecf8"/><path d="M82.7 157.2 H86.8 V160.39999999999998 H83.9 Z" fill="#7f7f8b"/><path d="M81.5 158.2 V149.2 Q81.5 147.2 84.15 147 Q86.8 147.2 86.8 149.2 V158.2 Z" fill="#3d4264"/><path d="M82.3 157.2 V149.6 Q82.3 148 84.15 147.9 Q86.0 148 86.0 149.6 V157.2 Z" fill="#98afe0"/><rect x="82.4" y="148.6" width="3.5" height="1.6" fill="#e2ecf8"/><path d="M90.7 157.2 H94.8 V160.39999999999998 H91.9 Z" fill="#7f7f8b"/><path d="M89.5 158.2 V149.2 Q89.5 147.2 92.15 147 Q94.8 147.2 94.8 149.2 V158.2 Z" fill="#3d4264"/><path d="M90.3 157.2 V149.6 Q90.3 148 92.15 147.9 Q94.0 148 94.0 149.6 V157.2 Z" fill="#98afe0"/><rect x="90.4" y="148.6" width="3.5" height="1.6" fill="#e2ecf8"/><rect x="96" y="151.4" width="16" height="4.2" fill="#3d4264"/><rect x="96" y="152.2" width="16" height="2.6" fill="#e2ecf8"/><path d="M98.7 157.2 H102.8 V160.39999999999998 H99.9 Z" fill="#7f7f8b"/><path d="M97.5 158.2 V149.2 Q97.5 147.2 100.15 147 Q102.8 147.2 102.8 149.2 V158.2 Z" fill="#3d4264"/><path d="M98.3 157.2 V149.6 Q98.3 148 100.15 147.9 Q102.0 148 102.0 149.6 V157.2 Z" fill="#98afe0"/><rect x="98.4" y="148.6" width="3.5" height="1.6" fill="#e2ecf8"/><path d="M106.7 157.2 H110.8 V160.39999999999998 H107.9 Z" fill="#7f7f8b"/><path d="M105.5 158.2 V149.2 Q105.5 147.2 108.15 147 Q110.8 147.2 110.8 149.2 V158.2 Z" fill="#3d4264"/><path d="M106.3 157.2 V149.6 Q106.3 148 108.15 147.9 Q110.0 148 110.0 149.6 V157.2 Z" fill="#98afe0"/><rect x="106.4" y="148.6" width="3.5" height="1.6" fill="#e2ecf8"/><rect x="112" y="151.4" width="16" height="4.2" fill="#3d4264"/><rect x="112" y="152.2" width="16" height="2.6" fill="#e2ecf8"/><rect x="122.6" y="152" width="3" height="8" fill="#3d4264"/><rect x="123.3" y="153" width="1.6" height="7" fill="#e2ecf8"/><path d="M114.7 157.2 H118.8 V160.39999999999998 H115.9 Z" fill="#7f7f8b"/><path d="M113.5 158.2 V149.2 Q113.5 147.2 116.15 147 Q118.8 147.2 118.8 149.2 V158.2 Z" fill="#3d4264"/><path d="M114.3 157.2 V149.6 Q114.3 148 116.15 147.9 Q118.0 148 118.0 149.6 V157.2 Z" fill="#98afe0"/><rect x="114.4" y="148.6" width="3.5" height="1.6" fill="#e2ecf8"/><path d="M122.7 157.2 H126.8 V160.39999999999998 H123.9 Z" fill="#7f7f8b"/><path d="M121.5 158.2 V149.2 Q121.5 147.2 124.15 147 Q126.8 147.2 126.8 149.2 V158.2 Z" fill="#3d4264"/><path d="M122.3 157.2 V149.6 Q122.3 148 124.15 147.9 Q126.0 148 126.0 149.6 V157.2 Z" fill="#98afe0"/><rect x="122.4" y="148.6" width="3.5" height="1.6" fill="#e2ecf8"/><rect x="82.6" y="160" width="3" height="16" fill="#3d4264"/><rect x="83.3" y="161" width="1.6" height="14" fill="#e2ecf8"/><path d="M103.2 173.2 H107.3 V176.39999999999998 H104.4 Z" fill="#7f7f8b"/><path d="M102 174.2 V165.2 Q102 163.2 104.65 163 Q107.3 163.2 107.3 165.2 V174.2 Z" fill="#3d4264"/><path d="M102.8 173.2 V165.6 Q102.8 164 104.65 163.9 Q106.5 164 106.5 165.6 V173.2 Z" fill="#98afe0"/><rect x="102.9" y="164.6" width="3.5" height="1.6" fill="#e2ecf8"/><rect x="122.6" y="160" width="3" height="16" fill="#3d4264"/><rect x="123.3" y="161" width="1.6" height="14" fill="#e2ecf8"/><rect x="80" y="183.4" width="16" height="4.2" fill="#3d4264"/><rect x="80" y="184.2" width="16" height="2.6" fill="#e2ecf8"/><rect x="82.6" y="184" width="3" height="8" fill="#3d4264"/><rect x="83.3" y="185" width="1.6" height="7" fill="#e2ecf8"/><path d="M82.7 189.2 H86.8 V192.39999999999998 H83.9 Z" fill="#7f7f8b"/><path d="M81.5 190.2 V181.2 Q81.5 179.2 84.15 179 Q86.8 179.2 86.8 181.2 V190.2 Z" fill="#3d4264"/><path d="M82.3 189.2 V181.6 Q82.3 180 84.15 179.9 Q86.0 180 86.0 181.6 V189.2 Z" fill="#98afe0"/><rect x="82.4" y="180.6" width="3.5" height="1.6" fill="#e2ecf8"/><path d="M90.7 189.2 H94.8 V192.39999999999998 H91.9 Z" fill="#7f7f8b"/><path d="M89.5 190.2 V181.2 Q89.5 179.2 92.15 179 Q94.8 179.2 94.8 181.2 V190.2 Z" fill="#3d4264"/><path d="M90.3 189.2 V181.6 Q90.3 180 92.15 179.9 Q94.0 180 94.0 181.6 V189.2 Z" fill="#98afe0"/><rect x="90.4" y="180.6" width="3.5" height="1.6" fill="#e2ecf8"/><rect x="96" y="183.4" width="16" height="4.2" fill="#3d4264"/><rect x="96" y="184.2" width="16" height="2.6" fill="#e2ecf8"/><path d="M98.7 189.2 H102.8 V192.39999999999998 H99.9 Z" fill="#7f7f8b"/><path d="M97.5 190.2 V181.2 Q97.5 179.2 100.15 179 Q102.8 179.2 102.8 181.2 V190.2 Z" fill="#3d4264"/><path d="M98.3 189.2 V181.6 Q98.3 180 100.15 179.9 Q102.0 180 102.0 181.6 V189.2 Z" fill="#98afe0"/><rect x="98.4" y="180.6" width="3.5" height="1.6" fill="#e2ecf8"/><path d="M106.7 189.2 H110.8 V192.39999999999998 H107.9 Z" fill="#7f7f8b"/><path d="M105.5 190.2 V181.2 Q105.5 179.2 108.15 179 Q110.8 179.2 110.8 181.2 V190.2 Z" fill="#3d4264"/><path d="M106.3 189.2 V181.6 Q106.3 180 108.15 179.9 Q110.0 180 110.0 181.6 V189.2 Z" fill="#98afe0"/><rect x="106.4" y="180.6" width="3.5" height="1.6" fill="#e2ecf8"/><rect x="112" y="183.4" width="16" height="4.2" fill="#3d4264"/><rect x="112" y="184.2" width="16" height="2.6" fill="#e2ecf8"/><rect x="122.6" y="184" width="3" height="8" fill="#3d4264"/><rect x="123.3" y="185" width="1.6" height="7" fill="#e2ecf8"/><path d="M114.7 189.2 H118.8 V192.39999999999998 H115.9 Z" fill="#7f7f8b"/><path d="M113.5 190.2 V181.2 Q113.5 179.2 116.15 179 Q118.8 179.2 118.8 181.2 V190.2 Z" fill="#3d4264"/><path d="M114.3 189.2 V181.6 Q114.3 180 116.15 179.9 Q118.0 180 118.0 181.6 V189.2 Z" fill="#98afe0"/><rect x="114.4" y="180.6" width="3.5" height="1.6" fill="#e2ecf8"/><path d="M122.7 189.2 H126.8 V192.39999999999998 H123.9 Z" fill="#7f7f8b"/><path d="M121.5 190.2 V181.2 Q121.5 179.2 124.15 179 Q126.8 179.2 126.8 181.2 V190.2 Z" fill="#3d4264"/><path d="M122.3 189.2 V181.6 Q122.3 180 124.15 179.9 Q126.0 180 126.0 181.6 V189.2 Z" fill="#98afe0"/><rect x="122.4" y="180.6" width="3.5" height="1.6" fill="#e2ecf8"/><rect x="67.2" y="192" width="3" height="13" fill="#3d4264"/><rect x="67.9" y="193" width="1.6" height="11" fill="#e2ecf8"/><rect x="83" y="194" width="3" height="13" fill="#3d4264"/><rect x="83.7" y="195" width="1.6" height="11" fill="#e2ecf8"/><rect x="105.8" y="192" width="3" height="13" fill="#3d4264"/><rect x="106.5" y="193" width="1.6" height="11" fill="#e2ecf8"/><rect x="121.8" y="194" width="3" height="13" fill="#3d4264"/><rect x="122.5" y="195" width="1.6" height="11" fill="#e2ecf8"/><path d="M89.7 221.7 H93.8 V224.89999999999998 H90.9 Z" fill="#7f7f8b"/><path d="M88.5 222.7 V213.7 Q88.5 211.7 91.15 211.5 Q93.8 211.7 93.8 213.7 V222.7 Z" fill="#3d4264"/><path d="M89.3 221.7 V214.1 Q89.3 212.5 91.15 212.4 Q93.0 212.5 93.0 214.1 V221.7 Z" fill="#98afe0"/><rect x="89.4" y="213.1" width="3.5" height="1.6" fill="#e2ecf8"/><path d="M99.5 221.7 H103.6 V224.89999999999998 H100.7 Z" fill="#7f7f8b"/><path d="M98.3 222.7 V213.7 Q98.3 211.7 100.95 211.5 Q103.6 211.7 103.6 213.7 V222.7 Z" fill="#3d4264"/><path d="M99.1 221.7 V214.1 Q99.1 212.5 100.95 212.4 Q102.8 212.5 102.8 214.1 V221.7 Z" fill="#98afe0"/><rect x="99.2" y="213.1" width="3.5" height="1.6" fill="#e2ecf8"/><path d="M106.2 221.7 H110.3 V224.89999999999998 H107.4 Z" fill="#7f7f8b"/><path d="M105 222.7 V213.7 Q105 211.7 107.65 211.5 Q110.3 211.7 110.3 213.7 V222.7 Z" fill="#3d4264"/><path d="M105.8 221.7 V214.1 Q105.8 212.5 107.65 212.4 Q109.5 212.5 109.5 214.1 V221.7 Z" fill="#98afe0"/><rect x="105.9" y="213.1" width="3.5" height="1.6" fill="#e2ecf8"/><path d="M115.4 221.7 H119.5 V224.89999999999998 H116.60000000000001 Z" fill="#7f7f8b"/><path d="M114.2 222.7 V213.7 Q114.2 211.7 116.85000000000001 211.5 Q119.5 211.7 119.5 213.7 V222.7 Z" fill="#3d4264"/><path d="M115.0 221.7 V214.1 Q115.0 212.5 116.85000000000001 212.4 Q118.7 212.5 118.7 214.1 V221.7 Z" fill="#98afe0"/><rect x="115.10000000000001" y="213.1" width="3.5" height="1.6" fill="#e2ecf8"/><path d="M128.74 154.42 Q128.96 152.12 130.06 150.51 Q131.16 148.90 132.70 147.98 Q134.24 147.06 135.56 145.91 Q136.88 144.76 137.76 144.99 Q138.64 145.22 139.74 146.60 Q140.84 147.98 141.72 150.05 Q142.60 152.12 143.26 153.04 Q143.92 153.96 143.92 156.03 Q143.92 158.10 142.16 159.02 Q140.40 159.94 138.20 159.94 Q136.00 159.94 133.80 159.48 Q131.60 159.02 130.06 157.87 Q128.52 156.72 128.74 154.42Z" fill="#5f4252"/><path d="M130.06 154.19 Q130.28 152.58 131.16 151.20 Q132.04 149.82 133.36 148.90 Q134.68 147.98 135.87 147.06 Q137.06 146.14 137.85 146.28 Q138.64 146.42 139.52 147.66 Q140.40 148.90 141.06 150.74 Q141.72 152.58 142.16 153.73 Q142.60 154.88 142.38 156.03 Q142.16 157.18 140.84 157.87 Q139.52 158.56 137.76 158.65 Q136.00 158.74 134.24 158.42 Q132.48 158.10 131.16 156.95 Q129.84 155.80 130.06 154.19Z" fill="#a98078"/><path d="M132.04 153.50 Q132.04 152.12 133.14 150.65 Q134.24 149.18 135.69 148.26 Q137.14 147.34 138.16 148.12 Q139.17 148.90 139.56 150.51 Q139.96 152.12 139.65 153.73 Q139.34 155.34 137.89 156.03 Q136.44 156.72 135.12 156.49 Q133.80 156.26 132.92 155.57 Q132.04 154.88 132.04 153.50Z" fill="#dcb6a4"/><path d="M133.80 152.58 Q133.80 151.20 135.12 149.59 Q136.44 147.98 137.32 148.44 Q138.20 148.90 137.76 150.51 Q137.32 152.12 136.22 153.27 Q135.12 154.42 134.46 154.19 Q133.80 153.96 133.80 152.58Z" fill="#ecd8ce"/><path d="M144.74 154.42 Q144.96 152.12 146.06 150.51 Q147.16 148.90 148.70 147.98 Q150.24 147.06 151.56 145.91 Q152.88 144.76 153.76 144.99 Q154.64 145.22 155.74 146.60 Q156.84 147.98 157.72 150.05 Q158.60 152.12 159.26 153.04 Q159.92 153.96 159.92 156.03 Q159.92 158.10 158.16 159.02 Q156.40 159.94 154.20 159.94 Q152.00 159.94 149.80 159.48 Q147.60 159.02 146.06 157.87 Q144.52 156.72 144.74 154.42Z" fill="#5f4252"/><path d="M146.06 154.19 Q146.28 152.58 147.16 151.20 Q148.04 149.82 149.36 148.90 Q150.68 147.98 151.87 147.06 Q153.06 146.14 153.85 146.28 Q154.64 146.42 155.52 147.66 Q156.40 148.90 157.06 150.74 Q157.72 152.58 158.16 153.73 Q158.60 154.88 158.38 156.03 Q158.16 157.18 156.84 157.87 Q155.52 158.56 153.76 158.65 Q152.00 158.74 150.24 158.42 Q148.48 158.10 147.16 156.95 Q145.84 155.80 146.06 154.19Z" fill="#a98078"/><path d="M148.04 153.50 Q148.04 152.12 149.14 150.65 Q150.24 149.18 151.69 148.26 Q153.14 147.34 154.16 148.12 Q155.17 148.90 155.56 150.51 Q155.96 152.12 155.65 153.73 Q155.34 155.34 153.89 156.03 Q152.44 156.72 151.12 156.49 Q149.80 156.26 148.92 155.57 Q148.04 154.88 148.04 153.50Z" fill="#dcb6a4"/><path d="M149.80 152.58 Q149.80 151.20 151.12 149.59 Q152.44 147.98 153.32 148.44 Q154.20 148.90 153.76 150.51 Q153.32 152.12 152.22 153.27 Q151.12 154.42 150.46 154.19 Q149.80 153.96 149.80 152.58Z" fill="#ecd8ce"/><rect x="128" y="160" width="128" height="16" fill="#5068d8"/><path d="M130 165 Q136 170 140 168 M150 170 Q156 166 160 172 M178 165 Q184 172 190 170 M206 166 Q210 172 218 170 M232 166 Q238 170 244 168" stroke="#8ea0f0" stroke-width=".8" fill="none"/><rect x="256" y="144" width="48" height="48" fill="#e6eff0"/><rect x="264" y="154" width="20" height="20" rx="6" fill="#cfe0f0"/><path d="M268 170L280 158" stroke="#fff" stroke-width="2"/><path d="M131 190 Q131 177 152 176 Q173 177 173 190 L173 208 Q170 223 152 224 Q134 223 131 208Z" fill="#5a6080"/><path d="M133 190 Q133 179 152 178 Q171 179 171 190 L171 207 Q168 221 152 222 Q136 221 133 207Z" fill="#dfe6ee"/><ellipse cx="152" cy="197" rx="15" ry="13" fill="#3c78c8"/><ellipse cx="152" cy="194" rx="7" ry="8" fill="#5a9ae0"/><path d="M146 182L152 192L158 182M152 180V190" stroke="#f0f8ff" stroke-width="1.6" fill="none"/><rect x="146" y="213" width="12" height="9" fill="#c8d2de" stroke="#6a7080" stroke-width=".6"/><path d="M178 186 Q178 176 192 176 Q206 176 206 186 L206 200 Q204 206 198 207 L192 205 L186 207 Q180 206 178 200Z" fill="#24602c"/><path d="M180 186 Q180 178 192 178 Q204 178 204 186 L204 198 Q200 203 192 202 Q184 203 180 198Z" fill="#3a9a40"/><circle cx="187" cy="185" r="4" fill="#5ab84a" opacity=".7"/><path d="M210 186 L216 178 H236 L242 186 L240 200 L234 204 H218 L212 200Z" fill="#5a4038"/><ellipse cx="226" cy="184" rx="10" ry="5" fill="#e0c870" stroke="#a08040" stroke-width=".6"/><path d="M212 198 L208 204 M240 198 L244 204" stroke="#3a6a2a" stroke-width="1.5"/><path d="M184 210 L190 220 V222 H178 V220 Z" fill="#585858"/><path d="M200 210 L206 220 V222 H194 V220 Z" fill="#c87a30"/><path d="M216 210 L222 220 V222 H210 V220 Z" fill="#9aa0a8"/><path d="M232 210 L238 220 V222 H226 V220 Z" fill="#2a2222"/><path d="M248 210 L254 220 V222 H242 V220 Z" fill="#a0a8a8"/><path d="M184 226 L190 236 V238 H178 V236 Z" fill="#e0b050"/><path d="M200 226 L206 236 V238 H194 V236 Z" fill="#8898b8"/><path d="M216 226 L222 236 V238 H210 V236 Z" fill="#3a9a3a"/><path d="M232 226 L238 236 V238 H226 V236 Z" fill="#c03838"/><path d="M248 226 L254 236 V238 H242 V236 Z" fill="#60a0d8"/><rect x="258" y="200" width="30" height="40" rx="4" fill="#dfe6ec" stroke="#a8b0bc" stroke-width="1"/><circle cx="272" cy="196" r="8" fill="#e6ecf0" stroke="#b0b8c0"/><rect x="352" y="192" width="16" height="16" fill="#6a8ee0"/><rect x="291" y="228" width="11" height="10" rx="1" fill="#2a3a88" stroke="#4a4a5a" stroke-width=".8"/><rect x="307" y="228" width="11" height="10" rx="1" fill="#c0c8d8" stroke="#4a4a5a" stroke-width=".8"/><rect x="323" y="228" width="11" height="10" rx="1" fill="#2a3a88" stroke="#4a4a5a" stroke-width=".8"/><rect x="339" y="228" width="11" height="10" rx="1" fill="#c8ccd4" stroke="#4a4a5a" stroke-width=".8"/><rect x="355" y="228" width="11" height="10" rx="1" fill="#b88030" stroke="#4a4a5a" stroke-width=".8"/><rect x="0.5" y="231" width="143" height="154" rx="3" fill="#4a4c66"/><rect x="2" y="232.5" width="140" height="45" rx="3" fill="#f6f7fb" stroke="#3a3e60" stroke-width="1.2"/><path d="M4 244H140M4 256H140M4 268H140M20 234V276M40 234V276M60 234V276M80 234V276M100 234V276M120 234V276" stroke="#c8d2e8" stroke-width=".5"/><rect x="1.5" y="278.5" width="141" height="105" fill="#dfe6f4"/><rect x="1.5" y="280" width="141" height="5" fill="#b8c6e4"/><rect x="1.5" y="285" width="141" height="1.5" fill="#f4f6fb"/><rect x="1.5" y="307" width="141" height="5" fill="#b8c6e4"/><rect x="1.5" y="312" width="141" height="1.5" fill="#f4f6fb"/><rect x="1.5" y="333" width="141" height="5" fill="#b8c6e4"/><rect x="1.5" y="338" width="141" height="1.5" fill="#f4f6fb"/><rect x="1.5" y="359" width="141" height="5" fill="#b8c6e4"/><rect x="1.5" y="364" width="141" height="1.5" fill="#f4f6fb"/><rect x="3.5" y="290" width="9" height="15" fill="#3a7ad0" stroke="#283c78" stroke-width=".8"/><path d="M5 302L11 293" stroke="#9cc4f0" stroke-width=".7"/><rect x="19.5" y="290" width="9" height="15" fill="#3a7ad0" stroke="#283c78" stroke-width=".8"/><path d="M21 302L27 293" stroke="#9cc4f0" stroke-width=".7"/><rect x="35.5" y="290" width="9" height="15" fill="#3a7ad0" stroke="#283c78" stroke-width=".8"/><path d="M37 302L43 293" stroke="#9cc4f0" stroke-width=".7"/><rect x="51.5" y="290" width="9" height="15" fill="#3a7ad0" stroke="#283c78" stroke-width=".8"/><path d="M53 302L59 293" stroke="#9cc4f0" stroke-width=".7"/><rect x="67.5" y="290" width="9" height="15" fill="#3a7ad0" stroke="#283c78" stroke-width=".8"/><path d="M69 302L75 293" stroke="#9cc4f0" stroke-width=".7"/><rect x="83.5" y="290" width="9" height="15" fill="#3a7ad0" stroke="#283c78" stroke-width=".8"/><path d="M85 302L91 293" stroke="#9cc4f0" stroke-width=".7"/><rect x="99.5" y="290" width="9" height="15" fill="#3a7ad0" stroke="#283c78" stroke-width=".8"/><path d="M101 302L107 293" stroke="#9cc4f0" stroke-width=".7"/><rect x="115.5" y="290" width="9" height="15" fill="#3a7ad0" stroke="#283c78" stroke-width=".8"/><path d="M117 302L123 293" stroke="#9cc4f0" stroke-width=".7"/><rect x="131.5" y="290" width="9" height="15" fill="#3a7ad0" stroke="#283c78" stroke-width=".8"/><path d="M133 302L139 293" stroke="#9cc4f0" stroke-width=".7"/><rect x="3.5" y="315" width="9" height="17" fill="#3a7ad0" stroke="#283c78" stroke-width=".8"/><path d="M5 329L11 318" stroke="#9cc4f0" stroke-width=".7"/><rect x="19.5" y="315" width="9" height="17" fill="#3a7ad0" stroke="#283c78" stroke-width=".8"/><path d="M21 329L27 318" stroke="#9cc4f0" stroke-width=".7"/><rect x="35.5" y="315" width="9" height="17" fill="#3a7ad0" stroke="#283c78" stroke-width=".8"/><path d="M37 329L43 318" stroke="#9cc4f0" stroke-width=".7"/><rect x="51.5" y="315" width="9" height="17" fill="#3a7ad0" stroke="#283c78" stroke-width=".8"/><path d="M53 329L59 318" stroke="#9cc4f0" stroke-width=".7"/><rect x="67.5" y="315" width="9" height="17" fill="#3a7ad0" stroke="#283c78" stroke-width=".8"/><path d="M69 329L75 318" stroke="#9cc4f0" stroke-width=".7"/><rect x="83.5" y="315" width="9" height="17" fill="#3a7ad0" stroke="#283c78" stroke-width=".8"/><path d="M85 329L91 318" stroke="#9cc4f0" stroke-width=".7"/><rect x="99.5" y="315" width="9" height="17" fill="#3a7ad0" stroke="#283c78" stroke-width=".8"/><path d="M101 329L107 318" stroke="#9cc4f0" stroke-width=".7"/><rect x="115.5" y="315" width="9" height="17" fill="#3a7ad0" stroke="#283c78" stroke-width=".8"/><path d="M117 329L123 318" stroke="#9cc4f0" stroke-width=".7"/><rect x="131.5" y="315" width="9" height="17" fill="#3a7ad0" stroke="#283c78" stroke-width=".8"/><path d="M133 329L139 318" stroke="#9cc4f0" stroke-width=".7"/><rect x="3.5" y="341" width="9" height="17" fill="#3a7ad0" stroke="#283c78" stroke-width=".8"/><path d="M5 355L11 344" stroke="#9cc4f0" stroke-width=".7"/><rect x="19.5" y="341" width="9" height="17" fill="#3a7ad0" stroke="#283c78" stroke-width=".8"/><path d="M21 355L27 344" stroke="#9cc4f0" stroke-width=".7"/><rect x="35.5" y="341" width="9" height="17" fill="#3a7ad0" stroke="#283c78" stroke-width=".8"/><path d="M37 355L43 344" stroke="#9cc4f0" stroke-width=".7"/><rect x="51.5" y="341" width="9" height="17" fill="#3a7ad0" stroke="#283c78" stroke-width=".8"/><path d="M53 355L59 344" stroke="#9cc4f0" stroke-width=".7"/><rect x="67.5" y="341" width="9" height="17" fill="#3a7ad0" stroke="#283c78" stroke-width=".8"/><path d="M69 355L75 344" stroke="#9cc4f0" stroke-width=".7"/><rect x="83.5" y="341" width="9" height="17" fill="#3a7ad0" stroke="#283c78" stroke-width=".8"/><path d="M85 355L91 344" stroke="#9cc4f0" stroke-width=".7"/><rect x="99.5" y="341" width="9" height="17" fill="#3a7ad0" stroke="#283c78" stroke-width=".8"/><path d="M101 355L107 344" stroke="#9cc4f0" stroke-width=".7"/><rect x="115.5" y="341" width="9" height="17" fill="#3a7ad0" stroke="#283c78" stroke-width=".8"/><path d="M117 355L123 344" stroke="#9cc4f0" stroke-width=".7"/><rect x="131.5" y="341" width="9" height="17" fill="#3a7ad0" stroke="#283c78" stroke-width=".8"/><path d="M133 355L139 344" stroke="#9cc4f0" stroke-width=".7"/><rect x="3.5" y="365" width="9" height="18" fill="#3a7ad0" stroke="#283c78" stroke-width=".8"/><path d="M5 380L11 368" stroke="#9cc4f0" stroke-width=".7"/><rect x="19.5" y="365" width="9" height="18" fill="#3a7ad0" stroke="#283c78" stroke-width=".8"/><path d="M21 380L27 368" stroke="#9cc4f0" stroke-width=".7"/><rect x="35.5" y="365" width="9" height="18" fill="#3a7ad0" stroke="#283c78" stroke-width=".8"/><path d="M37 380L43 368" stroke="#9cc4f0" stroke-width=".7"/><rect x="51.5" y="365" width="9" height="18" fill="#3a7ad0" stroke="#283c78" stroke-width=".8"/><path d="M53 380L59 368" stroke="#9cc4f0" stroke-width=".7"/><rect x="67.5" y="365" width="9" height="18" fill="#5a8ad8" stroke="#283c78" stroke-width=".8"/><path d="M69 380L75 368" stroke="#9cc4f0" stroke-width=".7"/><rect x="83.5" y="365" width="9" height="18" fill="#3a7ad0" stroke="#283c78" stroke-width=".8"/><path d="M85 380L91 368" stroke="#9cc4f0" stroke-width=".7"/><rect x="99.5" y="365" width="9" height="18" fill="#3a7ad0" stroke="#283c78" stroke-width=".8"/><path d="M101 380L107 368" stroke="#9cc4f0" stroke-width=".7"/><rect x="115.5" y="365" width="9" height="18" fill="#3a7ad0" stroke="#283c78" stroke-width=".8"/><path d="M117 380L123 368" stroke="#9cc4f0" stroke-width=".7"/><rect x="131.5" y="365" width="9" height="18" fill="#3a7ad0" stroke="#283c78" stroke-width=".8"/><path d="M133 380L139 368" stroke="#9cc4f0" stroke-width=".7"/><rect x="145" y="242" width="78" height="63" rx="2" fill="#3c3a30"/><rect x="146.5" y="243.5" width="75" height="29" rx="2" fill="#545660" stroke="#9aa040" stroke-width="1"/><path d="M176 252 L190 247 L186 264 L174 268 L180 258Z" fill="#d8a84a"/><rect x="145" y="273" width="78" height="32" fill="#6a6650"/><rect x="145" y="276" width="78" height="3" fill="#9aa040"/><rect x="145" y="281" width="78" height="2" fill="#4a4838"/><rect x="148" y="285" width="10" height="17" fill="#3a7ad0" stroke="#2a3a50" stroke-width=".8"/><rect x="164" y="285" width="10" height="17" fill="#3a7ad0" stroke="#2a3a50" stroke-width=".8"/><rect x="196" y="285" width="10" height="17" fill="#3a7ad0" stroke="#2a3a50" stroke-width=".8"/><rect x="212" y="285" width="10" height="17" fill="#3a7ad0" stroke="#2a3a50" stroke-width=".8"/><rect x="179" y="284" width="11" height="20" fill="#3a6aa8" stroke="#c8a040" stroke-width="1"/><rect x="225.5" y="242" width="78" height="31" rx="3" fill="#e0685c" stroke="#a83a3a" stroke-width="1"/><rect x="227" y="244" width="75" height="9" fill="#e65850"/><rect x="225.5" y="273" width="78" height="32" fill="#f6f6fa" stroke="#8a8aa0" stroke-width=".6"/><path d="M226 277H303M226 281H303" stroke="#d84040" stroke-width="1.6"/><circle cx="264.5" cy="277" r="7" fill="#e8e8f0" stroke="#c03030" stroke-width="1.8"/><path d="M264.5 273V281M260.5 277H268.5" stroke="#d03030" stroke-width="1.8"/><rect x="228.5" y="285" width="12" height="17" fill="#3a7ad0"/><rect x="292.5" y="285" width="12" height="17" fill="#3a7ad0"/><rect x="259" y="285" width="11" height="19" fill="#a8c8f0" stroke="#6a7a9a" stroke-width=".8"/><rect x="305.5" y="242" width="78" height="31" rx="3" fill="#2c4c9c" stroke="#1a2a60" stroke-width="1"/><rect x="305.5" y="273" width="78" height="32" fill="#eef0f6" stroke="#8a8aa0" stroke-width=".6"/><rect x="305.5" y="276" width="78" height="5" fill="#c8d4ea"/><rect x="308.5" y="285" width="12" height="17" fill="#3a7ad0"/><rect x="340.5" y="285" width="12" height="17" fill="#3a7ad0"/><rect x="372.5" y="285" width="12" height="17" fill="#3a7ad0"/><rect x="145" y="310" width="78" height="59" fill="#3e2a20"/><rect x="145" y="310" width="78" height="10" fill="#d49460"/><path d="M145 313H223M145 316.5H223" stroke="#b07040" stroke-width=".6"/><path d="M145 326H223M145 333H223M145 340H223M145 347H223" stroke="#6a4230" stroke-width="2"/><rect x="145" y="349" width="78" height="3" fill="#c08850"/><rect x="145" y="354" width="78" height="15" fill="#a46a38"/><path d="M145 358H223M145 362H223M145 366H223" stroke="#7a4a28" stroke-width=".7"/><rect x="225.5" y="310" width="78" height="59" fill="#3e2a20"/><rect x="225.5" y="310" width="78" height="10" fill="#d49460"/><path d="M225.5 313H303.5M225.5 316.5H303.5" stroke="#b07040" stroke-width=".6"/><path d="M225.5 326H303.5M225.5 333H303.5M225.5 340H303.5M225.5 347H303.5" stroke="#6a4230" stroke-width="2"/><rect x="225.5" y="349" width="78" height="3" fill="#c08850"/><rect x="225.5" y="354" width="78" height="15" fill="#a46a38"/><path d="M225.5 358H303.5M225.5 362H303.5M225.5 366H303.5" stroke="#7a4a28" stroke-width=".7"/><rect x="305.5" y="310" width="78" height="59" fill="#3e2a20"/><rect x="305.5" y="310" width="78" height="10" fill="#d49460"/><path d="M305.5 313H383.5M305.5 316.5H383.5" stroke="#b07040" stroke-width=".6"/><path d="M305.5 326H383.5M305.5 333H383.5M305.5 340H383.5M305.5 347H383.5" stroke="#6a4230" stroke-width="2"/><rect x="305.5" y="349" width="78" height="3" fill="#c08850"/><rect x="305.5" y="354" width="78" height="15" fill="#a46a38"/><path d="M305.5 358H383.5M305.5 362H383.5M305.5 366H383.5" stroke="#7a4a28" stroke-width=".7"/><rect x="229.0" y="355" width="9" height="12" fill="#f4f4f4" stroke="#3a2a2a" stroke-width=".9"/><path d="M233.5 355V367M229.0 361H238.0" stroke="#3a2a2a" stroke-width=".6"/><rect x="245.0" y="355" width="9" height="12" fill="#f4f4f4" stroke="#3a2a2a" stroke-width=".9"/><path d="M249.5 355V367M245.0 361H254.0" stroke="#3a2a2a" stroke-width=".6"/><rect x="261.0" y="355" width="9" height="12" fill="#f4f4f4" stroke="#3a2a2a" stroke-width=".9"/><path d="M265.5 355V367M261.0 361H270.0" stroke="#3a2a2a" stroke-width=".6"/><rect x="277.0" y="355" width="9" height="12" fill="#f4f4f4" stroke="#3a2a2a" stroke-width=".9"/><path d="M281.5 355V367M277.0 361H286.0" stroke="#3a2a2a" stroke-width=".6"/><rect x="293.0" y="355" width="9" height="12" fill="#f4f4f4" stroke="#3a2a2a" stroke-width=".9"/><path d="M297.5 355V367M293.0 361H302.0" stroke="#3a2a2a" stroke-width=".6"/><rect x="164" y="358" width="11" height="6" fill="#6aa0e0"/><rect x="326" y="358" width="11" height="6" fill="#6aa0e0"/><path d="M199.5 330 v8 M195.5 336 q4 4 8 0" stroke="#f0f0f0" stroke-width="1.3" fill="none"/><path d="M360 330 v8 M356 336 q4 4 8 0" stroke="#f0f0f0" stroke-width="1.3" fill="none"/><rect x="0.5" y="389.5" width="78" height="59" rx="3" fill="#4a4c66"/><rect x="2" y="391" width="75" height="28" rx="3" fill="#f6f7fb" stroke="#3a3e60" stroke-width="1.2"/><rect x="1.5" y="420" width="76" height="28" fill="#dfe6f4"/><rect x="1.5" y="421" width="76" height="4" fill="#b8c6e4"/><rect x="3.5" y="430" width="9" height="16" fill="#3a7ad0" stroke="#283c78" stroke-width=".8"/><rect x="19.5" y="430" width="9" height="16" fill="#3a7ad0" stroke="#283c78" stroke-width=".8"/><rect x="35.5" y="430" width="9" height="16" fill="#b8c8e0" stroke="#283c78" stroke-width=".8"/><rect x="51.5" y="430" width="9" height="16" fill="#3a7ad0" stroke="#283c78" stroke-width=".8"/><rect x="67.5" y="430" width="9" height="16" fill="#3a7ad0" stroke="#283c78" stroke-width=".8"/><rect x="80.5" y="389.5" width="95" height="59" fill="#3a3030"/><rect x="80.5" y="389.5" width="95" height="8" fill="#a8b0c0"/><path d="M81 393H175" stroke="#70788a" stroke-width=".7"/><path d="M81 403H175M81 410H175M81 417H175" stroke="#282020" stroke-width="2"/><rect x="80.5" y="420" width="95" height="3" fill="#a8b0c0"/><rect x="80.5" y="425" width="95" height="23" fill="#a06a34"/><path d="M81 431H175M81 437H175M81 443H175" stroke="#6a4020" stroke-width=".8"/><rect x="97" y="431" width="13" height="8" fill="#6aa0e0"/><rect x="147" y="429" width="11" height="10" fill="#6aa0e0"/><rect x="177" y="389.5" width="79" height="59" fill="#b02a34"/><rect x="177" y="389.5" width="79" height="10" fill="#e8806a"/><path d="M177 405H256M177 411H256M177 417H256" stroke="#6a1a22" stroke-width="2.4"/><rect x="177" y="420" width="79" height="4" fill="#e06a50"/><rect x="179" y="427" width="75" height="20" fill="#f8f8f8"/><circle cx="200" cy="438" r="4.5" fill="#4a7ac8" stroke="#2a3a6a" stroke-width=".8"/><rect x="228.5" y="427" width="13" height="20" fill="#e0c8c0" stroke="#c06060" stroke-width=".8"/><rect x="177" y="424" width="2" height="24" fill="#b02a34"/><rect x="254" y="424" width="2" height="24" fill="#b02a34"/><path d="M16 0V144" stroke="#b6b6b6" stroke-width="1.3"/><path d="M32 0V144" stroke="#b6b6b6" stroke-width="1.3"/><path d="M48 0V144" stroke="#b6b6b6" stroke-width="1.3"/><path d="M64 0V144" stroke="#b6b6b6" stroke-width="1.3"/><path d="M80 0V144" stroke="#b6b6b6" stroke-width="1.3"/><path d="M96 0V144" stroke="#b6b6b6" stroke-width="1.3"/><path d="M112 0V144" stroke="#b6b6b6" stroke-width="1.3"/><path d="M128 0V144" stroke="#b6b6b6" stroke-width="1.3"/><path d="M144 0V144" stroke="#b6b6b6" stroke-width="1.3"/><path d="M160 0V144" stroke="#b6b6b6" stroke-width="1.3"/><path d="M176 0V144" stroke="#b6b6b6" stroke-width="1.3"/><path d="M192 0V144" stroke="#b6b6b6" stroke-width="1.3"/><path d="M208 0V144" stroke="#b6b6b6" stroke-width="1.3"/><path d="M224 0V144" stroke="#b6b6b6" stroke-width="1.3"/><path d="M240 0V144" stroke="#b6b6b6" stroke-width="1.3"/><path d="M256 0V144" stroke="#b6b6b6" stroke-width="1.3"/><path d="M272 0V144" stroke="#b6b6b6" stroke-width="1.3"/><path d="M288 0V144" stroke="#b6b6b6" stroke-width="1.3"/><path d="M304 0V144" stroke="#b6b6b6" stroke-width="1.3"/><path d="M320 0V144" stroke="#b6b6b6" stroke-width="1.3"/><path d="M336 0V144" stroke="#b6b6b6" stroke-width="1.3"/><path d="M352 0V144" stroke="#b6b6b6" stroke-width="1.3"/><path d="M368 0V144" stroke="#b6b6b6" stroke-width="1.3"/><path d="M0 16H384" stroke="#b6b6b6" stroke-width="1.3"/><path d="M0 32H384" stroke="#b6b6b6" stroke-width="1.3"/><path d="M0 48H384" stroke="#b6b6b6" stroke-width="1.3"/><path d="M0 64H384" stroke="#b6b6b6" stroke-width="1.3"/><path d="M0 80H384" stroke="#b6b6b6" stroke-width="1.3"/><path d="M0 96H384" stroke="#b6b6b6" stroke-width="1.3"/><path d="M0 112H384" stroke="#b6b6b6" stroke-width="1.3"/><path d="M0 128H384" stroke="#b6b6b6" stroke-width="1.3"/><path d="M0 144H144M160 144H272M288 144H384" stroke="#b6b6b6" stroke-width="1.3"/><path d="M0 240H384" stroke="#b6b6b6" stroke-width="1.3"/><path d="M0 256H384" stroke="#b6b6b6" stroke-width="1.3"/><path d="M0 272H384" stroke="#b6b6b6" stroke-width="1.3"/><path d="M0 288H384" stroke="#b6b6b6" stroke-width="1.3"/><path d="M0 304H384" stroke="#b6b6b6" stroke-width="1.3"/><path d="M0 320H384" stroke="#b6b6b6" stroke-width="1.3"/><path d="M0 336H384" stroke="#b6b6b6" stroke-width="1.3"/><path d="M0 352H384" stroke="#b6b6b6" stroke-width="1.3"/><path d="M0 368H384" stroke="#b6b6b6" stroke-width="1.3"/><path d="M0 384H256" stroke="#b6b6b6" stroke-width="1.3"/><path d="M0 400H256" stroke="#b6b6b6" stroke-width="1.3"/><path d="M0 416H256" stroke="#b6b6b6" stroke-width="1.3"/><path d="M0 432H256" stroke="#b6b6b6" stroke-width="1.3"/><path d="M16 232V448" stroke="#b6b6b6" stroke-width="1.3"/><path d="M32 232V448" stroke="#b6b6b6" stroke-width="1.3"/><path d="M48 232V448" stroke="#b6b6b6" stroke-width="1.3"/><path d="M64 232V448" stroke="#b6b6b6" stroke-width="1.3"/><path d="M80 232V448" stroke="#b6b6b6" stroke-width="1.3"/><path d="M96 232V448" stroke="#b6b6b6" stroke-width="1.3"/><path d="M112 232V448" stroke="#b6b6b6" stroke-width="1.3"/><path d="M128 232V448" stroke="#b6b6b6" stroke-width="1.3"/><path d="M144 240V369M144 388V448" stroke="#b6b6b6" stroke-width="1.3"/><path d="M160 240V369M160 388V448" stroke="#b6b6b6" stroke-width="1.3"/><path d="M176 240V369M176 388V448" stroke="#b6b6b6" stroke-width="1.3"/><path d="M192 240V369M192 388V448" stroke="#b6b6b6" stroke-width="1.3"/><path d="M208 240V369M208 388V448" stroke="#b6b6b6" stroke-width="1.3"/><path d="M224 240V369M224 388V448" stroke="#b6b6b6" stroke-width="1.3"/><path d="M240 240V369M240 388V448" stroke="#b6b6b6" stroke-width="1.3"/><path d="M256 240V369M256 388V448" stroke="#b6b6b6" stroke-width="1.3"/><path d="M272 240V369" stroke="#b6b6b6" stroke-width="1.3"/><path d="M288 240V369" stroke="#b6b6b6" stroke-width="1.3"/><path d="M304 240V369" stroke="#b6b6b6" stroke-width="1.3"/><path d="M320 240V369" stroke="#b6b6b6" stroke-width="1.3"/><path d="M336 240V369" stroke="#b6b6b6" stroke-width="1.3"/><path d="M352 240V369" stroke="#b6b6b6" stroke-width="1.3"/><path d="M368 240V369" stroke="#b6b6b6" stroke-width="1.3"/></svg><div class="a" style="left:2313px;top:1880px;width:711px;height:1px;background:#a8a8a8"></div><div class="a" style="left:2313px;top:1881px;width:711px;height:68px;background:#ececec;border-radius:0 0 0 12px"></div><div class="a" style="left:2313px;top:1886px;width:510px;height:54px;background:linear-gradient(#ececec,#d6d6d6);border-top:1px solid #f6f6f6"></div><svg class="a" style="left:2324px;top:1896px;" width="36" height="36" viewBox="0 0 36 36"><defs><radialGradient id="glow2"><stop offset="0.4" stop-color="#fff04a"/><stop offset="1" stop-color="#fff04a" stop-opacity="0"/></radialGradient></defs><rect x="2.5" y="4" width="25" height="29" rx="1" fill="#eeeeea" stroke="#a8a8a4" stroke-width="1.4"/><circle cx="22" cy="9" r="9" fill="url(#glow2)"/><path d="M22 4L23.6 7.4L27.2 7.8L24.5 10.2L25.3 13.8L22 12L18.7 13.8L19.5 10.2L16.8 7.8L20.4 7.4Z" fill="#fff" stroke="#f0d000" stroke-width="1"/></svg><svg class="a" style="left:2381px;top:1896px;" width="36" height="36" viewBox="0 0 36 36"><path d="M7 3H23L30 10V33H7Z" fill="#eef2f2" stroke="#c8d0d0" stroke-width="1.4"/><path d="M2 21H16M12 16L17 21L12 26" stroke="#c4ccd0" stroke-width="2.2" fill="none"/></svg><svg class="a" style="left:2445px;top:1896px;" width="36" height="36" viewBox="0 0 36 36"><path d="M3 3H19L26 10V33H3Z" fill="#f2f6f8" stroke="#90a8b0" stroke-width="1.4"/><path d="M12 23H30M26 18L31 23L26 28" stroke="#a8c0c8" stroke-width="2.2" fill="none"/></svg><svg class="a" style="left:2504px;top:1896px;" width="36" height="36" viewBox="0 0 36 36"><path d="M3 3H19L26 10V33H3Z" fill="#ececec" stroke="#a8a8a8" stroke-width="1.4"/><path d="M10 30L22 18M18 12a6 6 0 1 0 8 8" stroke="#8a8a8a" stroke-width="3.2" fill="none"/><path d="M22 32L32 22" stroke="#e0e0e0" stroke-width="2"/></svg><svg class="a" style="left:2562px;top:1896px;" width="36" height="36" viewBox="0 0 36 36"><rect x="6" y="2" width="24" height="31" fill="#eaeaea" stroke="#b8b8b8" stroke-width="1.2"/><path d="M3 18Q4 6 15 6L13 2L22 8L13 14L14 10Q8 10 7 19Z" fill="#e07a10" stroke="#9a4a00" stroke-width=".8"/><path d="M33 17Q32 29 21 29L23 33L14 27L23 21L22 25Q28 25 29 16Z" fill="#10c060" stroke="#0a7a3a" stroke-width=".8"/></svg><svg class="a" style="left:2623px;top:1895px;" width="34" height="36" viewBox="0 0 34 36"><ellipse cx="17" cy="6" rx="14" ry="5" fill="#7a7a7a" stroke="#333" stroke-width="1.5"/><ellipse cx="17" cy="6" rx="5" ry="2" fill="#ccc"/><path d="M4 8 L6 31 Q17 36 28 31 L30 8" fill="#8a8a8a" stroke="#333" stroke-width="1.5"/><path d="M11 13V31M17 13V33M23 13V31" stroke="#555" stroke-width="1.8"/></svg><svg class="a" style="left:2780px;top:1902px;" width="34" height="26" viewBox="0 0 34 26"><path d="M29 3 Q31 15 17 15 H7" fill="none" stroke="#666" stroke-width="3.6"/><path d="M10 8 L2 15 L10 22Z" fill="#666"/></svg><div class="a" style="left:2828px;top:1895px;width:185px;height:41px;background:#fff;border-radius:10px;box-shadow:0 0 0 1px #d8d8d8, 0 1px 2px rgba(0,0,0,.15)"></div><div class="t" style="left:2832px;top:1900.0px;font-size:26.5px;color:#000;font-weight:normal;">25 %</div><div class="a" style="left:2978px;top:1899px;width:32px;height:33px;background:#fff;border-radius:8px;box-shadow:0 0 0 1px #d0d0d0, 0 1px 2px rgba(0,0,0,.2)"></div><svg class="a" style="left:2984px;top:1909px;" width="20" height="14" viewBox="0 0 20 14"><path d="M3 3L10 10L17 3" fill="none" stroke="#1a1a1a" stroke-width="3" stroke-linecap="round" stroke-linejoin="round"/></svg>
</body></html>
